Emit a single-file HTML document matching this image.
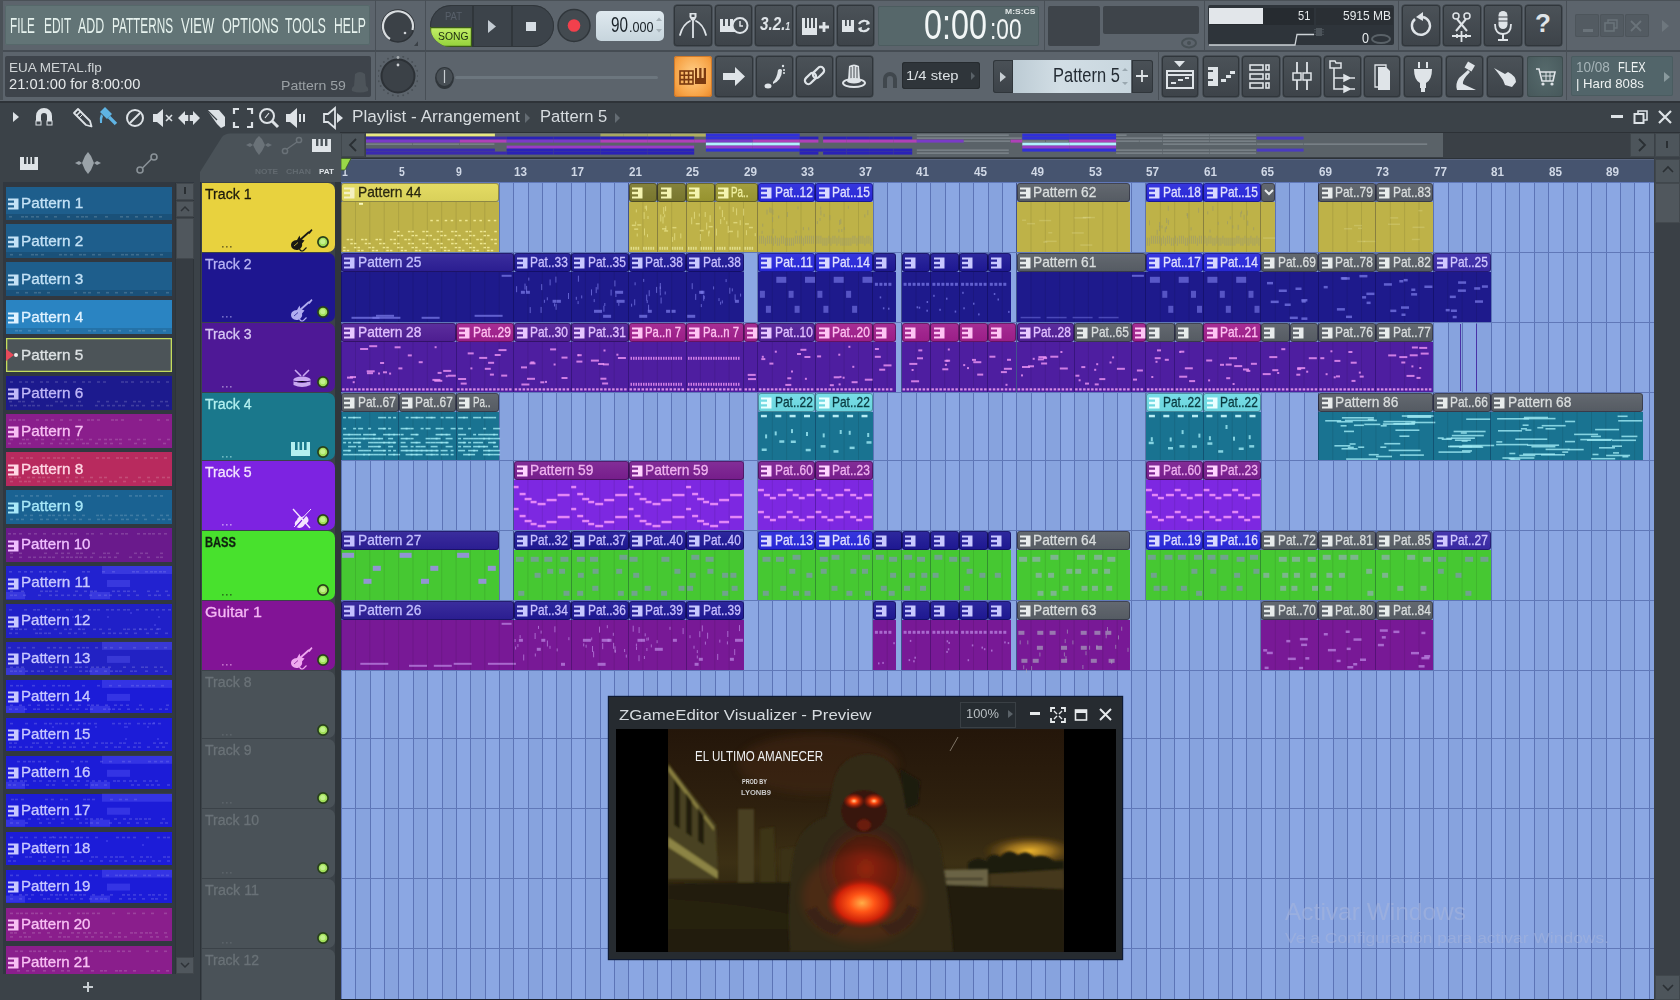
<!DOCTYPE html><html><head><meta charset="utf-8"><style>
html,body{margin:0;padding:0}
body{width:1680px;height:1000px;overflow:hidden;position:relative;background:#5c646c;font-family:"Liberation Sans",sans-serif}
div,svg{position:absolute;box-sizing:border-box}
.t{white-space:nowrap;transform-origin:0 0}
</style></head><body>
<div style="left:0.0px;top:0.0px;width:1680.0px;height:102.0px;background:#5c646c;"></div>
<div style="left:0.0px;top:50.0px;width:1680.0px;height:1.5px;background:#454c53;"></div>
<div style="left:0.0px;top:101.2px;width:1680.0px;height:1.6px;background:#2e3338;"></div>
<div style="left:0.0px;top:0.0px;width:1680.0px;height:1.0px;background:#4a5157;"></div>
<div style="left:375.0px;top:0.0px;width:1.2px;height:50.0px;background:#484f56;"></div>
<div style="left:425.0px;top:0.0px;width:1.2px;height:50.0px;background:#484f56;"></div>
<div style="left:1043.5px;top:0.0px;width:1.2px;height:50.0px;background:#484f56;"></div>
<div style="left:1204.0px;top:0.0px;width:1.2px;height:50.0px;background:#484f56;"></div>
<div style="left:1397.5px;top:0.0px;width:1.2px;height:50.0px;background:#484f56;"></div>
<div style="left:1565.5px;top:0.0px;width:1.2px;height:50.0px;background:#484f56;"></div>
<div style="left:375.0px;top:51.0px;width:1.2px;height:49.0px;background:#484f56;"></div>
<div style="left:425.0px;top:51.0px;width:1.2px;height:49.0px;background:#484f56;"></div>
<div style="left:1157.5px;top:51.0px;width:1.2px;height:49.0px;background:#484f56;"></div>
<div style="left:1565.5px;top:51.0px;width:1.2px;height:49.0px;background:#484f56;"></div>
<div style="left:0.0px;top:0.0px;width:3.0px;height:100.0px;background:#4a5157;"></div>
<div style="left:5.0px;top:5.0px;width:365.0px;height:40.0px;background:#627476;border-radius:2px;box-shadow:inset 0 0 0 1px #56686a;"></div>
<div class="t" style="left:10.2px;top:14.8px;font-size:21.74px;line-height:21.74px;color:#e6f2ee;transform:scaleX(0.540);">FILE</div>
<div class="t" style="left:43.8px;top:14.8px;font-size:21.74px;line-height:21.74px;color:#e6f2ee;transform:scaleX(0.550);">EDIT</div>
<div class="t" style="left:77.5px;top:14.8px;font-size:21.74px;line-height:21.74px;color:#e6f2ee;transform:scaleX(0.572);">ADD</div>
<div class="t" style="left:112.0px;top:14.8px;font-size:21.74px;line-height:21.74px;color:#e6f2ee;transform:scaleX(0.541);">PATTERNS</div>
<div class="t" style="left:180.5px;top:14.8px;font-size:21.74px;line-height:21.74px;color:#e6f2ee;transform:scaleX(0.598);">VIEW</div>
<div class="t" style="left:222.0px;top:14.8px;font-size:21.74px;line-height:21.74px;color:#e6f2ee;transform:scaleX(0.580);">OPTIONS</div>
<div class="t" style="left:285.0px;top:14.8px;font-size:21.74px;line-height:21.74px;color:#e6f2ee;transform:scaleX(0.559);">TOOLS</div>
<div class="t" style="left:333.8px;top:14.8px;font-size:21.74px;line-height:21.74px;color:#e6f2ee;transform:scaleX(0.559);">HELP</div>
<div style="left:5.0px;top:56.3px;width:365.5px;height:40.3px;background:#3e444b;border-radius:2px;"></div>
<div class="t" style="left:9.4px;top:60.5px;font-size:13.62px;line-height:13.62px;color:#d0d4d6;transform:scaleX(0.993);">EUA METAL.flp</div>
<div class="t" style="left:9.4px;top:78.0px;font-size:13.91px;line-height:13.91px;color:#e6e9ea;transform:scaleX(1.056);">21:01:00 for 8:00:00</div>
<div class="t" style="left:280.7px;top:78.7px;font-size:13.04px;line-height:13.04px;color:#9aa0a4;transform:scaleX(1.080);">Pattern 59</div>
<svg style="left:350px;top:70px" width="20" height="24"><path d="M5 4 Q10 0 15 4 L16 16 Q19 18 18 21 Q10 24 2 21 Q1 18 4 16 Z" fill="#4d545a"/></svg>
<svg style="left:378px;top:6px" width="40" height="40"><circle cx="20" cy="20" r="16" fill="#3b4147" stroke="#2e3338" stroke-width="1.5"/><path d="M 12 33 A 15 15 0 1 1 34.5 24" stroke="#d8dcdf" stroke-width="2.2" fill="none"/><circle cx="27" cy="27" r="1.3" fill="#cfd3d6"/><path d="M36 40 L41 34 L41 40 Z" fill="#3a4046"/></svg>
<svg style="left:378px;top:56px" width="40" height="42"><circle cx="40.0" cy="20.0" r="1" fill="#4a5157"/><circle cx="39.3" cy="25.2" r="1" fill="#4a5157"/><circle cx="37.3" cy="30.0" r="1" fill="#4a5157"/><circle cx="34.1" cy="34.1" r="1" fill="#4a5157"/><circle cx="30.0" cy="37.3" r="1" fill="#4a5157"/><circle cx="25.2" cy="39.3" r="1" fill="#4a5157"/><circle cx="20.0" cy="40.0" r="1" fill="#4a5157"/><circle cx="14.8" cy="39.3" r="1" fill="#4a5157"/><circle cx="10.0" cy="37.3" r="1" fill="#4a5157"/><circle cx="5.9" cy="34.1" r="1" fill="#4a5157"/><circle cx="2.7" cy="30.0" r="1" fill="#4a5157"/><circle cx="0.7" cy="25.2" r="1" fill="#4a5157"/><circle cx="0.0" cy="20.0" r="1" fill="#4a5157"/><circle cx="0.7" cy="14.8" r="1" fill="#4a5157"/><circle cx="2.7" cy="10.0" r="1" fill="#4a5157"/><circle cx="5.9" cy="5.9" r="1" fill="#4a5157"/><circle cx="10.0" cy="2.7" r="1" fill="#4a5157"/><circle cx="14.8" cy="0.7" r="1" fill="#4a5157"/><circle cx="20.0" cy="0.0" r="1" fill="#4a5157"/><circle cx="25.2" cy="0.7" r="1" fill="#4a5157"/><circle cx="30.0" cy="2.7" r="1" fill="#4a5157"/><circle cx="34.1" cy="5.9" r="1" fill="#4a5157"/><circle cx="37.3" cy="10.0" r="1" fill="#4a5157"/><circle cx="39.3" cy="14.8" r="1" fill="#4a5157"/><circle cx="20" cy="20" r="16.5" fill="#3b4147" stroke="#2c3136" stroke-width="2"/><circle cx="20" cy="9" r="1.4" fill="#cfd3d6"/><circle cx="20" cy="1.5" r="1.4" fill="#a8aeb2"/></svg>
<div style="left:430px;top:5px;width:124px;height:41.5px;border-radius:21px;background:#3c434a;box-shadow:inset 0 0 0 1px #30363b;overflow:hidden"><div style="left:0;top:21.5px;width:42px;height:20px;background:linear-gradient(#c6f06a,#92d23a);border-radius:0 0 0 4px;box-shadow:inset 0 0 0 1.2px #3a5a18"></div><div style="left:42px;top:0;width:1.5px;height:42px;background:#30363b"></div><div style="left:81px;top:0;width:1.5px;height:42px;background:#30363b"></div></div>
<div class="t" style="left:444.8px;top:10.9px;font-size:11.01px;line-height:11.01px;color:#58606a;transform:scaleX(0.859);">PAT</div>
<div class="t" style="left:437.8px;top:30.9px;font-size:10.72px;line-height:10.72px;color:#1c2a10;transform:scaleX(0.966);">SONG</div>
<svg style="left:486px;top:18px" width="12" height="17"><path d="M2 2 L10 8.5 L2 15 Z" fill="#c4ccd3"/></svg>
<div style="left:526.0px;top:21.7px;width:10.0px;height:9.5px;background:#d6dde3;"></div>
<svg style="left:556px;top:8px" width="36" height="36"><circle cx="18" cy="17.5" r="16" fill="#434a50" stroke="#30363b" stroke-width="1.5"/><circle cx="18" cy="17.5" r="6.3" fill="#f2404c"/></svg>
<div style="left:596.0px;top:10.5px;width:68.0px;height:30.0px;background:linear-gradient(#dfe9ef,#c7d5dd);border-radius:5px;"></div>
<div class="t" style="left:611.0px;top:13.8px;font-size:22.03px;line-height:22.03px;color:#1a2228;transform:scaleX(0.694);">90</div>
<div class="t" style="left:628.5px;top:20.2px;font-size:14.49px;line-height:14.49px;color:#1a2228;transform:scaleX(0.869);">.000</div>
<svg style="left:655px;top:16px" width="8" height="20"><path d="M1 5 L4 1.5 L7 5 Z M1 13 L4 16.5 L7 13 Z" fill="#a8b4bb"/></svg>
<div style="left:455.0px;top:75.8px;width:203.0px;height:3.0px;background:#6c767e;border-radius:2px;"></div>
<svg style="left:433px;top:66px" width="24" height="25"><ellipse cx="11.5" cy="12" rx="9.5" ry="11" fill="#30363b"/><ellipse cx="11.5" cy="11" rx="8" ry="9" fill="#474e54"/><line x1="11.5" y1="4" x2="11.5" y2="17" stroke="#c8ced2" stroke-width="1.2"/></svg>
<div style="left:674.2px;top:5.2px;width:37.7px;height:40.4px;background:linear-gradient(#4b5258,#3d4349);border-radius:3px;box-shadow:inset 0 0 0 1px #30363b, 0 0 0 0.5px #353b40;"></div>
<div style="left:715.4px;top:5.2px;width:36.3px;height:40.4px;background:linear-gradient(#4b5258,#3d4349);border-radius:3px;box-shadow:inset 0 0 0 1px #30363b, 0 0 0 0.5px #353b40;"></div>
<div style="left:755.4px;top:5.2px;width:37.3px;height:40.4px;background:linear-gradient(#4b5258,#3d4349);border-radius:3px;box-shadow:inset 0 0 0 1px #30363b, 0 0 0 0.5px #353b40;"></div>
<div style="left:796.4px;top:5.2px;width:37.3px;height:40.4px;background:linear-gradient(#4b5258,#3d4349);border-radius:3px;box-shadow:inset 0 0 0 1px #30363b, 0 0 0 0.5px #353b40;"></div>
<div style="left:837.2px;top:5.2px;width:36.7px;height:40.4px;background:linear-gradient(#4b5258,#3d4349);border-radius:3px;box-shadow:inset 0 0 0 1px #30363b, 0 0 0 0.5px #353b40;"></div>
<div style="left:1402.1px;top:5.2px;width:37.9px;height:40.4px;background:linear-gradient(#4b5258,#3d4349);border-radius:3px;box-shadow:inset 0 0 0 1px #30363b, 0 0 0 0.5px #353b40;"></div>
<div style="left:1443.3px;top:5.2px;width:37.4px;height:40.4px;background:linear-gradient(#4b5258,#3d4349);border-radius:3px;box-shadow:inset 0 0 0 1px #30363b, 0 0 0 0.5px #353b40;"></div>
<div style="left:1484.0px;top:5.2px;width:37.9px;height:40.4px;background:linear-gradient(#4b5258,#3d4349);border-radius:3px;box-shadow:inset 0 0 0 1px #30363b, 0 0 0 0.5px #353b40;"></div>
<div style="left:1525.3px;top:5.2px;width:36.3px;height:40.4px;background:linear-gradient(#4b5258,#3d4349);border-radius:3px;box-shadow:inset 0 0 0 1px #30363b, 0 0 0 0.5px #353b40;"></div>
<div style="left:674.0px;top:56.3px;width:38.0px;height:40.5px;background:radial-gradient(ellipse at 50% 45%,#ffd08a,#f7a244 70%,#e8862a);border-radius:3px;box-shadow:inset 0 0 0 1px #d07a2a;"></div>
<div style="left:715.4px;top:56.3px;width:37.3px;height:40.5px;background:linear-gradient(#4b5258,#3d4349);border-radius:3px;box-shadow:inset 0 0 0 1px #30363b, 0 0 0 0.5px #353b40;"></div>
<div style="left:756.0px;top:56.3px;width:36.7px;height:40.5px;background:linear-gradient(#4b5258,#3d4349);border-radius:3px;box-shadow:inset 0 0 0 1px #30363b, 0 0 0 0.5px #353b40;"></div>
<div style="left:796.0px;top:56.3px;width:36.6px;height:40.5px;background:linear-gradient(#4b5258,#3d4349);border-radius:3px;box-shadow:inset 0 0 0 1px #30363b, 0 0 0 0.5px #353b40;"></div>
<div style="left:836.0px;top:56.3px;width:36.8px;height:40.5px;background:linear-gradient(#4b5258,#3d4349);border-radius:3px;box-shadow:inset 0 0 0 1px #30363b, 0 0 0 0.5px #353b40;"></div>
<div style="left:1161.5px;top:56.3px;width:36.8px;height:40.5px;background:linear-gradient(#4b5258,#3d4349);border-radius:3px;box-shadow:inset 0 0 0 1px #30363b, 0 0 0 0.5px #353b40;"></div>
<div style="left:1202.5px;top:56.3px;width:36.0px;height:40.5px;background:linear-gradient(#4b5258,#3d4349);border-radius:3px;box-shadow:inset 0 0 0 1px #30363b, 0 0 0 0.5px #353b40;"></div>
<div style="left:1242.2px;top:56.3px;width:37.4px;height:40.5px;background:linear-gradient(#4b5258,#3d4349);border-radius:3px;box-shadow:inset 0 0 0 1px #30363b, 0 0 0 0.5px #353b40;"></div>
<div style="left:1283.3px;top:56.3px;width:37.4px;height:40.5px;background:linear-gradient(#4b5258,#3d4349);border-radius:3px;box-shadow:inset 0 0 0 1px #30363b, 0 0 0 0.5px #353b40;"></div>
<div style="left:1324.4px;top:56.3px;width:36.3px;height:40.5px;background:linear-gradient(#4b5258,#3d4349);border-radius:3px;box-shadow:inset 0 0 0 1px #30363b, 0 0 0 0.5px #353b40;"></div>
<div style="left:1364.4px;top:56.3px;width:36.0px;height:40.5px;background:linear-gradient(#4b5258,#3d4349);border-radius:3px;box-shadow:inset 0 0 0 1px #30363b, 0 0 0 0.5px #353b40;"></div>
<div style="left:1404.3px;top:56.3px;width:37.3px;height:40.5px;background:linear-gradient(#4b5258,#3d4349);border-radius:3px;box-shadow:inset 0 0 0 1px #30363b, 0 0 0 0.5px #353b40;"></div>
<div style="left:1445.6px;top:56.3px;width:37.3px;height:40.5px;background:linear-gradient(#4b5258,#3d4349);border-radius:3px;box-shadow:inset 0 0 0 1px #30363b, 0 0 0 0.5px #353b40;"></div>
<div style="left:1486.6px;top:56.3px;width:36.0px;height:40.5px;background:linear-gradient(#4b5258,#3d4349);border-radius:3px;box-shadow:inset 0 0 0 1px #30363b, 0 0 0 0.5px #353b40;"></div>
<div style="left:1527.3px;top:56.3px;width:35.3px;height:40.5px;background:radial-gradient(ellipse at 50% 40%,#566a6c,#46575a);border-radius:3px;box-shadow:inset 0 0 0 1px #3e4c4e;"></div>
<svg style="left:674px;top:5px" width="38" height="40"><path d="M6 30 Q9 19 16 16 M22 16 Q29 19 32 30" stroke="#dfe4e8" stroke-width="1.8" fill="none" stroke-linecap="round"/><path d="M19 14 L19 33" stroke="#dfe4e8" stroke-width="1.8"/><path d="M15.5 8 H22.5 V12 L20.5 15.5 H17.5 L15.5 12 Z" fill="#dfe4e8"/><rect x="17.5" y="9.5" width="3" height="2.5" fill="#444b51"/></svg>
<svg style="left:715px;top:5px" width="37" height="40"><path d="M5 14 H22 V27 H5 Z" fill="#dfe4e8"/><rect x="8" y="14" width="2" height="7" fill="#444b51"/><rect x="13" y="14" width="2" height="7" fill="#444b51"/><rect x="18" y="14" width="2" height="7" fill="#444b51"/><circle cx="25" cy="20.5" r="7.5" fill="#444b51" stroke="#dfe4e8" stroke-width="2"/><path d="M25 16 V21 H28" stroke="#dfe4e8" stroke-width="1.5" fill="none"/></svg>
<div class="t" style="left:760px;top:13.5px;font-size:19px;line-height:19px;color:#dfe4e8;font-style:italic;font-weight:bold;transform:scaleX(0.8)">3.2.<span style="font-size:11px">1</span></div>
<svg style="left:796px;top:5px" width="38" height="40"><path d="M6 13 H21 V30 H6 Z" fill="#dfe4e8"/><rect x="9" y="13" width="2" height="10" fill="#444b51"/><rect x="13" y="13" width="2" height="10" fill="#444b51"/><rect x="17" y="13" width="2" height="10" fill="#444b51"/><path d="M23 22 H33 M28 17 V27" stroke="#dfe4e8" stroke-width="2.8"/></svg>
<svg style="left:837px;top:5px" width="37" height="40"><path d="M5 15 H17 V27 H5 Z" fill="#dfe4e8"/><rect x="8" y="15" width="1.8" height="6" fill="#444b51"/><rect x="12" y="15" width="1.8" height="6" fill="#444b51"/><path d="M22 19 A6 6 0 0 1 32 18 M32 23 A6 6 0 0 1 22 24" stroke="#dfe4e8" stroke-width="2.2" fill="none"/><path d="M30 15 L33 19 L29 20 Z M24 27 L21 23 L25 22 Z" fill="#dfe4e8"/></svg>
<svg style="left:1402px;top:5px" width="38" height="40"><path d="M13 14 A9 9 0 1 0 21 12" stroke="#dfe4e8" stroke-width="2.4" fill="none"/><path d="M21 7 L14 12 L21 16 Z" fill="#dfe4e8"/></svg>
<svg style="left:1443px;top:5px" width="37" height="40"><circle cx="13" cy="11" r="3" stroke="#dfe4e8" stroke-width="1.5" fill="none"/><circle cx="24" cy="11" r="3" stroke="#dfe4e8" stroke-width="1.5" fill="none"/><path d="M14 14 L24 26 M23 14 L13 26" stroke="#dfe4e8" stroke-width="2"/><path d="M9 31 H28 M18.5 26 V37 M14 29 V33 M23 29 V33" stroke="#dfe4e8" stroke-width="1.8"/></svg>
<svg style="left:1484px;top:5px" width="38" height="40"><rect x="14.5" y="6" width="9" height="18" rx="4.5" fill="#dfe4e8"/><path d="M14 12 H24 M14 16 H24" stroke="#444b51" stroke-width="1"/><path d="M11 19 Q11 29 19 29 Q27 29 27 19" stroke="#dfe4e8" stroke-width="1.8" fill="none"/><path d="M19 29 V34 M14 35 H24" stroke="#dfe4e8" stroke-width="2"/></svg>
<div class="t" style="left:1535px;top:10px;font-size:26px;line-height:26px;color:#dfe4e8;font-weight:bold">?</div>
<svg style="left:674px;top:56px" width="38" height="41"><g fill="none" stroke="#7a3a10" stroke-width="1.6"><rect x="6" y="15" width="13" height="13"/><path d="M10.3 15 V28 M14.6 15 V28 M6 19.3 H19 M6 23.6 H19"/></g><path d="M21 12 H32 V28 H21 Z" fill="#7a3a10"/><rect x="23" y="12" width="2.2" height="10" fill="#fbc27a"/><rect x="27.5" y="12" width="2.2" height="10" fill="#fbc27a"/></svg>
<svg style="left:715px;top:56px" width="38" height="41"><path d="M8 17 H20 V11 L30 20.5 L20 30 V24 H8 Z" fill="#dfe4e8"/></svg>
<svg style="left:756px;top:56px" width="37" height="41"><ellipse cx="12" cy="30" rx="3.5" ry="2.5" fill="#dfe4e8"/><path d="M17 26 Q21 22 22 14 Q24 12 26 14 Q26 24 17 28 Z" fill="#dfe4e8"/><circle cx="27" cy="10" r="1.2" fill="#dfe4e8"/><circle cx="28" cy="14" r="1" fill="#dfe4e8"/><circle cx="28" cy="17" r="1" fill="#dfe4e8"/></svg>
<svg style="left:796px;top:56px" width="37" height="41"><g fill="none" stroke="#dfe4e8" stroke-width="2.2"><rect x="8" y="19" width="13" height="7" rx="3.5" transform="rotate(-45 14.5 22.5)"/><rect x="16" y="13" width="13" height="7" rx="3.5" transform="rotate(-45 22.5 16.5)"/></g></svg>
<svg style="left:836px;top:56px" width="37" height="41"><path d="M13 10 Q18 7 23 10 L24 24 L12 24 Z" fill="#dfe4e8"/><path d="M15 11 V23 M18 10 V23 M21 11 V23" stroke="#444b51" stroke-width="1"/><ellipse cx="18" cy="27" rx="11" ry="4" fill="none" stroke="#dfe4e8" stroke-width="2"/><ellipse cx="18" cy="25" rx="7" ry="2.5" fill="#dfe4e8"/></svg>
<svg style="left:1161px;top:56px" width="38" height="41"><path d="M13 5 H24 L18.5 11 Z" fill="#dfe4e8"/><rect x="6" y="15" width="26" height="17" fill="none" stroke="#dfe4e8" stroke-width="2"/><path d="M6 19 H32" stroke="#dfe4e8" stroke-width="2"/><path d="M10 27 H15 M17 24 H22 M24 22 H28" stroke="#dfe4e8" stroke-width="2"/></svg>
<svg style="left:1202px;top:56px" width="37" height="41"><path d="M6 11 H16 V30 H6 Z" fill="#dfe4e8"/><rect x="6" y="14" width="5" height="2" fill="#444b51"/><rect x="6" y="23" width="5" height="2" fill="#444b51"/><rect x="19" y="23" width="5" height="3" fill="#dfe4e8"/><rect x="24" y="19" width="5" height="3" fill="#dfe4e8"/><rect x="28" y="15" width="5" height="3" fill="#dfe4e8"/></svg>
<svg style="left:1242px;top:56px" width="37" height="41"><g fill="none" stroke="#dfe4e8" stroke-width="1.6"><rect x="8" y="9" width="13" height="5"/><rect x="8" y="18" width="13" height="5"/><rect x="8" y="27" width="13" height="5"/><rect x="24" y="9" width="3" height="5"/><rect x="24" y="18" width="3" height="5"/><rect x="24" y="27" width="3" height="5"/></g></svg>
<svg style="left:1283px;top:56px" width="37" height="41"><path d="M14 6 V34 M24 6 V34" stroke="#dfe4e8" stroke-width="1.8"/><rect x="10" y="17" width="8" height="7" fill="#444b51" stroke="#dfe4e8" stroke-width="1.5"/><rect x="20" y="17" width="8" height="7" fill="#444b51" stroke="#dfe4e8" stroke-width="1.5"/></svg>
<svg style="left:1324px;top:56px" width="37" height="41"><path d="M6 5 H11 L12 7 H17 V12 H6 Z" fill="none" stroke="#dfe4e8" stroke-width="1.5"/><path d="M10 12 V33 H20 M10 22 H20" stroke="#dfe4e8" stroke-width="1.6" fill="none"/><path d="M20 19 L26 22 L20 25 Z M20 30 L26 33 L20 36 Z M25 22 H31 M25 33 H31" fill="#dfe4e8" stroke="#dfe4e8" stroke-width="1.5"/></svg>
<svg style="left:1364px;top:56px" width="37" height="41"><path d="M11 9 H22 V31 H11 Z" fill="none" stroke="#dfe4e8" stroke-width="1.3"/><path d="M14 11 H22 L26 15 V34 H14 Z" fill="#dfe4e8"/></svg>
<svg style="left:1404px;top:56px" width="38" height="41"><path d="M15 6 V12 M23 6 V12" stroke="#dfe4e8" stroke-width="2"/><path d="M10 13 H28 Q28 24 22 27 V32 H16 V27 Q10 24 10 13 Z" fill="#dfe4e8"/><rect x="17" y="32" width="4" height="4" fill="#dfe4e8"/></svg>
<svg style="left:1445px;top:56px" width="38" height="41"><rect x="21" y="7" width="8" height="7" transform="rotate(30 25 10)" fill="#dfe4e8"/><path d="M23 14 L14 22 Q10 28 12 34 H31 L18 28 Q17 24 25 16 Z" fill="#dfe4e8"/></svg>
<svg style="left:1486px;top:56px" width="37" height="41"><path d="M8 12 L19 18 L22 16 Q30 20 30 26 L26 31 L19 29 L17 24 L12 17 Z" fill="#dfe4e8"/></svg>
<svg style="left:1527px;top:56px" width="36" height="41"><path d="M9 13 H12 L15 25 H26 L28 16 H13" fill="none" stroke="#dfe4e8" stroke-width="1.6"/><path d="M15 20 H27 M19 16 V25 M23 16 V25" stroke="#dfe4e8" stroke-width="1"/><circle cx="16" cy="28" r="1.6" fill="#dfe4e8"/><circle cx="25" cy="28" r="1.6" fill="#dfe4e8"/></svg>
<div style="left:878.0px;top:5.7px;width:161.0px;height:40.0px;background:#56676a;border-radius:2px;box-shadow:inset 0 0 0 1px #4c5c5f;"></div>
<div class="t" style="left:923.6px;top:3.6px;font-size:42.46px;line-height:42.46px;color:#f2f6f6;transform:scaleX(0.762);">0:00</div>
<div class="t" style="left:990.4px;top:14.9px;font-size:28.99px;line-height:28.99px;color:#f2f6f6;transform:scaleX(0.782);">:00</div>
<div class="t" style="left:1004.6px;top:8.0px;font-size:7.54px;line-height:7.54px;color:#e0e6e6;transform:scaleX(1.138);font-weight:bold;">M:S:CS</div>
<div style="left:1048.0px;top:5.5px;width:52.0px;height:40.0px;background:#3e444a;border-radius:2px;"></div>
<div style="left:1103.0px;top:5.5px;width:96.0px;height:28.0px;background:#3e444a;border-radius:2px;"></div>
<svg style="left:1180px;top:37px" width="18" height="12"><ellipse cx="9" cy="6" rx="7" ry="4.5" fill="none" stroke="#475055" stroke-width="2"/><circle cx="9" cy="6" r="2" fill="#475055"/></svg>
<div style="left:1208.0px;top:5.2px;width:186.0px;height:40.3px;background:#2e343a;border-radius:2px;"></div>
<div style="left:1209.5px;top:7.5px;width:104.0px;height:17.5px;background:#262b30;"></div>
<div style="left:1315.5px;top:7.5px;width:77.0px;height:17.5px;background:#2a2f34;"></div>
<div style="left:1209.4px;top:8.2px;width:53.6px;height:15.8px;background:#e2e6ea;"></div>
<div class="t" style="left:1298.4px;top:9.1px;font-size:13.48px;line-height:13.48px;color:#e6eaec;transform:scaleX(0.821);">51</div>
<div class="t" style="left:1342.8px;top:9.1px;font-size:13.48px;line-height:13.48px;color:#e6eaec;transform:scaleX(0.890);">5915 MB</div>
<div class="t" style="left:1361.9px;top:29.5px;font-size:15.36px;line-height:15.36px;color:#e6eaec;transform:scaleX(0.819);">0</div>
<svg style="left:1208px;top:25px" width="190" height="21"><polyline points="1,20 87,20 89,9.5 106,9.5" fill="none" stroke="#cdd2d6" stroke-width="1.3"/><rect x="108" y="3" width="6" height="8" fill="#4d545a"/><path d="M106 4.5 H116 M106 7 H116 M106 9.5 H116" stroke="#4d545a" stroke-width="0.8"/><ellipse cx="173" cy="14" rx="9" ry="4" fill="none" stroke="#5a6268" stroke-width="2"/></svg>
<div style="left:1575.2px;top:14.4px;width:23.4px;height:23.0px;background:#535b62;border-radius:2px;box-shadow:inset 0 0 0 1px #4d555b;"></div>
<div style="left:1599.6px;top:14.4px;width:24.1px;height:23.0px;background:#535b62;border-radius:2px;box-shadow:inset 0 0 0 1px #4d555b;"></div>
<div style="left:1624.7px;top:14.4px;width:24.3px;height:23.0px;background:#535b62;border-radius:2px;box-shadow:inset 0 0 0 1px #4d555b;"></div>
<div style="left:1583.0px;top:29.0px;width:10.0px;height:2.5px;background:#6a737a;"></div>
<svg style="left:1603px;top:18px" width="16" height="16"><rect x="2" y="5" width="9" height="8" fill="none" stroke="#6a737a" stroke-width="1.6"/><path d="M5 5 V2 H14 V10 H11" fill="none" stroke="#6a737a" stroke-width="1.4"/></svg>
<svg style="left:1628px;top:18px" width="16" height="16"><path d="M3 3 L13 13 M13 3 L3 13" stroke="#6a737a" stroke-width="1.8"/></svg>
<svg style="left:1660px;top:18px" width="12" height="16"><path d="M2 2 L9 8 L2 14 Z" fill="#6e777e"/></svg>
<svg style="left:880px;top:70px" width="20" height="20"><path d="M3 18 V9 A7 7 0 0 1 17 9 V18 H13 V9 A3 3 0 0 0 7 9 V18 Z" fill="#40474d"/></svg>
<div style="left:902.4px;top:62.3px;width:78.0px;height:26.7px;background:#2f353a;border-radius:3px;box-shadow:inset 0 0 0 1px #262b2f;"></div>
<div class="t" style="left:906.4px;top:68.8px;font-size:13.33px;line-height:13.33px;color:#dde2e5;transform:scaleX(1.109);">1/4 step</div>
<svg style="left:969px;top:69px" width="8" height="14"><path d="M2 3 L6 7 L2 11 Z" fill="#5a6268"/></svg>
<div style="left:992.5px;top:60.3px;width:20.2px;height:33.2px;background:linear-gradient(#4a5157,#3c4248);border-radius:3px 0 0 3px;box-shadow:inset 0 0 0 1px #30363b;"></div>
<svg style="left:997px;top:69px" width="12" height="16"><path d="M3 3 L9 8 L3 13 Z" fill="#c8cfd4"/></svg>
<div style="left:1012.7px;top:60.3px;width:118.8px;height:33.2px;background:linear-gradient(90deg,#bccbd4,#d2dee5 40%,#c8d6de);"></div>
<div class="t" style="left:1053.2px;top:64.6px;font-size:20.58px;line-height:20.58px;color:#242c34;transform:scaleX(0.800);">Pattern 5</div>
<svg style="left:1121px;top:66px" width="8" height="22"><path d="M1 5 L4 2 L7 5 Z M1 16 L4 19 L7 16 Z" fill="#9aa8b0"/></svg>
<div style="left:1131.5px;top:60.3px;width:21.3px;height:33.2px;background:linear-gradient(#4a5157,#3c4248);border-radius:0 3px 3px 0;box-shadow:inset 0 0 0 1px #30363b;"></div>
<svg style="left:1134px;top:68px" width="16" height="16"><path d="M8 2 V14 M2 8 H14" stroke="#dfe4e7" stroke-width="1.8"/></svg>
<div style="left:1571.4px;top:56.3px;width:102.0px;height:40.1px;background:#52656a;border-radius:2px;box-shadow:inset 0 0 0 1px #4a5c60;"></div>
<div class="t" style="left:1575.7px;top:60.2px;font-size:14.06px;line-height:14.06px;color:#a6b4b8;transform:scaleX(0.964);">10/08</div>
<div class="t" style="left:1618.0px;top:60.2px;font-size:14.06px;line-height:14.06px;color:#f0f4f4;transform:scaleX(0.788);">FLEX</div>
<div class="t" style="left:1575.7px;top:77.3px;font-size:13.19px;line-height:13.19px;color:#eef2f2;transform:scaleX(0.998);">| Hard 808s</div>
<svg style="left:1662px;top:70px" width="10" height="14"><path d="M2 2 L8 7 L2 12 Z" fill="#8a9a9e"/></svg>
<div style="left:0.0px;top:102.8px;width:1680.0px;height:897.2px;background:#3b4248;"></div>
<div style="left:340.0px;top:132.0px;width:1340.0px;height:1.0px;background:#2c3136;"></div>
<svg style="left:10px;top:108px" width="12" height="18"><path d="M3 4 L9 9 L3 14 Z" fill="#dde2e6"/></svg>
<svg style="left:33px;top:106px" width="22" height="22"><path d="M3 19 V10 A8 8 0 0 1 19 10 V19 H14 V10 A3 3 0 0 0 8 10 V19 Z" fill="#dde2e6"/><rect x="3" y="15" width="5" height="4" fill="#3b4248" stroke="#dde2e6" stroke-width="1"/><rect x="14" y="15" width="5" height="4" fill="#3b4248" stroke="#dde2e6" stroke-width="1"/></svg>
<svg style="left:72px;top:107px" width="22" height="22"><path d="M2 6 L6 2 L18 14 L19.5 19.5 L14 18 Z" fill="none" stroke="#dde2e6" stroke-width="1.8" stroke-linejoin="round"/><path d="M4.5 8.5 L8.5 4.5" stroke="#dde2e6" stroke-width="1.6"/><path d="M7 11 L11 7" stroke="#dde2e6" stroke-width="1"/></svg>
<svg style="left:97px;top:106px" width="24" height="24"><path d="M3 6 L8 1 L15 8 L10 13 Z" fill="#5fb4e4"/><path d="M4 8 Q2 12 3 17 L5 17 Q5 12 6 10 Z" fill="#5fb4e4"/><path d="M12 11 L19 18" stroke="#5fb4e4" stroke-width="3.2"/><circle cx="19.5" cy="19.5" r="1.3" fill="#3b4248"/></svg>
<svg style="left:124px;top:107px" width="22" height="22"><circle cx="11" cy="11" r="8" fill="none" stroke="#dde2e6" stroke-width="2"/><path d="M6 16 L16 6" stroke="#dde2e6" stroke-width="2"/></svg>
<svg style="left:151px;top:106px" width="24" height="24"><path d="M2 8 H6 L12 3 V21 L6 16 H2 Z" fill="#dde2e6"/><path d="M15 9 L21 15 M21 9 L15 15" stroke="#dde2e6" stroke-width="1.6"/></svg>
<svg style="left:177px;top:107px" width="24" height="22"><path d="M1 11 L8 4 V18 Z M23 11 L16 4 V18 Z" fill="#dde2e6"/><path d="M8 8 H16 V14 H8 Z" fill="#dde2e6"/><path d="M12 4 V18" stroke="#3b4248" stroke-width="1.5"/></svg>
<svg style="left:205px;top:107px" width="22" height="22"><path d="M2 3 L14 3 L20 10 L20 19 L16 21 L12 17 Z" fill="#dde2e6"/><path d="M2 3 L12 13" stroke="#3b4248" stroke-width="1.2"/></svg>
<svg style="left:232px;top:107px" width="22" height="22"><path d="M2 7 V2 H7 M15 2 H20 V7 M20 15 V20 H15 M7 20 H2 V15" fill="none" stroke="#dde2e6" stroke-width="2.2"/></svg>
<svg style="left:258px;top:107px" width="22" height="22"><circle cx="9" cy="9" r="7" fill="none" stroke="#dde2e6" stroke-width="2"/><path d="M14 14 L20 20" stroke="#dde2e6" stroke-width="3"/><path d="M7 11 L11 6" stroke="#dde2e6" stroke-width="1.2"/></svg>
<svg style="left:285px;top:106px" width="22" height="24"><path d="M1 8 H5 L12 2 V22 L5 16 H1 Z" fill="#dde2e6"/><path d="M15 8 V16 M19 8 V16" stroke="#dde2e6" stroke-width="2"/></svg>
<svg style="left:321px;top:106px" width="24" height="24"><path d="M3 8 H7 L14 2 V22 L7 16 H3 Z" fill="none" stroke="#dde2e6" stroke-width="1.8"/><path d="M16 7 L22 12 L16 17 Z" fill="#dde2e6"/></svg>
<div class="t" style="left:352.4px;top:108.8px;font-size:15.65px;line-height:15.65px;color:#d8dde0;transform:scaleX(1.097);">Playlist - Arrangement</div>
<svg style="left:524px;top:111px" width="8" height="14"><path d="M1 2 L6 7 L1 12 Z" fill="#646c73"/></svg>
<div class="t" style="left:540.2px;top:108.8px;font-size:15.65px;line-height:15.65px;color:#d8dde0;transform:scaleX(1.058);">Pattern 5</div>
<svg style="left:614px;top:111px" width="8" height="14"><path d="M1 2 L6 7 L1 12 Z" fill="#646c73"/></svg>
<div style="left:1611.0px;top:115.0px;width:12.0px;height:3.0px;background:#dde2e6;"></div>
<svg style="left:1633px;top:109px" width="16" height="16"><rect x="1.5" y="5" width="9" height="9" fill="none" stroke="#dde2e6" stroke-width="2"/><path d="M5 5 V2 H14 V11 H11" fill="none" stroke="#dde2e6" stroke-width="1.6"/></svg>
<svg style="left:1657px;top:109px" width="16" height="16"><path d="M2 2 L14 14 M14 2 L2 14" stroke="#dde2e6" stroke-width="2.2"/></svg>
<svg style="left:18px;top:154px" width="22" height="18"><path d="M2 3 H20 V16 H2 Z" fill="#dfe4e8"/><rect x="6" y="3" width="2.4" height="7" fill="#3b4248"/><rect x="10" y="3" width="2.4" height="7" fill="#3b4248"/><rect x="14" y="3" width="2.4" height="7" fill="#3b4248"/></svg>
<svg style="left:74px;top:151px" width="28" height="24"><path d="M1 12 L5 10 L8 12 L11 5 L14 1 L17 5 L20 12 L23 10 L27 12 L23 14 L20 12 L17 19 L14 23 L11 19 L8 12 L5 14 Z" fill="#9aa2a8"/></svg>
<svg style="left:135px;top:152px" width="24" height="24"><circle cx="5" cy="18" r="3" fill="none" stroke="#8a9298" stroke-width="1.6"/><circle cx="19" cy="5" r="3" fill="none" stroke="#8a9298" stroke-width="1.6"/><path d="M7.5 16 L16.5 7" stroke="#8a9298" stroke-width="1.6"/></svg>
<svg style="left:196px;top:132px" width="145" height="51"><path d="M4 50 L4 40 L26 5 Q29 1.5 34 1.5 L145 1.5 L145 50 Z" fill="#4a5258"/></svg>
<svg style="left:245px;top:136px" width="28" height="20"><path d="M1 9 L5 7 L8 9 L11 3 L14 0 L17 3 L20 9 L23 7 L27 9 L23 11 L20 9 L17 15 L14 19 L11 15 L8 9 L5 11 Z" fill="#6a7278"/></svg>
<svg style="left:281px;top:136px" width="22" height="20"><circle cx="4" cy="15" r="2.6" fill="none" stroke="#6a7278" stroke-width="1.5"/><circle cx="18" cy="4" r="2.6" fill="none" stroke="#6a7278" stroke-width="1.5"/><path d="M6 13 L16 6" stroke="#6a7278" stroke-width="1.5"/></svg>
<svg style="left:311px;top:137px" width="22" height="17"><path d="M1 2 H20 V15 H1 Z" fill="#dfe4e8"/><rect x="5" y="2" width="2.4" height="7" fill="#4a5258"/><rect x="9.5" y="2" width="2.4" height="7" fill="#4a5258"/><rect x="14" y="2" width="2.4" height="7" fill="#4a5258"/></svg>
<div class="t" style="left:254.6px;top:167.6px;font-size:7.54px;line-height:7.54px;color:#626a70;transform:scaleX(1.099);font-weight:bold;">NOTE</div>
<div class="t" style="left:285.6px;top:167.6px;font-size:7.54px;line-height:7.54px;color:#626a70;transform:scaleX(1.148);font-weight:bold;">CHAN</div>
<div class="t" style="left:318.6px;top:167.6px;font-size:7.54px;line-height:7.54px;color:#dfe4e8;transform:scaleX(1.075);font-weight:bold;">PAT</div>
<div style="left:3.0px;top:182.0px;width:193.0px;height:793.0px;background:#313840;"></div>
<div style="left:194.0px;top:182.0px;width:8.0px;height:818.0px;background:#3b4248;"></div>
<div style="left:200.0px;top:182.0px;width:1.2px;height:818.0px;background:#2c3237;"></div>
<div style="left:6.0px;top:186.5px;width:166.0px;height:33.5px;background:#1e5e8c;"></div>
<div style="left:6.0px;top:214.0px;width:166.0px;height:6.0px;background:rgba(0,0,0,0.13);"></div>
<svg style="left:0;top:0" width="180" height="1000"><g fill="rgba(255,255,255,0.16)"><rect x="9" y="216.0" width="3" height="1.6"/><rect x="21" y="216.0" width="3" height="1.6"/><rect x="25" y="216.0" width="3" height="1.6"/><rect x="31" y="216.0" width="3" height="1.6"/><rect x="36" y="216.0" width="3" height="1.6"/><rect x="45" y="216.0" width="3" height="1.6"/><rect x="54" y="216.0" width="3" height="1.6"/><rect x="67" y="216.0" width="3" height="1.6"/><rect x="76" y="216.0" width="3" height="1.6"/><rect x="81" y="216.0" width="3" height="1.6"/><rect x="85" y="216.0" width="3" height="1.6"/><rect x="94" y="216.0" width="3" height="1.6"/><rect x="105" y="216.0" width="3" height="1.6"/><rect x="120" y="216.0" width="3" height="1.6"/><rect x="126" y="216.0" width="3" height="1.6"/><rect x="135" y="216.0" width="3" height="1.6"/><rect x="144" y="216.0" width="3" height="1.6"/><rect x="150" y="216.0" width="3" height="1.6"/><rect x="159" y="216.0" width="3" height="1.6"/></g><g fill="rgba(110,110,255,0.3)"></g></svg>
<svg style="left:7.9px;top:198.0px" width="11" height="12"><path d="M0 0.5 H10.5 V11.5 H0 V9.5 H6 V7.2 H0 V4.8 H6 V2.5 H0 Z" fill="#c4e2f6"/></svg>
<div class="t" style="left:21.3px;top:195.8px;font-size:14.49px;line-height:14.49px;color:#c4e2f6;transform:scaleX(1.058);-webkit-text-stroke:0.3px currentColor;">Pattern 1</div>
<div style="left:6.0px;top:224.4px;width:166.0px;height:33.5px;background:#1e5e8c;"></div>
<div style="left:6.0px;top:251.9px;width:166.0px;height:6.0px;background:rgba(0,0,0,0.13);"></div>
<svg style="left:0;top:0" width="180" height="1000"><g fill="rgba(255,255,255,0.16)"><rect x="10" y="253.9" width="3" height="1.6"/><rect x="19" y="253.9" width="3" height="1.6"/><rect x="31" y="253.9" width="3" height="1.6"/><rect x="35" y="253.9" width="3" height="1.6"/><rect x="41" y="253.9" width="3" height="1.6"/><rect x="59" y="253.9" width="3" height="1.6"/><rect x="64" y="253.9" width="3" height="1.6"/><rect x="70" y="253.9" width="3" height="1.6"/><rect x="79" y="253.9" width="3" height="1.6"/><rect x="83" y="253.9" width="3" height="1.6"/><rect x="92" y="253.9" width="3" height="1.6"/><rect x="98" y="253.9" width="3" height="1.6"/><rect x="112" y="253.9" width="3" height="1.6"/><rect x="121" y="253.9" width="3" height="1.6"/><rect x="125" y="253.9" width="3" height="1.6"/><rect x="131" y="253.9" width="3" height="1.6"/><rect x="136" y="253.9" width="3" height="1.6"/><rect x="145" y="253.9" width="3" height="1.6"/><rect x="151" y="253.9" width="3" height="1.6"/><rect x="160" y="253.9" width="3" height="1.6"/></g><g fill="rgba(110,110,255,0.3)"></g></svg>
<svg style="left:7.9px;top:235.9px" width="11" height="12"><path d="M0 0.5 H10.5 V11.5 H0 V9.5 H6 V7.2 H0 V4.8 H6 V2.5 H0 Z" fill="#c4e2f6"/></svg>
<div class="t" style="left:21.3px;top:233.8px;font-size:14.49px;line-height:14.49px;color:#c4e2f6;transform:scaleX(1.058);-webkit-text-stroke:0.3px currentColor;">Pattern 2</div>
<div style="left:6.0px;top:262.4px;width:166.0px;height:33.5px;background:#1e5e8c;"></div>
<div style="left:6.0px;top:289.9px;width:166.0px;height:6.0px;background:rgba(0,0,0,0.13);"></div>
<svg style="left:0;top:0" width="180" height="1000"><g fill="rgba(255,255,255,0.16)"><rect x="16" y="291.9" width="3" height="1.6"/><rect x="25" y="291.9" width="3" height="1.6"/><rect x="34" y="291.9" width="3" height="1.6"/><rect x="38" y="291.9" width="3" height="1.6"/><rect x="47" y="291.9" width="3" height="1.6"/><rect x="74" y="291.9" width="3" height="1.6"/><rect x="83" y="291.9" width="3" height="1.6"/><rect x="88" y="291.9" width="3" height="1.6"/><rect x="97" y="291.9" width="3" height="1.6"/><rect x="106" y="291.9" width="3" height="1.6"/><rect x="115" y="291.9" width="3" height="1.6"/><rect x="124" y="291.9" width="3" height="1.6"/><rect x="130" y="291.9" width="3" height="1.6"/><rect x="145" y="291.9" width="3" height="1.6"/><rect x="154" y="291.9" width="3" height="1.6"/><rect x="166" y="291.9" width="3" height="1.6"/></g><g fill="rgba(110,110,255,0.3)"></g></svg>
<svg style="left:7.9px;top:273.9px" width="11" height="12"><path d="M0 0.5 H10.5 V11.5 H0 V9.5 H6 V7.2 H0 V4.8 H6 V2.5 H0 Z" fill="#c4e2f6"/></svg>
<div class="t" style="left:21.3px;top:271.7px;font-size:14.49px;line-height:14.49px;color:#c4e2f6;transform:scaleX(1.058);-webkit-text-stroke:0.3px currentColor;">Pattern 3</div>
<div style="left:6.0px;top:300.4px;width:166.0px;height:33.5px;background:#2a84c2;"></div>
<div style="left:6.0px;top:327.9px;width:166.0px;height:6.0px;background:rgba(0,0,0,0.13);"></div>
<svg style="left:0;top:0" width="180" height="1000"><g fill="rgba(255,255,255,0.16)"><rect x="15" y="329.9" width="3" height="1.6"/><rect x="19" y="329.9" width="3" height="1.6"/><rect x="28" y="329.9" width="3" height="1.6"/><rect x="37" y="329.9" width="3" height="1.6"/><rect x="48" y="329.9" width="3" height="1.6"/><rect x="52" y="329.9" width="3" height="1.6"/><rect x="66" y="329.9" width="3" height="1.6"/><rect x="88" y="329.9" width="3" height="1.6"/><rect x="93" y="329.9" width="3" height="1.6"/><rect x="103" y="329.9" width="3" height="1.6"/><rect x="109" y="329.9" width="3" height="1.6"/><rect x="118" y="329.9" width="3" height="1.6"/><rect x="129" y="329.9" width="3" height="1.6"/><rect x="138" y="329.9" width="3" height="1.6"/><rect x="142" y="329.9" width="3" height="1.6"/><rect x="151" y="329.9" width="3" height="1.6"/><rect x="163" y="329.9" width="3" height="1.6"/></g><g fill="rgba(110,110,255,0.3)"></g></svg>
<svg style="left:7.9px;top:311.9px" width="11" height="12"><path d="M0 0.5 H10.5 V11.5 H0 V9.5 H6 V7.2 H0 V4.8 H6 V2.5 H0 Z" fill="#e0f2ff"/></svg>
<div class="t" style="left:21.3px;top:309.7px;font-size:14.49px;line-height:14.49px;color:#e0f2ff;transform:scaleX(1.058);-webkit-text-stroke:0.3px currentColor;">Pattern 4</div>
<div style="left:6.0px;top:338.3px;width:166.0px;height:33.5px;background:#4c5458;box-shadow:inset 0 0 0 1.3px #c4dc5c;"></div>
<svg style="left:3px;top:347.3px" width="16" height="16"><path d="M3 2 L11 8 L3 14 Z" fill="#e84a5a"/><circle cx="13" cy="8" r="2" fill="#f0f0f0"/></svg>
<div class="t" style="left:21.3px;top:347.6px;font-size:14.49px;line-height:14.49px;color:#dde2e4;transform:scaleX(1.058);-webkit-text-stroke:0.3px currentColor;">Pattern 5</div>
<div style="left:6.0px;top:376.2px;width:166.0px;height:33.5px;background:#1c1a8e;"></div>
<svg style="left:0;top:0" width="180" height="1000"><g fill="rgba(255,255,255,0.16)"><rect x="10" y="381.2" width="3" height="1.6"/><rect x="19" y="381.2" width="3" height="1.6"/><rect x="25" y="381.2" width="3" height="1.6"/><rect x="31" y="381.2" width="3" height="1.6"/><rect x="40" y="381.2" width="3" height="1.6"/><rect x="46" y="381.2" width="3" height="1.6"/><rect x="55" y="381.2" width="3" height="1.6"/><rect x="64" y="381.2" width="3" height="1.6"/><rect x="73" y="381.2" width="3" height="1.6"/><rect x="82" y="381.2" width="3" height="1.6"/><rect x="88" y="381.2" width="3" height="1.6"/><rect x="97" y="381.2" width="3" height="1.6"/><rect x="103" y="381.2" width="3" height="1.6"/><rect x="121" y="381.2" width="3" height="1.6"/><rect x="125" y="381.2" width="3" height="1.6"/><rect x="131" y="381.2" width="3" height="1.6"/><rect x="140" y="381.2" width="3" height="1.6"/><rect x="146" y="381.2" width="3" height="1.6"/><rect x="151" y="381.2" width="3" height="1.6"/><rect x="157" y="381.2" width="3" height="1.6"/><rect x="166" y="381.2" width="3" height="1.6"/><rect x="9" y="400.8" width="3" height="1.6"/><rect x="18" y="400.8" width="3" height="1.6"/><rect x="22" y="400.8" width="3" height="1.6"/><rect x="31" y="400.8" width="3" height="1.6"/><rect x="55" y="400.8" width="3" height="1.6"/><rect x="60" y="400.8" width="3" height="1.6"/><rect x="78" y="400.8" width="3" height="1.6"/><rect x="97" y="400.8" width="3" height="1.6"/><rect x="106" y="400.8" width="3" height="1.6"/><rect x="115" y="400.8" width="3" height="1.6"/><rect x="124" y="400.8" width="3" height="1.6"/><rect x="133" y="400.8" width="3" height="1.6"/><rect x="138" y="400.8" width="3" height="1.6"/><rect x="151" y="400.8" width="3" height="1.6"/><rect x="160" y="400.8" width="3" height="1.6"/><rect x="165" y="400.8" width="3" height="1.6"/><rect x="10" y="404.8" width="3" height="1.6"/><rect x="14" y="404.8" width="3" height="1.6"/><rect x="23" y="404.8" width="3" height="1.6"/><rect x="28" y="404.8" width="3" height="1.6"/><rect x="32" y="404.8" width="3" height="1.6"/><rect x="37" y="404.8" width="3" height="1.6"/><rect x="46" y="404.8" width="3" height="1.6"/><rect x="50" y="404.8" width="3" height="1.6"/><rect x="64" y="404.8" width="3" height="1.6"/><rect x="70" y="404.8" width="3" height="1.6"/><rect x="76" y="404.8" width="3" height="1.6"/><rect x="80" y="404.8" width="3" height="1.6"/><rect x="95" y="404.8" width="3" height="1.6"/><rect x="101" y="404.8" width="3" height="1.6"/><rect x="107" y="404.8" width="3" height="1.6"/><rect x="112" y="404.8" width="3" height="1.6"/><rect x="118" y="404.8" width="3" height="1.6"/><rect x="122" y="404.8" width="3" height="1.6"/><rect x="131" y="404.8" width="3" height="1.6"/><rect x="136" y="404.8" width="3" height="1.6"/><rect x="142" y="404.8" width="3" height="1.6"/><rect x="151" y="404.8" width="3" height="1.6"/><rect x="157" y="404.8" width="3" height="1.6"/><rect x="166" y="404.8" width="3" height="1.6"/></g><g fill="rgba(110,110,255,0.3)"></g></svg>
<svg style="left:7.9px;top:387.8px" width="11" height="12"><path d="M0 0.5 H10.5 V11.5 H0 V9.5 H6 V7.2 H0 V4.8 H6 V2.5 H0 Z" fill="#c0b8f8"/></svg>
<div class="t" style="left:21.3px;top:385.6px;font-size:14.49px;line-height:14.49px;color:#c0b8f8;transform:scaleX(1.058);-webkit-text-stroke:0.3px currentColor;">Pattern 6</div>
<div style="left:6.0px;top:414.2px;width:166.0px;height:33.5px;background:#8a1e8c;"></div>
<svg style="left:0;top:0" width="180" height="1000"><g fill="rgba(255,255,255,0.16)"><rect x="9" y="419.2" width="3" height="1.6"/><rect x="13" y="419.2" width="3" height="1.6"/><rect x="18" y="419.2" width="3" height="1.6"/><rect x="22" y="419.2" width="3" height="1.6"/><rect x="36" y="419.2" width="3" height="1.6"/><rect x="45" y="419.2" width="3" height="1.6"/><rect x="51" y="419.2" width="3" height="1.6"/><rect x="60" y="419.2" width="3" height="1.6"/><rect x="69" y="419.2" width="3" height="1.6"/><rect x="78" y="419.2" width="3" height="1.6"/><rect x="87" y="419.2" width="3" height="1.6"/><rect x="91" y="419.2" width="3" height="1.6"/><rect x="97" y="419.2" width="3" height="1.6"/><rect x="111" y="419.2" width="3" height="1.6"/><rect x="115" y="419.2" width="3" height="1.6"/><rect x="121" y="419.2" width="3" height="1.6"/><rect x="139" y="419.2" width="3" height="1.6"/><rect x="157" y="419.2" width="3" height="1.6"/><rect x="166" y="419.2" width="3" height="1.6"/><rect x="10" y="438.7" width="3" height="1.6"/><rect x="22" y="438.7" width="3" height="1.6"/><rect x="26" y="438.7" width="3" height="1.6"/><rect x="35" y="438.7" width="3" height="1.6"/><rect x="41" y="438.7" width="3" height="1.6"/><rect x="52" y="438.7" width="3" height="1.6"/><rect x="61" y="438.7" width="3" height="1.6"/><rect x="67" y="438.7" width="3" height="1.6"/><rect x="76" y="438.7" width="3" height="1.6"/><rect x="80" y="438.7" width="3" height="1.6"/><rect x="89" y="438.7" width="3" height="1.6"/><rect x="98" y="438.7" width="3" height="1.6"/><rect x="104" y="438.7" width="3" height="1.6"/><rect x="109" y="438.7" width="3" height="1.6"/><rect x="115" y="438.7" width="3" height="1.6"/><rect x="119" y="438.7" width="3" height="1.6"/><rect x="128" y="438.7" width="3" height="1.6"/><rect x="137" y="438.7" width="3" height="1.6"/><rect x="143" y="438.7" width="3" height="1.6"/><rect x="158" y="438.7" width="3" height="1.6"/><rect x="167" y="438.7" width="3" height="1.6"/><rect x="8" y="442.7" width="3" height="1.6"/><rect x="19" y="442.7" width="3" height="1.6"/><rect x="23" y="442.7" width="3" height="1.6"/><rect x="28" y="442.7" width="3" height="1.6"/><rect x="41" y="442.7" width="3" height="1.6"/><rect x="50" y="442.7" width="3" height="1.6"/><rect x="59" y="442.7" width="3" height="1.6"/><rect x="65" y="442.7" width="3" height="1.6"/><rect x="71" y="442.7" width="3" height="1.6"/><rect x="82" y="442.7" width="3" height="1.6"/><rect x="86" y="442.7" width="3" height="1.6"/><rect x="95" y="442.7" width="3" height="1.6"/><rect x="104" y="442.7" width="3" height="1.6"/><rect x="110" y="442.7" width="3" height="1.6"/><rect x="119" y="442.7" width="3" height="1.6"/><rect x="134" y="442.7" width="3" height="1.6"/><rect x="143" y="442.7" width="3" height="1.6"/><rect x="163" y="442.7" width="3" height="1.6"/></g><g fill="rgba(110,110,255,0.3)"></g></svg>
<svg style="left:7.9px;top:425.7px" width="11" height="12"><path d="M0 0.5 H10.5 V11.5 H0 V9.5 H6 V7.2 H0 V4.8 H6 V2.5 H0 Z" fill="#f8c0f4"/></svg>
<div class="t" style="left:21.3px;top:423.5px;font-size:14.49px;line-height:14.49px;color:#f8c0f4;transform:scaleX(1.058);-webkit-text-stroke:0.3px currentColor;">Pattern 7</div>
<div style="left:6.0px;top:452.2px;width:166.0px;height:33.5px;background:#b82a5e;"></div>
<svg style="left:0;top:0" width="180" height="1000"><g fill="rgba(255,255,255,0.16)"><rect x="11" y="457.2" width="3" height="1.6"/><rect x="20" y="457.2" width="3" height="1.6"/><rect x="26" y="457.2" width="3" height="1.6"/><rect x="30" y="457.2" width="3" height="1.6"/><rect x="42" y="457.2" width="3" height="1.6"/><rect x="47" y="457.2" width="3" height="1.6"/><rect x="53" y="457.2" width="3" height="1.6"/><rect x="57" y="457.2" width="3" height="1.6"/><rect x="62" y="457.2" width="3" height="1.6"/><rect x="71" y="457.2" width="3" height="1.6"/><rect x="77" y="457.2" width="3" height="1.6"/><rect x="96" y="457.2" width="3" height="1.6"/><rect x="102" y="457.2" width="3" height="1.6"/><rect x="107" y="457.2" width="3" height="1.6"/><rect x="116" y="457.2" width="3" height="1.6"/><rect x="120" y="457.2" width="3" height="1.6"/><rect x="126" y="457.2" width="3" height="1.6"/><rect x="135" y="457.2" width="3" height="1.6"/><rect x="144" y="457.2" width="3" height="1.6"/><rect x="150" y="457.2" width="3" height="1.6"/><rect x="155" y="457.2" width="3" height="1.6"/><rect x="164" y="457.2" width="3" height="1.6"/><rect x="9" y="476.7" width="3" height="1.6"/><rect x="14" y="476.7" width="3" height="1.6"/><rect x="18" y="476.7" width="3" height="1.6"/><rect x="27" y="476.7" width="3" height="1.6"/><rect x="32" y="476.7" width="3" height="1.6"/><rect x="38" y="476.7" width="3" height="1.6"/><rect x="42" y="476.7" width="3" height="1.6"/><rect x="47" y="476.7" width="3" height="1.6"/><rect x="57" y="476.7" width="3" height="1.6"/><rect x="66" y="476.7" width="3" height="1.6"/><rect x="75" y="476.7" width="3" height="1.6"/><rect x="81" y="476.7" width="3" height="1.6"/><rect x="90" y="476.7" width="3" height="1.6"/><rect x="99" y="476.7" width="3" height="1.6"/><rect x="104" y="476.7" width="3" height="1.6"/><rect x="119" y="476.7" width="3" height="1.6"/><rect x="125" y="476.7" width="3" height="1.6"/><rect x="138" y="476.7" width="3" height="1.6"/><rect x="147" y="476.7" width="3" height="1.6"/><rect x="156" y="476.7" width="3" height="1.6"/><rect x="162" y="476.7" width="3" height="1.6"/><rect x="167" y="476.7" width="3" height="1.6"/><rect x="10" y="480.7" width="3" height="1.6"/><rect x="19" y="480.7" width="3" height="1.6"/><rect x="24" y="480.7" width="3" height="1.6"/><rect x="28" y="480.7" width="3" height="1.6"/><rect x="37" y="480.7" width="3" height="1.6"/><rect x="43" y="480.7" width="3" height="1.6"/><rect x="52" y="480.7" width="3" height="1.6"/><rect x="58" y="480.7" width="3" height="1.6"/><rect x="64" y="480.7" width="3" height="1.6"/><rect x="69" y="480.7" width="3" height="1.6"/><rect x="75" y="480.7" width="3" height="1.6"/><rect x="84" y="480.7" width="3" height="1.6"/><rect x="88" y="480.7" width="3" height="1.6"/><rect x="94" y="480.7" width="3" height="1.6"/><rect x="100" y="480.7" width="3" height="1.6"/><rect x="109" y="480.7" width="3" height="1.6"/><rect x="114" y="480.7" width="3" height="1.6"/><rect x="123" y="480.7" width="3" height="1.6"/><rect x="133" y="480.7" width="3" height="1.6"/><rect x="142" y="480.7" width="3" height="1.6"/><rect x="148" y="480.7" width="3" height="1.6"/><rect x="153" y="480.7" width="3" height="1.6"/></g><g fill="rgba(110,110,255,0.3)"></g></svg>
<svg style="left:7.9px;top:463.7px" width="11" height="12"><path d="M0 0.5 H10.5 V11.5 H0 V9.5 H6 V7.2 H0 V4.8 H6 V2.5 H0 Z" fill="#ffd8e4"/></svg>
<div class="t" style="left:21.3px;top:461.5px;font-size:14.49px;line-height:14.49px;color:#ffd8e4;transform:scaleX(1.058);-webkit-text-stroke:0.3px currentColor;">Pattern 8</div>
<div style="left:6.0px;top:490.1px;width:166.0px;height:33.5px;background:#1a6292;"></div>
<svg style="left:0;top:0" width="180" height="1000"><g fill="rgba(255,255,255,0.16)"><rect x="15" y="495.1" width="3" height="1.6"/><rect x="21" y="495.1" width="3" height="1.6"/><rect x="30" y="495.1" width="3" height="1.6"/><rect x="36" y="495.1" width="3" height="1.6"/><rect x="45" y="495.1" width="3" height="1.6"/><rect x="49" y="495.1" width="3" height="1.6"/><rect x="73" y="495.1" width="3" height="1.6"/><rect x="84" y="495.1" width="3" height="1.6"/><rect x="88" y="495.1" width="3" height="1.6"/><rect x="97" y="495.1" width="3" height="1.6"/><rect x="102" y="495.1" width="3" height="1.6"/><rect x="106" y="495.1" width="3" height="1.6"/><rect x="115" y="495.1" width="3" height="1.6"/><rect x="129" y="495.1" width="3" height="1.6"/><rect x="135" y="495.1" width="3" height="1.6"/><rect x="139" y="495.1" width="3" height="1.6"/><rect x="148" y="495.1" width="3" height="1.6"/><rect x="154" y="495.1" width="3" height="1.6"/><rect x="160" y="495.1" width="3" height="1.6"/><rect x="24" y="514.6" width="3" height="1.6"/><rect x="30" y="514.6" width="3" height="1.6"/><rect x="39" y="514.6" width="3" height="1.6"/><rect x="48" y="514.6" width="3" height="1.6"/><rect x="52" y="514.6" width="3" height="1.6"/><rect x="58" y="514.6" width="3" height="1.6"/><rect x="63" y="514.6" width="3" height="1.6"/><rect x="67" y="514.6" width="3" height="1.6"/><rect x="73" y="514.6" width="3" height="1.6"/><rect x="82" y="514.6" width="3" height="1.6"/><rect x="96" y="514.6" width="3" height="1.6"/><rect x="100" y="514.6" width="3" height="1.6"/><rect x="109" y="514.6" width="3" height="1.6"/><rect x="115" y="514.6" width="3" height="1.6"/><rect x="120" y="514.6" width="3" height="1.6"/><rect x="124" y="514.6" width="3" height="1.6"/><rect x="130" y="514.6" width="3" height="1.6"/><rect x="136" y="514.6" width="3" height="1.6"/><rect x="142" y="514.6" width="3" height="1.6"/><rect x="151" y="514.6" width="3" height="1.6"/><rect x="160" y="514.6" width="3" height="1.6"/><rect x="166" y="514.6" width="3" height="1.6"/><rect x="10" y="518.6" width="3" height="1.6"/><rect x="16" y="518.6" width="3" height="1.6"/><rect x="21" y="518.6" width="3" height="1.6"/><rect x="30" y="518.6" width="3" height="1.6"/><rect x="40" y="518.6" width="3" height="1.6"/><rect x="46" y="518.6" width="3" height="1.6"/><rect x="55" y="518.6" width="3" height="1.6"/><rect x="64" y="518.6" width="3" height="1.6"/><rect x="73" y="518.6" width="3" height="1.6"/><rect x="79" y="518.6" width="3" height="1.6"/><rect x="88" y="518.6" width="3" height="1.6"/><rect x="97" y="518.6" width="3" height="1.6"/><rect x="102" y="518.6" width="3" height="1.6"/><rect x="108" y="518.6" width="3" height="1.6"/><rect x="121" y="518.6" width="3" height="1.6"/><rect x="126" y="518.6" width="3" height="1.6"/><rect x="135" y="518.6" width="3" height="1.6"/><rect x="144" y="518.6" width="3" height="1.6"/><rect x="157" y="518.6" width="3" height="1.6"/><rect x="162" y="518.6" width="3" height="1.6"/><rect x="168" y="518.6" width="3" height="1.6"/></g><g fill="rgba(110,110,255,0.3)"></g></svg>
<svg style="left:7.9px;top:501.6px" width="11" height="12"><path d="M0 0.5 H10.5 V11.5 H0 V9.5 H6 V7.2 H0 V4.8 H6 V2.5 H0 Z" fill="#a8e8f8"/></svg>
<div class="t" style="left:21.3px;top:499.4px;font-size:14.49px;line-height:14.49px;color:#a8e8f8;transform:scaleX(1.058);-webkit-text-stroke:0.3px currentColor;">Pattern 9</div>
<div style="left:6.0px;top:528.0px;width:166.0px;height:33.5px;background:#6a1a8c;"></div>
<svg style="left:0;top:0" width="180" height="1000"><g fill="rgba(255,255,255,0.16)"><rect x="8" y="533.0" width="3" height="1.6"/><rect x="13" y="533.0" width="3" height="1.6"/><rect x="19" y="533.0" width="3" height="1.6"/><rect x="28" y="533.0" width="3" height="1.6"/><rect x="34" y="533.0" width="3" height="1.6"/><rect x="43" y="533.0" width="3" height="1.6"/><rect x="52" y="533.0" width="3" height="1.6"/><rect x="58" y="533.0" width="3" height="1.6"/><rect x="64" y="533.0" width="3" height="1.6"/><rect x="70" y="533.0" width="3" height="1.6"/><rect x="74" y="533.0" width="3" height="1.6"/><rect x="86" y="533.0" width="3" height="1.6"/><rect x="91" y="533.0" width="3" height="1.6"/><rect x="100" y="533.0" width="3" height="1.6"/><rect x="109" y="533.0" width="3" height="1.6"/><rect x="115" y="533.0" width="3" height="1.6"/><rect x="121" y="533.0" width="3" height="1.6"/><rect x="125" y="533.0" width="3" height="1.6"/><rect x="137" y="533.0" width="3" height="1.6"/><rect x="143" y="533.0" width="3" height="1.6"/><rect x="148" y="533.0" width="3" height="1.6"/><rect x="152" y="533.0" width="3" height="1.6"/><rect x="158" y="533.0" width="3" height="1.6"/><rect x="164" y="533.0" width="3" height="1.6"/><rect x="10" y="552.5" width="3" height="1.6"/><rect x="19" y="552.5" width="3" height="1.6"/><rect x="44" y="552.5" width="3" height="1.6"/><rect x="55" y="552.5" width="3" height="1.6"/><rect x="61" y="552.5" width="3" height="1.6"/><rect x="67" y="552.5" width="3" height="1.6"/><rect x="76" y="552.5" width="3" height="1.6"/><rect x="80" y="552.5" width="3" height="1.6"/><rect x="92" y="552.5" width="3" height="1.6"/><rect x="103" y="552.5" width="3" height="1.6"/><rect x="107" y="552.5" width="3" height="1.6"/><rect x="116" y="552.5" width="3" height="1.6"/><rect x="134" y="552.5" width="3" height="1.6"/><rect x="140" y="552.5" width="3" height="1.6"/><rect x="145" y="552.5" width="3" height="1.6"/><rect x="160" y="552.5" width="3" height="1.6"/><rect x="10" y="556.5" width="3" height="1.6"/><rect x="19" y="556.5" width="3" height="1.6"/><rect x="28" y="556.5" width="3" height="1.6"/><rect x="33" y="556.5" width="3" height="1.6"/><rect x="39" y="556.5" width="3" height="1.6"/><rect x="43" y="556.5" width="3" height="1.6"/><rect x="48" y="556.5" width="3" height="1.6"/><rect x="52" y="556.5" width="3" height="1.6"/><rect x="61" y="556.5" width="3" height="1.6"/><rect x="66" y="556.5" width="3" height="1.6"/><rect x="70" y="556.5" width="3" height="1.6"/><rect x="75" y="556.5" width="3" height="1.6"/><rect x="79" y="556.5" width="3" height="1.6"/><rect x="84" y="556.5" width="3" height="1.6"/><rect x="90" y="556.5" width="3" height="1.6"/><rect x="99" y="556.5" width="3" height="1.6"/><rect x="103" y="556.5" width="3" height="1.6"/><rect x="108" y="556.5" width="3" height="1.6"/><rect x="114" y="556.5" width="3" height="1.6"/><rect x="129" y="556.5" width="3" height="1.6"/><rect x="138" y="556.5" width="3" height="1.6"/><rect x="147" y="556.5" width="3" height="1.6"/><rect x="156" y="556.5" width="3" height="1.6"/><rect x="160" y="556.5" width="3" height="1.6"/></g><g fill="rgba(110,110,255,0.3)"></g></svg>
<svg style="left:7.9px;top:539.5px" width="11" height="12"><path d="M0 0.5 H10.5 V11.5 H0 V9.5 H6 V7.2 H0 V4.8 H6 V2.5 H0 Z" fill="#f0c0ff"/></svg>
<div class="t" style="left:21.3px;top:537.4px;font-size:14.49px;line-height:14.49px;color:#f0c0ff;transform:scaleX(1.039);-webkit-text-stroke:0.3px currentColor;">Pattern 10</div>
<div style="left:6.0px;top:566.0px;width:166.0px;height:33.5px;background:#2222d0;"></div>
<svg style="left:0;top:0" width="180" height="1000"><g fill="rgba(255,255,255,0.16)"><rect x="9" y="571.0" width="3" height="1.6"/><rect x="18" y="571.0" width="3" height="1.6"/><rect x="24" y="571.0" width="3" height="1.6"/><rect x="30" y="571.0" width="3" height="1.6"/><rect x="39" y="571.0" width="3" height="1.6"/><rect x="43" y="571.0" width="3" height="1.6"/><rect x="49" y="571.0" width="3" height="1.6"/><rect x="54" y="571.0" width="3" height="1.6"/><rect x="63" y="571.0" width="3" height="1.6"/><rect x="82" y="571.0" width="3" height="1.6"/><rect x="87" y="571.0" width="3" height="1.6"/><rect x="102" y="571.0" width="3" height="1.6"/><rect x="112" y="571.0" width="3" height="1.6"/><rect x="132" y="571.0" width="3" height="1.6"/><rect x="136" y="571.0" width="3" height="1.6"/><rect x="145" y="571.0" width="3" height="1.6"/><rect x="150" y="571.0" width="3" height="1.6"/><rect x="154" y="571.0" width="3" height="1.6"/><rect x="159" y="571.0" width="3" height="1.6"/><rect x="163" y="571.0" width="3" height="1.6"/><rect x="10" y="590.5" width="3" height="1.6"/><rect x="21" y="590.5" width="3" height="1.6"/><rect x="40" y="590.5" width="3" height="1.6"/><rect x="45" y="590.5" width="3" height="1.6"/><rect x="49" y="590.5" width="3" height="1.6"/><rect x="55" y="590.5" width="3" height="1.6"/><rect x="75" y="590.5" width="3" height="1.6"/><rect x="84" y="590.5" width="3" height="1.6"/><rect x="90" y="590.5" width="3" height="1.6"/><rect x="94" y="590.5" width="3" height="1.6"/><rect x="112" y="590.5" width="3" height="1.6"/><rect x="117" y="590.5" width="3" height="1.6"/><rect x="123" y="590.5" width="3" height="1.6"/><rect x="127" y="590.5" width="3" height="1.6"/><rect x="133" y="590.5" width="3" height="1.6"/><rect x="147" y="590.5" width="3" height="1.6"/><rect x="156" y="590.5" width="3" height="1.6"/><rect x="165" y="590.5" width="3" height="1.6"/><rect x="10" y="594.5" width="3" height="1.6"/><rect x="14" y="594.5" width="3" height="1.6"/><rect x="23" y="594.5" width="3" height="1.6"/><rect x="38" y="594.5" width="3" height="1.6"/><rect x="49" y="594.5" width="3" height="1.6"/><rect x="55" y="594.5" width="3" height="1.6"/><rect x="61" y="594.5" width="3" height="1.6"/><rect x="67" y="594.5" width="3" height="1.6"/><rect x="73" y="594.5" width="3" height="1.6"/><rect x="79" y="594.5" width="3" height="1.6"/><rect x="89" y="594.5" width="3" height="1.6"/><rect x="98" y="594.5" width="3" height="1.6"/><rect x="104" y="594.5" width="3" height="1.6"/><rect x="109" y="594.5" width="3" height="1.6"/><rect x="118" y="594.5" width="3" height="1.6"/><rect x="127" y="594.5" width="3" height="1.6"/><rect x="136" y="594.5" width="3" height="1.6"/><rect x="148" y="594.5" width="3" height="1.6"/><rect x="154" y="594.5" width="3" height="1.6"/><rect x="158" y="594.5" width="3" height="1.6"/><rect x="167" y="594.5" width="3" height="1.6"/></g><g fill="rgba(110,110,255,0.3)"><rect x="102" y="566.0" width="70" height="8"/><rect x="107" y="580.0" width="23" height="7"/><rect x="6" y="592.0" width="19" height="7"/><rect x="90" y="592.0" width="20" height="7"/></g></svg>
<svg style="left:7.9px;top:577.5px" width="11" height="12"><path d="M0 0.5 H10.5 V11.5 H0 V9.5 H6 V7.2 H0 V4.8 H6 V2.5 H0 Z" fill="#c8c8ff"/></svg>
<div class="t" style="left:21.3px;top:575.3px;font-size:14.49px;line-height:14.49px;color:#c8c8ff;transform:scaleX(1.056);-webkit-text-stroke:0.3px currentColor;">Pattern 11</div>
<div style="left:6.0px;top:604.0px;width:166.0px;height:33.5px;background:#2020c8;"></div>
<svg style="left:0;top:0" width="180" height="1000"><g fill="rgba(255,255,255,0.16)"><rect x="9" y="609.0" width="3" height="1.6"/><rect x="24" y="609.0" width="3" height="1.6"/><rect x="33" y="609.0" width="3" height="1.6"/><rect x="37" y="609.0" width="3" height="1.6"/><rect x="52" y="609.0" width="3" height="1.6"/><rect x="57" y="609.0" width="3" height="1.6"/><rect x="66" y="609.0" width="3" height="1.6"/><rect x="70" y="609.0" width="3" height="1.6"/><rect x="79" y="609.0" width="3" height="1.6"/><rect x="88" y="609.0" width="3" height="1.6"/><rect x="93" y="609.0" width="3" height="1.6"/><rect x="97" y="609.0" width="3" height="1.6"/><rect x="106" y="609.0" width="3" height="1.6"/><rect x="111" y="609.0" width="3" height="1.6"/><rect x="117" y="609.0" width="3" height="1.6"/><rect x="123" y="609.0" width="3" height="1.6"/><rect x="127" y="609.0" width="3" height="1.6"/><rect x="136" y="609.0" width="3" height="1.6"/><rect x="145" y="609.0" width="3" height="1.6"/><rect x="151" y="609.0" width="3" height="1.6"/><rect x="156" y="609.0" width="3" height="1.6"/><rect x="162" y="609.0" width="3" height="1.6"/><rect x="168" y="609.0" width="3" height="1.6"/><rect x="10" y="628.5" width="3" height="1.6"/><rect x="15" y="628.5" width="3" height="1.6"/><rect x="19" y="628.5" width="3" height="1.6"/><rect x="24" y="628.5" width="3" height="1.6"/><rect x="33" y="628.5" width="3" height="1.6"/><rect x="39" y="628.5" width="3" height="1.6"/><rect x="54" y="628.5" width="3" height="1.6"/><rect x="64" y="628.5" width="3" height="1.6"/><rect x="69" y="628.5" width="3" height="1.6"/><rect x="78" y="628.5" width="3" height="1.6"/><rect x="82" y="628.5" width="3" height="1.6"/><rect x="93" y="628.5" width="3" height="1.6"/><rect x="99" y="628.5" width="3" height="1.6"/><rect x="108" y="628.5" width="3" height="1.6"/><rect x="123" y="628.5" width="3" height="1.6"/><rect x="127" y="628.5" width="3" height="1.6"/><rect x="133" y="628.5" width="3" height="1.6"/><rect x="139" y="628.5" width="3" height="1.6"/><rect x="144" y="628.5" width="3" height="1.6"/><rect x="150" y="628.5" width="3" height="1.6"/><rect x="156" y="628.5" width="3" height="1.6"/><rect x="9" y="632.5" width="3" height="1.6"/><rect x="15" y="632.5" width="3" height="1.6"/><rect x="35" y="632.5" width="3" height="1.6"/><rect x="39" y="632.5" width="3" height="1.6"/><rect x="44" y="632.5" width="3" height="1.6"/><rect x="48" y="632.5" width="3" height="1.6"/><rect x="59" y="632.5" width="3" height="1.6"/><rect x="68" y="632.5" width="3" height="1.6"/><rect x="74" y="632.5" width="3" height="1.6"/><rect x="83" y="632.5" width="3" height="1.6"/><rect x="102" y="632.5" width="3" height="1.6"/><rect x="108" y="632.5" width="3" height="1.6"/><rect x="113" y="632.5" width="3" height="1.6"/><rect x="119" y="632.5" width="3" height="1.6"/><rect x="125" y="632.5" width="3" height="1.6"/><rect x="134" y="632.5" width="3" height="1.6"/><rect x="146" y="632.5" width="3" height="1.6"/><rect x="155" y="632.5" width="3" height="1.6"/><rect x="165" y="632.5" width="3" height="1.6"/></g><g fill="rgba(110,110,255,0.3)"><rect x="107" y="616" width="2" height="2"/><rect x="57" y="616" width="2" height="2"/><rect x="158" y="616" width="2" height="2"/><rect x="78" y="628" width="2" height="2"/><rect x="157" y="628" width="2" height="2"/><rect x="154" y="624" width="2" height="2"/><rect x="159" y="628" width="2" height="2"/><rect x="35" y="616" width="2" height="2"/><rect x="11" y="628" width="2" height="2"/><rect x="130" y="612" width="2" height="2"/><rect x="139" y="628" width="2" height="2"/><rect x="80" y="616" width="2" height="2"/><rect x="45" y="608" width="2" height="2"/><rect x="72" y="616" width="2" height="2"/></g></svg>
<svg style="left:7.9px;top:615.5px" width="11" height="12"><path d="M0 0.5 H10.5 V11.5 H0 V9.5 H6 V7.2 H0 V4.8 H6 V2.5 H0 Z" fill="#c8c8ff"/></svg>
<div class="t" style="left:21.3px;top:613.3px;font-size:14.49px;line-height:14.49px;color:#c8c8ff;transform:scaleX(1.039);-webkit-text-stroke:0.3px currentColor;">Pattern 12</div>
<div style="left:6.0px;top:641.9px;width:166.0px;height:33.5px;background:#2222c4;"></div>
<svg style="left:0;top:0" width="180" height="1000"><g fill="rgba(255,255,255,0.16)"><rect x="8" y="646.9" width="3" height="1.6"/><rect x="17" y="646.9" width="3" height="1.6"/><rect x="23" y="646.9" width="3" height="1.6"/><rect x="32" y="646.9" width="3" height="1.6"/><rect x="47" y="646.9" width="3" height="1.6"/><rect x="53" y="646.9" width="3" height="1.6"/><rect x="59" y="646.9" width="3" height="1.6"/><rect x="68" y="646.9" width="3" height="1.6"/><rect x="77" y="646.9" width="3" height="1.6"/><rect x="82" y="646.9" width="3" height="1.6"/><rect x="86" y="646.9" width="3" height="1.6"/><rect x="95" y="646.9" width="3" height="1.6"/><rect x="104" y="646.9" width="3" height="1.6"/><rect x="110" y="646.9" width="3" height="1.6"/><rect x="119" y="646.9" width="3" height="1.6"/><rect x="133" y="646.9" width="3" height="1.6"/><rect x="146" y="646.9" width="3" height="1.6"/><rect x="155" y="646.9" width="3" height="1.6"/><rect x="164" y="646.9" width="3" height="1.6"/><rect x="10" y="666.4" width="3" height="1.6"/><rect x="16" y="666.4" width="3" height="1.6"/><rect x="21" y="666.4" width="3" height="1.6"/><rect x="49" y="666.4" width="3" height="1.6"/><rect x="55" y="666.4" width="3" height="1.6"/><rect x="64" y="666.4" width="3" height="1.6"/><rect x="69" y="666.4" width="3" height="1.6"/><rect x="75" y="666.4" width="3" height="1.6"/><rect x="79" y="666.4" width="3" height="1.6"/><rect x="85" y="666.4" width="3" height="1.6"/><rect x="91" y="666.4" width="3" height="1.6"/><rect x="96" y="666.4" width="3" height="1.6"/><rect x="102" y="666.4" width="3" height="1.6"/><rect x="108" y="666.4" width="3" height="1.6"/><rect x="123" y="666.4" width="3" height="1.6"/><rect x="132" y="666.4" width="3" height="1.6"/><rect x="141" y="666.4" width="3" height="1.6"/><rect x="145" y="666.4" width="3" height="1.6"/><rect x="154" y="666.4" width="3" height="1.6"/><rect x="160" y="666.4" width="3" height="1.6"/><rect x="10" y="670.4" width="3" height="1.6"/><rect x="14" y="670.4" width="3" height="1.6"/><rect x="19" y="670.4" width="3" height="1.6"/><rect x="25" y="670.4" width="3" height="1.6"/><rect x="31" y="670.4" width="3" height="1.6"/><rect x="37" y="670.4" width="3" height="1.6"/><rect x="41" y="670.4" width="3" height="1.6"/><rect x="50" y="670.4" width="3" height="1.6"/><rect x="55" y="670.4" width="3" height="1.6"/><rect x="64" y="670.4" width="3" height="1.6"/><rect x="79" y="670.4" width="3" height="1.6"/><rect x="85" y="670.4" width="3" height="1.6"/><rect x="89" y="670.4" width="3" height="1.6"/><rect x="95" y="670.4" width="3" height="1.6"/><rect x="104" y="670.4" width="3" height="1.6"/><rect x="110" y="670.4" width="3" height="1.6"/><rect x="115" y="670.4" width="3" height="1.6"/><rect x="119" y="670.4" width="3" height="1.6"/><rect x="130" y="670.4" width="3" height="1.6"/><rect x="134" y="670.4" width="3" height="1.6"/><rect x="145" y="670.4" width="3" height="1.6"/><rect x="155" y="670.4" width="3" height="1.6"/><rect x="164" y="670.4" width="3" height="1.6"/></g><g fill="rgba(110,110,255,0.3)"><rect x="102" y="641.9" width="70" height="8"/><rect x="107" y="655.9" width="23" height="7"/><rect x="6" y="667.9" width="19" height="7"/><rect x="90" y="667.9" width="20" height="7"/></g></svg>
<svg style="left:7.9px;top:653.4px" width="11" height="12"><path d="M0 0.5 H10.5 V11.5 H0 V9.5 H6 V7.2 H0 V4.8 H6 V2.5 H0 Z" fill="#c8c8ff"/></svg>
<div class="t" style="left:21.3px;top:651.2px;font-size:14.49px;line-height:14.49px;color:#c8c8ff;transform:scaleX(1.039);-webkit-text-stroke:0.3px currentColor;">Pattern 13</div>
<div style="left:6.0px;top:679.9px;width:166.0px;height:33.5px;background:#1c1cd8;"></div>
<svg style="left:0;top:0" width="180" height="1000"><g fill="rgba(255,255,255,0.16)"><rect x="10" y="684.9" width="3" height="1.6"/><rect x="16" y="684.9" width="3" height="1.6"/><rect x="20" y="684.9" width="3" height="1.6"/><rect x="32" y="684.9" width="3" height="1.6"/><rect x="43" y="684.9" width="3" height="1.6"/><rect x="52" y="684.9" width="3" height="1.6"/><rect x="58" y="684.9" width="3" height="1.6"/><rect x="62" y="684.9" width="3" height="1.6"/><rect x="67" y="684.9" width="3" height="1.6"/><rect x="82" y="684.9" width="3" height="1.6"/><rect x="97" y="684.9" width="3" height="1.6"/><rect x="109" y="684.9" width="3" height="1.6"/><rect x="118" y="684.9" width="3" height="1.6"/><rect x="131" y="684.9" width="3" height="1.6"/><rect x="136" y="684.9" width="3" height="1.6"/><rect x="142" y="684.9" width="3" height="1.6"/><rect x="148" y="684.9" width="3" height="1.6"/><rect x="152" y="684.9" width="3" height="1.6"/><rect x="161" y="684.9" width="3" height="1.6"/><rect x="10" y="704.4" width="3" height="1.6"/><rect x="19" y="704.4" width="3" height="1.6"/><rect x="28" y="704.4" width="3" height="1.6"/><rect x="37" y="704.4" width="3" height="1.6"/><rect x="46" y="704.4" width="3" height="1.6"/><rect x="51" y="704.4" width="3" height="1.6"/><rect x="60" y="704.4" width="3" height="1.6"/><rect x="69" y="704.4" width="3" height="1.6"/><rect x="78" y="704.4" width="3" height="1.6"/><rect x="87" y="704.4" width="3" height="1.6"/><rect x="91" y="704.4" width="3" height="1.6"/><rect x="96" y="704.4" width="3" height="1.6"/><rect x="105" y="704.4" width="3" height="1.6"/><rect x="114" y="704.4" width="3" height="1.6"/><rect x="120" y="704.4" width="3" height="1.6"/><rect x="126" y="704.4" width="3" height="1.6"/><rect x="139" y="704.4" width="3" height="1.6"/><rect x="166" y="704.4" width="3" height="1.6"/><rect x="9" y="708.4" width="3" height="1.6"/><rect x="15" y="708.4" width="3" height="1.6"/><rect x="24" y="708.4" width="3" height="1.6"/><rect x="33" y="708.4" width="3" height="1.6"/><rect x="37" y="708.4" width="3" height="1.6"/><rect x="46" y="708.4" width="3" height="1.6"/><rect x="51" y="708.4" width="3" height="1.6"/><rect x="57" y="708.4" width="3" height="1.6"/><rect x="66" y="708.4" width="3" height="1.6"/><rect x="72" y="708.4" width="3" height="1.6"/><rect x="76" y="708.4" width="3" height="1.6"/><rect x="85" y="708.4" width="3" height="1.6"/><rect x="90" y="708.4" width="3" height="1.6"/><rect x="103" y="708.4" width="3" height="1.6"/><rect x="108" y="708.4" width="3" height="1.6"/><rect x="112" y="708.4" width="3" height="1.6"/><rect x="118" y="708.4" width="3" height="1.6"/><rect x="127" y="708.4" width="3" height="1.6"/><rect x="136" y="708.4" width="3" height="1.6"/><rect x="141" y="708.4" width="3" height="1.6"/><rect x="150" y="708.4" width="3" height="1.6"/><rect x="159" y="708.4" width="3" height="1.6"/><rect x="165" y="708.4" width="3" height="1.6"/></g><g fill="rgba(110,110,255,0.3)"><rect x="102" y="679.9" width="70" height="8"/><rect x="107" y="693.9" width="23" height="7"/><rect x="6" y="705.9" width="19" height="7"/><rect x="90" y="705.9" width="20" height="7"/></g></svg>
<svg style="left:7.9px;top:691.4px" width="11" height="12"><path d="M0 0.5 H10.5 V11.5 H0 V9.5 H6 V7.2 H0 V4.8 H6 V2.5 H0 Z" fill="#c8c8ff"/></svg>
<div class="t" style="left:21.3px;top:689.2px;font-size:14.49px;line-height:14.49px;color:#c8c8ff;transform:scaleX(1.039);-webkit-text-stroke:0.3px currentColor;">Pattern 14</div>
<div style="left:6.0px;top:717.8px;width:166.0px;height:33.5px;background:#1c1cd8;"></div>
<svg style="left:0;top:0" width="180" height="1000"><g fill="rgba(255,255,255,0.16)"><rect x="10" y="722.8" width="3" height="1.6"/><rect x="25" y="722.8" width="3" height="1.6"/><rect x="34" y="722.8" width="3" height="1.6"/><rect x="44" y="722.8" width="3" height="1.6"/><rect x="49" y="722.8" width="3" height="1.6"/><rect x="55" y="722.8" width="3" height="1.6"/><rect x="59" y="722.8" width="3" height="1.6"/><rect x="65" y="722.8" width="3" height="1.6"/><rect x="71" y="722.8" width="3" height="1.6"/><rect x="77" y="722.8" width="3" height="1.6"/><rect x="83" y="722.8" width="3" height="1.6"/><rect x="88" y="722.8" width="3" height="1.6"/><rect x="94" y="722.8" width="3" height="1.6"/><rect x="112" y="722.8" width="3" height="1.6"/><rect x="118" y="722.8" width="3" height="1.6"/><rect x="124" y="722.8" width="3" height="1.6"/><rect x="128" y="722.8" width="3" height="1.6"/><rect x="137" y="722.8" width="3" height="1.6"/><rect x="143" y="722.8" width="3" height="1.6"/><rect x="148" y="722.8" width="3" height="1.6"/><rect x="152" y="722.8" width="3" height="1.6"/><rect x="158" y="722.8" width="3" height="1.6"/><rect x="9" y="742.3" width="3" height="1.6"/><rect x="14" y="742.3" width="3" height="1.6"/><rect x="32" y="742.3" width="3" height="1.6"/><rect x="36" y="742.3" width="3" height="1.6"/><rect x="45" y="742.3" width="3" height="1.6"/><rect x="50" y="742.3" width="3" height="1.6"/><rect x="63" y="742.3" width="3" height="1.6"/><rect x="72" y="742.3" width="3" height="1.6"/><rect x="86" y="742.3" width="3" height="1.6"/><rect x="95" y="742.3" width="3" height="1.6"/><rect x="101" y="742.3" width="3" height="1.6"/><rect x="105" y="742.3" width="3" height="1.6"/><rect x="110" y="742.3" width="3" height="1.6"/><rect x="119" y="742.3" width="3" height="1.6"/><rect x="123" y="742.3" width="3" height="1.6"/><rect x="134" y="742.3" width="3" height="1.6"/><rect x="138" y="742.3" width="3" height="1.6"/><rect x="153" y="742.3" width="3" height="1.6"/><rect x="159" y="742.3" width="3" height="1.6"/><rect x="165" y="742.3" width="3" height="1.6"/><rect x="9" y="746.3" width="3" height="1.6"/><rect x="13" y="746.3" width="3" height="1.6"/><rect x="19" y="746.3" width="3" height="1.6"/><rect x="25" y="746.3" width="3" height="1.6"/><rect x="30" y="746.3" width="3" height="1.6"/><rect x="39" y="746.3" width="3" height="1.6"/><rect x="48" y="746.3" width="3" height="1.6"/><rect x="57" y="746.3" width="3" height="1.6"/><rect x="63" y="746.3" width="3" height="1.6"/><rect x="69" y="746.3" width="3" height="1.6"/><rect x="73" y="746.3" width="3" height="1.6"/><rect x="82" y="746.3" width="3" height="1.6"/><rect x="93" y="746.3" width="3" height="1.6"/><rect x="105" y="746.3" width="3" height="1.6"/><rect x="114" y="746.3" width="3" height="1.6"/><rect x="118" y="746.3" width="3" height="1.6"/><rect x="127" y="746.3" width="3" height="1.6"/><rect x="133" y="746.3" width="3" height="1.6"/><rect x="138" y="746.3" width="3" height="1.6"/><rect x="147" y="746.3" width="3" height="1.6"/><rect x="156" y="746.3" width="3" height="1.6"/><rect x="162" y="746.3" width="3" height="1.6"/></g><g fill="rgba(110,110,255,0.3)"><rect x="95" y="726" width="2" height="2"/><rect x="81" y="742" width="2" height="2"/><rect x="59" y="730" width="2" height="2"/><rect x="124" y="726" width="2" height="2"/><rect x="147" y="726" width="2" height="2"/><rect x="81" y="730" width="2" height="2"/><rect x="126" y="726" width="2" height="2"/><rect x="18" y="730" width="2" height="2"/><rect x="125" y="738" width="2" height="2"/><rect x="78" y="722" width="2" height="2"/><rect x="52" y="726" width="2" height="2"/><rect x="157" y="738" width="2" height="2"/><rect x="161" y="742" width="2" height="2"/><rect x="153" y="722" width="2" height="2"/></g></svg>
<svg style="left:7.9px;top:729.3px" width="11" height="12"><path d="M0 0.5 H10.5 V11.5 H0 V9.5 H6 V7.2 H0 V4.8 H6 V2.5 H0 Z" fill="#c8c8ff"/></svg>
<div class="t" style="left:21.3px;top:727.1px;font-size:14.49px;line-height:14.49px;color:#c8c8ff;transform:scaleX(1.039);-webkit-text-stroke:0.3px currentColor;">Pattern 15</div>
<div style="left:6.0px;top:755.8px;width:166.0px;height:33.5px;background:#1c1cd8;"></div>
<svg style="left:0;top:0" width="180" height="1000"><g fill="rgba(255,255,255,0.16)"><rect x="17" y="760.8" width="3" height="1.6"/><rect x="23" y="760.8" width="3" height="1.6"/><rect x="28" y="760.8" width="3" height="1.6"/><rect x="32" y="760.8" width="3" height="1.6"/><rect x="38" y="760.8" width="3" height="1.6"/><rect x="43" y="760.8" width="3" height="1.6"/><rect x="56" y="760.8" width="3" height="1.6"/><rect x="71" y="760.8" width="3" height="1.6"/><rect x="80" y="760.8" width="3" height="1.6"/><rect x="85" y="760.8" width="3" height="1.6"/><rect x="100" y="760.8" width="3" height="1.6"/><rect x="109" y="760.8" width="3" height="1.6"/><rect x="122" y="760.8" width="3" height="1.6"/><rect x="128" y="760.8" width="3" height="1.6"/><rect x="148" y="760.8" width="3" height="1.6"/><rect x="154" y="760.8" width="3" height="1.6"/><rect x="160" y="760.8" width="3" height="1.6"/><rect x="166" y="760.8" width="3" height="1.6"/><rect x="9" y="780.2" width="3" height="1.6"/><rect x="14" y="780.2" width="3" height="1.6"/><rect x="20" y="780.2" width="3" height="1.6"/><rect x="24" y="780.2" width="3" height="1.6"/><rect x="33" y="780.2" width="3" height="1.6"/><rect x="39" y="780.2" width="3" height="1.6"/><rect x="48" y="780.2" width="3" height="1.6"/><rect x="53" y="780.2" width="3" height="1.6"/><rect x="62" y="780.2" width="3" height="1.6"/><rect x="71" y="780.2" width="3" height="1.6"/><rect x="77" y="780.2" width="3" height="1.6"/><rect x="86" y="780.2" width="3" height="1.6"/><rect x="92" y="780.2" width="3" height="1.6"/><rect x="98" y="780.2" width="3" height="1.6"/><rect x="104" y="780.2" width="3" height="1.6"/><rect x="113" y="780.2" width="3" height="1.6"/><rect x="117" y="780.2" width="3" height="1.6"/><rect x="123" y="780.2" width="3" height="1.6"/><rect x="129" y="780.2" width="3" height="1.6"/><rect x="134" y="780.2" width="3" height="1.6"/><rect x="143" y="780.2" width="3" height="1.6"/><rect x="149" y="780.2" width="3" height="1.6"/><rect x="155" y="780.2" width="3" height="1.6"/><rect x="8" y="784.2" width="3" height="1.6"/><rect x="13" y="784.2" width="3" height="1.6"/><rect x="22" y="784.2" width="3" height="1.6"/><rect x="26" y="784.2" width="3" height="1.6"/><rect x="46" y="784.2" width="3" height="1.6"/><rect x="52" y="784.2" width="3" height="1.6"/><rect x="65" y="784.2" width="3" height="1.6"/><rect x="74" y="784.2" width="3" height="1.6"/><rect x="85" y="784.2" width="3" height="1.6"/><rect x="91" y="784.2" width="3" height="1.6"/><rect x="95" y="784.2" width="3" height="1.6"/><rect x="104" y="784.2" width="3" height="1.6"/><rect x="131" y="784.2" width="3" height="1.6"/><rect x="137" y="784.2" width="3" height="1.6"/><rect x="146" y="784.2" width="3" height="1.6"/><rect x="151" y="784.2" width="3" height="1.6"/><rect x="157" y="784.2" width="3" height="1.6"/><rect x="167" y="784.2" width="3" height="1.6"/></g><g fill="rgba(110,110,255,0.3)"><rect x="102" y="755.8" width="70" height="8"/><rect x="107" y="769.8" width="23" height="7"/><rect x="6" y="781.8" width="19" height="7"/><rect x="90" y="781.8" width="20" height="7"/></g></svg>
<svg style="left:7.9px;top:767.2px" width="11" height="12"><path d="M0 0.5 H10.5 V11.5 H0 V9.5 H6 V7.2 H0 V4.8 H6 V2.5 H0 Z" fill="#c8c8ff"/></svg>
<div class="t" style="left:21.3px;top:765.1px;font-size:14.49px;line-height:14.49px;color:#c8c8ff;transform:scaleX(1.039);-webkit-text-stroke:0.3px currentColor;">Pattern 16</div>
<div style="left:6.0px;top:793.7px;width:166.0px;height:33.5px;background:#1c1cd8;"></div>
<svg style="left:0;top:0" width="180" height="1000"><g fill="rgba(255,255,255,0.16)"><rect x="11" y="798.7" width="3" height="1.6"/><rect x="15" y="798.7" width="3" height="1.6"/><rect x="21" y="798.7" width="3" height="1.6"/><rect x="45" y="798.7" width="3" height="1.6"/><rect x="51" y="798.7" width="3" height="1.6"/><rect x="60" y="798.7" width="3" height="1.6"/><rect x="65" y="798.7" width="3" height="1.6"/><rect x="83" y="798.7" width="3" height="1.6"/><rect x="87" y="798.7" width="3" height="1.6"/><rect x="92" y="798.7" width="3" height="1.6"/><rect x="110" y="798.7" width="3" height="1.6"/><rect x="119" y="798.7" width="3" height="1.6"/><rect x="125" y="798.7" width="3" height="1.6"/><rect x="134" y="798.7" width="3" height="1.6"/><rect x="10" y="818.2" width="3" height="1.6"/><rect x="28" y="818.2" width="3" height="1.6"/><rect x="37" y="818.2" width="3" height="1.6"/><rect x="46" y="818.2" width="3" height="1.6"/><rect x="52" y="818.2" width="3" height="1.6"/><rect x="61" y="818.2" width="3" height="1.6"/><rect x="70" y="818.2" width="3" height="1.6"/><rect x="76" y="818.2" width="3" height="1.6"/><rect x="85" y="818.2" width="3" height="1.6"/><rect x="90" y="818.2" width="3" height="1.6"/><rect x="96" y="818.2" width="3" height="1.6"/><rect x="100" y="818.2" width="3" height="1.6"/><rect x="114" y="818.2" width="3" height="1.6"/><rect x="123" y="818.2" width="3" height="1.6"/><rect x="129" y="818.2" width="3" height="1.6"/><rect x="135" y="818.2" width="3" height="1.6"/><rect x="139" y="818.2" width="3" height="1.6"/><rect x="144" y="818.2" width="3" height="1.6"/><rect x="148" y="818.2" width="3" height="1.6"/><rect x="162" y="818.2" width="3" height="1.6"/><rect x="10" y="822.2" width="3" height="1.6"/><rect x="16" y="822.2" width="3" height="1.6"/><rect x="25" y="822.2" width="3" height="1.6"/><rect x="39" y="822.2" width="3" height="1.6"/><rect x="48" y="822.2" width="3" height="1.6"/><rect x="61" y="822.2" width="3" height="1.6"/><rect x="79" y="822.2" width="3" height="1.6"/><rect x="85" y="822.2" width="3" height="1.6"/><rect x="90" y="822.2" width="3" height="1.6"/><rect x="96" y="822.2" width="3" height="1.6"/><rect x="109" y="822.2" width="3" height="1.6"/><rect x="118" y="822.2" width="3" height="1.6"/><rect x="127" y="822.2" width="3" height="1.6"/><rect x="136" y="822.2" width="3" height="1.6"/><rect x="145" y="822.2" width="3" height="1.6"/><rect x="160" y="822.2" width="3" height="1.6"/><rect x="165" y="822.2" width="3" height="1.6"/></g><g fill="rgba(110,110,255,0.3)"><rect x="102" y="793.7" width="70" height="8"/><rect x="107" y="807.7" width="23" height="7"/><rect x="6" y="819.7" width="19" height="7"/><rect x="90" y="819.7" width="20" height="7"/></g></svg>
<svg style="left:7.9px;top:805.2px" width="11" height="12"><path d="M0 0.5 H10.5 V11.5 H0 V9.5 H6 V7.2 H0 V4.8 H6 V2.5 H0 Z" fill="#c8c8ff"/></svg>
<div class="t" style="left:21.3px;top:803.0px;font-size:14.49px;line-height:14.49px;color:#c8c8ff;transform:scaleX(1.039);-webkit-text-stroke:0.3px currentColor;">Pattern 17</div>
<div style="left:6.0px;top:831.7px;width:166.0px;height:33.5px;background:#1c1cd8;"></div>
<svg style="left:0;top:0" width="180" height="1000"><g fill="rgba(255,255,255,0.16)"><rect x="10" y="836.7" width="3" height="1.6"/><rect x="20" y="836.7" width="3" height="1.6"/><rect x="25" y="836.7" width="3" height="1.6"/><rect x="34" y="836.7" width="3" height="1.6"/><rect x="43" y="836.7" width="3" height="1.6"/><rect x="49" y="836.7" width="3" height="1.6"/><rect x="53" y="836.7" width="3" height="1.6"/><rect x="59" y="836.7" width="3" height="1.6"/><rect x="64" y="836.7" width="3" height="1.6"/><rect x="70" y="836.7" width="3" height="1.6"/><rect x="76" y="836.7" width="3" height="1.6"/><rect x="80" y="836.7" width="3" height="1.6"/><rect x="86" y="836.7" width="3" height="1.6"/><rect x="95" y="836.7" width="3" height="1.6"/><rect x="116" y="836.7" width="3" height="1.6"/><rect x="122" y="836.7" width="3" height="1.6"/><rect x="127" y="836.7" width="3" height="1.6"/><rect x="133" y="836.7" width="3" height="1.6"/><rect x="146" y="836.7" width="3" height="1.6"/><rect x="157" y="836.7" width="3" height="1.6"/><rect x="163" y="836.7" width="3" height="1.6"/><rect x="167" y="836.7" width="3" height="1.6"/><rect x="10" y="856.2" width="3" height="1.6"/><rect x="25" y="856.2" width="3" height="1.6"/><rect x="29" y="856.2" width="3" height="1.6"/><rect x="43" y="856.2" width="3" height="1.6"/><rect x="56" y="856.2" width="3" height="1.6"/><rect x="62" y="856.2" width="3" height="1.6"/><rect x="91" y="856.2" width="3" height="1.6"/><rect x="95" y="856.2" width="3" height="1.6"/><rect x="104" y="856.2" width="3" height="1.6"/><rect x="110" y="856.2" width="3" height="1.6"/><rect x="115" y="856.2" width="3" height="1.6"/><rect x="121" y="856.2" width="3" height="1.6"/><rect x="131" y="856.2" width="3" height="1.6"/><rect x="140" y="856.2" width="3" height="1.6"/><rect x="146" y="856.2" width="3" height="1.6"/><rect x="163" y="856.2" width="3" height="1.6"/><rect x="167" y="856.2" width="3" height="1.6"/><rect x="8" y="860.2" width="3" height="1.6"/><rect x="13" y="860.2" width="3" height="1.6"/><rect x="38" y="860.2" width="3" height="1.6"/><rect x="43" y="860.2" width="3" height="1.6"/><rect x="52" y="860.2" width="3" height="1.6"/><rect x="62" y="860.2" width="3" height="1.6"/><rect x="67" y="860.2" width="3" height="1.6"/><rect x="80" y="860.2" width="3" height="1.6"/><rect x="89" y="860.2" width="3" height="1.6"/><rect x="100" y="860.2" width="3" height="1.6"/><rect x="109" y="860.2" width="3" height="1.6"/><rect x="115" y="860.2" width="3" height="1.6"/><rect x="124" y="860.2" width="3" height="1.6"/><rect x="133" y="860.2" width="3" height="1.6"/><rect x="139" y="860.2" width="3" height="1.6"/><rect x="143" y="860.2" width="3" height="1.6"/><rect x="152" y="860.2" width="3" height="1.6"/><rect x="158" y="860.2" width="3" height="1.6"/><rect x="167" y="860.2" width="3" height="1.6"/></g><g fill="rgba(110,110,255,0.3)"><rect x="52" y="836" width="2" height="2"/><rect x="54" y="844" width="2" height="2"/><rect x="70" y="844" width="2" height="2"/><rect x="119" y="856" width="2" height="2"/><rect x="150" y="856" width="2" height="2"/><rect x="106" y="840" width="2" height="2"/><rect x="59" y="844" width="2" height="2"/><rect x="30" y="852" width="2" height="2"/><rect x="55" y="844" width="2" height="2"/><rect x="65" y="856" width="2" height="2"/><rect x="142" y="844" width="2" height="2"/><rect x="22" y="844" width="2" height="2"/><rect x="45" y="840" width="2" height="2"/><rect x="64" y="836" width="2" height="2"/></g></svg>
<svg style="left:7.9px;top:843.2px" width="11" height="12"><path d="M0 0.5 H10.5 V11.5 H0 V9.5 H6 V7.2 H0 V4.8 H6 V2.5 H0 Z" fill="#c8c8ff"/></svg>
<div class="t" style="left:21.3px;top:841.0px;font-size:14.49px;line-height:14.49px;color:#c8c8ff;transform:scaleX(1.039);-webkit-text-stroke:0.3px currentColor;">Pattern 18</div>
<div style="left:6.0px;top:869.6px;width:166.0px;height:33.5px;background:#1c1cd8;"></div>
<svg style="left:0;top:0" width="180" height="1000"><g fill="rgba(255,255,255,0.16)"><rect x="10" y="874.6" width="3" height="1.6"/><rect x="16" y="874.6" width="3" height="1.6"/><rect x="34" y="874.6" width="3" height="1.6"/><rect x="38" y="874.6" width="3" height="1.6"/><rect x="47" y="874.6" width="3" height="1.6"/><rect x="56" y="874.6" width="3" height="1.6"/><rect x="65" y="874.6" width="3" height="1.6"/><rect x="70" y="874.6" width="3" height="1.6"/><rect x="79" y="874.6" width="3" height="1.6"/><rect x="89" y="874.6" width="3" height="1.6"/><rect x="95" y="874.6" width="3" height="1.6"/><rect x="106" y="874.6" width="3" height="1.6"/><rect x="115" y="874.6" width="3" height="1.6"/><rect x="119" y="874.6" width="3" height="1.6"/><rect x="124" y="874.6" width="3" height="1.6"/><rect x="130" y="874.6" width="3" height="1.6"/><rect x="134" y="874.6" width="3" height="1.6"/><rect x="143" y="874.6" width="3" height="1.6"/><rect x="148" y="874.6" width="3" height="1.6"/><rect x="157" y="874.6" width="3" height="1.6"/><rect x="161" y="874.6" width="3" height="1.6"/><rect x="166" y="874.6" width="3" height="1.6"/><rect x="10" y="894.1" width="3" height="1.6"/><rect x="19" y="894.1" width="3" height="1.6"/><rect x="25" y="894.1" width="3" height="1.6"/><rect x="31" y="894.1" width="3" height="1.6"/><rect x="40" y="894.1" width="3" height="1.6"/><rect x="50" y="894.1" width="3" height="1.6"/><rect x="55" y="894.1" width="3" height="1.6"/><rect x="59" y="894.1" width="3" height="1.6"/><rect x="64" y="894.1" width="3" height="1.6"/><rect x="70" y="894.1" width="3" height="1.6"/><rect x="74" y="894.1" width="3" height="1.6"/><rect x="79" y="894.1" width="3" height="1.6"/><rect x="83" y="894.1" width="3" height="1.6"/><rect x="92" y="894.1" width="3" height="1.6"/><rect x="101" y="894.1" width="3" height="1.6"/><rect x="110" y="894.1" width="3" height="1.6"/><rect x="122" y="894.1" width="3" height="1.6"/><rect x="127" y="894.1" width="3" height="1.6"/><rect x="133" y="894.1" width="3" height="1.6"/><rect x="139" y="894.1" width="3" height="1.6"/><rect x="148" y="894.1" width="3" height="1.6"/><rect x="152" y="894.1" width="3" height="1.6"/><rect x="158" y="894.1" width="3" height="1.6"/><rect x="164" y="894.1" width="3" height="1.6"/><rect x="10" y="898.1" width="3" height="1.6"/><rect x="19" y="898.1" width="3" height="1.6"/><rect x="28" y="898.1" width="3" height="1.6"/><rect x="43" y="898.1" width="3" height="1.6"/><rect x="47" y="898.1" width="3" height="1.6"/><rect x="56" y="898.1" width="3" height="1.6"/><rect x="65" y="898.1" width="3" height="1.6"/><rect x="71" y="898.1" width="3" height="1.6"/><rect x="80" y="898.1" width="3" height="1.6"/><rect x="89" y="898.1" width="3" height="1.6"/><rect x="95" y="898.1" width="3" height="1.6"/><rect x="100" y="898.1" width="3" height="1.6"/><rect x="104" y="898.1" width="3" height="1.6"/><rect x="119" y="898.1" width="3" height="1.6"/><rect x="128" y="898.1" width="3" height="1.6"/><rect x="133" y="898.1" width="3" height="1.6"/><rect x="142" y="898.1" width="3" height="1.6"/><rect x="151" y="898.1" width="3" height="1.6"/><rect x="155" y="898.1" width="3" height="1.6"/><rect x="164" y="898.1" width="3" height="1.6"/></g><g fill="rgba(110,110,255,0.3)"><rect x="102" y="869.6" width="70" height="8"/><rect x="107" y="883.6" width="23" height="7"/><rect x="6" y="895.6" width="19" height="7"/><rect x="90" y="895.6" width="20" height="7"/></g></svg>
<svg style="left:7.9px;top:881.1px" width="11" height="12"><path d="M0 0.5 H10.5 V11.5 H0 V9.5 H6 V7.2 H0 V4.8 H6 V2.5 H0 Z" fill="#c8c8ff"/></svg>
<div class="t" style="left:21.3px;top:878.9px;font-size:14.49px;line-height:14.49px;color:#c8c8ff;transform:scaleX(1.039);-webkit-text-stroke:0.3px currentColor;">Pattern 19</div>
<div style="left:6.0px;top:907.6px;width:166.0px;height:33.5px;background:#8a1e8c;"></div>
<svg style="left:0;top:0" width="180" height="1000"><g fill="rgba(255,255,255,0.16)"><rect x="10" y="912.6" width="3" height="1.6"/><rect x="16" y="912.6" width="3" height="1.6"/><rect x="20" y="912.6" width="3" height="1.6"/><rect x="25" y="912.6" width="3" height="1.6"/><rect x="31" y="912.6" width="3" height="1.6"/><rect x="35" y="912.6" width="3" height="1.6"/><rect x="40" y="912.6" width="3" height="1.6"/><rect x="49" y="912.6" width="3" height="1.6"/><rect x="58" y="912.6" width="3" height="1.6"/><rect x="68" y="912.6" width="3" height="1.6"/><rect x="77" y="912.6" width="3" height="1.6"/><rect x="82" y="912.6" width="3" height="1.6"/><rect x="86" y="912.6" width="3" height="1.6"/><rect x="92" y="912.6" width="3" height="1.6"/><rect x="97" y="912.6" width="3" height="1.6"/><rect x="112" y="912.6" width="3" height="1.6"/><rect x="127" y="912.6" width="3" height="1.6"/><rect x="133" y="912.6" width="3" height="1.6"/><rect x="142" y="912.6" width="3" height="1.6"/><rect x="151" y="912.6" width="3" height="1.6"/><rect x="164" y="912.6" width="3" height="1.6"/><rect x="10" y="932.1" width="3" height="1.6"/><rect x="14" y="932.1" width="3" height="1.6"/><rect x="23" y="932.1" width="3" height="1.6"/><rect x="32" y="932.1" width="3" height="1.6"/><rect x="38" y="932.1" width="3" height="1.6"/><rect x="47" y="932.1" width="3" height="1.6"/><rect x="59" y="932.1" width="3" height="1.6"/><rect x="71" y="932.1" width="3" height="1.6"/><rect x="77" y="932.1" width="3" height="1.6"/><rect x="83" y="932.1" width="3" height="1.6"/><rect x="88" y="932.1" width="3" height="1.6"/><rect x="94" y="932.1" width="3" height="1.6"/><rect x="100" y="932.1" width="3" height="1.6"/><rect x="109" y="932.1" width="3" height="1.6"/><rect x="118" y="932.1" width="3" height="1.6"/><rect x="130" y="932.1" width="3" height="1.6"/><rect x="134" y="932.1" width="3" height="1.6"/><rect x="140" y="932.1" width="3" height="1.6"/><rect x="145" y="932.1" width="3" height="1.6"/><rect x="149" y="932.1" width="3" height="1.6"/><rect x="155" y="932.1" width="3" height="1.6"/><rect x="164" y="932.1" width="3" height="1.6"/><rect x="10" y="936.1" width="3" height="1.6"/><rect x="19" y="936.1" width="3" height="1.6"/><rect x="24" y="936.1" width="3" height="1.6"/><rect x="28" y="936.1" width="3" height="1.6"/><rect x="49" y="936.1" width="3" height="1.6"/><rect x="58" y="936.1" width="3" height="1.6"/><rect x="63" y="936.1" width="3" height="1.6"/><rect x="67" y="936.1" width="3" height="1.6"/><rect x="76" y="936.1" width="3" height="1.6"/><rect x="85" y="936.1" width="3" height="1.6"/><rect x="91" y="936.1" width="3" height="1.6"/><rect x="100" y="936.1" width="3" height="1.6"/><rect x="105" y="936.1" width="3" height="1.6"/><rect x="114" y="936.1" width="3" height="1.6"/><rect x="118" y="936.1" width="3" height="1.6"/><rect x="124" y="936.1" width="3" height="1.6"/><rect x="139" y="936.1" width="3" height="1.6"/><rect x="150" y="936.1" width="3" height="1.6"/><rect x="156" y="936.1" width="3" height="1.6"/><rect x="165" y="936.1" width="3" height="1.6"/></g><g fill="rgba(110,110,255,0.3)"></g></svg>
<svg style="left:7.9px;top:919.1px" width="11" height="12"><path d="M0 0.5 H10.5 V11.5 H0 V9.5 H6 V7.2 H0 V4.8 H6 V2.5 H0 Z" fill="#f8c0f4"/></svg>
<div class="t" style="left:21.3px;top:916.9px;font-size:14.49px;line-height:14.49px;color:#f8c0f4;transform:scaleX(1.039);-webkit-text-stroke:0.3px currentColor;">Pattern 20</div>
<div style="left:6.0px;top:945.5px;width:166.0px;height:33.5px;background:#8a1e8c;"></div>
<svg style="left:0;top:0" width="180" height="1000"><g fill="rgba(255,255,255,0.16)"><rect x="15" y="950.5" width="3" height="1.6"/><rect x="20" y="950.5" width="3" height="1.6"/><rect x="29" y="950.5" width="3" height="1.6"/><rect x="33" y="950.5" width="3" height="1.6"/><rect x="38" y="950.5" width="3" height="1.6"/><rect x="44" y="950.5" width="3" height="1.6"/><rect x="53" y="950.5" width="3" height="1.6"/><rect x="59" y="950.5" width="3" height="1.6"/><rect x="63" y="950.5" width="3" height="1.6"/><rect x="75" y="950.5" width="3" height="1.6"/><rect x="80" y="950.5" width="3" height="1.6"/><rect x="84" y="950.5" width="3" height="1.6"/><rect x="90" y="950.5" width="3" height="1.6"/><rect x="99" y="950.5" width="3" height="1.6"/><rect x="104" y="950.5" width="3" height="1.6"/><rect x="108" y="950.5" width="3" height="1.6"/><rect x="117" y="950.5" width="3" height="1.6"/><rect x="122" y="950.5" width="3" height="1.6"/><rect x="128" y="950.5" width="3" height="1.6"/><rect x="146" y="950.5" width="3" height="1.6"/><rect x="155" y="950.5" width="3" height="1.6"/><rect x="164" y="950.5" width="3" height="1.6"/><rect x="17" y="970.0" width="3" height="1.6"/><rect x="26" y="970.0" width="3" height="1.6"/><rect x="32" y="970.0" width="3" height="1.6"/><rect x="43" y="970.0" width="3" height="1.6"/><rect x="52" y="970.0" width="3" height="1.6"/><rect x="61" y="970.0" width="3" height="1.6"/><rect x="67" y="970.0" width="3" height="1.6"/><rect x="80" y="970.0" width="3" height="1.6"/><rect x="91" y="970.0" width="3" height="1.6"/><rect x="100" y="970.0" width="3" height="1.6"/><rect x="104" y="970.0" width="3" height="1.6"/><rect x="115" y="970.0" width="3" height="1.6"/><rect x="119" y="970.0" width="3" height="1.6"/><rect x="124" y="970.0" width="3" height="1.6"/><rect x="133" y="970.0" width="3" height="1.6"/><rect x="151" y="970.0" width="3" height="1.6"/><rect x="157" y="970.0" width="3" height="1.6"/><rect x="166" y="970.0" width="3" height="1.6"/><rect x="9" y="974.0" width="3" height="1.6"/><rect x="18" y="974.0" width="3" height="1.6"/><rect x="27" y="974.0" width="3" height="1.6"/><rect x="41" y="974.0" width="3" height="1.6"/><rect x="50" y="974.0" width="3" height="1.6"/><rect x="54" y="974.0" width="3" height="1.6"/><rect x="60" y="974.0" width="3" height="1.6"/><rect x="66" y="974.0" width="3" height="1.6"/><rect x="71" y="974.0" width="3" height="1.6"/><rect x="75" y="974.0" width="3" height="1.6"/><rect x="84" y="974.0" width="3" height="1.6"/><rect x="93" y="974.0" width="3" height="1.6"/><rect x="98" y="974.0" width="3" height="1.6"/><rect x="102" y="974.0" width="3" height="1.6"/><rect x="111" y="974.0" width="3" height="1.6"/><rect x="116" y="974.0" width="3" height="1.6"/><rect x="122" y="974.0" width="3" height="1.6"/><rect x="126" y="974.0" width="3" height="1.6"/><rect x="132" y="974.0" width="3" height="1.6"/><rect x="141" y="974.0" width="3" height="1.6"/><rect x="147" y="974.0" width="3" height="1.6"/><rect x="153" y="974.0" width="3" height="1.6"/><rect x="158" y="974.0" width="3" height="1.6"/><rect x="164" y="974.0" width="3" height="1.6"/></g><g fill="rgba(110,110,255,0.3)"></g></svg>
<svg style="left:7.9px;top:957.0px" width="11" height="12"><path d="M0 0.5 H10.5 V11.5 H0 V9.5 H6 V7.2 H0 V4.8 H6 V2.5 H0 Z" fill="#f8c0f4"/></svg>
<div class="t" style="left:21.3px;top:954.8px;font-size:14.49px;line-height:14.49px;color:#f8c0f4;transform:scaleX(1.039);-webkit-text-stroke:0.3px currentColor;">Pattern 21</div>
<div style="left:0.0px;top:974.0px;width:200.0px;height:26.0px;background:#3b4248;"></div>
<div style="left:175.0px;top:183.0px;width:19.0px;height:791.0px;background:#363c42;box-shadow:inset 0 0 0 1px #2e3439;"></div>
<div style="left:175.6px;top:183.0px;width:18.4px;height:17.0px;background:#50575d;border-radius:1px;box-shadow:inset 0 0 0 1px #41474c;"></div>
<div style="left:184.0px;top:187.0px;width:2.0px;height:7.0px;background:#2a2f33;"></div>
<div style="left:175.6px;top:201.0px;width:18.4px;height:16.0px;background:#50575d;box-shadow:inset 0 0 0 1px #41474c;"></div>
<svg style="left:178px;top:203px" width="14" height="12"><path d="M3 8 L7 4 L11 8" fill="none" stroke="#2e3338" stroke-width="1.5"/></svg>
<div style="left:175.6px;top:218.0px;width:18.4px;height:41.0px;background:#50575d;box-shadow:inset 0 0 0 1px #41474c;"></div>
<div style="left:175.6px;top:957.0px;width:18.4px;height:17.0px;background:#50575d;box-shadow:inset 0 0 0 1px #41474c;"></div>
<svg style="left:178px;top:959px" width="14" height="12"><path d="M3 4 L7 8 L11 4" fill="none" stroke="#2e3338" stroke-width="1.5"/></svg>
<svg style="left:81px;top:980px" width="14" height="14"><path d="M7 2 V12 M2 7 H12" stroke="#c8ced2" stroke-width="2"/></svg>
<div style="left:202.0px;top:182.0px;width:138.0px;height:818.0px;background:#3b4248;"></div>
<div style="left:202.0px;top:183.2px;width:132.7px;height:69.0px;background:#e8d23e;border-radius:0 7px 7px 0;"></div>
<div class="t" style="left:204.6px;top:186.3px;font-size:15.22px;line-height:15.22px;color:#1c1a0c;transform:scaleX(0.927);-webkit-text-stroke:0.3px currentColor;">Track 1</div>
<svg style="left:221px;top:244.8px" width="14" height="4"><g fill="#1c1a0c" opacity="0.55"><rect x="1" y="1" width="1.6" height="1.6"/><rect x="5" y="1" width="1.6" height="1.6"/><rect x="9" y="1" width="1.6" height="1.6"/></g></svg>
<svg style="left:316px;top:234.8px" width="14" height="14"><circle cx="7" cy="7" r="5.1" fill="#a2e05a" stroke="#28401a" stroke-width="1.7"/><circle cx="6.8" cy="6.5" r="2.6" fill="#d0f8a0" opacity="0.7"/></svg>
<svg style="left:289px;top:227.8px" width="26" height="26"><path d="M11 12 L20 4" stroke="#1a1a14" stroke-width="1.8"/><path d="M19 4.5 L22.5 1 L23.5 2.2 L20.5 6 Z" fill="#1a1a14"/><path d="M10.5 7.5 L11.5 11 L15.5 12.5 L13 15.5 Q14 19 10 21.5 Q6 23 3 20 Q1 17 3 14 Q5 12 8 12 Z" fill="#1a1a14"/><path d="M5 18 L9 14.5" stroke="#e8d23e" stroke-width="1" opacity="0.75"/><path d="M10.5 21 Q12 24 14.5 22.5 Q16 21 17.5 19.5" stroke="#1a1a14" stroke-width="1.2" fill="none"/></svg>
<div style="left:202.0px;top:253.2px;width:132.7px;height:69.0px;background:#1e1690;border-radius:0 7px 7px 0;"></div>
<div class="t" style="left:204.6px;top:256.3px;font-size:15.22px;line-height:15.22px;color:#b8b4f4;transform:scaleX(0.927);-webkit-text-stroke:0.3px currentColor;">Track 2</div>
<svg style="left:221px;top:314.8px" width="14" height="4"><g fill="#b8b4f4" opacity="0.55"><rect x="1" y="1" width="1.6" height="1.6"/><rect x="5" y="1" width="1.6" height="1.6"/><rect x="9" y="1" width="1.6" height="1.6"/></g></svg>
<svg style="left:316px;top:304.8px" width="14" height="14"><circle cx="7" cy="7" r="5.1" fill="#a2e05a" stroke="#28401a" stroke-width="1.7"/><circle cx="6.8" cy="6.5" r="2.6" fill="#d0f8a0" opacity="0.7"/></svg>
<svg style="left:289px;top:297.8px" width="26" height="26"><path d="M11 12 L20 4" stroke="#b0acf0" stroke-width="1.8"/><path d="M19 4.5 L22.5 1 L23.5 2.2 L20.5 6 Z" fill="#b0acf0"/><path d="M10.5 7.5 L11.5 11 L15.5 12.5 L13 15.5 Q14 19 10 21.5 Q6 23 3 20 Q1 17 3 14 Q5 12 8 12 Z" fill="#b0acf0"/><path d="M5 18 L9 14.5" stroke="#1e1690" stroke-width="1" opacity="0.75"/><path d="M10.5 21 Q12 24 14.5 22.5 Q16 21 17.5 19.5" stroke="#b0acf0" stroke-width="1.2" fill="none"/></svg>
<div style="left:202.0px;top:323.2px;width:132.7px;height:69.0px;background:#4e1896;border-radius:0 7px 7px 0;"></div>
<div class="t" style="left:204.6px;top:326.3px;font-size:15.22px;line-height:15.22px;color:#d8c8f4;transform:scaleX(0.927);-webkit-text-stroke:0.3px currentColor;">Track 3</div>
<svg style="left:221px;top:384.8px" width="14" height="4"><g fill="#d8c8f4" opacity="0.55"><rect x="1" y="1" width="1.6" height="1.6"/><rect x="5" y="1" width="1.6" height="1.6"/><rect x="9" y="1" width="1.6" height="1.6"/></g></svg>
<svg style="left:316px;top:374.8px" width="14" height="14"><circle cx="7" cy="7" r="5.1" fill="#a2e05a" stroke="#28401a" stroke-width="1.7"/><circle cx="6.8" cy="6.5" r="2.6" fill="#d0f8a0" opacity="0.7"/></svg>
<svg style="left:290px;top:367.8px" width="24" height="22"><path d="M5 2 L11 8 M19 2 L13 8" stroke="#c8a8f0" stroke-width="1.6"/><ellipse cx="12" cy="11.5" rx="8.5" ry="3" fill="#c8a8f0"/><path d="M3.5 11.5 V17 Q12 21 20.5 17 V11.5" fill="#c8a8f0"/><path d="M3.5 13 Q12 16 20.5 13" stroke="#4e1896" stroke-width="0.9"/></svg>
<div style="left:202.0px;top:393.2px;width:132.7px;height:67.0px;background:#1a788c;border-radius:0 7px 7px 0;"></div>
<div class="t" style="left:204.6px;top:396.3px;font-size:15.22px;line-height:15.22px;color:#b4f0f0;transform:scaleX(0.927);-webkit-text-stroke:0.3px currentColor;">Track 4</div>
<svg style="left:221px;top:454.8px" width="14" height="4"><g fill="#b4f0f0" opacity="0.55"><rect x="1" y="1" width="1.6" height="1.6"/><rect x="5" y="1" width="1.6" height="1.6"/><rect x="9" y="1" width="1.6" height="1.6"/></g></svg>
<svg style="left:316px;top:444.8px" width="14" height="14"><circle cx="7" cy="7" r="5.1" fill="#a2e05a" stroke="#28401a" stroke-width="1.7"/><circle cx="6.8" cy="6.5" r="2.6" fill="#d0f8a0" opacity="0.7"/></svg>
<svg style="left:290px;top:439.8px" width="22" height="18"><path d="M1 2 H20 V16 H1 Z" fill="#b4f0f0"/><rect x="5" y="2" width="2.6" height="8" fill="#1a788c"/><rect x="9.5" y="2" width="2.6" height="8" fill="#1a788c"/><rect x="14" y="2" width="2.6" height="8" fill="#1a788c"/></svg>
<div style="left:202.0px;top:461.2px;width:132.7px;height:69.0px;background:#7d23e1;border-radius:0 7px 7px 0;"></div>
<div class="t" style="left:204.6px;top:464.3px;font-size:15.22px;line-height:15.22px;color:#f4e4ff;transform:scaleX(0.927);-webkit-text-stroke:0.3px currentColor;">Track 5</div>
<svg style="left:221px;top:522.8px" width="14" height="4"><g fill="#f4e4ff" opacity="0.55"><rect x="1" y="1" width="1.6" height="1.6"/><rect x="5" y="1" width="1.6" height="1.6"/><rect x="9" y="1" width="1.6" height="1.6"/></g></svg>
<svg style="left:316px;top:512.8px" width="14" height="14"><circle cx="7" cy="7" r="5.1" fill="#a2e05a" stroke="#28401a" stroke-width="1.7"/><circle cx="6.8" cy="6.5" r="2.6" fill="#d0f8a0" opacity="0.7"/></svg>
<svg style="left:290px;top:505.8px" width="24" height="24"><path d="M6 21 Q3 17 7 14 Q8 10 12 11 Q16 8 18 12 Q20 16 15 18 Q13 22 9 22 Z" fill="#f4e4ff"/><path d="M22 2 L5 22" stroke="#7d23e1" stroke-width="1.6"/><path d="M21 3 L4 21" stroke="#f4e4ff" stroke-width="1"/><path d="M3 3 L20 22" stroke="#f4e4ff" stroke-width="1.4"/></svg>
<div style="left:202.0px;top:531.2px;width:132.7px;height:69.0px;background:#48e12d;border-radius:0 7px 7px 0;"></div>
<div class="t" style="left:204.6px;top:534.3px;font-size:15.22px;line-height:15.22px;color:#102010;transform:scaleX(0.733);font-weight:bold;-webkit-text-stroke:0.3px currentColor;">BASS</div>
<svg style="left:221px;top:592.8px" width="14" height="4"><g fill="#102010" opacity="0.55"><rect x="1" y="1" width="1.6" height="1.6"/><rect x="5" y="1" width="1.6" height="1.6"/><rect x="9" y="1" width="1.6" height="1.6"/></g></svg>
<svg style="left:316px;top:582.8px" width="14" height="14"><circle cx="7" cy="7" r="5.1" fill="#a2e05a" stroke="#28401a" stroke-width="1.7"/><circle cx="6.8" cy="6.5" r="2.6" fill="#d0f8a0" opacity="0.7"/></svg>
<div style="left:202.0px;top:601.2px;width:132.7px;height:69.0px;background:#821496;border-radius:0 7px 7px 0;"></div>
<div class="t" style="left:204.6px;top:604.3px;font-size:15.22px;line-height:15.22px;color:#f4b8f4;transform:scaleX(1.053);-webkit-text-stroke:0.3px currentColor;">Guitar 1</div>
<svg style="left:221px;top:662.8px" width="14" height="4"><g fill="#f4b8f4" opacity="0.55"><rect x="1" y="1" width="1.6" height="1.6"/><rect x="5" y="1" width="1.6" height="1.6"/><rect x="9" y="1" width="1.6" height="1.6"/></g></svg>
<svg style="left:316px;top:652.8px" width="14" height="14"><circle cx="7" cy="7" r="5.1" fill="#a2e05a" stroke="#28401a" stroke-width="1.7"/><circle cx="6.8" cy="6.5" r="2.6" fill="#d0f8a0" opacity="0.7"/></svg>
<svg style="left:289px;top:645.8px" width="26" height="26"><path d="M11 12 L20 4" stroke="#f0a8f0" stroke-width="1.8"/><path d="M19 4.5 L22.5 1 L23.5 2.2 L20.5 6 Z" fill="#f0a8f0"/><path d="M10.5 7.5 L11.5 11 L15.5 12.5 L13 15.5 Q14 19 10 21.5 Q6 23 3 20 Q1 17 3 14 Q5 12 8 12 Z" fill="#f0a8f0"/><path d="M5 18 L9 14.5" stroke="#821496" stroke-width="1" opacity="0.75"/><path d="M10.5 21 Q12 24 14.5 22.5 Q16 21 17.5 19.5" stroke="#f0a8f0" stroke-width="1.2" fill="none"/></svg>
<div style="left:202.0px;top:671.2px;width:132.7px;height:67.0px;background:#4a5258;border-radius:0 7px 7px 0;"></div>
<div class="t" style="left:204.6px;top:674.3px;font-size:15.22px;line-height:15.22px;color:#6a7277;transform:scaleX(0.927);-webkit-text-stroke:0.3px currentColor;">Track 8</div>
<svg style="left:221px;top:732.8px" width="14" height="4"><g fill="#6a7277" opacity="0.55"><rect x="1" y="1" width="1.6" height="1.6"/><rect x="5" y="1" width="1.6" height="1.6"/><rect x="9" y="1" width="1.6" height="1.6"/></g></svg>
<svg style="left:316px;top:722.8px" width="14" height="14"><circle cx="7" cy="7" r="5.1" fill="#a2e05a" stroke="#28401a" stroke-width="1.7"/><circle cx="6.8" cy="6.5" r="2.6" fill="#d0f8a0" opacity="0.7"/></svg>
<div style="left:202.0px;top:739.2px;width:132.7px;height:69.0px;background:#4a5258;border-radius:0 7px 7px 0;"></div>
<div class="t" style="left:204.6px;top:742.3px;font-size:15.22px;line-height:15.22px;color:#6a7277;transform:scaleX(0.927);-webkit-text-stroke:0.3px currentColor;">Track 9</div>
<svg style="left:221px;top:800.8px" width="14" height="4"><g fill="#6a7277" opacity="0.55"><rect x="1" y="1" width="1.6" height="1.6"/><rect x="5" y="1" width="1.6" height="1.6"/><rect x="9" y="1" width="1.6" height="1.6"/></g></svg>
<svg style="left:316px;top:790.8px" width="14" height="14"><circle cx="7" cy="7" r="5.1" fill="#a2e05a" stroke="#28401a" stroke-width="1.7"/><circle cx="6.8" cy="6.5" r="2.6" fill="#d0f8a0" opacity="0.7"/></svg>
<div style="left:202.0px;top:809.2px;width:132.7px;height:69.0px;background:#4a5258;border-radius:0 7px 7px 0;"></div>
<div class="t" style="left:204.6px;top:812.3px;font-size:15.22px;line-height:15.22px;color:#6a7277;transform:scaleX(0.921);-webkit-text-stroke:0.3px currentColor;">Track 10</div>
<svg style="left:221px;top:870.8px" width="14" height="4"><g fill="#6a7277" opacity="0.55"><rect x="1" y="1" width="1.6" height="1.6"/><rect x="5" y="1" width="1.6" height="1.6"/><rect x="9" y="1" width="1.6" height="1.6"/></g></svg>
<svg style="left:316px;top:860.8px" width="14" height="14"><circle cx="7" cy="7" r="5.1" fill="#a2e05a" stroke="#28401a" stroke-width="1.7"/><circle cx="6.8" cy="6.5" r="2.6" fill="#d0f8a0" opacity="0.7"/></svg>
<div style="left:202.0px;top:879.2px;width:132.7px;height:69.0px;background:#4a5258;border-radius:0 7px 7px 0;"></div>
<div class="t" style="left:204.6px;top:882.3px;font-size:15.22px;line-height:15.22px;color:#6a7277;transform:scaleX(0.939);-webkit-text-stroke:0.3px currentColor;">Track 11</div>
<svg style="left:221px;top:940.8px" width="14" height="4"><g fill="#6a7277" opacity="0.55"><rect x="1" y="1" width="1.6" height="1.6"/><rect x="5" y="1" width="1.6" height="1.6"/><rect x="9" y="1" width="1.6" height="1.6"/></g></svg>
<svg style="left:316px;top:930.8px" width="14" height="14"><circle cx="7" cy="7" r="5.1" fill="#a2e05a" stroke="#28401a" stroke-width="1.7"/><circle cx="6.8" cy="6.5" r="2.6" fill="#d0f8a0" opacity="0.7"/></svg>
<div style="left:202.0px;top:949.2px;width:132.7px;height:69.0px;background:#4a5258;border-radius:0 7px 7px 0;"></div>
<div class="t" style="left:204.6px;top:952.3px;font-size:15.22px;line-height:15.22px;color:#6a7277;transform:scaleX(0.921);-webkit-text-stroke:0.3px currentColor;">Track 12</div>
<svg style="left:221px;top:1010.8px" width="14" height="4"><g fill="#6a7277" opacity="0.55"><rect x="1" y="1" width="1.6" height="1.6"/><rect x="5" y="1" width="1.6" height="1.6"/><rect x="9" y="1" width="1.6" height="1.6"/></g></svg>
<svg style="left:316px;top:1000.8px" width="14" height="14"><circle cx="7" cy="7" r="5.1" fill="#a2e05a" stroke="#28401a" stroke-width="1.7"/><circle cx="6.8" cy="6.5" r="2.6" fill="#d0f8a0" opacity="0.7"/></svg>
<div style="left:335.0px;top:182.0px;width:5.5px;height:818.0px;background:#30363b;"></div>
<div style="left:340.5px;top:133.0px;width:1314.5px;height:25.0px;background:#3a4046;"></div>
<div style="left:341.0px;top:133.3px;width:24.0px;height:23.7px;background:#4d555b;box-shadow:inset 0 0 0 1px #40474c;"></div>
<svg style="left:346px;top:137px" width="14" height="16"><path d="M10 2 L4 8 L10 14" fill="none" stroke="#2a2f33" stroke-width="1.8"/></svg>
<div style="left:366.0px;top:133.3px;width:1077.0px;height:23.7px;background:#5a6268;"></div>
<div style="left:1630.0px;top:133.3px;width:25.0px;height:23.7px;background:#4d555b;box-shadow:inset 0 0 0 1px #40474c;"></div>
<svg style="left:1635px;top:137px" width="14" height="16"><path d="M4 2 L10 8 L4 14" fill="none" stroke="#2a2f33" stroke-width="1.8"/></svg>
<svg style="left:0;top:0" width="1680" height="160"><rect x="366.0" y="133.6" width="128.9" height="3" fill="#e8e880"/><rect x="600.4" y="133.6" width="23.4" height="3" fill="#a8a860"/><rect x="623.8" y="133.6" width="23.4" height="3" fill="#a8a860"/><rect x="647.3" y="133.6" width="23.4" height="3" fill="#b0b060"/><rect x="670.7" y="133.6" width="35.2" height="3" fill="#b0b060"/><rect x="705.9" y="133.6" width="46.9" height="3" fill="#3030d8"/><rect x="752.8" y="133.6" width="46.9" height="3" fill="#3030d8"/><rect x="916.8" y="134.6" width="92.0" height="1" fill="#8c949a"/><rect x="1022.3" y="133.6" width="46.9" height="3" fill="#3030d8"/><rect x="1069.2" y="133.6" width="46.9" height="3" fill="#3030d8"/><rect x="1116.1" y="134.6" width="10.5" height="1" fill="#8c949a"/><rect x="1163.0" y="134.6" width="46.3" height="1" fill="#8c949a"/><rect x="1209.8" y="134.6" width="46.3" height="1" fill="#8c949a"/><rect x="366.0" y="136.6" width="140.6" height="3" fill="#3a2ab0"/><rect x="506.6" y="136.6" width="46.9" height="3" fill="#2a22b8"/><rect x="553.5" y="136.6" width="46.9" height="3" fill="#2a22b8"/><rect x="600.4" y="136.6" width="46.9" height="3" fill="#2a22b8"/><rect x="647.3" y="136.6" width="46.9" height="3" fill="#2a22b8"/><rect x="705.9" y="136.6" width="46.9" height="3" fill="#3030d8"/><rect x="752.8" y="136.6" width="46.9" height="3" fill="#3030d8"/><rect x="799.6" y="136.6" width="18.8" height="3" fill="#2a22b8"/><rect x="823.1" y="136.6" width="23.4" height="3" fill="#2a22b8"/><rect x="846.5" y="136.6" width="23.4" height="3" fill="#2a22b8"/><rect x="870.0" y="136.6" width="23.4" height="3" fill="#2a22b8"/><rect x="893.4" y="136.6" width="18.8" height="3" fill="#2a22b8"/><rect x="916.8" y="137.6" width="104.9" height="1" fill="#8c949a"/><rect x="1022.3" y="136.6" width="46.9" height="3" fill="#3030d8"/><rect x="1069.2" y="136.6" width="46.9" height="3" fill="#3030d8"/><rect x="1116.1" y="137.6" width="46.3" height="1" fill="#8c949a"/><rect x="1163.0" y="137.6" width="46.3" height="1" fill="#8c949a"/><rect x="1209.8" y="137.6" width="46.3" height="1" fill="#8c949a"/><rect x="1256.7" y="136.6" width="46.9" height="3" fill="#4a3ac0"/><rect x="366.0" y="139.6" width="93.8" height="3" fill="#7a3ac8"/><rect x="459.8" y="139.6" width="46.9" height="3" fill="#b040b8"/><rect x="506.6" y="139.6" width="46.9" height="3" fill="#7a3ac8"/><rect x="553.5" y="139.6" width="46.9" height="3" fill="#7a3ac8"/><rect x="600.4" y="139.6" width="46.9" height="3" fill="#b040b8"/><rect x="647.3" y="139.6" width="46.9" height="3" fill="#b040b8"/><rect x="694.2" y="139.6" width="11.7" height="3" fill="#b040b8"/><rect x="705.9" y="139.6" width="46.9" height="3" fill="#7a3ac8"/><rect x="752.8" y="139.6" width="46.9" height="3" fill="#b040b8"/><rect x="799.6" y="139.6" width="18.8" height="3" fill="#b040b8"/><rect x="823.1" y="139.6" width="23.4" height="3" fill="#b040b8"/><rect x="846.5" y="139.6" width="23.4" height="3" fill="#b040b8"/><rect x="870.0" y="139.6" width="23.4" height="3" fill="#b040b8"/><rect x="893.4" y="139.6" width="23.4" height="3" fill="#b040b8"/><rect x="916.8" y="139.6" width="46.9" height="3" fill="#7a3ac8"/><rect x="963.7" y="140.6" width="46.3" height="1" fill="#8c949a"/><rect x="1010.6" y="139.6" width="11.7" height="3" fill="#b040b8"/><rect x="1022.3" y="140.6" width="22.8" height="1" fill="#8c949a"/><rect x="1045.8" y="140.6" width="22.8" height="1" fill="#8c949a"/><rect x="1069.2" y="139.6" width="46.9" height="3" fill="#b040b8"/><rect x="1116.1" y="140.6" width="22.8" height="1" fill="#8c949a"/><rect x="1139.5" y="140.6" width="22.8" height="1" fill="#8c949a"/><rect x="1163.0" y="140.6" width="46.3" height="1" fill="#8c949a"/><rect x="1209.8" y="140.6" width="46.3" height="1" fill="#8c949a"/><rect x="366.0" y="143.6" width="46.3" height="1" fill="#8c949a"/><rect x="412.9" y="143.6" width="46.3" height="1" fill="#8c949a"/><rect x="459.8" y="143.6" width="34.6" height="1" fill="#8c949a"/><rect x="705.9" y="142.6" width="46.9" height="3" fill="#b0f0ff"/><rect x="752.8" y="142.6" width="46.9" height="3" fill="#b0f0ff"/><rect x="1022.3" y="142.6" width="46.9" height="3" fill="#b0f0ff"/><rect x="1069.2" y="142.6" width="46.9" height="3" fill="#b0f0ff"/><rect x="1163.0" y="143.6" width="93.2" height="1" fill="#8c949a"/><rect x="1256.7" y="143.6" width="46.3" height="1" fill="#8c949a"/><rect x="1303.6" y="143.6" width="123.6" height="1" fill="#8c949a"/><rect x="506.6" y="145.6" width="93.8" height="3" fill="#9a3ac8"/><rect x="600.4" y="145.6" width="93.8" height="3" fill="#9a3ac8"/><rect x="705.9" y="145.6" width="46.9" height="3" fill="#9a3ac8"/><rect x="752.8" y="145.6" width="46.9" height="3" fill="#9a3ac8"/><rect x="1022.3" y="145.6" width="46.9" height="3" fill="#9a3ac8"/><rect x="1069.2" y="145.6" width="46.9" height="3" fill="#9a3ac8"/><rect x="366.0" y="148.6" width="128.9" height="3" fill="#3a2ab0"/><rect x="506.6" y="148.6" width="46.9" height="3" fill="#2a22b8"/><rect x="553.5" y="148.6" width="46.9" height="3" fill="#2a22b8"/><rect x="600.4" y="148.6" width="46.9" height="3" fill="#2a22b8"/><rect x="647.3" y="148.6" width="46.9" height="3" fill="#2a22b8"/><rect x="705.9" y="148.6" width="46.9" height="3" fill="#3030d8"/><rect x="752.8" y="148.6" width="46.9" height="3" fill="#3030d8"/><rect x="799.6" y="148.6" width="23.4" height="3" fill="#2a22b8"/><rect x="823.1" y="148.6" width="23.4" height="3" fill="#2a22b8"/><rect x="846.5" y="148.6" width="23.4" height="3" fill="#2a22b8"/><rect x="870.0" y="148.6" width="23.4" height="3" fill="#2a22b8"/><rect x="893.4" y="148.6" width="18.8" height="3" fill="#2a22b8"/><rect x="916.8" y="149.6" width="92.0" height="1" fill="#8c949a"/><rect x="1022.3" y="148.6" width="46.9" height="3" fill="#3030d8"/><rect x="1069.2" y="148.6" width="46.9" height="3" fill="#3030d8"/><rect x="1116.1" y="149.6" width="46.3" height="1" fill="#8c949a"/><rect x="1163.0" y="149.6" width="46.3" height="1" fill="#8c949a"/><rect x="1209.8" y="149.6" width="46.3" height="1" fill="#8c949a"/><rect x="1256.7" y="148.6" width="46.9" height="3" fill="#4a3ac0"/><rect x="366.0" y="151.6" width="140.6" height="3" fill="#3a2ab0"/><rect x="506.6" y="151.6" width="46.9" height="3" fill="#2a22b8"/><rect x="553.5" y="151.6" width="46.9" height="3" fill="#2a22b8"/><rect x="600.4" y="151.6" width="46.9" height="3" fill="#2a22b8"/><rect x="647.3" y="151.6" width="46.9" height="3" fill="#2a22b8"/><rect x="799.6" y="151.6" width="18.8" height="3" fill="#2a22b8"/><rect x="823.1" y="151.6" width="23.4" height="3" fill="#2a22b8"/><rect x="846.5" y="151.6" width="23.4" height="3" fill="#2a22b8"/><rect x="870.0" y="151.6" width="23.4" height="3" fill="#2a22b8"/><rect x="893.4" y="151.6" width="18.8" height="3" fill="#2a22b8"/><rect x="916.8" y="152.6" width="92.0" height="1" fill="#8c949a"/><rect x="1116.1" y="152.6" width="46.3" height="1" fill="#8c949a"/><rect x="1163.0" y="152.6" width="46.3" height="1" fill="#8c949a"/><rect x="1209.8" y="152.6" width="46.3" height="1" fill="#8c949a"/></svg>
<div style="left:340.5px;top:158.5px;width:1313.5px;height:24.0px;background:#46546f;"></div>
<div style="left:340.5px;top:157.5px;width:1314.5px;height:1.2px;background:#2c3238;"></div>
<div style="left:340.5px;top:158.7px;width:1314.5px;height:1.0px;background:#5a6680;"></div>
<div class="t" style="left:341.9px;top:164.9px;font-size:13.04px;line-height:13.04px;color:#d0d8e6;transform:scaleX(0.800);font-weight:bold;">1</div>
<div class="t" style="left:398.8px;top:164.9px;font-size:13.04px;line-height:13.04px;color:#d0d8e6;transform:scaleX(0.800);font-weight:bold;">5</div>
<div class="t" style="left:456.3px;top:164.9px;font-size:13.04px;line-height:13.04px;color:#d0d8e6;transform:scaleX(0.800);font-weight:bold;">9</div>
<div class="t" style="left:513.8px;top:164.9px;font-size:13.04px;line-height:13.04px;color:#d0d8e6;transform:scaleX(0.896);font-weight:bold;">13</div>
<div class="t" style="left:571.3px;top:164.9px;font-size:13.04px;line-height:13.04px;color:#d0d8e6;transform:scaleX(0.896);font-weight:bold;">17</div>
<div class="t" style="left:628.7px;top:164.9px;font-size:13.04px;line-height:13.04px;color:#d0d8e6;transform:scaleX(0.896);font-weight:bold;">21</div>
<div class="t" style="left:686.2px;top:164.9px;font-size:13.04px;line-height:13.04px;color:#d0d8e6;transform:scaleX(0.896);font-weight:bold;">25</div>
<div class="t" style="left:743.7px;top:164.9px;font-size:13.04px;line-height:13.04px;color:#d0d8e6;transform:scaleX(0.896);font-weight:bold;">29</div>
<div class="t" style="left:801.2px;top:164.9px;font-size:13.04px;line-height:13.04px;color:#d0d8e6;transform:scaleX(0.896);font-weight:bold;">33</div>
<div class="t" style="left:858.7px;top:164.9px;font-size:13.04px;line-height:13.04px;color:#d0d8e6;transform:scaleX(0.896);font-weight:bold;">37</div>
<div class="t" style="left:916.2px;top:164.9px;font-size:13.04px;line-height:13.04px;color:#d0d8e6;transform:scaleX(0.896);font-weight:bold;">41</div>
<div class="t" style="left:973.7px;top:164.9px;font-size:13.04px;line-height:13.04px;color:#d0d8e6;transform:scaleX(0.896);font-weight:bold;">45</div>
<div class="t" style="left:1031.2px;top:164.9px;font-size:13.04px;line-height:13.04px;color:#d0d8e6;transform:scaleX(0.896);font-weight:bold;">49</div>
<div class="t" style="left:1088.6px;top:164.9px;font-size:13.04px;line-height:13.04px;color:#d0d8e6;transform:scaleX(0.896);font-weight:bold;">53</div>
<div class="t" style="left:1146.1px;top:164.9px;font-size:13.04px;line-height:13.04px;color:#d0d8e6;transform:scaleX(0.896);font-weight:bold;">57</div>
<div class="t" style="left:1203.6px;top:164.9px;font-size:13.04px;line-height:13.04px;color:#d0d8e6;transform:scaleX(0.896);font-weight:bold;">61</div>
<div class="t" style="left:1261.1px;top:164.9px;font-size:13.04px;line-height:13.04px;color:#d0d8e6;transform:scaleX(0.896);font-weight:bold;">65</div>
<div class="t" style="left:1318.6px;top:164.9px;font-size:13.04px;line-height:13.04px;color:#d0d8e6;transform:scaleX(0.896);font-weight:bold;">69</div>
<div class="t" style="left:1376.1px;top:164.9px;font-size:13.04px;line-height:13.04px;color:#d0d8e6;transform:scaleX(0.896);font-weight:bold;">73</div>
<div class="t" style="left:1433.6px;top:164.9px;font-size:13.04px;line-height:13.04px;color:#d0d8e6;transform:scaleX(0.896);font-weight:bold;">77</div>
<div class="t" style="left:1491.1px;top:164.9px;font-size:13.04px;line-height:13.04px;color:#d0d8e6;transform:scaleX(0.896);font-weight:bold;">81</div>
<div class="t" style="left:1548.5px;top:164.9px;font-size:13.04px;line-height:13.04px;color:#d0d8e6;transform:scaleX(0.896);font-weight:bold;">85</div>
<div class="t" style="left:1606.0px;top:164.9px;font-size:13.04px;line-height:13.04px;color:#d0d8e6;transform:scaleX(0.896);font-weight:bold;">89</div>
<svg style="left:341px;top:158px" width="12" height="14"><path d="M0 0.5 H10 L4 12 L0 12 Z" fill="#9ad848" stroke="#3a5a20" stroke-width="0.8"/></svg>
<div style="left:340.5px;top:182.2px;width:1313.5px;height:818.0px;background:#8ba7e3;"></div>
<div style="left:355.5px;top:182.2px;width:14.37px;height:818px;background:#87a3de"></div><div style="left:384.2px;top:182.2px;width:14.37px;height:818px;background:#87a3de"></div><div style="left:413.0px;top:182.2px;width:14.37px;height:818px;background:#87a3de"></div><div style="left:441.7px;top:182.2px;width:14.37px;height:818px;background:#87a3de"></div><div style="left:470.4px;top:182.2px;width:14.37px;height:818px;background:#87a3de"></div><div style="left:499.2px;top:182.2px;width:14.37px;height:818px;background:#87a3de"></div><div style="left:527.9px;top:182.2px;width:14.37px;height:818px;background:#87a3de"></div><div style="left:556.7px;top:182.2px;width:14.37px;height:818px;background:#87a3de"></div><div style="left:585.4px;top:182.2px;width:14.37px;height:818px;background:#87a3de"></div><div style="left:614.2px;top:182.2px;width:14.37px;height:818px;background:#87a3de"></div><div style="left:642.9px;top:182.2px;width:14.37px;height:818px;background:#87a3de"></div><div style="left:671.7px;top:182.2px;width:14.37px;height:818px;background:#87a3de"></div><div style="left:700.4px;top:182.2px;width:14.37px;height:818px;background:#87a3de"></div><div style="left:729.1px;top:182.2px;width:14.37px;height:818px;background:#87a3de"></div><div style="left:757.9px;top:182.2px;width:14.37px;height:818px;background:#87a3de"></div><div style="left:786.6px;top:182.2px;width:14.37px;height:818px;background:#87a3de"></div><div style="left:815.4px;top:182.2px;width:14.37px;height:818px;background:#87a3de"></div><div style="left:844.1px;top:182.2px;width:14.37px;height:818px;background:#87a3de"></div><div style="left:872.9px;top:182.2px;width:14.37px;height:818px;background:#87a3de"></div><div style="left:901.6px;top:182.2px;width:14.37px;height:818px;background:#87a3de"></div><div style="left:930.4px;top:182.2px;width:14.37px;height:818px;background:#87a3de"></div><div style="left:959.1px;top:182.2px;width:14.37px;height:818px;background:#87a3de"></div><div style="left:987.8px;top:182.2px;width:14.37px;height:818px;background:#87a3de"></div><div style="left:1016.6px;top:182.2px;width:14.37px;height:818px;background:#87a3de"></div><div style="left:1045.3px;top:182.2px;width:14.37px;height:818px;background:#87a3de"></div><div style="left:1074.1px;top:182.2px;width:14.37px;height:818px;background:#87a3de"></div><div style="left:1102.8px;top:182.2px;width:14.37px;height:818px;background:#87a3de"></div><div style="left:1131.6px;top:182.2px;width:14.37px;height:818px;background:#87a3de"></div><div style="left:1160.3px;top:182.2px;width:14.37px;height:818px;background:#87a3de"></div><div style="left:1189.0px;top:182.2px;width:14.37px;height:818px;background:#87a3de"></div><div style="left:1217.8px;top:182.2px;width:14.37px;height:818px;background:#87a3de"></div><div style="left:1246.5px;top:182.2px;width:14.37px;height:818px;background:#87a3de"></div><div style="left:1275.3px;top:182.2px;width:14.37px;height:818px;background:#87a3de"></div><div style="left:1304.0px;top:182.2px;width:14.37px;height:818px;background:#87a3de"></div><div style="left:1332.8px;top:182.2px;width:14.37px;height:818px;background:#87a3de"></div><div style="left:1361.5px;top:182.2px;width:14.37px;height:818px;background:#87a3de"></div><div style="left:1390.3px;top:182.2px;width:14.37px;height:818px;background:#87a3de"></div><div style="left:1419.0px;top:182.2px;width:14.37px;height:818px;background:#87a3de"></div><div style="left:1447.7px;top:182.2px;width:14.37px;height:818px;background:#87a3de"></div><div style="left:1476.5px;top:182.2px;width:14.37px;height:818px;background:#87a3de"></div><div style="left:1505.2px;top:182.2px;width:14.37px;height:818px;background:#87a3de"></div><div style="left:1534.0px;top:182.2px;width:14.37px;height:818px;background:#87a3de"></div><div style="left:1562.7px;top:182.2px;width:14.37px;height:818px;background:#87a3de"></div><div style="left:1591.5px;top:182.2px;width:14.37px;height:818px;background:#87a3de"></div><div style="left:1620.2px;top:182.2px;width:14.37px;height:818px;background:#87a3de"></div><div style="left:1649.0px;top:182.2px;width:14.37px;height:818px;background:#87a3de"></div>
<div style="left:341px;top:182.2px;width:1px;height:818px;background:#5c74b6"></div><div style="left:355px;top:182.2px;width:1px;height:818px;background:#5c74b6"></div><div style="left:370px;top:182.2px;width:1px;height:818px;background:#5c74b6"></div><div style="left:384px;top:182.2px;width:1px;height:818px;background:#5c74b6"></div><div style="left:398px;top:182.2px;width:1px;height:818px;background:#5c74b6"></div><div style="left:413px;top:182.2px;width:1px;height:818px;background:#5c74b6"></div><div style="left:427px;top:182.2px;width:1px;height:818px;background:#5c74b6"></div><div style="left:442px;top:182.2px;width:1px;height:818px;background:#5c74b6"></div><div style="left:456px;top:182.2px;width:1px;height:818px;background:#5c74b6"></div><div style="left:470px;top:182.2px;width:1px;height:818px;background:#5c74b6"></div><div style="left:485px;top:182.2px;width:1px;height:818px;background:#5c74b6"></div><div style="left:499px;top:182.2px;width:1px;height:818px;background:#5c74b6"></div><div style="left:513px;top:182.2px;width:1px;height:818px;background:#5c74b6"></div><div style="left:528px;top:182.2px;width:1px;height:818px;background:#5c74b6"></div><div style="left:542px;top:182.2px;width:1px;height:818px;background:#5c74b6"></div><div style="left:556px;top:182.2px;width:1px;height:818px;background:#5c74b6"></div><div style="left:571px;top:182.2px;width:1px;height:818px;background:#5c74b6"></div><div style="left:585px;top:182.2px;width:1px;height:818px;background:#5c74b6"></div><div style="left:600px;top:182.2px;width:1px;height:818px;background:#5c74b6"></div><div style="left:614px;top:182.2px;width:1px;height:818px;background:#5c74b6"></div><div style="left:628px;top:182.2px;width:1px;height:818px;background:#5c74b6"></div><div style="left:643px;top:182.2px;width:1px;height:818px;background:#5c74b6"></div><div style="left:657px;top:182.2px;width:1px;height:818px;background:#5c74b6"></div><div style="left:671px;top:182.2px;width:1px;height:818px;background:#5c74b6"></div><div style="left:686px;top:182.2px;width:1px;height:818px;background:#5c74b6"></div><div style="left:700px;top:182.2px;width:1px;height:818px;background:#5c74b6"></div><div style="left:715px;top:182.2px;width:1px;height:818px;background:#5c74b6"></div><div style="left:729px;top:182.2px;width:1px;height:818px;background:#5c74b6"></div><div style="left:743px;top:182.2px;width:1px;height:818px;background:#5c74b6"></div><div style="left:758px;top:182.2px;width:1px;height:818px;background:#5c74b6"></div><div style="left:772px;top:182.2px;width:1px;height:818px;background:#5c74b6"></div><div style="left:786px;top:182.2px;width:1px;height:818px;background:#5c74b6"></div><div style="left:801px;top:182.2px;width:1px;height:818px;background:#5c74b6"></div><div style="left:815px;top:182.2px;width:1px;height:818px;background:#5c74b6"></div><div style="left:830px;top:182.2px;width:1px;height:818px;background:#5c74b6"></div><div style="left:844px;top:182.2px;width:1px;height:818px;background:#5c74b6"></div><div style="left:858px;top:182.2px;width:1px;height:818px;background:#5c74b6"></div><div style="left:873px;top:182.2px;width:1px;height:818px;background:#5c74b6"></div><div style="left:887px;top:182.2px;width:1px;height:818px;background:#5c74b6"></div><div style="left:901px;top:182.2px;width:1px;height:818px;background:#5c74b6"></div><div style="left:916px;top:182.2px;width:1px;height:818px;background:#5c74b6"></div><div style="left:930px;top:182.2px;width:1px;height:818px;background:#5c74b6"></div><div style="left:945px;top:182.2px;width:1px;height:818px;background:#5c74b6"></div><div style="left:959px;top:182.2px;width:1px;height:818px;background:#5c74b6"></div><div style="left:973px;top:182.2px;width:1px;height:818px;background:#5c74b6"></div><div style="left:988px;top:182.2px;width:1px;height:818px;background:#5c74b6"></div><div style="left:1002px;top:182.2px;width:1px;height:818px;background:#5c74b6"></div><div style="left:1016px;top:182.2px;width:1px;height:818px;background:#5c74b6"></div><div style="left:1031px;top:182.2px;width:1px;height:818px;background:#5c74b6"></div><div style="left:1045px;top:182.2px;width:1px;height:818px;background:#5c74b6"></div><div style="left:1060px;top:182.2px;width:1px;height:818px;background:#5c74b6"></div><div style="left:1074px;top:182.2px;width:1px;height:818px;background:#5c74b6"></div><div style="left:1088px;top:182.2px;width:1px;height:818px;background:#5c74b6"></div><div style="left:1103px;top:182.2px;width:1px;height:818px;background:#5c74b6"></div><div style="left:1117px;top:182.2px;width:1px;height:818px;background:#5c74b6"></div><div style="left:1131px;top:182.2px;width:1px;height:818px;background:#5c74b6"></div><div style="left:1146px;top:182.2px;width:1px;height:818px;background:#5c74b6"></div><div style="left:1160px;top:182.2px;width:1px;height:818px;background:#5c74b6"></div><div style="left:1174px;top:182.2px;width:1px;height:818px;background:#5c74b6"></div><div style="left:1189px;top:182.2px;width:1px;height:818px;background:#5c74b6"></div><div style="left:1203px;top:182.2px;width:1px;height:818px;background:#5c74b6"></div><div style="left:1218px;top:182.2px;width:1px;height:818px;background:#5c74b6"></div><div style="left:1232px;top:182.2px;width:1px;height:818px;background:#5c74b6"></div><div style="left:1246px;top:182.2px;width:1px;height:818px;background:#5c74b6"></div><div style="left:1261px;top:182.2px;width:1px;height:818px;background:#5c74b6"></div><div style="left:1275px;top:182.2px;width:1px;height:818px;background:#5c74b6"></div><div style="left:1289px;top:182.2px;width:1px;height:818px;background:#5c74b6"></div><div style="left:1304px;top:182.2px;width:1px;height:818px;background:#5c74b6"></div><div style="left:1318px;top:182.2px;width:1px;height:818px;background:#5c74b6"></div><div style="left:1333px;top:182.2px;width:1px;height:818px;background:#5c74b6"></div><div style="left:1347px;top:182.2px;width:1px;height:818px;background:#5c74b6"></div><div style="left:1361px;top:182.2px;width:1px;height:818px;background:#5c74b6"></div><div style="left:1376px;top:182.2px;width:1px;height:818px;background:#5c74b6"></div><div style="left:1390px;top:182.2px;width:1px;height:818px;background:#5c74b6"></div><div style="left:1404px;top:182.2px;width:1px;height:818px;background:#5c74b6"></div><div style="left:1419px;top:182.2px;width:1px;height:818px;background:#5c74b6"></div><div style="left:1433px;top:182.2px;width:1px;height:818px;background:#5c74b6"></div><div style="left:1448px;top:182.2px;width:1px;height:818px;background:#5c74b6"></div><div style="left:1462px;top:182.2px;width:1px;height:818px;background:#5c74b6"></div><div style="left:1476px;top:182.2px;width:1px;height:818px;background:#5c74b6"></div><div style="left:1491px;top:182.2px;width:1px;height:818px;background:#5c74b6"></div><div style="left:1505px;top:182.2px;width:1px;height:818px;background:#5c74b6"></div><div style="left:1519px;top:182.2px;width:1px;height:818px;background:#5c74b6"></div><div style="left:1534px;top:182.2px;width:1px;height:818px;background:#5c74b6"></div><div style="left:1548px;top:182.2px;width:1px;height:818px;background:#5c74b6"></div><div style="left:1563px;top:182.2px;width:1px;height:818px;background:#5c74b6"></div><div style="left:1577px;top:182.2px;width:1px;height:818px;background:#5c74b6"></div><div style="left:1591px;top:182.2px;width:1px;height:818px;background:#5c74b6"></div><div style="left:1606px;top:182.2px;width:1px;height:818px;background:#5c74b6"></div><div style="left:1620px;top:182.2px;width:1px;height:818px;background:#5c74b6"></div><div style="left:1634px;top:182.2px;width:1px;height:818px;background:#5c74b6"></div><div style="left:1649px;top:182.2px;width:1px;height:818px;background:#5c74b6"></div>
<div style="left:340.5px;top:182.0px;width:1313.5px;height:1.0px;background:#6078b8;"></div>
<div style="left:340.5px;top:252.0px;width:1313.5px;height:1.0px;background:#6078b8;"></div>
<div style="left:340.5px;top:322.0px;width:1313.5px;height:1.0px;background:#6078b8;"></div>
<div style="left:340.5px;top:392.0px;width:1313.5px;height:1.0px;background:#6078b8;"></div>
<div style="left:340.5px;top:460.0px;width:1313.5px;height:1.0px;background:#6078b8;"></div>
<div style="left:340.5px;top:530.0px;width:1313.5px;height:1.0px;background:#6078b8;"></div>
<div style="left:340.5px;top:600.0px;width:1313.5px;height:1.0px;background:#6078b8;"></div>
<div style="left:340.5px;top:670.0px;width:1313.5px;height:1.0px;background:#6078b8;"></div>
<div style="left:340.5px;top:738.0px;width:1313.5px;height:1.0px;background:#6078b8;"></div>
<div style="left:340.5px;top:808.0px;width:1313.5px;height:1.0px;background:#6078b8;"></div>
<div style="left:340.5px;top:878.0px;width:1313.5px;height:1.0px;background:#6078b8;"></div>
<div style="left:340.5px;top:948.0px;width:1313.5px;height:1.0px;background:#6078b8;"></div>
<div style="left:340.5px;top:1018.0px;width:1313.5px;height:1.0px;background:#6078b8;"></div>
<div style="left:340.5px;top:998.5px;width:1340.0px;height:1.5px;background:#1a2230;"></div>
<div style="left:1654.0px;top:133.0px;width:26.0px;height:867.0px;background:#3a4046;"></div>
<div style="left:1655.0px;top:133.3px;width:25.0px;height:23.7px;background:#4d555b;box-shadow:inset 0 0 0 1px #40474c;"></div>
<div style="left:1666.0px;top:141.0px;width:2.0px;height:7.0px;background:#2a2f33;"></div>
<div style="left:1655.0px;top:158.5px;width:25.0px;height:24.0px;background:#4d555b;box-shadow:inset 0 0 0 1px #40474c;"></div>
<svg style="left:1660px;top:163px" width="16" height="12"><path d="M3 9 L8 4 L13 9" fill="none" stroke="#2a2f33" stroke-width="1.6"/></svg>
<div style="left:1655.0px;top:183.0px;width:25.0px;height:40.0px;background:#50575d;box-shadow:inset 0 0 0 1px #43494e;"></div>
<div style="left:1655.0px;top:975.0px;width:25.0px;height:25.0px;background:#4d555b;box-shadow:inset 0 0 0 1px #40474c;"></div>
<svg style="left:1660px;top:982px" width="16" height="12"><path d="M3 3 L8 8 L13 3" fill="none" stroke="#2a2f33" stroke-width="1.6"/></svg>
<div style="left:341.1px;top:201.7px;width:158.1px;height:50.3px;background:#beb248;"></div>
<div style="left:628.5px;top:201.7px;width:28.7px;height:50.3px;background:#beb248;"></div>
<div style="left:657.3px;top:201.7px;width:28.7px;height:50.3px;background:#beb248;"></div>
<div style="left:686.0px;top:201.7px;width:28.7px;height:50.3px;background:#beb248;"></div>
<div style="left:714.8px;top:201.7px;width:43.1px;height:50.3px;background:#beb248;"></div>
<div style="left:757.9px;top:201.7px;width:57.5px;height:50.3px;background:#beb248;"></div>
<div style="left:815.4px;top:201.7px;width:57.5px;height:50.3px;background:#beb248;"></div>
<div style="left:1016.6px;top:201.7px;width:113.5px;height:50.3px;background:#beb248;"></div>
<div style="left:1145.9px;top:201.7px;width:57.5px;height:50.3px;background:#beb248;"></div>
<div style="left:1203.4px;top:201.7px;width:57.5px;height:50.3px;background:#beb248;"></div>
<div style="left:1260.9px;top:201.7px;width:13.7px;height:50.3px;background:#beb248;"></div>
<div style="left:1318.4px;top:201.7px;width:57.5px;height:50.3px;background:#beb248;"></div>
<div style="left:1375.9px;top:201.7px;width:57.5px;height:50.3px;background:#beb248;"></div>
<div style="left:341.1px;top:271.7px;width:172.5px;height:50.3px;background:#1e1a8c;"></div>
<div style="left:513.6px;top:271.7px;width:57.5px;height:50.3px;background:#1e1a8c;"></div>
<div style="left:571.1px;top:271.7px;width:57.5px;height:50.3px;background:#1e1a8c;"></div>
<div style="left:628.5px;top:271.7px;width:57.5px;height:50.3px;background:#1e1a8c;"></div>
<div style="left:686.0px;top:271.7px;width:57.5px;height:50.3px;background:#1e1a8c;"></div>
<div style="left:757.9px;top:271.7px;width:57.5px;height:50.3px;background:#1e1a8c;"></div>
<div style="left:815.4px;top:271.7px;width:57.5px;height:50.3px;background:#1e1a8c;"></div>
<div style="left:872.9px;top:271.7px;width:23.0px;height:50.3px;background:#1e1a8c;"></div>
<div style="left:901.6px;top:271.7px;width:28.7px;height:50.3px;background:#1e1a8c;"></div>
<div style="left:930.4px;top:271.7px;width:28.7px;height:50.3px;background:#1e1a8c;"></div>
<div style="left:959.1px;top:271.7px;width:28.7px;height:50.3px;background:#1e1a8c;"></div>
<div style="left:987.8px;top:271.7px;width:23.0px;height:50.3px;background:#1e1a8c;"></div>
<div style="left:1016.6px;top:271.7px;width:129.3px;height:50.3px;background:#1e1a8c;"></div>
<div style="left:1145.9px;top:271.7px;width:57.5px;height:50.3px;background:#1e1a8c;"></div>
<div style="left:1203.4px;top:271.7px;width:57.5px;height:50.3px;background:#1e1a8c;"></div>
<div style="left:1260.9px;top:271.7px;width:57.5px;height:50.3px;background:#1e1a8c;"></div>
<div style="left:1318.4px;top:271.7px;width:57.5px;height:50.3px;background:#1e1a8c;"></div>
<div style="left:1375.9px;top:271.7px;width:57.5px;height:50.3px;background:#1e1a8c;"></div>
<div style="left:1433.4px;top:271.7px;width:57.5px;height:50.3px;background:#1e1a8c;"></div>
<div style="left:341.1px;top:341.7px;width:115.0px;height:50.3px;background:#4e1ea0;"></div>
<div style="left:456.1px;top:341.7px;width:57.5px;height:50.3px;background:#4e1ea0;"></div>
<div style="left:513.6px;top:341.7px;width:57.5px;height:50.3px;background:#4e1ea0;"></div>
<div style="left:571.1px;top:341.7px;width:57.5px;height:50.3px;background:#4e1ea0;"></div>
<div style="left:628.5px;top:341.7px;width:57.5px;height:50.3px;background:#4e1ea0;"></div>
<div style="left:686.0px;top:341.7px;width:57.5px;height:50.3px;background:#4e1ea0;"></div>
<div style="left:743.5px;top:341.7px;width:14.4px;height:50.3px;background:#4e1ea0;"></div>
<div style="left:757.9px;top:341.7px;width:57.5px;height:50.3px;background:#4e1ea0;"></div>
<div style="left:815.4px;top:341.7px;width:57.5px;height:50.3px;background:#4e1ea0;"></div>
<div style="left:872.9px;top:341.7px;width:23.0px;height:50.3px;background:#4e1ea0;"></div>
<div style="left:901.6px;top:341.7px;width:28.7px;height:50.3px;background:#4e1ea0;"></div>
<div style="left:930.4px;top:341.7px;width:28.7px;height:50.3px;background:#4e1ea0;"></div>
<div style="left:959.1px;top:341.7px;width:28.7px;height:50.3px;background:#4e1ea0;"></div>
<div style="left:987.8px;top:341.7px;width:28.7px;height:50.3px;background:#4e1ea0;"></div>
<div style="left:1016.6px;top:341.7px;width:57.5px;height:50.3px;background:#4e1ea0;"></div>
<div style="left:1074.1px;top:341.7px;width:57.5px;height:50.3px;background:#4e1ea0;"></div>
<div style="left:1131.6px;top:341.7px;width:14.4px;height:50.3px;background:#4e1ea0;"></div>
<div style="left:1145.9px;top:341.7px;width:28.7px;height:50.3px;background:#4e1ea0;"></div>
<div style="left:1174.7px;top:341.7px;width:28.7px;height:50.3px;background:#4e1ea0;"></div>
<div style="left:1203.4px;top:341.7px;width:57.5px;height:50.3px;background:#4e1ea0;"></div>
<div style="left:1260.9px;top:341.7px;width:28.7px;height:50.3px;background:#4e1ea0;"></div>
<div style="left:1289.7px;top:341.7px;width:28.7px;height:50.3px;background:#4e1ea0;"></div>
<div style="left:1318.4px;top:341.7px;width:57.5px;height:50.3px;background:#4e1ea0;"></div>
<div style="left:1375.9px;top:341.7px;width:57.5px;height:50.3px;background:#4e1ea0;"></div>
<div style="left:341.1px;top:411.7px;width:57.5px;height:48.3px;background:#197391;"></div>
<div style="left:398.6px;top:411.7px;width:57.5px;height:48.3px;background:#197391;"></div>
<div style="left:456.1px;top:411.7px;width:43.1px;height:48.3px;background:#197391;"></div>
<div style="left:757.9px;top:411.7px;width:57.5px;height:48.3px;background:#197391;"></div>
<div style="left:815.4px;top:411.7px;width:57.5px;height:48.3px;background:#197391;"></div>
<div style="left:1145.9px;top:411.7px;width:57.5px;height:48.3px;background:#197391;"></div>
<div style="left:1203.4px;top:411.7px;width:57.5px;height:48.3px;background:#197391;"></div>
<div style="left:1318.4px;top:411.7px;width:115.0px;height:48.3px;background:#197391;"></div>
<div style="left:1433.4px;top:411.7px;width:57.5px;height:48.3px;background:#197391;"></div>
<div style="left:1490.9px;top:411.7px;width:152.3px;height:48.3px;background:#197391;"></div>
<div style="left:513.6px;top:479.7px;width:115.0px;height:50.3px;background:#7d28e1;"></div>
<div style="left:628.5px;top:479.7px;width:115.0px;height:50.3px;background:#7d28e1;"></div>
<div style="left:757.9px;top:479.7px;width:57.5px;height:50.3px;background:#7d28e1;"></div>
<div style="left:815.4px;top:479.7px;width:57.5px;height:50.3px;background:#7d28e1;"></div>
<div style="left:1145.9px;top:479.7px;width:57.5px;height:50.3px;background:#7d28e1;"></div>
<div style="left:1203.4px;top:479.7px;width:57.5px;height:50.3px;background:#7d28e1;"></div>
<div style="left:341.1px;top:549.7px;width:158.1px;height:50.3px;background:#46c832;"></div>
<div style="left:513.6px;top:549.7px;width:57.5px;height:50.3px;background:#46c832;"></div>
<div style="left:571.1px;top:549.7px;width:57.5px;height:50.3px;background:#46c832;"></div>
<div style="left:628.5px;top:549.7px;width:57.5px;height:50.3px;background:#46c832;"></div>
<div style="left:686.0px;top:549.7px;width:57.5px;height:50.3px;background:#46c832;"></div>
<div style="left:757.9px;top:549.7px;width:57.5px;height:50.3px;background:#46c832;"></div>
<div style="left:815.4px;top:549.7px;width:57.5px;height:50.3px;background:#46c832;"></div>
<div style="left:872.9px;top:549.7px;width:28.7px;height:50.3px;background:#46c832;"></div>
<div style="left:901.6px;top:549.7px;width:28.7px;height:50.3px;background:#46c832;"></div>
<div style="left:930.4px;top:549.7px;width:28.7px;height:50.3px;background:#46c832;"></div>
<div style="left:959.1px;top:549.7px;width:28.7px;height:50.3px;background:#46c832;"></div>
<div style="left:987.8px;top:549.7px;width:23.0px;height:50.3px;background:#46c832;"></div>
<div style="left:1016.6px;top:549.7px;width:113.5px;height:50.3px;background:#46c832;"></div>
<div style="left:1145.9px;top:549.7px;width:57.5px;height:50.3px;background:#46c832;"></div>
<div style="left:1203.4px;top:549.7px;width:57.5px;height:50.3px;background:#46c832;"></div>
<div style="left:1260.9px;top:549.7px;width:57.5px;height:50.3px;background:#46c832;"></div>
<div style="left:1318.4px;top:549.7px;width:57.5px;height:50.3px;background:#46c832;"></div>
<div style="left:1375.9px;top:549.7px;width:57.5px;height:50.3px;background:#46c832;"></div>
<div style="left:1433.4px;top:549.7px;width:57.5px;height:50.3px;background:#46c832;"></div>
<div style="left:341.1px;top:619.7px;width:172.5px;height:50.3px;background:#781996;"></div>
<div style="left:513.6px;top:619.7px;width:57.5px;height:50.3px;background:#781996;"></div>
<div style="left:571.1px;top:619.7px;width:57.5px;height:50.3px;background:#781996;"></div>
<div style="left:628.5px;top:619.7px;width:57.5px;height:50.3px;background:#781996;"></div>
<div style="left:686.0px;top:619.7px;width:57.5px;height:50.3px;background:#781996;"></div>
<div style="left:872.9px;top:619.7px;width:23.0px;height:50.3px;background:#781996;"></div>
<div style="left:901.6px;top:619.7px;width:28.7px;height:50.3px;background:#781996;"></div>
<div style="left:930.4px;top:619.7px;width:28.7px;height:50.3px;background:#781996;"></div>
<div style="left:959.1px;top:619.7px;width:28.7px;height:50.3px;background:#781996;"></div>
<div style="left:987.8px;top:619.7px;width:23.0px;height:50.3px;background:#781996;"></div>
<div style="left:1016.6px;top:619.7px;width:113.5px;height:50.3px;background:#781996;"></div>
<div style="left:1260.9px;top:619.7px;width:57.5px;height:50.3px;background:#781996;"></div>
<div style="left:1318.4px;top:619.7px;width:57.5px;height:50.3px;background:#781996;"></div>
<div style="left:1375.9px;top:619.7px;width:57.5px;height:50.3px;background:#781996;"></div>
<svg style="left:0;top:0" width="1680" height="1000"><g fill="rgba(0,0,0,0.09)"><rect x="355.0" y="201.7" width="1.0" height="50.3"/><rect x="369.3" y="201.7" width="1.0" height="50.3"/><rect x="383.7" y="201.7" width="1.0" height="50.3"/><rect x="398.1" y="201.7" width="1.0" height="50.3"/><rect x="412.5" y="201.7" width="1.0" height="50.3"/><rect x="426.8" y="201.7" width="1.0" height="50.3"/><rect x="441.2" y="201.7" width="1.0" height="50.3"/><rect x="455.6" y="201.7" width="1.0" height="50.3"/><rect x="469.9" y="201.7" width="1.0" height="50.3"/><rect x="484.3" y="201.7" width="1.0" height="50.3"/><rect x="642.4" y="201.7" width="1.0" height="50.3"/><rect x="671.2" y="201.7" width="1.0" height="50.3"/><rect x="699.9" y="201.7" width="1.0" height="50.3"/><rect x="728.6" y="201.7" width="1.0" height="50.3"/><rect x="743.0" y="201.7" width="1.0" height="50.3"/><rect x="771.8" y="201.7" width="1.0" height="50.3"/><rect x="786.1" y="201.7" width="1.0" height="50.3"/><rect x="800.5" y="201.7" width="1.0" height="50.3"/><rect x="829.2" y="201.7" width="1.0" height="50.3"/><rect x="843.6" y="201.7" width="1.0" height="50.3"/><rect x="858.0" y="201.7" width="1.0" height="50.3"/><rect x="1030.5" y="201.7" width="1.0" height="50.3"/><rect x="1044.8" y="201.7" width="1.0" height="50.3"/><rect x="1059.2" y="201.7" width="1.0" height="50.3"/><rect x="1073.6" y="201.7" width="1.0" height="50.3"/><rect x="1087.9" y="201.7" width="1.0" height="50.3"/><rect x="1102.3" y="201.7" width="1.0" height="50.3"/><rect x="1116.7" y="201.7" width="1.0" height="50.3"/><rect x="1159.8" y="201.7" width="1.0" height="50.3"/><rect x="1174.2" y="201.7" width="1.0" height="50.3"/><rect x="1188.5" y="201.7" width="1.0" height="50.3"/><rect x="1217.3" y="201.7" width="1.0" height="50.3"/><rect x="1231.7" y="201.7" width="1.0" height="50.3"/><rect x="1246.0" y="201.7" width="1.0" height="50.3"/><rect x="1332.3" y="201.7" width="1.0" height="50.3"/><rect x="1346.6" y="201.7" width="1.0" height="50.3"/><rect x="1361.0" y="201.7" width="1.0" height="50.3"/><rect x="1389.8" y="201.7" width="1.0" height="50.3"/><rect x="1404.1" y="201.7" width="1.0" height="50.3"/><rect x="1418.5" y="201.7" width="1.0" height="50.3"/><rect x="355.0" y="271.7" width="1.0" height="50.3"/><rect x="369.3" y="271.7" width="1.0" height="50.3"/><rect x="383.7" y="271.7" width="1.0" height="50.3"/><rect x="398.1" y="271.7" width="1.0" height="50.3"/><rect x="412.5" y="271.7" width="1.0" height="50.3"/><rect x="426.8" y="271.7" width="1.0" height="50.3"/><rect x="441.2" y="271.7" width="1.0" height="50.3"/><rect x="455.6" y="271.7" width="1.0" height="50.3"/><rect x="469.9" y="271.7" width="1.0" height="50.3"/><rect x="484.3" y="271.7" width="1.0" height="50.3"/><rect x="498.7" y="271.7" width="1.0" height="50.3"/><rect x="527.4" y="271.7" width="1.0" height="50.3"/><rect x="541.8" y="271.7" width="1.0" height="50.3"/><rect x="556.2" y="271.7" width="1.0" height="50.3"/><rect x="584.9" y="271.7" width="1.0" height="50.3"/><rect x="599.3" y="271.7" width="1.0" height="50.3"/><rect x="613.7" y="271.7" width="1.0" height="50.3"/><rect x="642.4" y="271.7" width="1.0" height="50.3"/><rect x="656.8" y="271.7" width="1.0" height="50.3"/><rect x="671.2" y="271.7" width="1.0" height="50.3"/><rect x="699.9" y="271.7" width="1.0" height="50.3"/><rect x="714.3" y="271.7" width="1.0" height="50.3"/><rect x="728.6" y="271.7" width="1.0" height="50.3"/><rect x="771.8" y="271.7" width="1.0" height="50.3"/><rect x="786.1" y="271.7" width="1.0" height="50.3"/><rect x="800.5" y="271.7" width="1.0" height="50.3"/><rect x="829.2" y="271.7" width="1.0" height="50.3"/><rect x="843.6" y="271.7" width="1.0" height="50.3"/><rect x="858.0" y="271.7" width="1.0" height="50.3"/><rect x="886.7" y="271.7" width="1.0" height="50.3"/><rect x="915.5" y="271.7" width="1.0" height="50.3"/><rect x="944.2" y="271.7" width="1.0" height="50.3"/><rect x="973.0" y="271.7" width="1.0" height="50.3"/><rect x="1001.7" y="271.7" width="1.0" height="50.3"/><rect x="1030.5" y="271.7" width="1.0" height="50.3"/><rect x="1044.8" y="271.7" width="1.0" height="50.3"/><rect x="1059.2" y="271.7" width="1.0" height="50.3"/><rect x="1073.6" y="271.7" width="1.0" height="50.3"/><rect x="1087.9" y="271.7" width="1.0" height="50.3"/><rect x="1102.3" y="271.7" width="1.0" height="50.3"/><rect x="1116.7" y="271.7" width="1.0" height="50.3"/><rect x="1131.1" y="271.7" width="1.0" height="50.3"/><rect x="1159.8" y="271.7" width="1.0" height="50.3"/><rect x="1174.2" y="271.7" width="1.0" height="50.3"/><rect x="1188.5" y="271.7" width="1.0" height="50.3"/><rect x="1217.3" y="271.7" width="1.0" height="50.3"/><rect x="1231.7" y="271.7" width="1.0" height="50.3"/><rect x="1246.0" y="271.7" width="1.0" height="50.3"/><rect x="1274.8" y="271.7" width="1.0" height="50.3"/><rect x="1289.2" y="271.7" width="1.0" height="50.3"/><rect x="1303.5" y="271.7" width="1.0" height="50.3"/><rect x="1332.3" y="271.7" width="1.0" height="50.3"/><rect x="1346.6" y="271.7" width="1.0" height="50.3"/><rect x="1361.0" y="271.7" width="1.0" height="50.3"/><rect x="1389.8" y="271.7" width="1.0" height="50.3"/><rect x="1404.1" y="271.7" width="1.0" height="50.3"/><rect x="1418.5" y="271.7" width="1.0" height="50.3"/><rect x="1447.2" y="271.7" width="1.0" height="50.3"/><rect x="1461.6" y="271.7" width="1.0" height="50.3"/><rect x="1476.0" y="271.7" width="1.0" height="50.3"/><rect x="355.0" y="341.7" width="1.0" height="50.3"/><rect x="369.3" y="341.7" width="1.0" height="50.3"/><rect x="383.7" y="341.7" width="1.0" height="50.3"/><rect x="398.1" y="341.7" width="1.0" height="50.3"/><rect x="412.5" y="341.7" width="1.0" height="50.3"/><rect x="426.8" y="341.7" width="1.0" height="50.3"/><rect x="441.2" y="341.7" width="1.0" height="50.3"/><rect x="469.9" y="341.7" width="1.0" height="50.3"/><rect x="484.3" y="341.7" width="1.0" height="50.3"/><rect x="498.7" y="341.7" width="1.0" height="50.3"/><rect x="527.4" y="341.7" width="1.0" height="50.3"/><rect x="541.8" y="341.7" width="1.0" height="50.3"/><rect x="556.2" y="341.7" width="1.0" height="50.3"/><rect x="584.9" y="341.7" width="1.0" height="50.3"/><rect x="599.3" y="341.7" width="1.0" height="50.3"/><rect x="613.7" y="341.7" width="1.0" height="50.3"/><rect x="642.4" y="341.7" width="1.0" height="50.3"/><rect x="656.8" y="341.7" width="1.0" height="50.3"/><rect x="671.2" y="341.7" width="1.0" height="50.3"/><rect x="699.9" y="341.7" width="1.0" height="50.3"/><rect x="714.3" y="341.7" width="1.0" height="50.3"/><rect x="728.6" y="341.7" width="1.0" height="50.3"/><rect x="771.8" y="341.7" width="1.0" height="50.3"/><rect x="786.1" y="341.7" width="1.0" height="50.3"/><rect x="800.5" y="341.7" width="1.0" height="50.3"/><rect x="829.2" y="341.7" width="1.0" height="50.3"/><rect x="843.6" y="341.7" width="1.0" height="50.3"/><rect x="858.0" y="341.7" width="1.0" height="50.3"/><rect x="886.7" y="341.7" width="1.0" height="50.3"/><rect x="915.5" y="341.7" width="1.0" height="50.3"/><rect x="944.2" y="341.7" width="1.0" height="50.3"/><rect x="973.0" y="341.7" width="1.0" height="50.3"/><rect x="1001.7" y="341.7" width="1.0" height="50.3"/><rect x="1030.5" y="341.7" width="1.0" height="50.3"/><rect x="1044.8" y="341.7" width="1.0" height="50.3"/><rect x="1059.2" y="341.7" width="1.0" height="50.3"/><rect x="1087.9" y="341.7" width="1.0" height="50.3"/><rect x="1102.3" y="341.7" width="1.0" height="50.3"/><rect x="1116.7" y="341.7" width="1.0" height="50.3"/><rect x="1159.8" y="341.7" width="1.0" height="50.3"/><rect x="1188.5" y="341.7" width="1.0" height="50.3"/><rect x="1217.3" y="341.7" width="1.0" height="50.3"/><rect x="1231.7" y="341.7" width="1.0" height="50.3"/><rect x="1246.0" y="341.7" width="1.0" height="50.3"/><rect x="1274.8" y="341.7" width="1.0" height="50.3"/><rect x="1303.5" y="341.7" width="1.0" height="50.3"/><rect x="1332.3" y="341.7" width="1.0" height="50.3"/><rect x="1346.6" y="341.7" width="1.0" height="50.3"/><rect x="1361.0" y="341.7" width="1.0" height="50.3"/><rect x="1389.8" y="341.7" width="1.0" height="50.3"/><rect x="1404.1" y="341.7" width="1.0" height="50.3"/><rect x="1418.5" y="341.7" width="1.0" height="50.3"/><rect x="355.0" y="411.7" width="1.0" height="48.3"/><rect x="369.3" y="411.7" width="1.0" height="48.3"/><rect x="383.7" y="411.7" width="1.0" height="48.3"/><rect x="412.5" y="411.7" width="1.0" height="48.3"/><rect x="426.8" y="411.7" width="1.0" height="48.3"/><rect x="441.2" y="411.7" width="1.0" height="48.3"/><rect x="469.9" y="411.7" width="1.0" height="48.3"/><rect x="484.3" y="411.7" width="1.0" height="48.3"/><rect x="771.8" y="411.7" width="1.0" height="48.3"/><rect x="786.1" y="411.7" width="1.0" height="48.3"/><rect x="800.5" y="411.7" width="1.0" height="48.3"/><rect x="829.2" y="411.7" width="1.0" height="48.3"/><rect x="843.6" y="411.7" width="1.0" height="48.3"/><rect x="858.0" y="411.7" width="1.0" height="48.3"/><rect x="1159.8" y="411.7" width="1.0" height="48.3"/><rect x="1174.2" y="411.7" width="1.0" height="48.3"/><rect x="1188.5" y="411.7" width="1.0" height="48.3"/><rect x="1217.3" y="411.7" width="1.0" height="48.3"/><rect x="1231.7" y="411.7" width="1.0" height="48.3"/><rect x="1246.0" y="411.7" width="1.0" height="48.3"/><rect x="1332.3" y="411.7" width="1.0" height="48.3"/><rect x="1346.6" y="411.7" width="1.0" height="48.3"/><rect x="1361.0" y="411.7" width="1.0" height="48.3"/><rect x="1375.4" y="411.7" width="1.0" height="48.3"/><rect x="1389.8" y="411.7" width="1.0" height="48.3"/><rect x="1404.1" y="411.7" width="1.0" height="48.3"/><rect x="1418.5" y="411.7" width="1.0" height="48.3"/><rect x="1447.2" y="411.7" width="1.0" height="48.3"/><rect x="1461.6" y="411.7" width="1.0" height="48.3"/><rect x="1476.0" y="411.7" width="1.0" height="48.3"/><rect x="1504.7" y="411.7" width="1.0" height="48.3"/><rect x="1519.1" y="411.7" width="1.0" height="48.3"/><rect x="1533.5" y="411.7" width="1.0" height="48.3"/><rect x="1547.8" y="411.7" width="1.0" height="48.3"/><rect x="1562.2" y="411.7" width="1.0" height="48.3"/><rect x="1576.6" y="411.7" width="1.0" height="48.3"/><rect x="1591.0" y="411.7" width="1.0" height="48.3"/><rect x="1605.3" y="411.7" width="1.0" height="48.3"/><rect x="1619.7" y="411.7" width="1.0" height="48.3"/><rect x="1634.1" y="411.7" width="1.0" height="48.3"/><rect x="527.4" y="479.7" width="1.0" height="50.3"/><rect x="541.8" y="479.7" width="1.0" height="50.3"/><rect x="556.2" y="479.7" width="1.0" height="50.3"/><rect x="570.6" y="479.7" width="1.0" height="50.3"/><rect x="584.9" y="479.7" width="1.0" height="50.3"/><rect x="599.3" y="479.7" width="1.0" height="50.3"/><rect x="613.7" y="479.7" width="1.0" height="50.3"/><rect x="642.4" y="479.7" width="1.0" height="50.3"/><rect x="656.8" y="479.7" width="1.0" height="50.3"/><rect x="671.2" y="479.7" width="1.0" height="50.3"/><rect x="685.5" y="479.7" width="1.0" height="50.3"/><rect x="699.9" y="479.7" width="1.0" height="50.3"/><rect x="714.3" y="479.7" width="1.0" height="50.3"/><rect x="728.6" y="479.7" width="1.0" height="50.3"/><rect x="771.8" y="479.7" width="1.0" height="50.3"/><rect x="786.1" y="479.7" width="1.0" height="50.3"/><rect x="800.5" y="479.7" width="1.0" height="50.3"/><rect x="829.2" y="479.7" width="1.0" height="50.3"/><rect x="843.6" y="479.7" width="1.0" height="50.3"/><rect x="858.0" y="479.7" width="1.0" height="50.3"/><rect x="1159.8" y="479.7" width="1.0" height="50.3"/><rect x="1174.2" y="479.7" width="1.0" height="50.3"/><rect x="1188.5" y="479.7" width="1.0" height="50.3"/><rect x="1217.3" y="479.7" width="1.0" height="50.3"/><rect x="1231.7" y="479.7" width="1.0" height="50.3"/><rect x="1246.0" y="479.7" width="1.0" height="50.3"/><rect x="355.0" y="549.7" width="1.0" height="50.3"/><rect x="369.3" y="549.7" width="1.0" height="50.3"/><rect x="383.7" y="549.7" width="1.0" height="50.3"/><rect x="398.1" y="549.7" width="1.0" height="50.3"/><rect x="412.5" y="549.7" width="1.0" height="50.3"/><rect x="426.8" y="549.7" width="1.0" height="50.3"/><rect x="441.2" y="549.7" width="1.0" height="50.3"/><rect x="455.6" y="549.7" width="1.0" height="50.3"/><rect x="469.9" y="549.7" width="1.0" height="50.3"/><rect x="484.3" y="549.7" width="1.0" height="50.3"/><rect x="527.4" y="549.7" width="1.0" height="50.3"/><rect x="541.8" y="549.7" width="1.0" height="50.3"/><rect x="556.2" y="549.7" width="1.0" height="50.3"/><rect x="584.9" y="549.7" width="1.0" height="50.3"/><rect x="599.3" y="549.7" width="1.0" height="50.3"/><rect x="613.7" y="549.7" width="1.0" height="50.3"/><rect x="642.4" y="549.7" width="1.0" height="50.3"/><rect x="656.8" y="549.7" width="1.0" height="50.3"/><rect x="671.2" y="549.7" width="1.0" height="50.3"/><rect x="699.9" y="549.7" width="1.0" height="50.3"/><rect x="714.3" y="549.7" width="1.0" height="50.3"/><rect x="728.6" y="549.7" width="1.0" height="50.3"/><rect x="771.8" y="549.7" width="1.0" height="50.3"/><rect x="786.1" y="549.7" width="1.0" height="50.3"/><rect x="800.5" y="549.7" width="1.0" height="50.3"/><rect x="829.2" y="549.7" width="1.0" height="50.3"/><rect x="843.6" y="549.7" width="1.0" height="50.3"/><rect x="858.0" y="549.7" width="1.0" height="50.3"/><rect x="886.7" y="549.7" width="1.0" height="50.3"/><rect x="915.5" y="549.7" width="1.0" height="50.3"/><rect x="944.2" y="549.7" width="1.0" height="50.3"/><rect x="973.0" y="549.7" width="1.0" height="50.3"/><rect x="1001.7" y="549.7" width="1.0" height="50.3"/><rect x="1030.5" y="549.7" width="1.0" height="50.3"/><rect x="1044.8" y="549.7" width="1.0" height="50.3"/><rect x="1059.2" y="549.7" width="1.0" height="50.3"/><rect x="1073.6" y="549.7" width="1.0" height="50.3"/><rect x="1087.9" y="549.7" width="1.0" height="50.3"/><rect x="1102.3" y="549.7" width="1.0" height="50.3"/><rect x="1116.7" y="549.7" width="1.0" height="50.3"/><rect x="1159.8" y="549.7" width="1.0" height="50.3"/><rect x="1174.2" y="549.7" width="1.0" height="50.3"/><rect x="1188.5" y="549.7" width="1.0" height="50.3"/><rect x="1217.3" y="549.7" width="1.0" height="50.3"/><rect x="1231.7" y="549.7" width="1.0" height="50.3"/><rect x="1246.0" y="549.7" width="1.0" height="50.3"/><rect x="1274.8" y="549.7" width="1.0" height="50.3"/><rect x="1289.2" y="549.7" width="1.0" height="50.3"/><rect x="1303.5" y="549.7" width="1.0" height="50.3"/><rect x="1332.3" y="549.7" width="1.0" height="50.3"/><rect x="1346.6" y="549.7" width="1.0" height="50.3"/><rect x="1361.0" y="549.7" width="1.0" height="50.3"/><rect x="1389.8" y="549.7" width="1.0" height="50.3"/><rect x="1404.1" y="549.7" width="1.0" height="50.3"/><rect x="1418.5" y="549.7" width="1.0" height="50.3"/><rect x="1447.2" y="549.7" width="1.0" height="50.3"/><rect x="1461.6" y="549.7" width="1.0" height="50.3"/><rect x="1476.0" y="549.7" width="1.0" height="50.3"/><rect x="355.0" y="619.7" width="1.0" height="50.3"/><rect x="369.3" y="619.7" width="1.0" height="50.3"/><rect x="383.7" y="619.7" width="1.0" height="50.3"/><rect x="398.1" y="619.7" width="1.0" height="50.3"/><rect x="412.5" y="619.7" width="1.0" height="50.3"/><rect x="426.8" y="619.7" width="1.0" height="50.3"/><rect x="441.2" y="619.7" width="1.0" height="50.3"/><rect x="455.6" y="619.7" width="1.0" height="50.3"/><rect x="469.9" y="619.7" width="1.0" height="50.3"/><rect x="484.3" y="619.7" width="1.0" height="50.3"/><rect x="498.7" y="619.7" width="1.0" height="50.3"/><rect x="527.4" y="619.7" width="1.0" height="50.3"/><rect x="541.8" y="619.7" width="1.0" height="50.3"/><rect x="556.2" y="619.7" width="1.0" height="50.3"/><rect x="584.9" y="619.7" width="1.0" height="50.3"/><rect x="599.3" y="619.7" width="1.0" height="50.3"/><rect x="613.7" y="619.7" width="1.0" height="50.3"/><rect x="642.4" y="619.7" width="1.0" height="50.3"/><rect x="656.8" y="619.7" width="1.0" height="50.3"/><rect x="671.2" y="619.7" width="1.0" height="50.3"/><rect x="699.9" y="619.7" width="1.0" height="50.3"/><rect x="714.3" y="619.7" width="1.0" height="50.3"/><rect x="728.6" y="619.7" width="1.0" height="50.3"/><rect x="886.7" y="619.7" width="1.0" height="50.3"/><rect x="915.5" y="619.7" width="1.0" height="50.3"/><rect x="944.2" y="619.7" width="1.0" height="50.3"/><rect x="973.0" y="619.7" width="1.0" height="50.3"/><rect x="1001.7" y="619.7" width="1.0" height="50.3"/><rect x="1030.5" y="619.7" width="1.0" height="50.3"/><rect x="1044.8" y="619.7" width="1.0" height="50.3"/><rect x="1059.2" y="619.7" width="1.0" height="50.3"/><rect x="1073.6" y="619.7" width="1.0" height="50.3"/><rect x="1087.9" y="619.7" width="1.0" height="50.3"/><rect x="1102.3" y="619.7" width="1.0" height="50.3"/><rect x="1116.7" y="619.7" width="1.0" height="50.3"/><rect x="1274.8" y="619.7" width="1.0" height="50.3"/><rect x="1289.2" y="619.7" width="1.0" height="50.3"/><rect x="1303.5" y="619.7" width="1.0" height="50.3"/><rect x="1332.3" y="619.7" width="1.0" height="50.3"/><rect x="1346.6" y="619.7" width="1.0" height="50.3"/><rect x="1361.0" y="619.7" width="1.0" height="50.3"/><rect x="1389.8" y="619.7" width="1.0" height="50.3"/><rect x="1404.1" y="619.7" width="1.0" height="50.3"/><rect x="1418.5" y="619.7" width="1.0" height="50.3"/></g><g fill="rgba(255,250,170,0.75)"><rect x="393.5" y="230.8" width="2.5" height="1.5"/><rect x="397.1" y="230.8" width="2.5" height="1.5"/><rect x="407.9" y="230.8" width="2.5" height="1.5"/><rect x="411.5" y="230.8" width="2.5" height="1.5"/><rect x="422.3" y="230.8" width="2.5" height="1.5"/><rect x="425.9" y="230.8" width="2.5" height="1.5"/><rect x="436.7" y="230.8" width="2.5" height="1.5"/><rect x="440.3" y="230.8" width="2.5" height="1.5"/><rect x="451.1" y="230.8" width="2.5" height="1.5"/><rect x="454.7" y="230.8" width="2.5" height="1.5"/><rect x="465.5" y="230.8" width="2.5" height="1.5"/><rect x="469.1" y="230.8" width="2.5" height="1.5"/><rect x="479.9" y="230.8" width="2.5" height="1.5"/><rect x="483.5" y="230.8" width="2.5" height="1.5"/><rect x="494.3" y="230.8" width="2.5" height="1.5"/><rect x="397.1" y="234.8" width="2.5" height="1.5"/><rect x="400.7" y="234.8" width="2.5" height="1.5"/><rect x="411.5" y="234.8" width="2.5" height="1.5"/><rect x="415.1" y="234.8" width="2.5" height="1.5"/><rect x="425.9" y="234.8" width="2.5" height="1.5"/><rect x="429.5" y="234.8" width="2.5" height="1.5"/><rect x="440.3" y="234.8" width="2.5" height="1.5"/><rect x="443.9" y="234.8" width="2.5" height="1.5"/><rect x="454.7" y="234.8" width="2.5" height="1.5"/><rect x="458.3" y="234.8" width="2.5" height="1.5"/><rect x="469.1" y="234.8" width="2.5" height="1.5"/><rect x="472.7" y="234.8" width="2.5" height="1.5"/><rect x="483.5" y="234.8" width="2.5" height="1.5"/><rect x="487.1" y="234.8" width="2.5" height="1.5"/><rect x="346.7" y="238.8" width="2.5" height="1.5"/><rect x="350.3" y="238.8" width="2.5" height="1.5"/><rect x="361.1" y="238.8" width="2.5" height="1.5"/><rect x="364.7" y="238.8" width="2.5" height="1.5"/><rect x="375.5" y="238.8" width="2.5" height="1.5"/><rect x="379.1" y="238.8" width="2.5" height="1.5"/><rect x="389.9" y="238.8" width="2.5" height="1.5"/><rect x="393.5" y="238.8" width="2.5" height="1.5"/><rect x="404.3" y="238.8" width="2.5" height="1.5"/><rect x="407.9" y="238.8" width="2.5" height="1.5"/><rect x="418.7" y="238.8" width="2.5" height="1.5"/><rect x="422.3" y="238.8" width="2.5" height="1.5"/><rect x="433.1" y="238.8" width="2.5" height="1.5"/><rect x="436.7" y="238.8" width="2.5" height="1.5"/><rect x="447.5" y="238.8" width="2.5" height="1.5"/><rect x="451.1" y="238.8" width="2.5" height="1.5"/><rect x="461.9" y="238.8" width="2.5" height="1.5"/><rect x="465.5" y="238.8" width="2.5" height="1.5"/><rect x="476.3" y="238.8" width="2.5" height="1.5"/><rect x="479.9" y="238.8" width="2.5" height="1.5"/><rect x="490.7" y="238.8" width="2.5" height="1.5"/><rect x="494.3" y="238.8" width="2.5" height="1.5"/><rect x="350.3" y="242.8" width="2.5" height="1.5"/><rect x="353.9" y="242.8" width="2.5" height="1.5"/><rect x="364.7" y="242.8" width="2.5" height="1.5"/><rect x="368.3" y="242.8" width="2.5" height="1.5"/><rect x="379.1" y="242.8" width="2.5" height="1.5"/><rect x="382.7" y="242.8" width="2.5" height="1.5"/><rect x="393.5" y="242.8" width="2.5" height="1.5"/><rect x="397.1" y="242.8" width="2.5" height="1.5"/><rect x="407.9" y="242.8" width="2.5" height="1.5"/><rect x="411.5" y="242.8" width="2.5" height="1.5"/><rect x="422.3" y="242.8" width="2.5" height="1.5"/><rect x="425.9" y="242.8" width="2.5" height="1.5"/><rect x="436.7" y="242.8" width="2.5" height="1.5"/><rect x="440.3" y="242.8" width="2.5" height="1.5"/><rect x="451.1" y="242.8" width="2.5" height="1.5"/><rect x="454.7" y="242.8" width="2.5" height="1.5"/><rect x="465.5" y="242.8" width="2.5" height="1.5"/><rect x="469.1" y="242.8" width="2.5" height="1.5"/><rect x="479.9" y="242.8" width="2.5" height="1.5"/><rect x="483.5" y="242.8" width="2.5" height="1.5"/><rect x="494.3" y="242.8" width="2.5" height="1.5"/><rect x="343.1" y="246.8" width="2.5" height="1.5"/><rect x="353.9" y="246.8" width="2.5" height="1.5"/><rect x="357.5" y="246.8" width="2.5" height="1.5"/><rect x="368.3" y="246.8" width="2.5" height="1.5"/><rect x="371.9" y="246.8" width="2.5" height="1.5"/><rect x="382.7" y="246.8" width="2.5" height="1.5"/><rect x="386.3" y="246.8" width="2.5" height="1.5"/><rect x="397.1" y="246.8" width="2.5" height="1.5"/><rect x="400.7" y="246.8" width="2.5" height="1.5"/><rect x="411.5" y="246.8" width="2.5" height="1.5"/><rect x="415.1" y="246.8" width="2.5" height="1.5"/><rect x="425.9" y="246.8" width="2.5" height="1.5"/><rect x="429.5" y="246.8" width="2.5" height="1.5"/><rect x="440.3" y="246.8" width="2.5" height="1.5"/><rect x="443.9" y="246.8" width="2.5" height="1.5"/><rect x="454.7" y="246.8" width="2.5" height="1.5"/><rect x="458.3" y="246.8" width="2.5" height="1.5"/><rect x="469.1" y="246.8" width="2.5" height="1.5"/><rect x="472.7" y="246.8" width="2.5" height="1.5"/><rect x="483.5" y="246.8" width="2.5" height="1.5"/><rect x="487.1" y="246.8" width="2.5" height="1.5"/><rect x="343.1" y="249.8" width="2.5" height="1.5"/><rect x="346.7" y="249.8" width="2.5" height="1.5"/><rect x="357.5" y="249.8" width="2.5" height="1.5"/><rect x="361.1" y="249.8" width="2.5" height="1.5"/><rect x="371.9" y="249.8" width="2.5" height="1.5"/><rect x="375.5" y="249.8" width="2.5" height="1.5"/><rect x="386.3" y="249.8" width="2.5" height="1.5"/><rect x="389.9" y="249.8" width="2.5" height="1.5"/><rect x="400.7" y="249.8" width="2.5" height="1.5"/><rect x="404.3" y="249.8" width="2.5" height="1.5"/><rect x="415.1" y="249.8" width="2.5" height="1.5"/><rect x="418.7" y="249.8" width="2.5" height="1.5"/><rect x="429.5" y="249.8" width="2.5" height="1.5"/><rect x="433.1" y="249.8" width="2.5" height="1.5"/><rect x="443.9" y="249.8" width="2.5" height="1.5"/><rect x="447.5" y="249.8" width="2.5" height="1.5"/><rect x="458.3" y="249.8" width="2.5" height="1.5"/><rect x="461.9" y="249.8" width="2.5" height="1.5"/><rect x="472.7" y="249.8" width="2.5" height="1.5"/><rect x="476.3" y="249.8" width="2.5" height="1.5"/><rect x="487.1" y="249.8" width="2.5" height="1.5"/><rect x="490.7" y="249.8" width="2.5" height="1.5"/><rect x="430.3" y="219.8" width="2.5" height="1.5"/><rect x="436.3" y="219.8" width="2.5" height="1.5"/><rect x="444.7" y="219.8" width="2.5" height="1.5"/><rect x="450.7" y="219.8" width="2.5" height="1.5"/><rect x="459.1" y="219.8" width="2.5" height="1.5"/><rect x="465.1" y="219.8" width="2.5" height="1.5"/><rect x="473.4" y="219.8" width="2.5" height="1.5"/><rect x="479.4" y="219.8" width="2.5" height="1.5"/><rect x="487.8" y="219.8" width="2.5" height="1.5"/><rect x="493.8" y="219.8" width="2.5" height="1.5"/></g><g fill="rgba(255,255,200,0.9)"><rect x="359.0" y="202.8" width="4.0" height="2.0"/></g><g fill="rgba(240,235,150,0.6)"><rect x="646.0" y="205.6" width="1.0" height="5.0"/><rect x="635.8" y="209.4" width="1.0" height="3.0"/><rect x="647.0" y="234.2" width="1.0" height="3.0"/><rect x="644.7" y="205.8" width="1.0" height="3.0"/><rect x="635.2" y="221.5" width="1.0" height="3.0"/><rect x="644.0" y="228.4" width="1.0" height="7.0"/><rect x="643.6" y="212.1" width="1.0" height="7.0"/><rect x="636.7" y="233.5" width="1.0" height="3.0"/><rect x="647.5" y="216.0" width="1.0" height="3.0"/><rect x="634.2" y="228.4" width="4.0" height="1.5"/><rect x="631.8" y="224.6" width="4.0" height="1.5"/><rect x="637.3" y="224.2" width="4.0" height="1.5"/><rect x="665.1" y="206.2" width="1.0" height="5.0"/><rect x="672.1" y="236.9" width="1.0" height="5.0"/><rect x="660.3" y="214.5" width="1.0" height="7.0"/><rect x="674.2" y="233.2" width="1.0" height="7.0"/><rect x="663.2" y="207.1" width="1.0" height="7.0"/><rect x="664.2" y="214.3" width="1.0" height="3.0"/><rect x="680.3" y="233.4" width="1.0" height="5.0"/><rect x="665.4" y="225.8" width="1.0" height="5.0"/><rect x="662.5" y="216.5" width="1.0" height="7.0"/><rect x="664.1" y="230.2" width="4.0" height="1.5"/><rect x="672.4" y="226.9" width="4.0" height="1.5"/><rect x="662.0" y="228.1" width="4.0" height="1.5"/><rect x="691.2" y="217.3" width="1.0" height="7.0"/><rect x="704.7" y="212.0" width="1.0" height="5.0"/><rect x="708.7" y="230.4" width="1.0" height="3.0"/><rect x="708.2" y="231.4" width="1.0" height="5.0"/><rect x="693.9" y="211.8" width="1.0" height="7.0"/><rect x="709.6" y="215.2" width="1.0" height="7.0"/><rect x="699.9" y="234.0" width="1.0" height="7.0"/><rect x="698.8" y="213.5" width="1.0" height="3.0"/><rect x="706.2" y="222.6" width="1.0" height="7.0"/><rect x="699.7" y="229.8" width="4.0" height="1.5"/><rect x="695.7" y="223.0" width="4.0" height="1.5"/><rect x="708.7" y="225.9" width="4.0" height="1.5"/><rect x="719.4" y="206.4" width="1.0" height="3.0"/><rect x="721.9" y="210.1" width="1.0" height="7.0"/><rect x="732.7" y="206.9" width="1.0" height="5.0"/><rect x="739.7" y="220.2" width="1.0" height="5.0"/><rect x="754.7" y="233.2" width="1.0" height="3.0"/><rect x="743.1" y="208.6" width="1.0" height="7.0"/><rect x="745.9" y="230.2" width="1.0" height="5.0"/><rect x="720.2" y="219.1" width="1.0" height="5.0"/><rect x="715.9" y="228.6" width="1.0" height="7.0"/><rect x="726.3" y="221.3" width="1.0" height="3.0"/><rect x="736.1" y="208.3" width="1.0" height="7.0"/><rect x="727.7" y="225.9" width="1.0" height="7.0"/><rect x="723.8" y="217.1" width="1.0" height="3.0"/><rect x="737.4" y="230.5" width="1.0" height="7.0"/><rect x="748.9" y="226.8" width="4.0" height="1.5"/><rect x="733.4" y="221.9" width="4.0" height="1.5"/><rect x="728.9" y="230.7" width="4.0" height="1.5"/><rect x="744.9" y="223.2" width="4.0" height="1.5"/></g><g fill="rgba(240,240,170,0.7)"><rect x="630.5" y="246.8" width="1.5" height="3.0"/><rect x="632.9" y="246.8" width="1.5" height="3.0"/><rect x="635.3" y="246.8" width="1.5" height="3.0"/><rect x="637.7" y="246.8" width="1.5" height="3.0"/><rect x="643.1" y="246.8" width="1.5" height="3.0"/><rect x="645.5" y="246.8" width="1.5" height="3.0"/><rect x="647.9" y="246.8" width="1.5" height="3.0"/><rect x="650.3" y="246.8" width="1.5" height="3.0"/><rect x="652.7" y="246.8" width="1.5" height="3.0"/><rect x="659.3" y="246.8" width="1.5" height="3.0"/><rect x="661.7" y="246.8" width="1.5" height="3.0"/><rect x="664.1" y="246.8" width="1.5" height="3.0"/><rect x="666.5" y="246.8" width="1.5" height="3.0"/><rect x="671.9" y="246.8" width="1.5" height="3.0"/><rect x="674.3" y="246.8" width="1.5" height="3.0"/><rect x="676.7" y="246.8" width="1.5" height="3.0"/><rect x="679.1" y="246.8" width="1.5" height="3.0"/><rect x="681.5" y="246.8" width="1.5" height="3.0"/><rect x="688.0" y="246.8" width="1.5" height="3.0"/><rect x="690.4" y="246.8" width="1.5" height="3.0"/><rect x="692.8" y="246.8" width="1.5" height="3.0"/><rect x="695.2" y="246.8" width="1.5" height="3.0"/><rect x="700.6" y="246.8" width="1.5" height="3.0"/><rect x="703.0" y="246.8" width="1.5" height="3.0"/><rect x="705.4" y="246.8" width="1.5" height="3.0"/><rect x="707.8" y="246.8" width="1.5" height="3.0"/><rect x="710.2" y="246.8" width="1.5" height="3.0"/><rect x="716.8" y="246.8" width="1.5" height="3.0"/><rect x="719.2" y="246.8" width="1.5" height="3.0"/><rect x="721.6" y="246.8" width="1.5" height="3.0"/><rect x="724.0" y="246.8" width="1.5" height="3.0"/><rect x="729.4" y="246.8" width="1.5" height="3.0"/><rect x="731.8" y="246.8" width="1.5" height="3.0"/><rect x="734.2" y="246.8" width="1.5" height="3.0"/><rect x="736.6" y="246.8" width="1.5" height="3.0"/><rect x="739.0" y="246.8" width="1.5" height="3.0"/><rect x="744.4" y="246.8" width="1.5" height="3.0"/><rect x="746.8" y="246.8" width="1.5" height="3.0"/><rect x="749.2" y="246.8" width="1.5" height="3.0"/><rect x="751.6" y="246.8" width="1.5" height="3.0"/></g><g fill="rgba(150,150,120,0.55)"><rect x="758.9" y="235.8" width="1.0" height="8.0"/><rect x="760.9" y="235.8" width="1.0" height="8.0"/><rect x="762.9" y="235.8" width="1.0" height="8.0"/><rect x="764.9" y="237.8" width="1.0" height="8.0"/><rect x="766.9" y="235.8" width="1.0" height="8.0"/><rect x="768.9" y="235.8" width="1.0" height="8.0"/><rect x="770.9" y="235.8" width="1.0" height="8.0"/><rect x="772.9" y="237.8" width="1.0" height="8.0"/><rect x="774.9" y="235.8" width="1.0" height="8.0"/><rect x="776.9" y="237.8" width="1.0" height="8.0"/><rect x="778.9" y="237.8" width="1.0" height="8.0"/><rect x="780.9" y="235.8" width="1.0" height="8.0"/><rect x="782.9" y="235.8" width="1.0" height="8.0"/><rect x="784.9" y="237.8" width="1.0" height="8.0"/><rect x="786.9" y="237.8" width="1.0" height="8.0"/><rect x="788.9" y="237.8" width="1.0" height="8.0"/><rect x="790.9" y="237.8" width="1.0" height="8.0"/><rect x="792.9" y="237.8" width="1.0" height="8.0"/><rect x="794.9" y="235.8" width="1.0" height="8.0"/><rect x="796.9" y="235.8" width="1.0" height="8.0"/><rect x="798.9" y="235.8" width="1.0" height="8.0"/><rect x="800.9" y="235.8" width="1.0" height="8.0"/><rect x="802.9" y="237.8" width="1.0" height="8.0"/><rect x="804.9" y="235.8" width="1.0" height="8.0"/><rect x="806.9" y="235.8" width="1.0" height="8.0"/><rect x="808.9" y="235.8" width="1.0" height="8.0"/><rect x="810.9" y="235.8" width="1.0" height="8.0"/><rect x="812.9" y="235.8" width="1.0" height="8.0"/><rect x="816.4" y="235.8" width="1.0" height="8.0"/><rect x="818.4" y="235.8" width="1.0" height="8.0"/><rect x="820.4" y="235.8" width="1.0" height="8.0"/><rect x="822.4" y="237.8" width="1.0" height="8.0"/><rect x="824.4" y="237.8" width="1.0" height="8.0"/><rect x="826.4" y="237.8" width="1.0" height="8.0"/><rect x="828.4" y="235.8" width="1.0" height="8.0"/><rect x="830.4" y="237.8" width="1.0" height="8.0"/><rect x="832.4" y="235.8" width="1.0" height="8.0"/><rect x="834.4" y="235.8" width="1.0" height="8.0"/><rect x="836.4" y="237.8" width="1.0" height="8.0"/><rect x="838.4" y="235.8" width="1.0" height="8.0"/><rect x="840.4" y="237.8" width="1.0" height="8.0"/><rect x="842.4" y="237.8" width="1.0" height="8.0"/><rect x="844.4" y="237.8" width="1.0" height="8.0"/><rect x="846.4" y="237.8" width="1.0" height="8.0"/><rect x="848.4" y="237.8" width="1.0" height="8.0"/><rect x="850.4" y="237.8" width="1.0" height="8.0"/><rect x="852.4" y="235.8" width="1.0" height="8.0"/><rect x="854.4" y="235.8" width="1.0" height="8.0"/><rect x="856.4" y="237.8" width="1.0" height="8.0"/><rect x="858.4" y="235.8" width="1.0" height="8.0"/><rect x="860.4" y="235.8" width="1.0" height="8.0"/><rect x="862.4" y="235.8" width="1.0" height="8.0"/><rect x="864.4" y="237.8" width="1.0" height="8.0"/><rect x="866.4" y="235.8" width="1.0" height="8.0"/><rect x="868.4" y="235.8" width="1.0" height="8.0"/><rect x="870.4" y="237.8" width="1.0" height="8.0"/><rect x="1146.9" y="237.8" width="1.0" height="8.0"/><rect x="1148.9" y="237.8" width="1.0" height="8.0"/><rect x="1150.9" y="235.8" width="1.0" height="8.0"/><rect x="1152.9" y="235.8" width="1.0" height="8.0"/><rect x="1154.9" y="235.8" width="1.0" height="8.0"/><rect x="1156.9" y="235.8" width="1.0" height="8.0"/><rect x="1158.9" y="235.8" width="1.0" height="8.0"/><rect x="1160.9" y="237.8" width="1.0" height="8.0"/><rect x="1162.9" y="235.8" width="1.0" height="8.0"/><rect x="1164.9" y="237.8" width="1.0" height="8.0"/><rect x="1166.9" y="235.8" width="1.0" height="8.0"/><rect x="1168.9" y="235.8" width="1.0" height="8.0"/><rect x="1170.9" y="237.8" width="1.0" height="8.0"/><rect x="1172.9" y="237.8" width="1.0" height="8.0"/><rect x="1174.9" y="235.8" width="1.0" height="8.0"/><rect x="1176.9" y="237.8" width="1.0" height="8.0"/><rect x="1178.9" y="235.8" width="1.0" height="8.0"/><rect x="1180.9" y="235.8" width="1.0" height="8.0"/><rect x="1182.9" y="235.8" width="1.0" height="8.0"/><rect x="1184.9" y="237.8" width="1.0" height="8.0"/><rect x="1186.9" y="237.8" width="1.0" height="8.0"/><rect x="1188.9" y="235.8" width="1.0" height="8.0"/><rect x="1190.9" y="235.8" width="1.0" height="8.0"/><rect x="1192.9" y="235.8" width="1.0" height="8.0"/><rect x="1194.9" y="235.8" width="1.0" height="8.0"/><rect x="1196.9" y="237.8" width="1.0" height="8.0"/><rect x="1198.9" y="235.8" width="1.0" height="8.0"/><rect x="1200.9" y="235.8" width="1.0" height="8.0"/><rect x="1204.4" y="235.8" width="1.0" height="8.0"/><rect x="1206.4" y="237.8" width="1.0" height="8.0"/><rect x="1208.4" y="235.8" width="1.0" height="8.0"/><rect x="1210.4" y="235.8" width="1.0" height="8.0"/><rect x="1212.4" y="237.8" width="1.0" height="8.0"/><rect x="1214.4" y="237.8" width="1.0" height="8.0"/><rect x="1216.4" y="235.8" width="1.0" height="8.0"/><rect x="1218.4" y="237.8" width="1.0" height="8.0"/><rect x="1220.4" y="237.8" width="1.0" height="8.0"/><rect x="1222.4" y="235.8" width="1.0" height="8.0"/><rect x="1224.4" y="237.8" width="1.0" height="8.0"/><rect x="1226.4" y="237.8" width="1.0" height="8.0"/><rect x="1228.4" y="237.8" width="1.0" height="8.0"/><rect x="1230.4" y="237.8" width="1.0" height="8.0"/><rect x="1232.4" y="237.8" width="1.0" height="8.0"/><rect x="1234.4" y="237.8" width="1.0" height="8.0"/><rect x="1236.4" y="235.8" width="1.0" height="8.0"/><rect x="1238.4" y="235.8" width="1.0" height="8.0"/><rect x="1240.4" y="237.8" width="1.0" height="8.0"/><rect x="1242.4" y="237.8" width="1.0" height="8.0"/><rect x="1244.4" y="235.8" width="1.0" height="8.0"/><rect x="1246.4" y="237.8" width="1.0" height="8.0"/><rect x="1248.4" y="237.8" width="1.0" height="8.0"/><rect x="1250.4" y="235.8" width="1.0" height="8.0"/><rect x="1252.4" y="237.8" width="1.0" height="8.0"/><rect x="1254.4" y="237.8" width="1.0" height="8.0"/><rect x="1256.4" y="235.8" width="1.0" height="8.0"/><rect x="1258.4" y="237.8" width="1.0" height="8.0"/></g><g fill="rgba(150,150,110,0.6)"><rect x="797.5" y="206.3" width="1.0" height="3.0"/><rect x="808.2" y="227.2" width="1.0" height="3.0"/><rect x="786.9" y="212.0" width="1.0" height="5.0"/><rect x="770.6" y="208.2" width="1.0" height="5.0"/><rect x="772.1" y="217.1" width="1.0" height="5.0"/><rect x="769.3" y="207.3" width="1.0" height="5.0"/><rect x="778.2" y="215.5" width="1.0" height="3.0"/><rect x="795.6" y="230.4" width="1.0" height="3.0"/><rect x="762.2" y="223.7" width="1.0" height="3.0"/><rect x="772.4" y="209.7" width="1.0" height="5.0"/><rect x="766.5" y="209.6" width="1.0" height="5.0"/><rect x="772.5" y="228.8" width="1.0" height="5.0"/><rect x="802.9" y="227.1" width="1.0" height="3.0"/><rect x="761.6" y="230.8" width="1.0" height="3.0"/><rect x="843.8" y="227.0" width="1.0" height="3.0"/><rect x="819.5" y="218.0" width="1.0" height="3.0"/><rect x="820.1" y="206.6" width="1.0" height="3.0"/><rect x="838.4" y="229.3" width="1.0" height="3.0"/><rect x="847.9" y="205.8" width="1.0" height="3.0"/><rect x="839.2" y="220.0" width="1.0" height="5.0"/><rect x="867.3" y="210.1" width="1.0" height="5.0"/><rect x="829.4" y="215.1" width="1.0" height="5.0"/><rect x="841.3" y="229.0" width="1.0" height="3.0"/><rect x="816.9" y="221.0" width="1.0" height="3.0"/><rect x="820.4" y="210.3" width="1.0" height="5.0"/><rect x="823.6" y="213.9" width="1.0" height="3.0"/><rect x="864.3" y="214.4" width="1.0" height="3.0"/><rect x="840.3" y="218.9" width="1.0" height="5.0"/><rect x="1187.1" y="213.4" width="1.0" height="5.0"/><rect x="1190.6" y="227.3" width="1.0" height="3.0"/><rect x="1161.5" y="225.3" width="1.0" height="3.0"/><rect x="1167.8" y="205.8" width="1.0" height="5.0"/><rect x="1159.1" y="226.0" width="1.0" height="5.0"/><rect x="1166.0" y="226.1" width="1.0" height="3.0"/><rect x="1159.1" y="222.0" width="1.0" height="5.0"/><rect x="1164.8" y="227.3" width="1.0" height="5.0"/><rect x="1166.1" y="218.0" width="1.0" height="5.0"/><rect x="1198.1" y="207.8" width="1.0" height="5.0"/><rect x="1156.7" y="229.8" width="1.0" height="5.0"/><rect x="1149.0" y="220.3" width="1.0" height="5.0"/><rect x="1186.6" y="213.0" width="1.0" height="3.0"/><rect x="1167.9" y="219.8" width="1.0" height="5.0"/><rect x="1247.2" y="220.6" width="1.0" height="5.0"/><rect x="1229.8" y="216.3" width="1.0" height="3.0"/><rect x="1232.3" y="225.4" width="1.0" height="3.0"/><rect x="1240.3" y="212.2" width="1.0" height="5.0"/><rect x="1209.5" y="229.6" width="1.0" height="3.0"/><rect x="1241.1" y="210.6" width="1.0" height="3.0"/><rect x="1212.4" y="206.0" width="1.0" height="5.0"/><rect x="1237.7" y="224.8" width="1.0" height="5.0"/><rect x="1227.0" y="221.2" width="1.0" height="3.0"/><rect x="1243.6" y="214.8" width="1.0" height="5.0"/><rect x="1217.7" y="221.9" width="1.0" height="3.0"/><rect x="1253.1" y="227.2" width="1.0" height="3.0"/><rect x="1246.8" y="210.5" width="1.0" height="5.0"/><rect x="1207.2" y="211.3" width="1.0" height="3.0"/></g><g fill="rgba(220,215,140,0.35)"><rect x="1080.3" y="244.3" width="12.0" height="1.5"/><rect x="1071.8" y="232.2" width="12.0" height="1.5"/><rect x="1048.3" y="232.0" width="4.0" height="1.5"/><rect x="1044.7" y="240.6" width="12.0" height="1.5"/><rect x="1074.3" y="217.1" width="12.0" height="1.5"/><rect x="1039.2" y="219.8" width="12.0" height="1.5"/><rect x="1082.6" y="216.8" width="8.0" height="1.5"/><rect x="1043.3" y="241.3" width="4.0" height="1.5"/><rect x="1027.0" y="222.9" width="8.0" height="1.5"/><rect x="1022.1" y="219.5" width="4.0" height="1.5"/><rect x="1082.9" y="216.8" width="12.0" height="1.5"/><rect x="1263.1" y="237.3" width="12.0" height="1.5"/><rect x="1344.1" y="228.0" width="8.0" height="1.5"/><rect x="1363.6" y="240.7" width="12.0" height="1.5"/><rect x="1357.3" y="240.7" width="8.0" height="1.5"/><rect x="1358.0" y="227.6" width="4.0" height="1.5"/><rect x="1354.0" y="224.8" width="8.0" height="1.5"/><rect x="1411.8" y="238.7" width="8.0" height="1.5"/><rect x="1412.5" y="226.6" width="12.0" height="1.5"/><rect x="1388.0" y="223.5" width="12.0" height="1.5"/><rect x="1390.2" y="217.1" width="8.0" height="1.5"/><rect x="1418.4" y="209.9" width="4.0" height="1.5"/></g><g fill="rgba(120,120,230,0.75)"><rect x="376.0" y="314.8" width="18.0" height="2.0"/><rect x="351.5" y="316.8" width="28.0" height="2.0"/><rect x="421.6" y="316.8" width="18.0" height="2.0"/><rect x="372.4" y="316.8" width="28.0" height="2.0"/><rect x="474.6" y="314.8" width="28.0" height="2.0"/><rect x="501.6" y="274.8" width="10.0" height="2.0"/><rect x="540.6" y="306.9" width="1.0" height="6.0"/><rect x="555.6" y="303.8" width="1.0" height="6.0"/><rect x="543.9" y="299.8" width="1.0" height="3.0"/><rect x="541.2" y="284.1" width="1.0" height="6.0"/><rect x="516.1" y="286.2" width="1.0" height="6.0"/><rect x="554.0" y="303.4" width="1.0" height="3.0"/><rect x="568.0" y="293.0" width="1.0" height="6.0"/><rect x="546.8" y="297.3" width="1.0" height="3.0"/><rect x="549.6" y="279.4" width="1.0" height="6.0"/><rect x="524.5" y="283.6" width="1.0" height="6.0"/><rect x="526.1" y="285.9" width="1.0" height="6.0"/><rect x="529.7" y="307.1" width="1.0" height="6.0"/><rect x="528.3" y="277.6" width="1.0" height="3.0"/><rect x="555.4" y="276.6" width="1.0" height="6.0"/><rect x="525.9" y="290.8" width="4.0" height="3.0"/><rect x="552.6" y="299.8" width="4.0" height="3.0"/><rect x="556.9" y="299.8" width="4.0" height="3.0"/><rect x="520.9" y="290.8" width="4.0" height="3.0"/><rect x="597.4" y="283.5" width="1.0" height="6.0"/><rect x="581.2" y="295.4" width="1.0" height="3.0"/><rect x="614.4" y="280.4" width="1.0" height="6.0"/><rect x="577.9" y="275.7" width="1.0" height="6.0"/><rect x="603.4" y="305.7" width="1.0" height="6.0"/><rect x="593.7" y="299.1" width="1.0" height="3.0"/><rect x="604.3" y="303.0" width="1.0" height="3.0"/><rect x="577.6" y="301.1" width="1.0" height="3.0"/><rect x="615.4" y="294.0" width="1.0" height="3.0"/><rect x="591.0" y="289.4" width="1.0" height="6.0"/><rect x="575.8" y="296.8" width="1.0" height="3.0"/><rect x="618.3" y="302.8" width="1.0" height="3.0"/><rect x="595.7" y="287.1" width="1.0" height="6.0"/><rect x="610.6" y="289.6" width="1.0" height="6.0"/><rect x="603.1" y="314.8" width="8.0" height="3.0"/><rect x="594.0" y="309.8" width="8.0" height="3.0"/><rect x="615.1" y="290.8" width="8.0" height="3.0"/><rect x="616.6" y="299.8" width="8.0" height="3.0"/><rect x="660.6" y="297.5" width="1.0" height="6.0"/><rect x="631.1" y="303.7" width="1.0" height="3.0"/><rect x="656.1" y="286.9" width="1.0" height="6.0"/><rect x="648.1" y="304.7" width="1.0" height="6.0"/><rect x="659.8" y="292.4" width="1.0" height="3.0"/><rect x="634.2" y="299.3" width="1.0" height="6.0"/><rect x="659.8" y="283.0" width="1.0" height="6.0"/><rect x="664.7" y="291.5" width="1.0" height="3.0"/><rect x="634.6" y="282.3" width="1.0" height="3.0"/><rect x="646.2" y="294.6" width="1.0" height="6.0"/><rect x="659.7" y="286.5" width="1.0" height="6.0"/><rect x="648.7" y="290.2" width="1.0" height="6.0"/><rect x="643.2" y="278.9" width="1.0" height="3.0"/><rect x="646.7" y="300.1" width="1.0" height="3.0"/><rect x="639.2" y="314.8" width="8.0" height="3.0"/><rect x="666.1" y="309.8" width="4.0" height="3.0"/><rect x="671.6" y="309.8" width="4.0" height="3.0"/><rect x="647.8" y="309.8" width="4.0" height="3.0"/><rect x="725.6" y="279.1" width="1.0" height="3.0"/><rect x="740.1" y="293.6" width="1.0" height="3.0"/><rect x="721.8" y="300.4" width="1.0" height="3.0"/><rect x="734.6" y="294.3" width="1.0" height="6.0"/><rect x="713.1" y="286.4" width="1.0" height="3.0"/><rect x="700.8" y="304.1" width="1.0" height="3.0"/><rect x="731.8" y="288.4" width="1.0" height="3.0"/><rect x="718.5" y="298.1" width="1.0" height="3.0"/><rect x="695.2" y="293.9" width="1.0" height="6.0"/><rect x="691.7" y="283.2" width="1.0" height="6.0"/><rect x="720.1" y="301.7" width="1.0" height="3.0"/><rect x="729.3" y="287.7" width="1.0" height="6.0"/><rect x="703.2" y="294.8" width="1.0" height="6.0"/><rect x="703.7" y="295.9" width="1.0" height="3.0"/><rect x="734.9" y="299.8" width="4.0" height="3.0"/><rect x="700.4" y="290.8" width="4.0" height="3.0"/><rect x="699.1" y="290.8" width="4.0" height="3.0"/><rect x="687.2" y="314.8" width="8.0" height="3.0"/><rect x="874.9" y="282.8" width="3.0" height="3.0"/><rect x="879.4" y="282.8" width="3.0" height="3.0"/><rect x="883.9" y="282.8" width="3.0" height="3.0"/><rect x="888.4" y="282.8" width="3.0" height="3.0"/><rect x="879.7" y="296.4" width="1.5" height="2.0"/><rect x="888.0" y="307.7" width="1.5" height="2.0"/><rect x="882.9" y="307.3" width="1.5" height="2.0"/><rect x="903.6" y="282.8" width="3.0" height="3.0"/><rect x="908.1" y="282.8" width="3.0" height="3.0"/><rect x="912.6" y="282.8" width="3.0" height="3.0"/><rect x="917.1" y="282.8" width="3.0" height="3.0"/><rect x="921.6" y="282.8" width="3.0" height="3.0"/><rect x="926.1" y="282.8" width="3.0" height="3.0"/><rect x="926.4" y="309.7" width="1.5" height="2.0"/><rect x="918.7" y="306.7" width="1.5" height="2.0"/><rect x="926.6" y="301.0" width="1.5" height="2.0"/><rect x="916.6" y="306.3" width="1.5" height="2.0"/><rect x="932.4" y="282.8" width="3.0" height="3.0"/><rect x="936.9" y="282.8" width="3.0" height="3.0"/><rect x="941.4" y="282.8" width="3.0" height="3.0"/><rect x="945.9" y="282.8" width="3.0" height="3.0"/><rect x="950.4" y="282.8" width="3.0" height="3.0"/><rect x="954.9" y="282.8" width="3.0" height="3.0"/><rect x="954.7" y="310.6" width="1.5" height="2.0"/><rect x="933.2" y="294.8" width="1.5" height="2.0"/><rect x="939.3" y="308.8" width="1.5" height="2.0"/><rect x="946.0" y="297.7" width="1.5" height="2.0"/><rect x="961.1" y="282.8" width="3.0" height="3.0"/><rect x="965.6" y="282.8" width="3.0" height="3.0"/><rect x="970.1" y="282.8" width="3.0" height="3.0"/><rect x="974.6" y="282.8" width="3.0" height="3.0"/><rect x="979.1" y="282.8" width="3.0" height="3.0"/><rect x="983.6" y="282.8" width="3.0" height="3.0"/><rect x="963.3" y="307.3" width="1.5" height="2.0"/><rect x="978.1" y="313.4" width="1.5" height="2.0"/><rect x="973.0" y="302.7" width="1.5" height="2.0"/><rect x="962.2" y="291.8" width="1.5" height="2.0"/><rect x="989.8" y="282.8" width="3.0" height="3.0"/><rect x="994.3" y="282.8" width="3.0" height="3.0"/><rect x="998.8" y="282.8" width="3.0" height="3.0"/><rect x="1003.3" y="282.8" width="3.0" height="3.0"/><rect x="997.5" y="298.5" width="1.5" height="2.0"/><rect x="993.8" y="293.0" width="1.5" height="2.0"/><rect x="1008.1" y="310.9" width="1.5" height="2.0"/><rect x="1131.9" y="274.8" width="12.0" height="2.0"/><rect x="1289.8" y="316.6" width="8.0" height="2.5"/><rect x="1301.7" y="300.2" width="4.0" height="2.5"/><rect x="1284.7" y="303.5" width="6.0" height="2.5"/><rect x="1270.7" y="300.6" width="8.0" height="2.5"/><rect x="1301.4" y="317.4" width="6.0" height="2.5"/><rect x="1278.8" y="289.5" width="8.0" height="2.5"/><rect x="1267.0" y="281.9" width="6.0" height="2.5"/><rect x="1295.5" y="287.5" width="6.0" height="2.5"/><rect x="1301.4" y="299.0" width="6.0" height="2.5"/><rect x="1323.7" y="285.9" width="4.0" height="2.5"/><rect x="1366.4" y="292.6" width="8.0" height="2.5"/><rect x="1359.4" y="274.9" width="8.0" height="2.5"/><rect x="1341.8" y="277.2" width="8.0" height="2.5"/><rect x="1336.9" y="308.1" width="8.0" height="2.5"/><rect x="1340.8" y="277.1" width="6.0" height="2.5"/><rect x="1346.0" y="315.6" width="6.0" height="2.5"/><rect x="1362.1" y="296.1" width="4.0" height="2.5"/><rect x="1366.6" y="301.6" width="4.0" height="2.5"/><rect x="1411.3" y="288.5" width="4.0" height="2.5"/><rect x="1403.7" y="278.9" width="4.0" height="2.5"/><rect x="1399.3" y="280.0" width="4.0" height="2.5"/><rect x="1401.0" y="306.3" width="8.0" height="2.5"/><rect x="1411.1" y="293.1" width="6.0" height="2.5"/><rect x="1424.4" y="285.5" width="8.0" height="2.5"/><rect x="1383.9" y="283.2" width="8.0" height="2.5"/><rect x="1401.5" y="313.5" width="4.0" height="2.5"/><rect x="1390.3" y="309.6" width="6.0" height="2.5"/><rect x="1450.9" y="309.5" width="6.0" height="2.5"/><rect x="1474.2" y="287.2" width="6.0" height="2.5"/><rect x="1475.0" y="300.3" width="8.0" height="2.5"/><rect x="1458.1" y="281.3" width="8.0" height="2.5"/><rect x="1457.9" y="289.4" width="8.0" height="2.5"/><rect x="1452.7" y="315.8" width="4.0" height="2.5"/><rect x="1481.9" y="285.3" width="6.0" height="2.5"/><rect x="1445.7" y="308.9" width="4.0" height="2.5"/><rect x="1449.8" y="295.6" width="6.0" height="2.5"/></g><g fill="rgba(110,110,220,0.7)"><rect x="759.9" y="290.8" width="5.0" height="7.0"/><rect x="765.9" y="305.8" width="5.0" height="7.0"/><rect x="788.6" y="290.8" width="5.0" height="7.0"/><rect x="794.6" y="305.8" width="5.0" height="7.0"/><rect x="817.4" y="290.8" width="5.0" height="7.0"/><rect x="823.4" y="305.8" width="5.0" height="7.0"/><rect x="846.1" y="290.8" width="5.0" height="7.0"/><rect x="852.1" y="305.8" width="5.0" height="7.0"/><rect x="1162.3" y="290.8" width="5.0" height="7.0"/><rect x="1168.3" y="305.8" width="5.0" height="7.0"/><rect x="1191.0" y="290.8" width="5.0" height="7.0"/><rect x="1197.0" y="305.8" width="5.0" height="7.0"/><rect x="1219.8" y="290.8" width="5.0" height="7.0"/><rect x="1225.8" y="305.8" width="5.0" height="7.0"/><rect x="1248.5" y="290.8" width="5.0" height="7.0"/><rect x="1254.5" y="305.8" width="5.0" height="7.0"/></g><g fill="rgba(110,110,220,0.75)"><rect x="776.3" y="276.8" width="10.0" height="6.0"/><rect x="805.0" y="276.8" width="10.0" height="6.0"/><rect x="833.7" y="276.8" width="10.0" height="6.0"/><rect x="862.5" y="276.8" width="10.0" height="6.0"/><rect x="1149.9" y="276.8" width="10.0" height="6.0"/><rect x="1178.7" y="276.8" width="10.0" height="6.0"/><rect x="1207.4" y="276.8" width="10.0" height="6.0"/><rect x="1236.2" y="276.8" width="10.0" height="6.0"/></g><g fill="rgba(120,120,230,0.5)"><rect x="1020.6" y="316.8" width="20.0" height="1.5"/><rect x="1046.6" y="316.8" width="20.0" height="1.5"/><rect x="1072.6" y="316.8" width="20.0" height="1.5"/><rect x="1098.6" y="316.8" width="20.0" height="1.5"/></g><g fill="rgba(240,150,245,0.8)"><rect x="383.0" y="371.3" width="4.0" height="2.0"/><rect x="394.6" y="346.3" width="6.0" height="2.0"/><rect x="434.3" y="379.8" width="8.0" height="2.0"/><rect x="352.7" y="381.2" width="2.0" height="2.0"/><rect x="418.7" y="361.2" width="4.0" height="2.0"/><rect x="350.0" y="376.1" width="6.0" height="2.0"/><rect x="378.0" y="372.5" width="2.0" height="2.0"/><rect x="432.4" y="378.9" width="8.0" height="2.0"/><rect x="443.2" y="369.9" width="8.0" height="2.0"/><rect x="434.6" y="346.2" width="2.0" height="2.0"/><rect x="367.0" y="372.2" width="6.0" height="2.0"/><rect x="447.8" y="374.7" width="8.0" height="2.0"/><rect x="445.8" y="375.2" width="2.0" height="2.0"/><rect x="389.1" y="372.6" width="2.0" height="2.0"/><rect x="347.0" y="376.6" width="6.0" height="2.0"/><rect x="380.1" y="362.0" width="4.0" height="2.0"/><rect x="398.4" y="367.4" width="4.0" height="2.0"/><rect x="360.1" y="348.0" width="8.0" height="2.0"/><rect x="407.8" y="354.4" width="4.0" height="2.0"/><rect x="366.7" y="370.3" width="8.0" height="2.0"/><rect x="369.2" y="345.2" width="8.0" height="2.0"/><rect x="437.6" y="371.9" width="4.0" height="2.0"/><rect x="460.7" y="382.6" width="6.0" height="2.0"/><rect x="488.1" y="361.8" width="6.0" height="2.0"/><rect x="479.2" y="356.9" width="8.0" height="2.0"/><rect x="498.5" y="349.1" width="8.0" height="2.0"/><rect x="484.8" y="367.8" width="6.0" height="2.0"/><rect x="458.1" y="378.0" width="8.0" height="2.0"/><rect x="470.4" y="367.4" width="2.0" height="2.0"/><rect x="501.2" y="374.6" width="6.0" height="2.0"/><rect x="494.7" y="354.0" width="6.0" height="2.0"/><rect x="467.7" y="352.4" width="6.0" height="2.0"/><rect x="489.9" y="373.6" width="4.0" height="2.0"/><rect x="545.0" y="380.9" width="2.0" height="2.0"/><rect x="529.5" y="362.4" width="6.0" height="2.0"/><rect x="550.1" y="348.4" width="6.0" height="2.0"/><rect x="530.4" y="361.4" width="4.0" height="2.0"/><rect x="521.0" y="366.4" width="6.0" height="2.0"/><rect x="540.3" y="381.3" width="4.0" height="2.0"/><rect x="527.0" y="377.8" width="8.0" height="2.0"/><rect x="561.5" y="356.6" width="6.0" height="2.0"/><rect x="553.6" y="363.5" width="2.0" height="2.0"/><rect x="521.4" y="383.5" width="8.0" height="2.0"/><rect x="561.5" y="377.0" width="6.0" height="2.0"/><rect x="576.4" y="360.6" width="6.0" height="2.0"/><rect x="598.1" y="363.0" width="6.0" height="2.0"/><rect x="600.4" y="377.7" width="6.0" height="2.0"/><rect x="577.3" y="354.2" width="2.0" height="2.0"/><rect x="602.1" y="382.5" width="6.0" height="2.0"/><rect x="616.4" y="353.7" width="2.0" height="2.0"/><rect x="602.9" y="363.4" width="6.0" height="2.0"/><rect x="603.5" y="349.5" width="2.0" height="2.0"/><rect x="617.9" y="357.0" width="8.0" height="2.0"/><rect x="577.7" y="354.2" width="4.0" height="2.0"/><rect x="590.9" y="359.6" width="8.0" height="2.0"/><rect x="630.5" y="356.8" width="1.5" height="3.0"/><rect x="633.0" y="356.8" width="1.5" height="3.0"/><rect x="635.5" y="356.8" width="1.5" height="3.0"/><rect x="638.0" y="356.8" width="1.5" height="3.0"/><rect x="640.5" y="356.8" width="1.5" height="3.0"/><rect x="643.0" y="356.8" width="1.5" height="3.0"/><rect x="645.5" y="356.8" width="1.5" height="3.0"/><rect x="648.0" y="356.8" width="1.5" height="3.0"/><rect x="650.5" y="356.8" width="1.5" height="3.0"/><rect x="653.0" y="356.8" width="1.5" height="3.0"/><rect x="655.5" y="356.8" width="1.5" height="3.0"/><rect x="658.0" y="356.8" width="1.5" height="3.0"/><rect x="660.5" y="356.8" width="1.5" height="3.0"/><rect x="663.0" y="356.8" width="1.5" height="3.0"/><rect x="665.5" y="356.8" width="1.5" height="3.0"/><rect x="668.0" y="356.8" width="1.5" height="3.0"/><rect x="670.5" y="356.8" width="1.5" height="3.0"/><rect x="673.0" y="356.8" width="1.5" height="3.0"/><rect x="675.5" y="356.8" width="1.5" height="3.0"/><rect x="678.0" y="356.8" width="1.5" height="3.0"/><rect x="680.5" y="356.8" width="1.5" height="3.0"/><rect x="630.5" y="382.8" width="1.5" height="3.0"/><rect x="633.0" y="382.8" width="1.5" height="3.0"/><rect x="635.5" y="382.8" width="1.5" height="3.0"/><rect x="638.0" y="382.8" width="1.5" height="3.0"/><rect x="640.5" y="382.8" width="1.5" height="3.0"/><rect x="643.0" y="382.8" width="1.5" height="3.0"/><rect x="645.5" y="382.8" width="1.5" height="3.0"/><rect x="648.0" y="382.8" width="1.5" height="3.0"/><rect x="650.5" y="382.8" width="1.5" height="3.0"/><rect x="653.0" y="382.8" width="1.5" height="3.0"/><rect x="655.5" y="382.8" width="1.5" height="3.0"/><rect x="658.0" y="382.8" width="1.5" height="3.0"/><rect x="660.5" y="382.8" width="1.5" height="3.0"/><rect x="663.0" y="382.8" width="1.5" height="3.0"/><rect x="665.5" y="382.8" width="1.5" height="3.0"/><rect x="668.0" y="382.8" width="1.5" height="3.0"/><rect x="670.5" y="382.8" width="1.5" height="3.0"/><rect x="673.0" y="382.8" width="1.5" height="3.0"/><rect x="675.5" y="382.8" width="1.5" height="3.0"/><rect x="678.0" y="382.8" width="1.5" height="3.0"/><rect x="680.5" y="382.8" width="1.5" height="3.0"/><rect x="688.0" y="356.8" width="1.5" height="3.0"/><rect x="690.5" y="356.8" width="1.5" height="3.0"/><rect x="693.0" y="356.8" width="1.5" height="3.0"/><rect x="695.5" y="356.8" width="1.5" height="3.0"/><rect x="698.0" y="356.8" width="1.5" height="3.0"/><rect x="700.5" y="356.8" width="1.5" height="3.0"/><rect x="703.0" y="356.8" width="1.5" height="3.0"/><rect x="705.5" y="356.8" width="1.5" height="3.0"/><rect x="708.0" y="356.8" width="1.5" height="3.0"/><rect x="710.5" y="356.8" width="1.5" height="3.0"/><rect x="713.0" y="356.8" width="1.5" height="3.0"/><rect x="715.5" y="356.8" width="1.5" height="3.0"/><rect x="718.0" y="356.8" width="1.5" height="3.0"/><rect x="720.5" y="356.8" width="1.5" height="3.0"/><rect x="723.0" y="356.8" width="1.5" height="3.0"/><rect x="725.5" y="356.8" width="1.5" height="3.0"/><rect x="728.0" y="356.8" width="1.5" height="3.0"/><rect x="730.5" y="356.8" width="1.5" height="3.0"/><rect x="733.0" y="356.8" width="1.5" height="3.0"/><rect x="735.5" y="356.8" width="1.5" height="3.0"/><rect x="738.0" y="356.8" width="1.5" height="3.0"/><rect x="688.0" y="382.8" width="1.5" height="3.0"/><rect x="690.5" y="382.8" width="1.5" height="3.0"/><rect x="693.0" y="382.8" width="1.5" height="3.0"/><rect x="695.5" y="382.8" width="1.5" height="3.0"/><rect x="698.0" y="382.8" width="1.5" height="3.0"/><rect x="700.5" y="382.8" width="1.5" height="3.0"/><rect x="703.0" y="382.8" width="1.5" height="3.0"/><rect x="705.5" y="382.8" width="1.5" height="3.0"/><rect x="708.0" y="382.8" width="1.5" height="3.0"/><rect x="710.5" y="382.8" width="1.5" height="3.0"/><rect x="713.0" y="382.8" width="1.5" height="3.0"/><rect x="715.5" y="382.8" width="1.5" height="3.0"/><rect x="718.0" y="382.8" width="1.5" height="3.0"/><rect x="720.5" y="382.8" width="1.5" height="3.0"/><rect x="723.0" y="382.8" width="1.5" height="3.0"/><rect x="725.5" y="382.8" width="1.5" height="3.0"/><rect x="728.0" y="382.8" width="1.5" height="3.0"/><rect x="730.5" y="382.8" width="1.5" height="3.0"/><rect x="733.0" y="382.8" width="1.5" height="3.0"/><rect x="735.5" y="382.8" width="1.5" height="3.0"/><rect x="738.0" y="382.8" width="1.5" height="3.0"/><rect x="747.7" y="373.9" width="8.0" height="2.0"/><rect x="748.0" y="378.1" width="8.0" height="2.0"/><rect x="804.4" y="356.0" width="6.0" height="2.0"/><rect x="769.4" y="362.6" width="4.0" height="2.0"/><rect x="800.4" y="348.8" width="6.0" height="2.0"/><rect x="785.3" y="383.9" width="6.0" height="2.0"/><rect x="761.8" y="355.8" width="2.0" height="2.0"/><rect x="804.9" y="377.8" width="2.0" height="2.0"/><rect x="791.0" y="370.5" width="2.0" height="2.0"/><rect x="761.3" y="358.1" width="4.0" height="2.0"/><rect x="797.0" y="353.0" width="4.0" height="2.0"/><rect x="787.3" y="377.3" width="4.0" height="2.0"/><rect x="774.8" y="350.7" width="2.0" height="2.0"/><rect x="829.8" y="384.2" width="4.0" height="2.0"/><rect x="842.6" y="376.7" width="2.0" height="2.0"/><rect x="848.4" y="345.8" width="2.0" height="2.0"/><rect x="833.7" y="376.3" width="6.0" height="2.0"/><rect x="817.1" y="355.4" width="4.0" height="2.0"/><rect x="852.3" y="365.8" width="2.0" height="2.0"/><rect x="839.5" y="375.9" width="2.0" height="2.0"/><rect x="838.3" y="353.7" width="2.0" height="2.0"/><rect x="851.6" y="381.2" width="6.0" height="2.0"/><rect x="838.6" y="383.4" width="2.0" height="2.0"/><rect x="864.8" y="378.7" width="8.0" height="2.0"/><rect x="883.5" y="364.4" width="8.0" height="2.0"/><rect x="874.9" y="348.0" width="4.0" height="2.0"/><rect x="874.8" y="355.8" width="6.0" height="2.0"/><rect x="879.2" y="368.7" width="6.0" height="2.0"/><rect x="911.6" y="369.0" width="2.0" height="2.0"/><rect x="918.3" y="349.4" width="4.0" height="2.0"/><rect x="911.1" y="380.3" width="8.0" height="2.0"/><rect x="909.3" y="362.9" width="8.0" height="2.0"/><rect x="917.0" y="357.3" width="6.0" height="2.0"/><rect x="944.5" y="359.8" width="4.0" height="2.0"/><rect x="944.9" y="363.8" width="2.0" height="2.0"/><rect x="947.8" y="348.5" width="2.0" height="2.0"/><rect x="946.1" y="359.7" width="4.0" height="2.0"/><rect x="942.3" y="368.3" width="6.0" height="2.0"/><rect x="973.3" y="361.2" width="8.0" height="2.0"/><rect x="977.2" y="373.6" width="6.0" height="2.0"/><rect x="972.0" y="358.9" width="4.0" height="2.0"/><rect x="963.2" y="364.1" width="2.0" height="2.0"/><rect x="967.0" y="367.1" width="2.0" height="2.0"/><rect x="1003.9" y="367.8" width="8.0" height="2.0"/><rect x="1005.5" y="383.8" width="2.0" height="2.0"/><rect x="1000.9" y="371.1" width="6.0" height="2.0"/><rect x="989.4" y="355.7" width="6.0" height="2.0"/><rect x="1007.0" y="358.8" width="4.0" height="2.0"/><rect x="1059.8" y="367.5" width="8.0" height="2.0"/><rect x="1021.0" y="374.4" width="2.0" height="2.0"/><rect x="1022.0" y="366.0" width="8.0" height="2.0"/><rect x="1037.9" y="358.4" width="6.0" height="2.0"/><rect x="1032.7" y="357.8" width="2.0" height="2.0"/><rect x="1060.4" y="351.0" width="2.0" height="2.0"/><rect x="1050.3" y="355.7" width="8.0" height="2.0"/><rect x="1041.1" y="362.5" width="6.0" height="2.0"/><rect x="1028.0" y="365.3" width="6.0" height="2.0"/><rect x="1038.4" y="356.1" width="8.0" height="2.0"/><rect x="1043.1" y="357.1" width="4.0" height="2.0"/><rect x="1094.2" y="368.8" width="2.0" height="2.0"/><rect x="1085.0" y="382.6" width="4.0" height="2.0"/><rect x="1112.1" y="356.4" width="2.0" height="2.0"/><rect x="1075.4" y="374.7" width="4.0" height="2.0"/><rect x="1081.3" y="366.1" width="4.0" height="2.0"/><rect x="1099.3" y="378.1" width="6.0" height="2.0"/><rect x="1078.6" y="379.3" width="2.0" height="2.0"/><rect x="1096.2" y="363.2" width="2.0" height="2.0"/><rect x="1116.9" y="367.8" width="8.0" height="2.0"/><rect x="1109.5" y="361.5" width="2.0" height="2.0"/><rect x="1094.7" y="383.4" width="4.0" height="2.0"/><rect x="1136.9" y="369.5" width="6.0" height="2.0"/><rect x="1133.0" y="378.6" width="4.0" height="2.0"/><rect x="1155.5" y="360.8" width="2.0" height="2.0"/><rect x="1154.7" y="357.2" width="6.0" height="2.0"/><rect x="1151.3" y="376.0" width="2.0" height="2.0"/><rect x="1157.0" y="349.4" width="4.0" height="2.0"/><rect x="1164.8" y="358.8" width="4.0" height="2.0"/><rect x="1180.3" y="350.7" width="4.0" height="2.0"/><rect x="1179.1" y="350.9" width="2.0" height="2.0"/><rect x="1179.2" y="375.7" width="8.0" height="2.0"/><rect x="1184.8" y="367.3" width="8.0" height="2.0"/><rect x="1189.1" y="380.1" width="6.0" height="2.0"/><rect x="1246.3" y="369.9" width="4.0" height="2.0"/><rect x="1225.7" y="363.6" width="6.0" height="2.0"/><rect x="1243.0" y="368.5" width="6.0" height="2.0"/><rect x="1229.0" y="357.2" width="8.0" height="2.0"/><rect x="1206.2" y="359.5" width="6.0" height="2.0"/><rect x="1208.1" y="379.4" width="2.0" height="2.0"/><rect x="1234.2" y="365.1" width="8.0" height="2.0"/><rect x="1232.6" y="383.0" width="2.0" height="2.0"/><rect x="1226.2" y="377.2" width="4.0" height="2.0"/><rect x="1220.0" y="363.8" width="4.0" height="2.0"/><rect x="1250.9" y="362.8" width="6.0" height="2.0"/><rect x="1281.3" y="348.2" width="4.0" height="2.0"/><rect x="1262.7" y="373.1" width="8.0" height="2.0"/><rect x="1272.3" y="369.2" width="6.0" height="2.0"/><rect x="1269.3" y="356.1" width="8.0" height="2.0"/><rect x="1277.2" y="372.0" width="2.0" height="2.0"/><rect x="1306.2" y="370.7" width="2.0" height="2.0"/><rect x="1297.2" y="367.1" width="8.0" height="2.0"/><rect x="1296.3" y="373.7" width="4.0" height="2.0"/><rect x="1297.2" y="368.1" width="4.0" height="2.0"/><rect x="1308.8" y="357.2" width="8.0" height="2.0"/><rect x="1325.6" y="373.2" width="2.0" height="2.0"/><rect x="1334.4" y="359.9" width="6.0" height="2.0"/><rect x="1358.8" y="371.6" width="2.0" height="2.0"/><rect x="1350.7" y="361.7" width="6.0" height="2.0"/><rect x="1320.3" y="357.2" width="4.0" height="2.0"/><rect x="1336.0" y="375.4" width="4.0" height="2.0"/><rect x="1330.4" y="350.3" width="2.0" height="2.0"/><rect x="1333.7" y="376.3" width="2.0" height="2.0"/><rect x="1351.5" y="379.9" width="4.0" height="2.0"/><rect x="1348.4" y="351.0" width="4.0" height="2.0"/><rect x="1359.7" y="375.6" width="4.0" height="2.0"/><rect x="1411.9" y="346.5" width="6.0" height="2.0"/><rect x="1409.7" y="354.3" width="8.0" height="2.0"/><rect x="1406.5" y="374.9" width="8.0" height="2.0"/><rect x="1388.2" y="354.4" width="8.0" height="2.0"/><rect x="1420.7" y="352.6" width="8.0" height="2.0"/><rect x="1399.3" y="356.1" width="8.0" height="2.0"/><rect x="1401.3" y="361.5" width="4.0" height="2.0"/><rect x="1416.5" y="376.9" width="4.0" height="2.0"/><rect x="1419.2" y="346.9" width="8.0" height="2.0"/><rect x="1419.3" y="367.0" width="2.0" height="2.0"/><rect x="1411.4" y="365.4" width="2.0" height="2.0"/></g><g fill="rgba(250,170,245,0.8)"><rect x="342.1" y="388.3" width="2.5" height="2.2"/><rect x="346.1" y="388.3" width="2.5" height="2.2"/><rect x="350.1" y="388.3" width="2.5" height="2.2"/><rect x="354.1" y="388.3" width="2.5" height="2.2"/><rect x="358.1" y="388.3" width="2.5" height="2.2"/><rect x="362.1" y="388.3" width="2.5" height="2.2"/><rect x="366.1" y="388.3" width="2.5" height="2.2"/><rect x="370.1" y="388.3" width="2.5" height="2.2"/><rect x="374.1" y="388.3" width="2.5" height="2.2"/><rect x="378.1" y="388.3" width="2.5" height="2.2"/><rect x="382.1" y="388.3" width="2.5" height="2.2"/><rect x="386.1" y="388.3" width="2.5" height="2.2"/><rect x="390.1" y="388.3" width="2.5" height="2.2"/><rect x="394.1" y="388.3" width="2.5" height="2.2"/><rect x="398.1" y="388.3" width="2.5" height="2.2"/><rect x="402.1" y="388.3" width="2.5" height="2.2"/><rect x="406.1" y="388.3" width="2.5" height="2.2"/><rect x="410.1" y="388.3" width="2.5" height="2.2"/><rect x="414.1" y="388.3" width="2.5" height="2.2"/><rect x="418.1" y="388.3" width="2.5" height="2.2"/><rect x="422.1" y="388.3" width="2.5" height="2.2"/><rect x="426.1" y="388.3" width="2.5" height="2.2"/><rect x="430.1" y="388.3" width="2.5" height="2.2"/><rect x="434.1" y="388.3" width="2.5" height="2.2"/><rect x="438.1" y="388.3" width="2.5" height="2.2"/><rect x="442.1" y="388.3" width="2.5" height="2.2"/><rect x="446.1" y="388.3" width="2.5" height="2.2"/><rect x="450.1" y="388.3" width="2.5" height="2.2"/><rect x="457.1" y="388.3" width="2.5" height="2.2"/><rect x="461.1" y="388.3" width="2.5" height="2.2"/><rect x="465.1" y="388.3" width="2.5" height="2.2"/><rect x="469.1" y="388.3" width="2.5" height="2.2"/><rect x="473.1" y="388.3" width="2.5" height="2.2"/><rect x="477.1" y="388.3" width="2.5" height="2.2"/><rect x="481.1" y="388.3" width="2.5" height="2.2"/><rect x="485.1" y="388.3" width="2.5" height="2.2"/><rect x="489.1" y="388.3" width="2.5" height="2.2"/><rect x="493.1" y="388.3" width="2.5" height="2.2"/><rect x="497.1" y="388.3" width="2.5" height="2.2"/><rect x="501.1" y="388.3" width="2.5" height="2.2"/><rect x="505.1" y="388.3" width="2.5" height="2.2"/><rect x="509.1" y="388.3" width="2.5" height="2.2"/><rect x="514.6" y="388.3" width="2.5" height="2.2"/><rect x="518.6" y="388.3" width="2.5" height="2.2"/><rect x="522.6" y="388.3" width="2.5" height="2.2"/><rect x="526.6" y="388.3" width="2.5" height="2.2"/><rect x="530.6" y="388.3" width="2.5" height="2.2"/><rect x="534.6" y="388.3" width="2.5" height="2.2"/><rect x="538.6" y="388.3" width="2.5" height="2.2"/><rect x="542.6" y="388.3" width="2.5" height="2.2"/><rect x="546.6" y="388.3" width="2.5" height="2.2"/><rect x="550.6" y="388.3" width="2.5" height="2.2"/><rect x="554.6" y="388.3" width="2.5" height="2.2"/><rect x="558.6" y="388.3" width="2.5" height="2.2"/><rect x="562.6" y="388.3" width="2.5" height="2.2"/><rect x="566.6" y="388.3" width="2.5" height="2.2"/><rect x="572.1" y="388.3" width="2.5" height="2.2"/><rect x="576.1" y="388.3" width="2.5" height="2.2"/><rect x="580.1" y="388.3" width="2.5" height="2.2"/><rect x="584.1" y="388.3" width="2.5" height="2.2"/><rect x="588.1" y="388.3" width="2.5" height="2.2"/><rect x="592.1" y="388.3" width="2.5" height="2.2"/><rect x="596.1" y="388.3" width="2.5" height="2.2"/><rect x="600.1" y="388.3" width="2.5" height="2.2"/><rect x="604.1" y="388.3" width="2.5" height="2.2"/><rect x="608.1" y="388.3" width="2.5" height="2.2"/><rect x="612.1" y="388.3" width="2.5" height="2.2"/><rect x="616.1" y="388.3" width="2.5" height="2.2"/><rect x="620.1" y="388.3" width="2.5" height="2.2"/><rect x="624.1" y="388.3" width="2.5" height="2.2"/><rect x="629.5" y="388.3" width="2.5" height="2.2"/><rect x="633.5" y="388.3" width="2.5" height="2.2"/><rect x="637.5" y="388.3" width="2.5" height="2.2"/><rect x="641.5" y="388.3" width="2.5" height="2.2"/><rect x="645.5" y="388.3" width="2.5" height="2.2"/><rect x="649.5" y="388.3" width="2.5" height="2.2"/><rect x="653.5" y="388.3" width="2.5" height="2.2"/><rect x="657.5" y="388.3" width="2.5" height="2.2"/><rect x="661.5" y="388.3" width="2.5" height="2.2"/><rect x="665.5" y="388.3" width="2.5" height="2.2"/><rect x="669.5" y="388.3" width="2.5" height="2.2"/><rect x="673.5" y="388.3" width="2.5" height="2.2"/><rect x="677.5" y="388.3" width="2.5" height="2.2"/><rect x="681.5" y="388.3" width="2.5" height="2.2"/><rect x="687.0" y="388.3" width="2.5" height="2.2"/><rect x="691.0" y="388.3" width="2.5" height="2.2"/><rect x="695.0" y="388.3" width="2.5" height="2.2"/><rect x="699.0" y="388.3" width="2.5" height="2.2"/><rect x="703.0" y="388.3" width="2.5" height="2.2"/><rect x="707.0" y="388.3" width="2.5" height="2.2"/><rect x="711.0" y="388.3" width="2.5" height="2.2"/><rect x="715.0" y="388.3" width="2.5" height="2.2"/><rect x="719.0" y="388.3" width="2.5" height="2.2"/><rect x="723.0" y="388.3" width="2.5" height="2.2"/><rect x="727.0" y="388.3" width="2.5" height="2.2"/><rect x="731.0" y="388.3" width="2.5" height="2.2"/><rect x="735.0" y="388.3" width="2.5" height="2.2"/><rect x="739.0" y="388.3" width="2.5" height="2.2"/><rect x="744.5" y="388.3" width="2.5" height="2.2"/><rect x="748.5" y="388.3" width="2.5" height="2.2"/><rect x="752.5" y="388.3" width="2.5" height="2.2"/><rect x="758.9" y="388.3" width="2.5" height="2.2"/><rect x="762.9" y="388.3" width="2.5" height="2.2"/><rect x="766.9" y="388.3" width="2.5" height="2.2"/><rect x="770.9" y="388.3" width="2.5" height="2.2"/><rect x="774.9" y="388.3" width="2.5" height="2.2"/><rect x="778.9" y="388.3" width="2.5" height="2.2"/><rect x="782.9" y="388.3" width="2.5" height="2.2"/><rect x="786.9" y="388.3" width="2.5" height="2.2"/><rect x="790.9" y="388.3" width="2.5" height="2.2"/><rect x="794.9" y="388.3" width="2.5" height="2.2"/><rect x="798.9" y="388.3" width="2.5" height="2.2"/><rect x="802.9" y="388.3" width="2.5" height="2.2"/><rect x="806.9" y="388.3" width="2.5" height="2.2"/><rect x="810.9" y="388.3" width="2.5" height="2.2"/><rect x="816.4" y="388.3" width="2.5" height="2.2"/><rect x="820.4" y="388.3" width="2.5" height="2.2"/><rect x="824.4" y="388.3" width="2.5" height="2.2"/><rect x="828.4" y="388.3" width="2.5" height="2.2"/><rect x="832.4" y="388.3" width="2.5" height="2.2"/><rect x="836.4" y="388.3" width="2.5" height="2.2"/><rect x="840.4" y="388.3" width="2.5" height="2.2"/><rect x="844.4" y="388.3" width="2.5" height="2.2"/><rect x="848.4" y="388.3" width="2.5" height="2.2"/><rect x="852.4" y="388.3" width="2.5" height="2.2"/><rect x="856.4" y="388.3" width="2.5" height="2.2"/><rect x="860.4" y="388.3" width="2.5" height="2.2"/><rect x="864.4" y="388.3" width="2.5" height="2.2"/><rect x="868.4" y="388.3" width="2.5" height="2.2"/><rect x="873.9" y="388.3" width="2.5" height="2.2"/><rect x="877.9" y="388.3" width="2.5" height="2.2"/><rect x="881.9" y="388.3" width="2.5" height="2.2"/><rect x="885.9" y="388.3" width="2.5" height="2.2"/><rect x="889.9" y="388.3" width="2.5" height="2.2"/><rect x="902.6" y="388.3" width="2.5" height="2.2"/><rect x="906.6" y="388.3" width="2.5" height="2.2"/><rect x="910.6" y="388.3" width="2.5" height="2.2"/><rect x="914.6" y="388.3" width="2.5" height="2.2"/><rect x="918.6" y="388.3" width="2.5" height="2.2"/><rect x="922.6" y="388.3" width="2.5" height="2.2"/><rect x="926.6" y="388.3" width="2.5" height="2.2"/><rect x="931.4" y="388.3" width="2.5" height="2.2"/><rect x="935.4" y="388.3" width="2.5" height="2.2"/><rect x="939.4" y="388.3" width="2.5" height="2.2"/><rect x="943.4" y="388.3" width="2.5" height="2.2"/><rect x="947.4" y="388.3" width="2.5" height="2.2"/><rect x="951.4" y="388.3" width="2.5" height="2.2"/><rect x="955.4" y="388.3" width="2.5" height="2.2"/><rect x="960.1" y="388.3" width="2.5" height="2.2"/><rect x="964.1" y="388.3" width="2.5" height="2.2"/><rect x="968.1" y="388.3" width="2.5" height="2.2"/><rect x="972.1" y="388.3" width="2.5" height="2.2"/><rect x="976.1" y="388.3" width="2.5" height="2.2"/><rect x="980.1" y="388.3" width="2.5" height="2.2"/><rect x="984.1" y="388.3" width="2.5" height="2.2"/><rect x="988.8" y="388.3" width="2.5" height="2.2"/><rect x="992.8" y="388.3" width="2.5" height="2.2"/><rect x="996.8" y="388.3" width="2.5" height="2.2"/><rect x="1000.8" y="388.3" width="2.5" height="2.2"/><rect x="1004.8" y="388.3" width="2.5" height="2.2"/><rect x="1008.8" y="388.3" width="2.5" height="2.2"/><rect x="1012.8" y="388.3" width="2.5" height="2.2"/><rect x="1017.6" y="388.3" width="2.5" height="2.2"/><rect x="1021.6" y="388.3" width="2.5" height="2.2"/><rect x="1025.6" y="388.3" width="2.5" height="2.2"/><rect x="1029.6" y="388.3" width="2.5" height="2.2"/><rect x="1033.6" y="388.3" width="2.5" height="2.2"/><rect x="1037.6" y="388.3" width="2.5" height="2.2"/><rect x="1041.6" y="388.3" width="2.5" height="2.2"/><rect x="1045.6" y="388.3" width="2.5" height="2.2"/><rect x="1049.6" y="388.3" width="2.5" height="2.2"/><rect x="1053.6" y="388.3" width="2.5" height="2.2"/><rect x="1057.6" y="388.3" width="2.5" height="2.2"/><rect x="1061.6" y="388.3" width="2.5" height="2.2"/><rect x="1065.6" y="388.3" width="2.5" height="2.2"/><rect x="1069.6" y="388.3" width="2.5" height="2.2"/><rect x="1075.1" y="388.3" width="2.5" height="2.2"/><rect x="1079.1" y="388.3" width="2.5" height="2.2"/><rect x="1083.1" y="388.3" width="2.5" height="2.2"/><rect x="1087.1" y="388.3" width="2.5" height="2.2"/><rect x="1091.1" y="388.3" width="2.5" height="2.2"/><rect x="1095.1" y="388.3" width="2.5" height="2.2"/><rect x="1099.1" y="388.3" width="2.5" height="2.2"/><rect x="1103.1" y="388.3" width="2.5" height="2.2"/><rect x="1107.1" y="388.3" width="2.5" height="2.2"/><rect x="1111.1" y="388.3" width="2.5" height="2.2"/><rect x="1115.1" y="388.3" width="2.5" height="2.2"/><rect x="1119.1" y="388.3" width="2.5" height="2.2"/><rect x="1123.1" y="388.3" width="2.5" height="2.2"/><rect x="1127.1" y="388.3" width="2.5" height="2.2"/><rect x="1132.6" y="388.3" width="2.5" height="2.2"/><rect x="1136.6" y="388.3" width="2.5" height="2.2"/><rect x="1140.6" y="388.3" width="2.5" height="2.2"/><rect x="1146.9" y="388.3" width="2.5" height="2.2"/><rect x="1150.9" y="388.3" width="2.5" height="2.2"/><rect x="1154.9" y="388.3" width="2.5" height="2.2"/><rect x="1158.9" y="388.3" width="2.5" height="2.2"/><rect x="1162.9" y="388.3" width="2.5" height="2.2"/><rect x="1166.9" y="388.3" width="2.5" height="2.2"/><rect x="1170.9" y="388.3" width="2.5" height="2.2"/><rect x="1175.7" y="388.3" width="2.5" height="2.2"/><rect x="1179.7" y="388.3" width="2.5" height="2.2"/><rect x="1183.7" y="388.3" width="2.5" height="2.2"/><rect x="1187.7" y="388.3" width="2.5" height="2.2"/><rect x="1191.7" y="388.3" width="2.5" height="2.2"/><rect x="1195.7" y="388.3" width="2.5" height="2.2"/><rect x="1199.7" y="388.3" width="2.5" height="2.2"/><rect x="1204.4" y="388.3" width="2.5" height="2.2"/><rect x="1208.4" y="388.3" width="2.5" height="2.2"/><rect x="1212.4" y="388.3" width="2.5" height="2.2"/><rect x="1216.4" y="388.3" width="2.5" height="2.2"/><rect x="1220.4" y="388.3" width="2.5" height="2.2"/><rect x="1224.4" y="388.3" width="2.5" height="2.2"/><rect x="1228.4" y="388.3" width="2.5" height="2.2"/><rect x="1232.4" y="388.3" width="2.5" height="2.2"/><rect x="1236.4" y="388.3" width="2.5" height="2.2"/><rect x="1240.4" y="388.3" width="2.5" height="2.2"/><rect x="1244.4" y="388.3" width="2.5" height="2.2"/><rect x="1248.4" y="388.3" width="2.5" height="2.2"/><rect x="1252.4" y="388.3" width="2.5" height="2.2"/><rect x="1256.4" y="388.3" width="2.5" height="2.2"/><rect x="1261.9" y="388.3" width="2.5" height="2.2"/><rect x="1265.9" y="388.3" width="2.5" height="2.2"/><rect x="1269.9" y="388.3" width="2.5" height="2.2"/><rect x="1273.9" y="388.3" width="2.5" height="2.2"/><rect x="1277.9" y="388.3" width="2.5" height="2.2"/><rect x="1281.9" y="388.3" width="2.5" height="2.2"/><rect x="1285.9" y="388.3" width="2.5" height="2.2"/><rect x="1290.7" y="388.3" width="2.5" height="2.2"/><rect x="1294.7" y="388.3" width="2.5" height="2.2"/><rect x="1298.7" y="388.3" width="2.5" height="2.2"/><rect x="1302.7" y="388.3" width="2.5" height="2.2"/><rect x="1306.7" y="388.3" width="2.5" height="2.2"/><rect x="1310.7" y="388.3" width="2.5" height="2.2"/><rect x="1314.7" y="388.3" width="2.5" height="2.2"/><rect x="1319.4" y="388.3" width="2.5" height="2.2"/><rect x="1323.4" y="388.3" width="2.5" height="2.2"/><rect x="1327.4" y="388.3" width="2.5" height="2.2"/><rect x="1331.4" y="388.3" width="2.5" height="2.2"/><rect x="1335.4" y="388.3" width="2.5" height="2.2"/><rect x="1339.4" y="388.3" width="2.5" height="2.2"/><rect x="1343.4" y="388.3" width="2.5" height="2.2"/><rect x="1347.4" y="388.3" width="2.5" height="2.2"/><rect x="1351.4" y="388.3" width="2.5" height="2.2"/><rect x="1355.4" y="388.3" width="2.5" height="2.2"/><rect x="1359.4" y="388.3" width="2.5" height="2.2"/><rect x="1363.4" y="388.3" width="2.5" height="2.2"/><rect x="1367.4" y="388.3" width="2.5" height="2.2"/><rect x="1371.4" y="388.3" width="2.5" height="2.2"/><rect x="1376.9" y="388.3" width="2.5" height="2.2"/><rect x="1380.9" y="388.3" width="2.5" height="2.2"/><rect x="1384.9" y="388.3" width="2.5" height="2.2"/><rect x="1388.9" y="388.3" width="2.5" height="2.2"/><rect x="1392.9" y="388.3" width="2.5" height="2.2"/><rect x="1396.9" y="388.3" width="2.5" height="2.2"/><rect x="1400.9" y="388.3" width="2.5" height="2.2"/><rect x="1404.9" y="388.3" width="2.5" height="2.2"/><rect x="1408.9" y="388.3" width="2.5" height="2.2"/><rect x="1412.9" y="388.3" width="2.5" height="2.2"/><rect x="1416.9" y="388.3" width="2.5" height="2.2"/><rect x="1420.9" y="388.3" width="2.5" height="2.2"/><rect x="1424.9" y="388.3" width="2.5" height="2.2"/><rect x="1428.9" y="388.3" width="2.5" height="2.2"/></g><g fill="rgba(160,235,245,0.8)"><rect x="343.1" y="416.8" width="3.0" height="1.6"/><rect x="348.1" y="416.8" width="7.0" height="1.6"/><rect x="353.1" y="416.8" width="5.0" height="1.6"/><rect x="358.1" y="416.8" width="3.0" height="1.6"/><rect x="378.1" y="416.8" width="5.0" height="1.6"/><rect x="383.1" y="416.8" width="3.0" height="1.6"/><rect x="388.1" y="416.8" width="3.0" height="1.6"/><rect x="393.1" y="416.8" width="3.0" height="1.6"/><rect x="343.1" y="427.8" width="3.0" height="1.6"/><rect x="353.1" y="427.8" width="3.0" height="1.6"/><rect x="358.1" y="427.8" width="5.0" height="1.6"/><rect x="368.1" y="427.8" width="3.0" height="1.6"/><rect x="378.1" y="427.8" width="7.0" height="1.6"/><rect x="383.1" y="427.8" width="3.0" height="1.6"/><rect x="388.1" y="427.8" width="3.0" height="1.6"/><rect x="343.1" y="433.8" width="7.0" height="1.6"/><rect x="348.1" y="433.8" width="5.0" height="1.6"/><rect x="353.1" y="433.8" width="5.0" height="1.6"/><rect x="358.1" y="433.8" width="3.0" height="1.6"/><rect x="363.1" y="433.8" width="5.0" height="1.6"/><rect x="368.1" y="433.8" width="7.0" height="1.6"/><rect x="373.1" y="433.8" width="3.0" height="1.6"/><rect x="383.1" y="433.8" width="7.0" height="1.6"/><rect x="388.1" y="433.8" width="7.0" height="1.6"/><rect x="393.1" y="433.8" width="7.0" height="1.6"/><rect x="343.1" y="437.8" width="5.0" height="1.6"/><rect x="348.1" y="437.8" width="5.0" height="1.6"/><rect x="353.1" y="437.8" width="5.0" height="1.6"/><rect x="358.1" y="437.8" width="7.0" height="1.6"/><rect x="363.1" y="437.8" width="5.0" height="1.6"/><rect x="368.1" y="437.8" width="7.0" height="1.6"/><rect x="373.1" y="437.8" width="7.0" height="1.6"/><rect x="378.1" y="437.8" width="5.0" height="1.6"/><rect x="388.1" y="437.8" width="5.0" height="1.6"/><rect x="343.1" y="441.8" width="3.0" height="1.6"/><rect x="348.1" y="441.8" width="3.0" height="1.6"/><rect x="353.1" y="441.8" width="7.0" height="1.6"/><rect x="358.1" y="441.8" width="3.0" height="1.6"/><rect x="368.1" y="441.8" width="5.0" height="1.6"/><rect x="373.1" y="441.8" width="5.0" height="1.6"/><rect x="378.1" y="441.8" width="7.0" height="1.6"/><rect x="383.1" y="441.8" width="7.0" height="1.6"/><rect x="388.1" y="441.8" width="7.0" height="1.6"/><rect x="393.1" y="441.8" width="3.0" height="1.6"/><rect x="348.1" y="445.8" width="5.0" height="1.6"/><rect x="353.1" y="445.8" width="3.0" height="1.6"/><rect x="358.1" y="445.8" width="3.0" height="1.6"/><rect x="368.1" y="445.8" width="5.0" height="1.6"/><rect x="373.1" y="445.8" width="7.0" height="1.6"/><rect x="378.1" y="445.8" width="3.0" height="1.6"/><rect x="388.1" y="445.8" width="5.0" height="1.6"/><rect x="343.1" y="449.8" width="7.0" height="1.6"/><rect x="348.1" y="449.8" width="3.0" height="1.6"/><rect x="358.1" y="449.8" width="5.0" height="1.6"/><rect x="363.1" y="449.8" width="5.0" height="1.6"/><rect x="368.1" y="449.8" width="3.0" height="1.6"/><rect x="373.1" y="449.8" width="5.0" height="1.6"/><rect x="378.1" y="449.8" width="7.0" height="1.6"/><rect x="383.1" y="449.8" width="3.0" height="1.6"/><rect x="388.1" y="449.8" width="3.0" height="1.6"/><rect x="393.1" y="449.8" width="3.0" height="1.6"/><rect x="343.1" y="453.8" width="5.0" height="1.6"/><rect x="348.1" y="453.8" width="5.0" height="1.6"/><rect x="353.1" y="453.8" width="5.0" height="1.6"/><rect x="358.1" y="453.8" width="7.0" height="1.6"/><rect x="363.1" y="453.8" width="7.0" height="1.6"/><rect x="368.1" y="453.8" width="5.0" height="1.6"/><rect x="373.1" y="453.8" width="5.0" height="1.6"/><rect x="378.1" y="453.8" width="5.0" height="1.6"/><rect x="383.1" y="453.8" width="3.0" height="1.6"/><rect x="388.1" y="453.8" width="7.0" height="1.6"/><rect x="393.1" y="453.8" width="7.0" height="1.6"/><rect x="405.6" y="416.8" width="3.0" height="1.6"/><rect x="410.6" y="416.8" width="7.0" height="1.6"/><rect x="415.6" y="416.8" width="5.0" height="1.6"/><rect x="420.6" y="416.8" width="3.0" height="1.6"/><rect x="425.6" y="416.8" width="7.0" height="1.6"/><rect x="430.6" y="416.8" width="5.0" height="1.6"/><rect x="440.6" y="416.8" width="3.0" height="1.6"/><rect x="445.6" y="416.8" width="5.0" height="1.6"/><rect x="450.6" y="416.8" width="3.0" height="1.6"/><rect x="400.6" y="427.8" width="7.0" height="1.6"/><rect x="405.6" y="427.8" width="5.0" height="1.6"/><rect x="410.6" y="427.8" width="3.0" height="1.6"/><rect x="420.6" y="427.8" width="3.0" height="1.6"/><rect x="425.6" y="427.8" width="5.0" height="1.6"/><rect x="435.6" y="427.8" width="5.0" height="1.6"/><rect x="440.6" y="427.8" width="3.0" height="1.6"/><rect x="450.6" y="427.8" width="5.0" height="1.6"/><rect x="400.6" y="433.8" width="3.0" height="1.6"/><rect x="410.6" y="433.8" width="7.0" height="1.6"/><rect x="415.6" y="433.8" width="3.0" height="1.6"/><rect x="435.6" y="433.8" width="7.0" height="1.6"/><rect x="440.6" y="433.8" width="7.0" height="1.6"/><rect x="445.6" y="433.8" width="5.0" height="1.6"/><rect x="400.6" y="437.8" width="7.0" height="1.6"/><rect x="405.6" y="437.8" width="5.0" height="1.6"/><rect x="410.6" y="437.8" width="3.0" height="1.6"/><rect x="425.6" y="437.8" width="5.0" height="1.6"/><rect x="430.6" y="437.8" width="7.0" height="1.6"/><rect x="435.6" y="437.8" width="5.0" height="1.6"/><rect x="445.6" y="437.8" width="7.0" height="1.6"/><rect x="400.6" y="441.8" width="5.0" height="1.6"/><rect x="410.6" y="441.8" width="7.0" height="1.6"/><rect x="415.6" y="441.8" width="5.0" height="1.6"/><rect x="425.6" y="441.8" width="5.0" height="1.6"/><rect x="430.6" y="441.8" width="5.0" height="1.6"/><rect x="435.6" y="441.8" width="7.0" height="1.6"/><rect x="440.6" y="441.8" width="7.0" height="1.6"/><rect x="445.6" y="441.8" width="3.0" height="1.6"/><rect x="400.6" y="445.8" width="7.0" height="1.6"/><rect x="410.6" y="445.8" width="3.0" height="1.6"/><rect x="415.6" y="445.8" width="5.0" height="1.6"/><rect x="420.6" y="445.8" width="5.0" height="1.6"/><rect x="430.6" y="445.8" width="7.0" height="1.6"/><rect x="445.6" y="445.8" width="7.0" height="1.6"/><rect x="400.6" y="449.8" width="7.0" height="1.6"/><rect x="405.6" y="449.8" width="7.0" height="1.6"/><rect x="410.6" y="449.8" width="7.0" height="1.6"/><rect x="415.6" y="449.8" width="7.0" height="1.6"/><rect x="420.6" y="449.8" width="7.0" height="1.6"/><rect x="425.6" y="449.8" width="7.0" height="1.6"/><rect x="430.6" y="449.8" width="7.0" height="1.6"/><rect x="435.6" y="449.8" width="3.0" height="1.6"/><rect x="440.6" y="449.8" width="7.0" height="1.6"/><rect x="450.6" y="449.8" width="3.0" height="1.6"/><rect x="405.6" y="453.8" width="7.0" height="1.6"/><rect x="410.6" y="453.8" width="7.0" height="1.6"/><rect x="415.6" y="453.8" width="7.0" height="1.6"/><rect x="425.6" y="453.8" width="7.0" height="1.6"/><rect x="430.6" y="453.8" width="5.0" height="1.6"/><rect x="435.6" y="453.8" width="3.0" height="1.6"/><rect x="440.6" y="453.8" width="5.0" height="1.6"/><rect x="445.6" y="453.8" width="3.0" height="1.6"/><rect x="450.6" y="453.8" width="3.0" height="1.6"/><rect x="458.1" y="416.8" width="7.0" height="1.6"/><rect x="463.1" y="416.8" width="5.0" height="1.6"/><rect x="473.1" y="416.8" width="5.0" height="1.6"/><rect x="478.1" y="416.8" width="3.0" height="1.6"/><rect x="483.1" y="416.8" width="5.0" height="1.6"/><rect x="488.1" y="416.8" width="5.0" height="1.6"/><rect x="493.1" y="416.8" width="3.0" height="1.6"/><rect x="458.1" y="427.8" width="5.0" height="1.6"/><rect x="468.1" y="427.8" width="3.0" height="1.6"/><rect x="483.1" y="427.8" width="3.0" height="1.6"/><rect x="493.1" y="427.8" width="7.0" height="1.6"/><rect x="458.1" y="433.8" width="5.0" height="1.6"/><rect x="463.1" y="433.8" width="3.0" height="1.6"/><rect x="473.1" y="433.8" width="3.0" height="1.6"/><rect x="478.1" y="433.8" width="5.0" height="1.6"/><rect x="483.1" y="433.8" width="5.0" height="1.6"/><rect x="488.1" y="433.8" width="7.0" height="1.6"/><rect x="493.1" y="433.8" width="5.0" height="1.6"/><rect x="458.1" y="437.8" width="3.0" height="1.6"/><rect x="463.1" y="437.8" width="5.0" height="1.6"/><rect x="468.1" y="437.8" width="5.0" height="1.6"/><rect x="473.1" y="437.8" width="5.0" height="1.6"/><rect x="478.1" y="437.8" width="7.0" height="1.6"/><rect x="483.1" y="437.8" width="7.0" height="1.6"/><rect x="488.1" y="437.8" width="5.0" height="1.6"/><rect x="493.1" y="437.8" width="7.0" height="1.6"/><rect x="458.1" y="441.8" width="7.0" height="1.6"/><rect x="463.1" y="441.8" width="3.0" height="1.6"/><rect x="468.1" y="441.8" width="3.0" height="1.6"/><rect x="473.1" y="441.8" width="5.0" height="1.6"/><rect x="478.1" y="441.8" width="5.0" height="1.6"/><rect x="488.1" y="441.8" width="7.0" height="1.6"/><rect x="493.1" y="441.8" width="3.0" height="1.6"/><rect x="458.1" y="445.8" width="3.0" height="1.6"/><rect x="463.1" y="445.8" width="5.0" height="1.6"/><rect x="468.1" y="445.8" width="3.0" height="1.6"/><rect x="473.1" y="445.8" width="7.0" height="1.6"/><rect x="478.1" y="445.8" width="7.0" height="1.6"/><rect x="483.1" y="445.8" width="5.0" height="1.6"/><rect x="493.1" y="445.8" width="5.0" height="1.6"/><rect x="458.1" y="449.8" width="7.0" height="1.6"/><rect x="468.1" y="449.8" width="7.0" height="1.6"/><rect x="473.1" y="449.8" width="5.0" height="1.6"/><rect x="483.1" y="449.8" width="7.0" height="1.6"/><rect x="488.1" y="449.8" width="5.0" height="1.6"/><rect x="493.1" y="449.8" width="7.0" height="1.6"/><rect x="463.1" y="453.8" width="7.0" height="1.6"/><rect x="468.1" y="453.8" width="7.0" height="1.6"/><rect x="483.1" y="453.8" width="7.0" height="1.6"/><rect x="488.1" y="453.8" width="5.0" height="1.6"/><rect x="493.1" y="453.8" width="7.0" height="1.6"/><rect x="765.1" y="434.4" width="2.0" height="4.0"/><rect x="761.7" y="448.5" width="5.0" height="2.5"/><rect x="774.7" y="431.4" width="2.0" height="4.0"/><rect x="779.3" y="440.3" width="5.0" height="2.5"/><rect x="791.0" y="429.1" width="2.0" height="4.0"/><rect x="790.8" y="440.5" width="5.0" height="2.5"/><rect x="806.0" y="432.0" width="2.0" height="4.0"/><rect x="805.7" y="448.8" width="5.0" height="2.5"/><rect x="822.7" y="433.4" width="2.0" height="4.0"/><rect x="820.6" y="445.1" width="5.0" height="2.5"/><rect x="839.7" y="430.0" width="2.0" height="4.0"/><rect x="833.5" y="450.2" width="5.0" height="2.5"/><rect x="848.7" y="430.8" width="2.0" height="4.0"/><rect x="849.6" y="446.6" width="5.0" height="2.5"/><rect x="867.2" y="433.0" width="2.0" height="4.0"/><rect x="866.5" y="441.2" width="5.0" height="2.5"/><rect x="1150.8" y="437.2" width="2.0" height="4.0"/><rect x="1148.7" y="441.7" width="5.0" height="2.5"/><rect x="1169.7" y="437.5" width="2.0" height="4.0"/><rect x="1168.0" y="447.0" width="5.0" height="2.5"/><rect x="1181.6" y="430.1" width="2.0" height="4.0"/><rect x="1179.5" y="445.1" width="5.0" height="2.5"/><rect x="1198.4" y="433.6" width="2.0" height="4.0"/><rect x="1191.9" y="445.3" width="5.0" height="2.5"/><rect x="1208.9" y="436.2" width="2.0" height="4.0"/><rect x="1207.4" y="442.3" width="5.0" height="2.5"/><rect x="1225.5" y="425.0" width="2.0" height="4.0"/><rect x="1218.2" y="450.2" width="5.0" height="2.5"/><rect x="1233.0" y="436.7" width="2.0" height="4.0"/><rect x="1238.7" y="447.5" width="5.0" height="2.5"/><rect x="1248.7" y="435.2" width="2.0" height="4.0"/><rect x="1249.2" y="445.1" width="5.0" height="2.5"/><rect x="1344.9" y="419.6" width="32.0" height="1.6"/><rect x="1341.9" y="417.0" width="32.0" height="1.6"/><rect x="1340.6" y="425.0" width="6.0" height="1.6"/><rect x="1358.2" y="446.4" width="6.0" height="1.6"/><rect x="1383.4" y="420.8" width="32.0" height="1.6"/><rect x="1411.3" y="421.7" width="24.0" height="1.6"/><rect x="1364.3" y="423.6" width="16.0" height="1.6"/><rect x="1349.6" y="443.2" width="6.0" height="1.6"/><rect x="1380.7" y="425.0" width="6.0" height="1.6"/><rect x="1405.2" y="422.5" width="10.0" height="1.6"/><rect x="1407.2" y="416.4" width="24.0" height="1.6"/><rect x="1393.4" y="423.0" width="16.0" height="1.6"/><rect x="1401.8" y="415.2" width="32.0" height="1.6"/><rect x="1376.0" y="455.7" width="16.0" height="1.6"/><rect x="1346.1" y="458.3" width="32.0" height="1.6"/><rect x="1368.7" y="453.9" width="10.0" height="1.6"/><rect x="1399.4" y="435.4" width="10.0" height="1.6"/><rect x="1395.4" y="429.4" width="24.0" height="1.6"/><rect x="1380.3" y="446.4" width="6.0" height="1.6"/><rect x="1388.6" y="449.6" width="32.0" height="1.6"/><rect x="1382.8" y="423.3" width="32.0" height="1.6"/><rect x="1399.9" y="454.3" width="24.0" height="1.6"/><rect x="1367.8" y="418.6" width="6.0" height="1.6"/><rect x="1336.8" y="421.0" width="16.0" height="1.6"/><rect x="1407.3" y="415.1" width="24.0" height="1.6"/><rect x="1341.5" y="448.0" width="16.0" height="1.6"/><rect x="1347.8" y="446.6" width="6.0" height="1.6"/><rect x="1344.0" y="430.6" width="10.0" height="1.6"/><rect x="1325.2" y="420.0" width="16.0" height="1.6"/><rect x="1334.4" y="445.0" width="16.0" height="1.6"/><rect x="1384.3" y="442.9" width="16.0" height="1.6"/><rect x="1353.9" y="424.5" width="10.0" height="1.6"/><rect x="1451.8" y="434.8" width="32.0" height="1.6"/><rect x="1448.0" y="445.7" width="24.0" height="1.6"/><rect x="1462.0" y="450.1" width="10.0" height="1.6"/><rect x="1462.2" y="444.7" width="32.0" height="1.6"/><rect x="1466.2" y="418.4" width="24.0" height="1.6"/><rect x="1453.6" y="430.7" width="32.0" height="1.6"/><rect x="1438.5" y="451.3" width="32.0" height="1.6"/><rect x="1441.7" y="438.4" width="10.0" height="1.6"/><rect x="1446.3" y="437.7" width="6.0" height="1.6"/><rect x="1459.2" y="446.3" width="24.0" height="1.6"/><rect x="1437.7" y="437.3" width="6.0" height="1.6"/><rect x="1450.9" y="437.4" width="24.0" height="1.6"/><rect x="1454.9" y="439.4" width="16.0" height="1.6"/><rect x="1460.8" y="432.2" width="6.0" height="1.6"/><rect x="1461.6" y="440.2" width="6.0" height="1.6"/><rect x="1449.8" y="445.6" width="32.0" height="1.6"/><rect x="1622.4" y="455.9" width="6.0" height="1.6"/><rect x="1621.4" y="435.6" width="16.0" height="1.6"/><rect x="1545.6" y="448.6" width="24.0" height="1.6"/><rect x="1541.0" y="454.0" width="24.0" height="1.6"/><rect x="1606.1" y="454.7" width="24.0" height="1.6"/><rect x="1502.4" y="457.2" width="32.0" height="1.6"/><rect x="1509.3" y="452.7" width="6.0" height="1.6"/><rect x="1515.3" y="438.4" width="32.0" height="1.6"/><rect x="1508.6" y="457.9" width="6.0" height="1.6"/><rect x="1591.2" y="457.9" width="24.0" height="1.6"/><rect x="1580.3" y="438.8" width="32.0" height="1.6"/><rect x="1541.7" y="424.9" width="24.0" height="1.6"/><rect x="1537.3" y="426.9" width="6.0" height="1.6"/><rect x="1496.1" y="443.8" width="32.0" height="1.6"/><rect x="1592.5" y="453.7" width="6.0" height="1.6"/><rect x="1523.5" y="417.8" width="32.0" height="1.6"/><rect x="1496.3" y="441.1" width="6.0" height="1.6"/><rect x="1524.0" y="416.7" width="24.0" height="1.6"/><rect x="1522.6" y="424.4" width="6.0" height="1.6"/><rect x="1510.3" y="458.5" width="10.0" height="1.6"/><rect x="1599.0" y="447.0" width="16.0" height="1.6"/><rect x="1567.7" y="448.8" width="16.0" height="1.6"/><rect x="1523.0" y="453.4" width="32.0" height="1.6"/><rect x="1520.9" y="428.0" width="6.0" height="1.6"/><rect x="1565.0" y="440.8" width="10.0" height="1.6"/><rect x="1574.1" y="433.6" width="24.0" height="1.6"/><rect x="1498.0" y="430.0" width="24.0" height="1.6"/><rect x="1595.1" y="428.8" width="24.0" height="1.6"/><rect x="1545.5" y="428.0" width="10.0" height="1.6"/><rect x="1590.9" y="435.6" width="10.0" height="1.6"/><rect x="1531.4" y="445.9" width="24.0" height="1.6"/><rect x="1612.0" y="439.5" width="24.0" height="1.6"/><rect x="1565.1" y="420.7" width="10.0" height="1.6"/><rect x="1525.4" y="429.3" width="6.0" height="1.6"/><rect x="1613.0" y="452.1" width="6.0" height="1.6"/><rect x="1562.2" y="451.3" width="6.0" height="1.6"/><rect x="1527.1" y="444.4" width="32.0" height="1.6"/><rect x="1497.1" y="418.0" width="32.0" height="1.6"/><rect x="1587.0" y="439.4" width="24.0" height="1.6"/><rect x="1519.3" y="454.7" width="16.0" height="1.6"/><rect x="1617.6" y="415.5" width="10.0" height="1.6"/><rect x="1618.2" y="420.0" width="24.0" height="1.6"/><rect x="1612.0" y="445.4" width="10.0" height="1.6"/></g><g fill="rgba(200,250,255,0.9)"><rect x="760.9" y="414.8" width="6.0" height="2.5"/><rect x="775.3" y="414.8" width="6.0" height="2.5"/><rect x="789.6" y="414.8" width="6.0" height="2.5"/><rect x="804.0" y="414.8" width="6.0" height="2.5"/><rect x="818.4" y="414.8" width="6.0" height="2.5"/><rect x="832.7" y="414.8" width="6.0" height="2.5"/><rect x="847.1" y="414.8" width="6.0" height="2.5"/><rect x="861.5" y="414.8" width="6.0" height="2.5"/><rect x="1148.9" y="414.8" width="6.0" height="2.5"/><rect x="1163.3" y="414.8" width="6.0" height="2.5"/><rect x="1177.7" y="414.8" width="6.0" height="2.5"/><rect x="1192.0" y="414.8" width="6.0" height="2.5"/><rect x="1206.4" y="414.8" width="6.0" height="2.5"/><rect x="1220.8" y="414.8" width="6.0" height="2.5"/><rect x="1235.2" y="414.8" width="6.0" height="2.5"/><rect x="1249.5" y="414.8" width="6.0" height="2.5"/></g><g fill="rgba(245,150,250,0.85)"><rect x="513.6" y="485.8" width="5.0" height="2.5"/><rect x="519.6" y="492.8" width="6.0" height="2.5"/><rect x="524.6" y="497.8" width="7.0" height="2.5"/><rect x="530.6" y="500.8" width="6.0" height="2.5"/><rect x="537.6" y="502.8" width="8.0" height="2.5"/><rect x="546.6" y="498.8" width="10.0" height="2.5"/><rect x="557.6" y="493.8" width="12.0" height="2.5"/><rect x="513.6" y="507.8" width="5.0" height="2.5"/><rect x="519.6" y="514.8" width="6.0" height="2.5"/><rect x="524.6" y="519.8" width="7.0" height="2.5"/><rect x="530.6" y="522.8" width="6.0" height="2.5"/><rect x="537.6" y="524.8" width="8.0" height="2.5"/><rect x="546.6" y="520.8" width="10.0" height="2.5"/><rect x="557.6" y="515.8" width="12.0" height="2.5"/><rect x="571.2" y="485.8" width="5.0" height="2.5"/><rect x="577.2" y="492.8" width="6.0" height="2.5"/><rect x="582.2" y="497.8" width="7.0" height="2.5"/><rect x="588.2" y="500.8" width="6.0" height="2.5"/><rect x="595.2" y="502.8" width="8.0" height="2.5"/><rect x="604.2" y="498.8" width="10.0" height="2.5"/><rect x="615.2" y="493.8" width="12.0" height="2.5"/><rect x="571.2" y="507.8" width="5.0" height="2.5"/><rect x="577.2" y="514.8" width="6.0" height="2.5"/><rect x="582.2" y="519.8" width="7.0" height="2.5"/><rect x="588.2" y="522.8" width="6.0" height="2.5"/><rect x="595.2" y="524.8" width="8.0" height="2.5"/><rect x="604.2" y="520.8" width="10.0" height="2.5"/><rect x="615.2" y="515.8" width="12.0" height="2.5"/><rect x="628.5" y="485.8" width="5.0" height="2.5"/><rect x="634.5" y="492.8" width="6.0" height="2.5"/><rect x="639.5" y="497.8" width="7.0" height="2.5"/><rect x="645.5" y="500.8" width="6.0" height="2.5"/><rect x="652.5" y="502.8" width="8.0" height="2.5"/><rect x="661.5" y="498.8" width="10.0" height="2.5"/><rect x="672.5" y="493.8" width="12.0" height="2.5"/><rect x="628.5" y="507.8" width="5.0" height="2.5"/><rect x="634.5" y="514.8" width="6.0" height="2.5"/><rect x="639.5" y="519.8" width="7.0" height="2.5"/><rect x="645.5" y="522.8" width="6.0" height="2.5"/><rect x="652.5" y="524.8" width="8.0" height="2.5"/><rect x="661.5" y="520.8" width="10.0" height="2.5"/><rect x="672.5" y="515.8" width="12.0" height="2.5"/><rect x="686.1" y="485.8" width="5.0" height="2.5"/><rect x="692.1" y="492.8" width="6.0" height="2.5"/><rect x="697.1" y="497.8" width="7.0" height="2.5"/><rect x="703.1" y="500.8" width="6.0" height="2.5"/><rect x="710.1" y="502.8" width="8.0" height="2.5"/><rect x="719.1" y="498.8" width="10.0" height="2.5"/><rect x="730.1" y="493.8" width="12.0" height="2.5"/><rect x="686.1" y="507.8" width="5.0" height="2.5"/><rect x="692.1" y="514.8" width="6.0" height="2.5"/><rect x="697.1" y="519.8" width="7.0" height="2.5"/><rect x="703.1" y="522.8" width="6.0" height="2.5"/><rect x="710.1" y="524.8" width="8.0" height="2.5"/><rect x="719.1" y="520.8" width="10.0" height="2.5"/><rect x="730.1" y="515.8" width="12.0" height="2.5"/><rect x="757.9" y="488.8" width="6.0" height="2.5"/><rect x="763.9" y="493.8" width="6.0" height="2.5"/><rect x="769.9" y="496.8" width="6.0" height="2.5"/><rect x="777.9" y="493.8" width="8.0" height="2.5"/><rect x="757.9" y="510.8" width="6.0" height="2.5"/><rect x="763.9" y="515.8" width="6.0" height="2.5"/><rect x="769.9" y="518.8" width="6.0" height="2.5"/><rect x="777.9" y="515.8" width="8.0" height="2.5"/><rect x="786.7" y="488.8" width="6.0" height="2.5"/><rect x="792.7" y="493.8" width="6.0" height="2.5"/><rect x="798.7" y="496.8" width="6.0" height="2.5"/><rect x="806.7" y="493.8" width="7.7" height="2.5"/><rect x="786.7" y="510.8" width="6.0" height="2.5"/><rect x="792.7" y="515.8" width="6.0" height="2.5"/><rect x="798.7" y="518.8" width="6.0" height="2.5"/><rect x="806.7" y="515.8" width="7.7" height="2.5"/><rect x="815.4" y="488.8" width="6.0" height="2.5"/><rect x="821.4" y="493.8" width="6.0" height="2.5"/><rect x="827.4" y="496.8" width="6.0" height="2.5"/><rect x="835.4" y="493.8" width="8.0" height="2.5"/><rect x="815.4" y="510.8" width="6.0" height="2.5"/><rect x="821.4" y="515.8" width="6.0" height="2.5"/><rect x="827.4" y="518.8" width="6.0" height="2.5"/><rect x="835.4" y="515.8" width="8.0" height="2.5"/><rect x="844.2" y="488.8" width="6.0" height="2.5"/><rect x="850.2" y="493.8" width="6.0" height="2.5"/><rect x="856.2" y="496.8" width="6.0" height="2.5"/><rect x="864.2" y="493.8" width="7.7" height="2.5"/><rect x="844.2" y="510.8" width="6.0" height="2.5"/><rect x="850.2" y="515.8" width="6.0" height="2.5"/><rect x="856.2" y="518.8" width="6.0" height="2.5"/><rect x="864.2" y="515.8" width="7.7" height="2.5"/><rect x="1145.9" y="488.8" width="6.0" height="2.5"/><rect x="1151.9" y="493.8" width="6.0" height="2.5"/><rect x="1157.9" y="496.8" width="6.0" height="2.5"/><rect x="1165.9" y="493.8" width="8.0" height="2.5"/><rect x="1145.9" y="510.8" width="6.0" height="2.5"/><rect x="1151.9" y="515.8" width="6.0" height="2.5"/><rect x="1157.9" y="518.8" width="6.0" height="2.5"/><rect x="1165.9" y="515.8" width="8.0" height="2.5"/><rect x="1174.7" y="488.8" width="6.0" height="2.5"/><rect x="1180.7" y="493.8" width="6.0" height="2.5"/><rect x="1186.7" y="496.8" width="6.0" height="2.5"/><rect x="1194.7" y="493.8" width="7.7" height="2.5"/><rect x="1174.7" y="510.8" width="6.0" height="2.5"/><rect x="1180.7" y="515.8" width="6.0" height="2.5"/><rect x="1186.7" y="518.8" width="6.0" height="2.5"/><rect x="1194.7" y="515.8" width="7.7" height="2.5"/><rect x="1203.4" y="488.8" width="6.0" height="2.5"/><rect x="1209.4" y="493.8" width="6.0" height="2.5"/><rect x="1215.4" y="496.8" width="6.0" height="2.5"/><rect x="1223.4" y="493.8" width="8.0" height="2.5"/><rect x="1203.4" y="510.8" width="6.0" height="2.5"/><rect x="1209.4" y="515.8" width="6.0" height="2.5"/><rect x="1215.4" y="518.8" width="6.0" height="2.5"/><rect x="1223.4" y="515.8" width="8.0" height="2.5"/><rect x="1232.2" y="488.8" width="6.0" height="2.5"/><rect x="1238.2" y="493.8" width="6.0" height="2.5"/><rect x="1244.2" y="496.8" width="6.0" height="2.5"/><rect x="1252.2" y="493.8" width="7.7" height="2.5"/><rect x="1232.2" y="510.8" width="6.0" height="2.5"/><rect x="1238.2" y="515.8" width="6.0" height="2.5"/><rect x="1244.2" y="518.8" width="6.0" height="2.5"/><rect x="1252.2" y="515.8" width="7.7" height="2.5"/></g><g fill="rgba(160,140,240,0.85)"><rect x="342.1" y="552.8" width="12.0" height="5.0"/><rect x="363.5" y="578.8" width="8.0" height="5.0"/><rect x="372.8" y="565.8" width="8.0" height="5.0"/><rect x="399.6" y="552.8" width="12.0" height="5.0"/><rect x="421.0" y="578.8" width="8.0" height="5.0"/><rect x="430.3" y="565.8" width="8.0" height="5.0"/><rect x="457.1" y="552.8" width="12.0" height="5.0"/><rect x="478.4" y="578.8" width="8.0" height="5.0"/><rect x="487.8" y="565.8" width="8.0" height="5.0"/></g><g fill="rgba(140,140,200,0.6)"><rect x="515.8" y="556.8" width="8.0" height="5.0"/><rect x="518.3" y="590.8" width="6.0" height="5.0"/><rect x="530.7" y="556.8" width="8.0" height="5.0"/><rect x="534.6" y="572.8" width="6.0" height="5.0"/><rect x="544.3" y="556.8" width="8.0" height="5.0"/><rect x="547.2" y="568.8" width="6.0" height="5.0"/><rect x="560.4" y="556.8" width="8.0" height="5.0"/><rect x="559.1" y="568.8" width="6.0" height="5.0"/><rect x="563.5" y="590.8" width="6.0" height="5.0"/><rect x="576.8" y="556.8" width="8.0" height="5.0"/><rect x="577.8" y="572.8" width="6.0" height="5.0"/><rect x="577.2" y="590.8" width="6.0" height="5.0"/><rect x="590.0" y="556.8" width="8.0" height="5.0"/><rect x="592.6" y="568.8" width="6.0" height="5.0"/><rect x="592.3" y="585.8" width="6.0" height="5.0"/><rect x="619.4" y="554.8" width="8.0" height="5.0"/><rect x="616.2" y="568.8" width="6.0" height="5.0"/><rect x="617.8" y="590.8" width="6.0" height="5.0"/><rect x="629.6" y="556.8" width="8.0" height="5.0"/><rect x="633.2" y="572.8" width="6.0" height="5.0"/><rect x="631.5" y="590.8" width="6.0" height="5.0"/><rect x="644.6" y="585.8" width="6.0" height="5.0"/><rect x="661.4" y="556.8" width="8.0" height="5.0"/><rect x="661.1" y="590.8" width="6.0" height="5.0"/><rect x="674.4" y="568.8" width="6.0" height="5.0"/><rect x="678.5" y="585.8" width="6.0" height="5.0"/><rect x="691.3" y="554.8" width="8.0" height="5.0"/><rect x="689.7" y="572.8" width="6.0" height="5.0"/><rect x="687.1" y="585.8" width="6.0" height="5.0"/><rect x="705.6" y="556.8" width="8.0" height="5.0"/><rect x="707.4" y="568.8" width="6.0" height="5.0"/><rect x="722.1" y="572.8" width="6.0" height="5.0"/><rect x="722.2" y="590.8" width="6.0" height="5.0"/><rect x="730.4" y="572.8" width="6.0" height="5.0"/><rect x="731.6" y="585.8" width="6.0" height="5.0"/><rect x="762.5" y="556.8" width="8.0" height="5.0"/><rect x="762.8" y="590.8" width="6.0" height="5.0"/><rect x="776.0" y="556.8" width="8.0" height="5.0"/><rect x="780.2" y="585.8" width="6.0" height="5.0"/><rect x="792.5" y="554.8" width="8.0" height="5.0"/><rect x="789.3" y="568.8" width="6.0" height="5.0"/><rect x="793.0" y="590.8" width="6.0" height="5.0"/><rect x="806.4" y="572.8" width="6.0" height="5.0"/><rect x="804.5" y="590.8" width="6.0" height="5.0"/><rect x="819.8" y="556.8" width="8.0" height="5.0"/><rect x="820.7" y="568.8" width="6.0" height="5.0"/><rect x="831.5" y="554.8" width="8.0" height="5.0"/><rect x="831.5" y="585.8" width="6.0" height="5.0"/><rect x="850.4" y="568.8" width="6.0" height="5.0"/><rect x="846.4" y="590.8" width="6.0" height="5.0"/><rect x="862.1" y="554.8" width="8.0" height="5.0"/><rect x="862.0" y="568.8" width="6.0" height="5.0"/><rect x="865.0" y="590.8" width="6.0" height="5.0"/><rect x="875.9" y="554.8" width="8.0" height="5.0"/><rect x="880.8" y="585.8" width="6.0" height="5.0"/><rect x="889.1" y="556.8" width="8.0" height="5.0"/><rect x="890.1" y="572.8" width="6.0" height="5.0"/><rect x="888.7" y="590.8" width="6.0" height="5.0"/><rect x="904.1" y="554.8" width="8.0" height="5.0"/><rect x="909.2" y="572.8" width="6.0" height="5.0"/><rect x="904.0" y="585.8" width="6.0" height="5.0"/><rect x="917.0" y="556.8" width="8.0" height="5.0"/><rect x="921.3" y="572.8" width="6.0" height="5.0"/><rect x="920.0" y="585.8" width="6.0" height="5.0"/><rect x="934.4" y="554.8" width="8.0" height="5.0"/><rect x="932.6" y="572.8" width="6.0" height="5.0"/><rect x="949.2" y="556.8" width="8.0" height="5.0"/><rect x="961.5" y="556.8" width="8.0" height="5.0"/><rect x="966.6" y="568.8" width="6.0" height="5.0"/><rect x="963.9" y="585.8" width="6.0" height="5.0"/><rect x="979.4" y="572.8" width="6.0" height="5.0"/><rect x="994.8" y="572.8" width="6.0" height="5.0"/><rect x="1147.8" y="554.8" width="8.0" height="5.0"/><rect x="1150.8" y="572.8" width="6.0" height="5.0"/><rect x="1153.6" y="585.8" width="6.0" height="5.0"/><rect x="1164.5" y="554.8" width="8.0" height="5.0"/><rect x="1161.5" y="585.8" width="6.0" height="5.0"/><rect x="1177.8" y="554.8" width="8.0" height="5.0"/><rect x="1180.9" y="585.8" width="6.0" height="5.0"/><rect x="1194.0" y="554.8" width="8.0" height="5.0"/><rect x="1191.4" y="568.8" width="6.0" height="5.0"/><rect x="1196.1" y="590.8" width="6.0" height="5.0"/><rect x="1207.5" y="554.8" width="8.0" height="5.0"/><rect x="1210.3" y="568.8" width="6.0" height="5.0"/><rect x="1220.3" y="554.8" width="8.0" height="5.0"/><rect x="1220.5" y="585.8" width="6.0" height="5.0"/><rect x="1236.6" y="556.8" width="8.0" height="5.0"/><rect x="1234.1" y="572.8" width="6.0" height="5.0"/><rect x="1236.6" y="585.8" width="6.0" height="5.0"/><rect x="1250.0" y="554.8" width="8.0" height="5.0"/><rect x="1253.4" y="568.8" width="6.0" height="5.0"/><rect x="1438.1" y="556.8" width="8.0" height="5.0"/><rect x="1437.8" y="568.8" width="6.0" height="5.0"/><rect x="1455.5" y="572.8" width="6.0" height="5.0"/><rect x="1465.1" y="556.8" width="8.0" height="5.0"/><rect x="1465.4" y="590.8" width="6.0" height="5.0"/><rect x="1480.4" y="556.8" width="8.0" height="5.0"/></g><g fill="rgba(160,170,200,0.6)"><rect x="1019.1" y="556.8" width="8.0" height="5.0"/><rect x="1032.3" y="556.8" width="8.0" height="5.0"/><rect x="1035.7" y="572.8" width="6.0" height="5.0"/><rect x="1037.5" y="590.8" width="6.0" height="5.0"/><rect x="1050.4" y="554.8" width="8.0" height="5.0"/><rect x="1048.1" y="572.8" width="6.0" height="5.0"/><rect x="1050.6" y="590.8" width="6.0" height="5.0"/><rect x="1066.3" y="568.8" width="6.0" height="5.0"/><rect x="1062.5" y="585.8" width="6.0" height="5.0"/><rect x="1077.0" y="554.8" width="8.0" height="5.0"/><rect x="1075.2" y="568.8" width="6.0" height="5.0"/><rect x="1081.5" y="585.8" width="6.0" height="5.0"/><rect x="1094.1" y="554.8" width="8.0" height="5.0"/><rect x="1091.8" y="568.8" width="6.0" height="5.0"/><rect x="1091.9" y="585.8" width="6.0" height="5.0"/><rect x="1107.3" y="556.8" width="8.0" height="5.0"/><rect x="1104.1" y="568.8" width="6.0" height="5.0"/><rect x="1106.2" y="585.8" width="6.0" height="5.0"/><rect x="1263.3" y="572.8" width="6.0" height="5.0"/><rect x="1278.8" y="556.8" width="8.0" height="5.0"/><rect x="1282.2" y="572.8" width="6.0" height="5.0"/><rect x="1280.2" y="585.8" width="6.0" height="5.0"/><rect x="1292.0" y="556.8" width="8.0" height="5.0"/><rect x="1293.9" y="572.8" width="6.0" height="5.0"/><rect x="1291.4" y="585.8" width="6.0" height="5.0"/><rect x="1307.7" y="556.8" width="8.0" height="5.0"/><rect x="1310.3" y="572.8" width="6.0" height="5.0"/><rect x="1312.0" y="585.8" width="6.0" height="5.0"/><rect x="1322.7" y="554.8" width="8.0" height="5.0"/><rect x="1326.4" y="572.8" width="6.0" height="5.0"/><rect x="1325.4" y="585.8" width="6.0" height="5.0"/><rect x="1338.7" y="554.8" width="8.0" height="5.0"/><rect x="1338.9" y="572.8" width="6.0" height="5.0"/><rect x="1350.3" y="554.8" width="8.0" height="5.0"/><rect x="1366.2" y="568.8" width="6.0" height="5.0"/><rect x="1367.4" y="590.8" width="6.0" height="5.0"/><rect x="1381.6" y="554.8" width="8.0" height="5.0"/><rect x="1382.1" y="572.8" width="6.0" height="5.0"/><rect x="1397.3" y="585.8" width="6.0" height="5.0"/><rect x="1407.2" y="554.8" width="8.0" height="5.0"/><rect x="1422.9" y="556.8" width="8.0" height="5.0"/><rect x="1420.5" y="585.8" width="6.0" height="5.0"/></g><g fill="rgba(190,140,230,0.7)"><rect x="453.7" y="662.8" width="18.0" height="2.0"/><rect x="433.8" y="664.8" width="18.0" height="2.0"/><rect x="360.3" y="662.8" width="28.0" height="2.0"/><rect x="409.0" y="664.8" width="18.0" height="2.0"/><rect x="487.9" y="662.8" width="28.0" height="2.0"/><rect x="501.6" y="622.8" width="10.0" height="2.0"/><rect x="523.2" y="654.5" width="1.0" height="6.0"/><rect x="519.6" y="635.1" width="1.0" height="3.0"/><rect x="534.8" y="653.5" width="1.0" height="3.0"/><rect x="517.4" y="644.1" width="1.0" height="3.0"/><rect x="538.0" y="625.9" width="1.0" height="3.0"/><rect x="514.6" y="639.0" width="1.0" height="3.0"/><rect x="546.9" y="640.5" width="1.0" height="6.0"/><rect x="515.1" y="646.5" width="1.0" height="3.0"/><rect x="568.4" y="637.2" width="1.0" height="3.0"/><rect x="540.6" y="630.6" width="1.0" height="3.0"/><rect x="554.4" y="626.3" width="1.0" height="6.0"/><rect x="534.6" y="633.0" width="1.0" height="6.0"/><rect x="556.7" y="648.4" width="1.0" height="3.0"/><rect x="549.5" y="645.8" width="1.0" height="3.0"/><rect x="541.3" y="638.8" width="4.0" height="3.0"/><rect x="536.8" y="647.8" width="4.0" height="3.0"/><rect x="561.0" y="662.8" width="4.0" height="3.0"/><rect x="518.9" y="638.8" width="4.0" height="3.0"/><rect x="613.1" y="642.8" width="1.0" height="6.0"/><rect x="591.2" y="637.4" width="1.0" height="3.0"/><rect x="585.6" y="644.7" width="1.0" height="3.0"/><rect x="602.2" y="643.2" width="1.0" height="6.0"/><rect x="614.5" y="646.3" width="1.0" height="6.0"/><rect x="583.2" y="643.4" width="1.0" height="3.0"/><rect x="612.8" y="632.8" width="1.0" height="3.0"/><rect x="614.8" y="649.8" width="1.0" height="3.0"/><rect x="599.0" y="626.6" width="1.0" height="6.0"/><rect x="606.8" y="625.2" width="1.0" height="3.0"/><rect x="625.8" y="654.6" width="1.0" height="3.0"/><rect x="593.1" y="651.3" width="1.0" height="6.0"/><rect x="592.0" y="646.0" width="1.0" height="6.0"/><rect x="624.1" y="649.0" width="1.0" height="3.0"/><rect x="601.7" y="638.8" width="8.0" height="3.0"/><rect x="582.9" y="638.8" width="8.0" height="3.0"/><rect x="597.6" y="662.8" width="8.0" height="3.0"/><rect x="607.5" y="638.8" width="4.0" height="3.0"/><rect x="644.7" y="633.3" width="1.0" height="3.0"/><rect x="682.6" y="628.1" width="1.0" height="6.0"/><rect x="650.8" y="644.4" width="1.0" height="3.0"/><rect x="646.4" y="637.7" width="1.0" height="3.0"/><rect x="632.7" y="625.7" width="1.0" height="6.0"/><rect x="635.9" y="643.6" width="1.0" height="3.0"/><rect x="646.4" y="648.0" width="1.0" height="3.0"/><rect x="636.0" y="646.9" width="1.0" height="3.0"/><rect x="638.5" y="655.2" width="1.0" height="6.0"/><rect x="638.6" y="627.1" width="1.0" height="6.0"/><rect x="669.5" y="626.8" width="1.0" height="3.0"/><rect x="647.8" y="637.4" width="1.0" height="3.0"/><rect x="643.9" y="656.0" width="1.0" height="3.0"/><rect x="656.6" y="640.2" width="1.0" height="3.0"/><rect x="654.8" y="647.8" width="8.0" height="3.0"/><rect x="637.5" y="638.8" width="4.0" height="3.0"/><rect x="641.1" y="638.8" width="4.0" height="3.0"/><rect x="672.9" y="638.8" width="4.0" height="3.0"/><rect x="689.5" y="635.2" width="1.0" height="3.0"/><rect x="696.8" y="655.5" width="1.0" height="3.0"/><rect x="717.2" y="653.9" width="1.0" height="6.0"/><rect x="699.3" y="631.2" width="1.0" height="6.0"/><rect x="701.8" y="625.4" width="1.0" height="6.0"/><rect x="693.5" y="645.7" width="1.0" height="3.0"/><rect x="696.8" y="650.1" width="1.0" height="3.0"/><rect x="739.0" y="625.1" width="1.0" height="6.0"/><rect x="734.2" y="649.1" width="1.0" height="6.0"/><rect x="704.9" y="641.6" width="1.0" height="3.0"/><rect x="707.1" y="632.7" width="1.0" height="6.0"/><rect x="727.3" y="631.0" width="1.0" height="6.0"/><rect x="719.3" y="639.6" width="1.0" height="3.0"/><rect x="726.9" y="641.4" width="1.0" height="3.0"/><rect x="694.6" y="662.8" width="4.0" height="3.0"/><rect x="698.8" y="657.8" width="4.0" height="3.0"/><rect x="735.0" y="638.8" width="8.0" height="3.0"/><rect x="729.9" y="657.8" width="4.0" height="3.0"/><rect x="874.9" y="630.8" width="3.0" height="3.0"/><rect x="879.4" y="630.8" width="3.0" height="3.0"/><rect x="883.9" y="630.8" width="3.0" height="3.0"/><rect x="888.4" y="630.8" width="3.0" height="3.0"/><rect x="878.0" y="662.4" width="1.5" height="2.0"/><rect x="882.3" y="661.9" width="1.5" height="2.0"/><rect x="893.3" y="642.2" width="1.5" height="2.0"/><rect x="903.6" y="630.8" width="3.0" height="3.0"/><rect x="908.1" y="630.8" width="3.0" height="3.0"/><rect x="912.6" y="630.8" width="3.0" height="3.0"/><rect x="917.1" y="630.8" width="3.0" height="3.0"/><rect x="921.6" y="630.8" width="3.0" height="3.0"/><rect x="926.1" y="630.8" width="3.0" height="3.0"/><rect x="909.8" y="639.9" width="1.5" height="2.0"/><rect x="908.6" y="659.1" width="1.5" height="2.0"/><rect x="913.2" y="660.3" width="1.5" height="2.0"/><rect x="914.4" y="656.7" width="1.5" height="2.0"/><rect x="932.4" y="630.8" width="3.0" height="3.0"/><rect x="936.9" y="630.8" width="3.0" height="3.0"/><rect x="941.4" y="630.8" width="3.0" height="3.0"/><rect x="945.9" y="630.8" width="3.0" height="3.0"/><rect x="950.4" y="630.8" width="3.0" height="3.0"/><rect x="954.9" y="630.8" width="3.0" height="3.0"/><rect x="946.3" y="650.9" width="1.5" height="2.0"/><rect x="947.8" y="648.3" width="1.5" height="2.0"/><rect x="946.6" y="640.3" width="1.5" height="2.0"/><rect x="948.4" y="641.9" width="1.5" height="2.0"/><rect x="961.1" y="630.8" width="3.0" height="3.0"/><rect x="965.6" y="630.8" width="3.0" height="3.0"/><rect x="970.1" y="630.8" width="3.0" height="3.0"/><rect x="974.6" y="630.8" width="3.0" height="3.0"/><rect x="979.1" y="630.8" width="3.0" height="3.0"/><rect x="983.6" y="630.8" width="3.0" height="3.0"/><rect x="967.6" y="659.2" width="1.5" height="2.0"/><rect x="983.9" y="648.2" width="1.5" height="2.0"/><rect x="981.5" y="646.6" width="1.5" height="2.0"/><rect x="971.8" y="644.4" width="1.5" height="2.0"/><rect x="989.8" y="630.8" width="3.0" height="3.0"/><rect x="994.3" y="630.8" width="3.0" height="3.0"/><rect x="998.8" y="630.8" width="3.0" height="3.0"/><rect x="1003.3" y="630.8" width="3.0" height="3.0"/><rect x="1007.7" y="642.1" width="1.5" height="2.0"/><rect x="1004.2" y="641.4" width="1.5" height="2.0"/><rect x="991.0" y="649.6" width="1.5" height="2.0"/><rect x="1299.8" y="637.9" width="8.0" height="2.5"/><rect x="1286.3" y="639.9" width="4.0" height="2.5"/><rect x="1263.2" y="649.1" width="4.0" height="2.5"/><rect x="1305.3" y="657.1" width="4.0" height="2.5"/><rect x="1301.1" y="643.6" width="6.0" height="2.5"/><rect x="1299.1" y="666.8" width="4.0" height="2.5"/><rect x="1266.8" y="651.7" width="6.0" height="2.5"/><rect x="1287.8" y="657.6" width="8.0" height="2.5"/><rect x="1264.6" y="666.6" width="4.0" height="2.5"/><rect x="1347.3" y="666.0" width="6.0" height="2.5"/><rect x="1336.6" y="659.7" width="4.0" height="2.5"/><rect x="1327.9" y="648.9" width="8.0" height="2.5"/><rect x="1353.2" y="663.0" width="4.0" height="2.5"/><rect x="1353.5" y="638.3" width="8.0" height="2.5"/><rect x="1346.7" y="647.6" width="4.0" height="2.5"/><rect x="1360.0" y="658.5" width="6.0" height="2.5"/><rect x="1345.7" y="630.5" width="4.0" height="2.5"/><rect x="1323.8" y="633.0" width="4.0" height="2.5"/><rect x="1377.9" y="643.8" width="6.0" height="2.5"/><rect x="1421.4" y="631.7" width="4.0" height="2.5"/><rect x="1393.4" y="630.6" width="6.0" height="2.5"/><rect x="1379.8" y="629.3" width="8.0" height="2.5"/><rect x="1421.4" y="656.9" width="8.0" height="2.5"/><rect x="1418.6" y="665.1" width="6.0" height="2.5"/><rect x="1411.0" y="651.9" width="8.0" height="2.5"/><rect x="1381.8" y="636.1" width="4.0" height="2.5"/><rect x="1424.2" y="655.0" width="6.0" height="2.5"/></g><g fill="rgba(170,170,190,0.65)"><rect x="1018.4" y="630.8" width="6.0" height="4.0"/><rect x="1037.3" y="630.8" width="6.0" height="4.0"/><rect x="1049.6" y="630.8" width="6.0" height="4.0"/><rect x="1080.7" y="630.8" width="6.0" height="4.0"/><rect x="1094.4" y="630.8" width="6.0" height="4.0"/><rect x="1105.3" y="630.8" width="6.0" height="4.0"/><rect x="1036.9" y="645.8" width="6.0" height="4.0"/><rect x="1061.0" y="645.8" width="6.0" height="4.0"/><rect x="1080.8" y="645.8" width="6.0" height="4.0"/><rect x="1096.1" y="645.8" width="6.0" height="4.0"/><rect x="1021.4" y="658.8" width="6.0" height="4.0"/><rect x="1032.7" y="658.8" width="6.0" height="4.0"/><rect x="1061.1" y="658.8" width="6.0" height="4.0"/><rect x="1090.8" y="658.8" width="6.0" height="4.0"/><rect x="1108.6" y="658.8" width="6.0" height="4.0"/></g><g fill="rgba(170,170,190,0.6)"><rect x="1121.2" y="626.7" width="1.0" height="4.0"/><rect x="1082.4" y="665.0" width="1.0" height="4.0"/><rect x="1025.9" y="668.7" width="1.0" height="4.0"/><rect x="1039.4" y="652.5" width="1.0" height="4.0"/><rect x="1107.0" y="627.0" width="1.0" height="4.0"/><rect x="1111.2" y="660.0" width="1.0" height="4.0"/><rect x="1031.1" y="666.1" width="1.0" height="4.0"/><rect x="1023.2" y="665.3" width="1.0" height="4.0"/><rect x="1065.5" y="656.1" width="1.0" height="4.0"/><rect x="1072.4" y="640.4" width="1.0" height="4.0"/><rect x="1064.7" y="639.1" width="1.0" height="4.0"/><rect x="1118.0" y="635.4" width="1.0" height="4.0"/><rect x="1066.9" y="629.6" width="1.0" height="4.0"/><rect x="1085.5" y="651.2" width="1.0" height="4.0"/><rect x="1089.1" y="645.7" width="1.0" height="4.0"/><rect x="1115.2" y="644.8" width="1.0" height="4.0"/><rect x="1027.3" y="640.4" width="1.0" height="4.0"/><rect x="1063.9" y="652.4" width="1.0" height="4.0"/><rect x="1105.7" y="634.3" width="1.0" height="4.0"/><rect x="1127.5" y="647.8" width="1.0" height="4.0"/><rect x="1019.7" y="640.4" width="1.0" height="4.0"/><rect x="1096.4" y="644.9" width="1.0" height="4.0"/></g></svg>
<div style="left:341.1px;top:183.0px;width:158.1px;height:18.7px;background:linear-gradient(#e4dc64,#d8d05a);border-radius:3px;box-shadow:inset 0 0 0 1px rgba(0,0,30,0.35);"></div>
<div style="left:340.6px;top:183.0px;width:1.0px;height:69.0px;background:rgba(0,0,40,0.28);"></div>
<svg style="left:344.3px;top:187.4px" width="11" height="12"><path d="M0 0.5 H10.5 V11.5 H0 V9.5 H6 V7.2 H0 V4.8 H6 V2.5 H0 Z" fill="#f4f0c0"/></svg>
<div class="t" style="left:357.7px;top:184.8px;font-size:14.78px;line-height:14.78px;color:#2a2810;transform:scaleX(0.930);-webkit-text-stroke:0.3px currentColor;">Pattern 44</div>
<div style="left:628.5px;top:183.0px;width:28.7px;height:18.7px;background:linear-gradient(rgba(255,255,255,0.07),rgba(0,0,0,0.04)),#7c7a2e;border-radius:3px;box-shadow:inset 0 0 0 1px rgba(0,0,30,0.35);"></div>
<div style="left:628.0px;top:183.0px;width:1.0px;height:69.0px;background:rgba(0,0,40,0.28);"></div>
<svg style="left:631.7px;top:187.4px" width="11" height="12"><path d="M0 0.5 H10.5 V11.5 H0 V9.5 H6 V7.2 H0 V4.8 H6 V2.5 H0 Z" fill="#f4f4b0"/></svg>
<div style="left:657.3px;top:183.0px;width:28.7px;height:18.7px;background:linear-gradient(rgba(255,255,255,0.07),rgba(0,0,0,0.04)),#7c7a2e;border-radius:3px;box-shadow:inset 0 0 0 1px rgba(0,0,30,0.35);"></div>
<div style="left:656.8px;top:183.0px;width:1.0px;height:69.0px;background:rgba(0,0,40,0.28);"></div>
<svg style="left:660.5px;top:187.4px" width="11" height="12"><path d="M0 0.5 H10.5 V11.5 H0 V9.5 H6 V7.2 H0 V4.8 H6 V2.5 H0 Z" fill="#f4f4b0"/></svg>
<div style="left:686.0px;top:183.0px;width:28.7px;height:18.7px;background:linear-gradient(rgba(255,255,255,0.07),rgba(0,0,0,0.04)),#9c9830;border-radius:3px;box-shadow:inset 0 0 0 1px rgba(0,0,30,0.35);"></div>
<div style="left:685.5px;top:183.0px;width:1.0px;height:69.0px;background:rgba(0,0,40,0.28);"></div>
<svg style="left:689.2px;top:187.4px" width="11" height="12"><path d="M0 0.5 H10.5 V11.5 H0 V9.5 H6 V7.2 H0 V4.8 H6 V2.5 H0 Z" fill="#f4f4b0"/></svg>
<div style="left:714.8px;top:183.0px;width:43.1px;height:18.7px;background:linear-gradient(rgba(255,255,255,0.07),rgba(0,0,0,0.04)),#9c9830;border-radius:3px;box-shadow:inset 0 0 0 1px rgba(0,0,30,0.35);"></div>
<div style="left:714.3px;top:183.0px;width:1.0px;height:69.0px;background:rgba(0,0,40,0.28);"></div>
<svg style="left:718.0px;top:187.4px" width="11" height="12"><path d="M0 0.5 H10.5 V11.5 H0 V9.5 H6 V7.2 H0 V4.8 H6 V2.5 H0 Z" fill="#f4f4b0"/></svg>
<div class="t" style="left:731.4px;top:184.8px;font-size:14.78px;line-height:14.78px;color:#f0f0a0;transform:scaleX(0.666);-webkit-text-stroke:0.3px currentColor;">Pa..</div>
<div style="left:757.9px;top:183.0px;width:57.5px;height:18.7px;background:linear-gradient(rgba(255,255,255,0.07),rgba(0,0,0,0.04)),#2828dc;border-radius:3px;box-shadow:inset 0 0 0 1px rgba(0,0,30,0.35);"></div>
<div style="left:757.4px;top:183.0px;width:1.0px;height:69.0px;background:rgba(0,0,40,0.28);"></div>
<svg style="left:761.1px;top:187.4px" width="11" height="12"><path d="M0 0.5 H10.5 V11.5 H0 V9.5 H6 V7.2 H0 V4.8 H6 V2.5 H0 Z" fill="#d8d8ff"/></svg>
<div class="t" style="left:774.5px;top:184.8px;font-size:14.78px;line-height:14.78px;color:#e0e0ff;transform:scaleX(0.809);-webkit-text-stroke:0.3px currentColor;">Pat..12</div>
<div style="left:815.4px;top:183.0px;width:57.5px;height:18.7px;background:linear-gradient(rgba(255,255,255,0.07),rgba(0,0,0,0.04)),#2828dc;border-radius:3px;box-shadow:inset 0 0 0 1px rgba(0,0,30,0.35);"></div>
<div style="left:814.9px;top:183.0px;width:1.0px;height:69.0px;background:rgba(0,0,40,0.28);"></div>
<svg style="left:818.6px;top:187.4px" width="11" height="12"><path d="M0 0.5 H10.5 V11.5 H0 V9.5 H6 V7.2 H0 V4.8 H6 V2.5 H0 Z" fill="#d8d8ff"/></svg>
<div class="t" style="left:832.0px;top:184.8px;font-size:14.78px;line-height:14.78px;color:#e0e0ff;transform:scaleX(0.809);-webkit-text-stroke:0.3px currentColor;">Pat..15</div>
<div style="left:1016.6px;top:183.0px;width:113.5px;height:18.7px;background:linear-gradient(rgba(255,255,255,0.07),rgba(0,0,0,0.04)),#585e66;border-radius:3px;box-shadow:inset 0 0 0 1px rgba(0,0,30,0.35);"></div>
<div style="left:1016.1px;top:183.0px;width:1.0px;height:69.0px;background:rgba(0,0,40,0.28);"></div>
<svg style="left:1019.8px;top:187.4px" width="11" height="12"><path d="M0 0.5 H10.5 V11.5 H0 V9.5 H6 V7.2 H0 V4.8 H6 V2.5 H0 Z" fill="#e8ecec"/></svg>
<div class="t" style="left:1033.2px;top:184.8px;font-size:14.78px;line-height:14.78px;color:#dadede;transform:scaleX(0.930);-webkit-text-stroke:0.3px currentColor;">Pattern 62</div>
<div style="left:1145.9px;top:183.0px;width:57.5px;height:18.7px;background:linear-gradient(rgba(255,255,255,0.07),rgba(0,0,0,0.04)),#2828dc;border-radius:3px;box-shadow:inset 0 0 0 1px rgba(0,0,30,0.35);"></div>
<div style="left:1145.4px;top:183.0px;width:1.0px;height:69.0px;background:rgba(0,0,40,0.28);"></div>
<svg style="left:1149.1px;top:187.4px" width="11" height="12"><path d="M0 0.5 H10.5 V11.5 H0 V9.5 H6 V7.2 H0 V4.8 H6 V2.5 H0 Z" fill="#d8d8ff"/></svg>
<div class="t" style="left:1162.5px;top:184.8px;font-size:14.78px;line-height:14.78px;color:#e0e0ff;transform:scaleX(0.809);-webkit-text-stroke:0.3px currentColor;">Pat..18</div>
<div style="left:1203.4px;top:183.0px;width:57.5px;height:18.7px;background:linear-gradient(rgba(255,255,255,0.07),rgba(0,0,0,0.04)),#2828dc;border-radius:3px;box-shadow:inset 0 0 0 1px rgba(0,0,30,0.35);"></div>
<div style="left:1202.9px;top:183.0px;width:1.0px;height:69.0px;background:rgba(0,0,40,0.28);"></div>
<svg style="left:1206.6px;top:187.4px" width="11" height="12"><path d="M0 0.5 H10.5 V11.5 H0 V9.5 H6 V7.2 H0 V4.8 H6 V2.5 H0 Z" fill="#d8d8ff"/></svg>
<div class="t" style="left:1220.0px;top:184.8px;font-size:14.78px;line-height:14.78px;color:#e0e0ff;transform:scaleX(0.809);-webkit-text-stroke:0.3px currentColor;">Pat..15</div>
<div style="left:1260.9px;top:183.0px;width:13.7px;height:18.7px;background:linear-gradient(rgba(255,255,255,0.07),rgba(0,0,0,0.04)),#585e66;border-radius:3px;box-shadow:inset 0 0 0 1px rgba(0,0,30,0.35);"></div>
<div style="left:1260.4px;top:183.0px;width:1.0px;height:69.0px;background:rgba(0,0,40,0.28);"></div>
<svg style="left:1262.9px;top:186.8px" width="12" height="10"><path d="M2 3 L6 7 L10 3" fill="none" stroke="#e8ecec" stroke-width="2"/></svg>
<div style="left:1318.4px;top:183.0px;width:57.5px;height:18.7px;background:linear-gradient(rgba(255,255,255,0.07),rgba(0,0,0,0.04)),#585e66;border-radius:3px;box-shadow:inset 0 0 0 1px rgba(0,0,30,0.35);"></div>
<div style="left:1317.9px;top:183.0px;width:1.0px;height:69.0px;background:rgba(0,0,40,0.28);"></div>
<svg style="left:1321.6px;top:187.4px" width="11" height="12"><path d="M0 0.5 H10.5 V11.5 H0 V9.5 H6 V7.2 H0 V4.8 H6 V2.5 H0 Z" fill="#e8ecec"/></svg>
<div class="t" style="left:1335.0px;top:184.8px;font-size:14.78px;line-height:14.78px;color:#dadede;transform:scaleX(0.809);-webkit-text-stroke:0.3px currentColor;">Pat..79</div>
<div style="left:1375.9px;top:183.0px;width:57.5px;height:18.7px;background:linear-gradient(rgba(255,255,255,0.07),rgba(0,0,0,0.04)),#585e66;border-radius:3px;box-shadow:inset 0 0 0 1px rgba(0,0,30,0.35);"></div>
<div style="left:1375.4px;top:183.0px;width:1.0px;height:69.0px;background:rgba(0,0,40,0.28);"></div>
<svg style="left:1379.1px;top:187.4px" width="11" height="12"><path d="M0 0.5 H10.5 V11.5 H0 V9.5 H6 V7.2 H0 V4.8 H6 V2.5 H0 Z" fill="#e8ecec"/></svg>
<div class="t" style="left:1392.5px;top:184.8px;font-size:14.78px;line-height:14.78px;color:#dadede;transform:scaleX(0.809);-webkit-text-stroke:0.3px currentColor;">Pat..83</div>
<div style="left:341.1px;top:253.0px;width:172.5px;height:18.7px;background:linear-gradient(rgba(255,255,255,0.07),rgba(0,0,0,0.04)),#2c1e96;border-radius:3px;box-shadow:inset 0 0 0 1px rgba(0,0,30,0.35);"></div>
<div style="left:340.6px;top:253.0px;width:1.0px;height:69.0px;background:rgba(0,0,40,0.28);"></div>
<svg style="left:344.3px;top:257.4px" width="11" height="12"><path d="M0 0.5 H10.5 V11.5 H0 V9.5 H6 V7.2 H0 V4.8 H6 V2.5 H0 Z" fill="#c4c0ff"/></svg>
<div class="t" style="left:357.7px;top:254.8px;font-size:14.78px;line-height:14.78px;color:#c4c0ff;transform:scaleX(0.930);-webkit-text-stroke:0.3px currentColor;">Pattern 25</div>
<div style="left:513.6px;top:253.0px;width:57.5px;height:18.7px;background:linear-gradient(rgba(255,255,255,0.07),rgba(0,0,0,0.04)),#1e1896;border-radius:3px;box-shadow:inset 0 0 0 1px rgba(0,0,30,0.35);"></div>
<div style="left:513.1px;top:253.0px;width:1.0px;height:69.0px;background:rgba(0,0,40,0.28);"></div>
<svg style="left:516.8px;top:257.4px" width="11" height="12"><path d="M0 0.5 H10.5 V11.5 H0 V9.5 H6 V7.2 H0 V4.8 H6 V2.5 H0 Z" fill="#c8c8ff"/></svg>
<div class="t" style="left:530.2px;top:254.8px;font-size:14.78px;line-height:14.78px;color:#c8c0ff;transform:scaleX(0.809);-webkit-text-stroke:0.3px currentColor;">Pat..33</div>
<div style="left:571.1px;top:253.0px;width:57.5px;height:18.7px;background:linear-gradient(rgba(255,255,255,0.07),rgba(0,0,0,0.04)),#1e1896;border-radius:3px;box-shadow:inset 0 0 0 1px rgba(0,0,30,0.35);"></div>
<div style="left:570.6px;top:253.0px;width:1.0px;height:69.0px;background:rgba(0,0,40,0.28);"></div>
<svg style="left:574.3px;top:257.4px" width="11" height="12"><path d="M0 0.5 H10.5 V11.5 H0 V9.5 H6 V7.2 H0 V4.8 H6 V2.5 H0 Z" fill="#c8c8ff"/></svg>
<div class="t" style="left:587.7px;top:254.8px;font-size:14.78px;line-height:14.78px;color:#c8c0ff;transform:scaleX(0.809);-webkit-text-stroke:0.3px currentColor;">Pat..35</div>
<div style="left:628.5px;top:253.0px;width:57.5px;height:18.7px;background:linear-gradient(rgba(255,255,255,0.07),rgba(0,0,0,0.04)),#1e1896;border-radius:3px;box-shadow:inset 0 0 0 1px rgba(0,0,30,0.35);"></div>
<div style="left:628.0px;top:253.0px;width:1.0px;height:69.0px;background:rgba(0,0,40,0.28);"></div>
<svg style="left:631.7px;top:257.4px" width="11" height="12"><path d="M0 0.5 H10.5 V11.5 H0 V9.5 H6 V7.2 H0 V4.8 H6 V2.5 H0 Z" fill="#c8c8ff"/></svg>
<div class="t" style="left:645.1px;top:254.8px;font-size:14.78px;line-height:14.78px;color:#c8c0ff;transform:scaleX(0.809);-webkit-text-stroke:0.3px currentColor;">Pat..38</div>
<div style="left:686.0px;top:253.0px;width:57.5px;height:18.7px;background:linear-gradient(rgba(255,255,255,0.07),rgba(0,0,0,0.04)),#1e1896;border-radius:3px;box-shadow:inset 0 0 0 1px rgba(0,0,30,0.35);"></div>
<div style="left:685.5px;top:253.0px;width:1.0px;height:69.0px;background:rgba(0,0,40,0.28);"></div>
<svg style="left:689.2px;top:257.4px" width="11" height="12"><path d="M0 0.5 H10.5 V11.5 H0 V9.5 H6 V7.2 H0 V4.8 H6 V2.5 H0 Z" fill="#c8c8ff"/></svg>
<div class="t" style="left:702.6px;top:254.8px;font-size:14.78px;line-height:14.78px;color:#c8c0ff;transform:scaleX(0.809);-webkit-text-stroke:0.3px currentColor;">Pat..38</div>
<div style="left:757.9px;top:253.0px;width:57.5px;height:18.7px;background:linear-gradient(rgba(255,255,255,0.07),rgba(0,0,0,0.04)),#2828dc;border-radius:3px;box-shadow:inset 0 0 0 1px rgba(0,0,30,0.35);"></div>
<div style="left:757.4px;top:253.0px;width:1.0px;height:69.0px;background:rgba(0,0,40,0.28);"></div>
<svg style="left:761.1px;top:257.4px" width="11" height="12"><path d="M0 0.5 H10.5 V11.5 H0 V9.5 H6 V7.2 H0 V4.8 H6 V2.5 H0 Z" fill="#d8d8ff"/></svg>
<div class="t" style="left:774.5px;top:254.8px;font-size:14.78px;line-height:14.78px;color:#e0e0ff;transform:scaleX(0.829);-webkit-text-stroke:0.3px currentColor;">Pat..11</div>
<div style="left:815.4px;top:253.0px;width:57.5px;height:18.7px;background:linear-gradient(rgba(255,255,255,0.07),rgba(0,0,0,0.04)),#2828dc;border-radius:3px;box-shadow:inset 0 0 0 1px rgba(0,0,30,0.35);"></div>
<div style="left:814.9px;top:253.0px;width:1.0px;height:69.0px;background:rgba(0,0,40,0.28);"></div>
<svg style="left:818.6px;top:257.4px" width="11" height="12"><path d="M0 0.5 H10.5 V11.5 H0 V9.5 H6 V7.2 H0 V4.8 H6 V2.5 H0 Z" fill="#d8d8ff"/></svg>
<div class="t" style="left:832.0px;top:254.8px;font-size:14.78px;line-height:14.78px;color:#e0e0ff;transform:scaleX(0.809);-webkit-text-stroke:0.3px currentColor;">Pat..14</div>
<div style="left:872.9px;top:253.0px;width:23.0px;height:18.7px;background:linear-gradient(rgba(255,255,255,0.07),rgba(0,0,0,0.04)),#1e1896;border-radius:3px;box-shadow:inset 0 0 0 1px rgba(0,0,30,0.35);"></div>
<div style="left:872.4px;top:253.0px;width:1.0px;height:69.0px;background:rgba(0,0,40,0.28);"></div>
<svg style="left:876.1px;top:257.4px" width="11" height="12"><path d="M0 0.5 H10.5 V11.5 H0 V9.5 H6 V7.2 H0 V4.8 H6 V2.5 H0 Z" fill="#c8c8ff"/></svg>
<div style="left:901.6px;top:253.0px;width:28.7px;height:18.7px;background:linear-gradient(rgba(255,255,255,0.07),rgba(0,0,0,0.04)),#1e1896;border-radius:3px;box-shadow:inset 0 0 0 1px rgba(0,0,30,0.35);"></div>
<div style="left:901.1px;top:253.0px;width:1.0px;height:69.0px;background:rgba(0,0,40,0.28);"></div>
<svg style="left:904.8px;top:257.4px" width="11" height="12"><path d="M0 0.5 H10.5 V11.5 H0 V9.5 H6 V7.2 H0 V4.8 H6 V2.5 H0 Z" fill="#c8c8ff"/></svg>
<div style="left:930.4px;top:253.0px;width:28.7px;height:18.7px;background:linear-gradient(rgba(255,255,255,0.07),rgba(0,0,0,0.04)),#1e1896;border-radius:3px;box-shadow:inset 0 0 0 1px rgba(0,0,30,0.35);"></div>
<div style="left:929.9px;top:253.0px;width:1.0px;height:69.0px;background:rgba(0,0,40,0.28);"></div>
<svg style="left:933.6px;top:257.4px" width="11" height="12"><path d="M0 0.5 H10.5 V11.5 H0 V9.5 H6 V7.2 H0 V4.8 H6 V2.5 H0 Z" fill="#c8c8ff"/></svg>
<div style="left:959.1px;top:253.0px;width:28.7px;height:18.7px;background:linear-gradient(rgba(255,255,255,0.07),rgba(0,0,0,0.04)),#1e1896;border-radius:3px;box-shadow:inset 0 0 0 1px rgba(0,0,30,0.35);"></div>
<div style="left:958.6px;top:253.0px;width:1.0px;height:69.0px;background:rgba(0,0,40,0.28);"></div>
<svg style="left:962.3px;top:257.4px" width="11" height="12"><path d="M0 0.5 H10.5 V11.5 H0 V9.5 H6 V7.2 H0 V4.8 H6 V2.5 H0 Z" fill="#c8c8ff"/></svg>
<div style="left:987.8px;top:253.0px;width:23.0px;height:18.7px;background:linear-gradient(rgba(255,255,255,0.07),rgba(0,0,0,0.04)),#1e1896;border-radius:3px;box-shadow:inset 0 0 0 1px rgba(0,0,30,0.35);"></div>
<div style="left:987.3px;top:253.0px;width:1.0px;height:69.0px;background:rgba(0,0,40,0.28);"></div>
<svg style="left:991.0px;top:257.4px" width="11" height="12"><path d="M0 0.5 H10.5 V11.5 H0 V9.5 H6 V7.2 H0 V4.8 H6 V2.5 H0 Z" fill="#c8c8ff"/></svg>
<div style="left:1016.6px;top:253.0px;width:129.3px;height:18.7px;background:linear-gradient(rgba(255,255,255,0.07),rgba(0,0,0,0.04)),#585e66;border-radius:3px;box-shadow:inset 0 0 0 1px rgba(0,0,30,0.35);"></div>
<div style="left:1016.1px;top:253.0px;width:1.0px;height:69.0px;background:rgba(0,0,40,0.28);"></div>
<svg style="left:1019.8px;top:257.4px" width="11" height="12"><path d="M0 0.5 H10.5 V11.5 H0 V9.5 H6 V7.2 H0 V4.8 H6 V2.5 H0 Z" fill="#e8ecec"/></svg>
<div class="t" style="left:1033.2px;top:254.8px;font-size:14.78px;line-height:14.78px;color:#dadede;transform:scaleX(0.930);-webkit-text-stroke:0.3px currentColor;">Pattern 61</div>
<div style="left:1145.9px;top:253.0px;width:57.5px;height:18.7px;background:linear-gradient(rgba(255,255,255,0.07),rgba(0,0,0,0.04)),#2828dc;border-radius:3px;box-shadow:inset 0 0 0 1px rgba(0,0,30,0.35);"></div>
<div style="left:1145.4px;top:253.0px;width:1.0px;height:69.0px;background:rgba(0,0,40,0.28);"></div>
<svg style="left:1149.1px;top:257.4px" width="11" height="12"><path d="M0 0.5 H10.5 V11.5 H0 V9.5 H6 V7.2 H0 V4.8 H6 V2.5 H0 Z" fill="#d8d8ff"/></svg>
<div class="t" style="left:1162.5px;top:254.8px;font-size:14.78px;line-height:14.78px;color:#e0e0ff;transform:scaleX(0.809);-webkit-text-stroke:0.3px currentColor;">Pat..17</div>
<div style="left:1203.4px;top:253.0px;width:57.5px;height:18.7px;background:linear-gradient(rgba(255,255,255,0.07),rgba(0,0,0,0.04)),#2828dc;border-radius:3px;box-shadow:inset 0 0 0 1px rgba(0,0,30,0.35);"></div>
<div style="left:1202.9px;top:253.0px;width:1.0px;height:69.0px;background:rgba(0,0,40,0.28);"></div>
<svg style="left:1206.6px;top:257.4px" width="11" height="12"><path d="M0 0.5 H10.5 V11.5 H0 V9.5 H6 V7.2 H0 V4.8 H6 V2.5 H0 Z" fill="#d8d8ff"/></svg>
<div class="t" style="left:1220.0px;top:254.8px;font-size:14.78px;line-height:14.78px;color:#e0e0ff;transform:scaleX(0.809);-webkit-text-stroke:0.3px currentColor;">Pat..14</div>
<div style="left:1260.9px;top:253.0px;width:57.5px;height:18.7px;background:linear-gradient(rgba(255,255,255,0.07),rgba(0,0,0,0.04)),#585e66;border-radius:3px;box-shadow:inset 0 0 0 1px rgba(0,0,30,0.35);"></div>
<div style="left:1260.4px;top:253.0px;width:1.0px;height:69.0px;background:rgba(0,0,40,0.28);"></div>
<svg style="left:1264.1px;top:257.4px" width="11" height="12"><path d="M0 0.5 H10.5 V11.5 H0 V9.5 H6 V7.2 H0 V4.8 H6 V2.5 H0 Z" fill="#e8ecec"/></svg>
<div class="t" style="left:1277.5px;top:254.8px;font-size:14.78px;line-height:14.78px;color:#dadede;transform:scaleX(0.809);-webkit-text-stroke:0.3px currentColor;">Pat..69</div>
<div style="left:1318.4px;top:253.0px;width:57.5px;height:18.7px;background:linear-gradient(rgba(255,255,255,0.07),rgba(0,0,0,0.04)),#585e66;border-radius:3px;box-shadow:inset 0 0 0 1px rgba(0,0,30,0.35);"></div>
<div style="left:1317.9px;top:253.0px;width:1.0px;height:69.0px;background:rgba(0,0,40,0.28);"></div>
<svg style="left:1321.6px;top:257.4px" width="11" height="12"><path d="M0 0.5 H10.5 V11.5 H0 V9.5 H6 V7.2 H0 V4.8 H6 V2.5 H0 Z" fill="#e8ecec"/></svg>
<div class="t" style="left:1335.0px;top:254.8px;font-size:14.78px;line-height:14.78px;color:#dadede;transform:scaleX(0.809);-webkit-text-stroke:0.3px currentColor;">Pat..78</div>
<div style="left:1375.9px;top:253.0px;width:57.5px;height:18.7px;background:linear-gradient(rgba(255,255,255,0.07),rgba(0,0,0,0.04)),#585e66;border-radius:3px;box-shadow:inset 0 0 0 1px rgba(0,0,30,0.35);"></div>
<div style="left:1375.4px;top:253.0px;width:1.0px;height:69.0px;background:rgba(0,0,40,0.28);"></div>
<svg style="left:1379.1px;top:257.4px" width="11" height="12"><path d="M0 0.5 H10.5 V11.5 H0 V9.5 H6 V7.2 H0 V4.8 H6 V2.5 H0 Z" fill="#e8ecec"/></svg>
<div class="t" style="left:1392.5px;top:254.8px;font-size:14.78px;line-height:14.78px;color:#dadede;transform:scaleX(0.809);-webkit-text-stroke:0.3px currentColor;">Pat..82</div>
<div style="left:1433.4px;top:253.0px;width:57.5px;height:18.7px;background:linear-gradient(rgba(255,255,255,0.07),rgba(0,0,0,0.04)),#3a2aa8;border-radius:3px;box-shadow:inset 0 0 0 1px rgba(0,0,30,0.35);"></div>
<div style="left:1432.9px;top:253.0px;width:1.0px;height:69.0px;background:rgba(0,0,40,0.28);"></div>
<svg style="left:1436.6px;top:257.4px" width="11" height="12"><path d="M0 0.5 H10.5 V11.5 H0 V9.5 H6 V7.2 H0 V4.8 H6 V2.5 H0 Z" fill="#d0c8ff"/></svg>
<div class="t" style="left:1450.0px;top:254.8px;font-size:14.78px;line-height:14.78px;color:#d0c8ff;transform:scaleX(0.809);-webkit-text-stroke:0.3px currentColor;">Pat..25</div>
<div style="left:341.1px;top:323.0px;width:115.0px;height:18.7px;background:linear-gradient(rgba(255,255,255,0.07),rgba(0,0,0,0.04)),#501e96;border-radius:3px;box-shadow:inset 0 0 0 1px rgba(0,0,30,0.35);"></div>
<div style="left:340.6px;top:323.0px;width:1.0px;height:69.0px;background:rgba(0,0,40,0.28);"></div>
<svg style="left:344.3px;top:327.4px" width="11" height="12"><path d="M0 0.5 H10.5 V11.5 H0 V9.5 H6 V7.2 H0 V4.8 H6 V2.5 H0 Z" fill="#e8c8ff"/></svg>
<div class="t" style="left:357.7px;top:324.8px;font-size:14.78px;line-height:14.78px;color:#e0c0ff;transform:scaleX(0.930);-webkit-text-stroke:0.3px currentColor;">Pattern 28</div>
<div style="left:456.1px;top:323.0px;width:57.5px;height:18.7px;background:linear-gradient(rgba(255,255,255,0.07),rgba(0,0,0,0.04)),#a01e8c;border-radius:3px;box-shadow:inset 0 0 0 1px rgba(0,0,30,0.35);"></div>
<div style="left:455.6px;top:323.0px;width:1.0px;height:69.0px;background:rgba(0,0,40,0.28);"></div>
<svg style="left:459.3px;top:327.4px" width="11" height="12"><path d="M0 0.5 H10.5 V11.5 H0 V9.5 H6 V7.2 H0 V4.8 H6 V2.5 H0 Z" fill="#ffc4f4"/></svg>
<div class="t" style="left:472.7px;top:324.8px;font-size:14.78px;line-height:14.78px;color:#ffc0f0;transform:scaleX(0.809);-webkit-text-stroke:0.3px currentColor;">Pat..29</div>
<div style="left:513.6px;top:323.0px;width:57.5px;height:18.7px;background:linear-gradient(rgba(255,255,255,0.07),rgba(0,0,0,0.04)),#501e96;border-radius:3px;box-shadow:inset 0 0 0 1px rgba(0,0,30,0.35);"></div>
<div style="left:513.1px;top:323.0px;width:1.0px;height:69.0px;background:rgba(0,0,40,0.28);"></div>
<svg style="left:516.8px;top:327.4px" width="11" height="12"><path d="M0 0.5 H10.5 V11.5 H0 V9.5 H6 V7.2 H0 V4.8 H6 V2.5 H0 Z" fill="#e8c8ff"/></svg>
<div class="t" style="left:530.2px;top:324.8px;font-size:14.78px;line-height:14.78px;color:#e0c0ff;transform:scaleX(0.809);-webkit-text-stroke:0.3px currentColor;">Pat..30</div>
<div style="left:571.1px;top:323.0px;width:57.5px;height:18.7px;background:linear-gradient(rgba(255,255,255,0.07),rgba(0,0,0,0.04)),#501e96;border-radius:3px;box-shadow:inset 0 0 0 1px rgba(0,0,30,0.35);"></div>
<div style="left:570.6px;top:323.0px;width:1.0px;height:69.0px;background:rgba(0,0,40,0.28);"></div>
<svg style="left:574.3px;top:327.4px" width="11" height="12"><path d="M0 0.5 H10.5 V11.5 H0 V9.5 H6 V7.2 H0 V4.8 H6 V2.5 H0 Z" fill="#e8c8ff"/></svg>
<div class="t" style="left:587.7px;top:324.8px;font-size:14.78px;line-height:14.78px;color:#e0c0ff;transform:scaleX(0.809);-webkit-text-stroke:0.3px currentColor;">Pat..31</div>
<div style="left:628.5px;top:323.0px;width:57.5px;height:18.7px;background:linear-gradient(rgba(255,255,255,0.07),rgba(0,0,0,0.04)),#a01e8c;border-radius:3px;box-shadow:inset 0 0 0 1px rgba(0,0,30,0.35);"></div>
<div style="left:628.0px;top:323.0px;width:1.0px;height:69.0px;background:rgba(0,0,40,0.28);"></div>
<svg style="left:631.7px;top:327.4px" width="11" height="12"><path d="M0 0.5 H10.5 V11.5 H0 V9.5 H6 V7.2 H0 V4.8 H6 V2.5 H0 Z" fill="#ffc4f4"/></svg>
<div class="t" style="left:645.1px;top:324.8px;font-size:14.78px;line-height:14.78px;color:#ffc0f0;transform:scaleX(0.769);-webkit-text-stroke:0.3px currentColor;">Pa..n 7</div>
<div style="left:686.0px;top:323.0px;width:57.5px;height:18.7px;background:linear-gradient(rgba(255,255,255,0.07),rgba(0,0,0,0.04)),#a01e8c;border-radius:3px;box-shadow:inset 0 0 0 1px rgba(0,0,30,0.35);"></div>
<div style="left:685.5px;top:323.0px;width:1.0px;height:69.0px;background:rgba(0,0,40,0.28);"></div>
<svg style="left:689.2px;top:327.4px" width="11" height="12"><path d="M0 0.5 H10.5 V11.5 H0 V9.5 H6 V7.2 H0 V4.8 H6 V2.5 H0 Z" fill="#ffc4f4"/></svg>
<div class="t" style="left:702.6px;top:324.8px;font-size:14.78px;line-height:14.78px;color:#ffc0f0;transform:scaleX(0.769);-webkit-text-stroke:0.3px currentColor;">Pa..n 7</div>
<div style="left:743.5px;top:323.0px;width:14.4px;height:18.7px;background:linear-gradient(rgba(255,255,255,0.07),rgba(0,0,0,0.04)),#a01e8c;border-radius:3px;box-shadow:inset 0 0 0 1px rgba(0,0,30,0.35);"></div>
<div style="left:743.0px;top:323.0px;width:1.0px;height:69.0px;background:rgba(0,0,40,0.28);"></div>
<svg style="left:746.7px;top:327.4px" width="11" height="12"><path d="M0 0.5 H10.5 V11.5 H0 V9.5 H6 V7.2 H0 V4.8 H6 V2.5 H0 Z" fill="#ffc4f4"/></svg>
<div style="left:757.9px;top:323.0px;width:57.5px;height:18.7px;background:linear-gradient(rgba(255,255,255,0.07),rgba(0,0,0,0.04)),#501e96;border-radius:3px;box-shadow:inset 0 0 0 1px rgba(0,0,30,0.35);"></div>
<div style="left:757.4px;top:323.0px;width:1.0px;height:69.0px;background:rgba(0,0,40,0.28);"></div>
<svg style="left:761.1px;top:327.4px" width="11" height="12"><path d="M0 0.5 H10.5 V11.5 H0 V9.5 H6 V7.2 H0 V4.8 H6 V2.5 H0 Z" fill="#e8c8ff"/></svg>
<div class="t" style="left:774.5px;top:324.8px;font-size:14.78px;line-height:14.78px;color:#e0c0ff;transform:scaleX(0.809);-webkit-text-stroke:0.3px currentColor;">Pat..10</div>
<div style="left:815.4px;top:323.0px;width:57.5px;height:18.7px;background:linear-gradient(rgba(255,255,255,0.07),rgba(0,0,0,0.04)),#a01e8c;border-radius:3px;box-shadow:inset 0 0 0 1px rgba(0,0,30,0.35);"></div>
<div style="left:814.9px;top:323.0px;width:1.0px;height:69.0px;background:rgba(0,0,40,0.28);"></div>
<svg style="left:818.6px;top:327.4px" width="11" height="12"><path d="M0 0.5 H10.5 V11.5 H0 V9.5 H6 V7.2 H0 V4.8 H6 V2.5 H0 Z" fill="#ffc4f4"/></svg>
<div class="t" style="left:832.0px;top:324.8px;font-size:14.78px;line-height:14.78px;color:#ffc0f0;transform:scaleX(0.809);-webkit-text-stroke:0.3px currentColor;">Pat..20</div>
<div style="left:872.9px;top:323.0px;width:23.0px;height:18.7px;background:linear-gradient(rgba(255,255,255,0.07),rgba(0,0,0,0.04)),#a01e8c;border-radius:3px;box-shadow:inset 0 0 0 1px rgba(0,0,30,0.35);"></div>
<div style="left:872.4px;top:323.0px;width:1.0px;height:69.0px;background:rgba(0,0,40,0.28);"></div>
<svg style="left:876.1px;top:327.4px" width="11" height="12"><path d="M0 0.5 H10.5 V11.5 H0 V9.5 H6 V7.2 H0 V4.8 H6 V2.5 H0 Z" fill="#ffc4f4"/></svg>
<div style="left:901.6px;top:323.0px;width:28.7px;height:18.7px;background:linear-gradient(rgba(255,255,255,0.07),rgba(0,0,0,0.04)),#a01e8c;border-radius:3px;box-shadow:inset 0 0 0 1px rgba(0,0,30,0.35);"></div>
<div style="left:901.1px;top:323.0px;width:1.0px;height:69.0px;background:rgba(0,0,40,0.28);"></div>
<svg style="left:904.8px;top:327.4px" width="11" height="12"><path d="M0 0.5 H10.5 V11.5 H0 V9.5 H6 V7.2 H0 V4.8 H6 V2.5 H0 Z" fill="#ffc4f4"/></svg>
<div style="left:930.4px;top:323.0px;width:28.7px;height:18.7px;background:linear-gradient(rgba(255,255,255,0.07),rgba(0,0,0,0.04)),#a01e8c;border-radius:3px;box-shadow:inset 0 0 0 1px rgba(0,0,30,0.35);"></div>
<div style="left:929.9px;top:323.0px;width:1.0px;height:69.0px;background:rgba(0,0,40,0.28);"></div>
<svg style="left:933.6px;top:327.4px" width="11" height="12"><path d="M0 0.5 H10.5 V11.5 H0 V9.5 H6 V7.2 H0 V4.8 H6 V2.5 H0 Z" fill="#ffc4f4"/></svg>
<div style="left:959.1px;top:323.0px;width:28.7px;height:18.7px;background:linear-gradient(rgba(255,255,255,0.07),rgba(0,0,0,0.04)),#a01e8c;border-radius:3px;box-shadow:inset 0 0 0 1px rgba(0,0,30,0.35);"></div>
<div style="left:958.6px;top:323.0px;width:1.0px;height:69.0px;background:rgba(0,0,40,0.28);"></div>
<svg style="left:962.3px;top:327.4px" width="11" height="12"><path d="M0 0.5 H10.5 V11.5 H0 V9.5 H6 V7.2 H0 V4.8 H6 V2.5 H0 Z" fill="#ffc4f4"/></svg>
<div style="left:987.8px;top:323.0px;width:28.7px;height:18.7px;background:linear-gradient(rgba(255,255,255,0.07),rgba(0,0,0,0.04)),#a01e8c;border-radius:3px;box-shadow:inset 0 0 0 1px rgba(0,0,30,0.35);"></div>
<div style="left:987.3px;top:323.0px;width:1.0px;height:69.0px;background:rgba(0,0,40,0.28);"></div>
<svg style="left:991.0px;top:327.4px" width="11" height="12"><path d="M0 0.5 H10.5 V11.5 H0 V9.5 H6 V7.2 H0 V4.8 H6 V2.5 H0 Z" fill="#ffc4f4"/></svg>
<div style="left:1016.6px;top:323.0px;width:57.5px;height:18.7px;background:linear-gradient(rgba(255,255,255,0.07),rgba(0,0,0,0.04)),#501e96;border-radius:3px;box-shadow:inset 0 0 0 1px rgba(0,0,30,0.35);"></div>
<div style="left:1016.1px;top:323.0px;width:1.0px;height:69.0px;background:rgba(0,0,40,0.28);"></div>
<svg style="left:1019.8px;top:327.4px" width="11" height="12"><path d="M0 0.5 H10.5 V11.5 H0 V9.5 H6 V7.2 H0 V4.8 H6 V2.5 H0 Z" fill="#e8c8ff"/></svg>
<div class="t" style="left:1033.2px;top:324.8px;font-size:14.78px;line-height:14.78px;color:#e0c0ff;transform:scaleX(0.809);-webkit-text-stroke:0.3px currentColor;">Pat..28</div>
<div style="left:1074.1px;top:323.0px;width:57.5px;height:18.7px;background:linear-gradient(rgba(255,255,255,0.07),rgba(0,0,0,0.04)),#585e66;border-radius:3px;box-shadow:inset 0 0 0 1px rgba(0,0,30,0.35);"></div>
<div style="left:1073.6px;top:323.0px;width:1.0px;height:69.0px;background:rgba(0,0,40,0.28);"></div>
<svg style="left:1077.3px;top:327.4px" width="11" height="12"><path d="M0 0.5 H10.5 V11.5 H0 V9.5 H6 V7.2 H0 V4.8 H6 V2.5 H0 Z" fill="#e8ecec"/></svg>
<div class="t" style="left:1090.7px;top:324.8px;font-size:14.78px;line-height:14.78px;color:#dadede;transform:scaleX(0.809);-webkit-text-stroke:0.3px currentColor;">Pat..65</div>
<div style="left:1131.6px;top:323.0px;width:14.4px;height:18.7px;background:linear-gradient(rgba(255,255,255,0.07),rgba(0,0,0,0.04)),#a01e8c;border-radius:3px;box-shadow:inset 0 0 0 1px rgba(0,0,30,0.35);"></div>
<div style="left:1131.1px;top:323.0px;width:1.0px;height:69.0px;background:rgba(0,0,40,0.28);"></div>
<svg style="left:1134.8px;top:327.4px" width="11" height="12"><path d="M0 0.5 H10.5 V11.5 H0 V9.5 H6 V7.2 H0 V4.8 H6 V2.5 H0 Z" fill="#ffc4f4"/></svg>
<div style="left:1145.9px;top:323.0px;width:28.7px;height:18.7px;background:linear-gradient(rgba(255,255,255,0.07),rgba(0,0,0,0.04)),#585e66;border-radius:3px;box-shadow:inset 0 0 0 1px rgba(0,0,30,0.35);"></div>
<div style="left:1145.4px;top:323.0px;width:1.0px;height:69.0px;background:rgba(0,0,40,0.28);"></div>
<svg style="left:1149.1px;top:327.4px" width="11" height="12"><path d="M0 0.5 H10.5 V11.5 H0 V9.5 H6 V7.2 H0 V4.8 H6 V2.5 H0 Z" fill="#e8ecec"/></svg>
<div style="left:1174.7px;top:323.0px;width:28.7px;height:18.7px;background:linear-gradient(rgba(255,255,255,0.07),rgba(0,0,0,0.04)),#585e66;border-radius:3px;box-shadow:inset 0 0 0 1px rgba(0,0,30,0.35);"></div>
<div style="left:1174.2px;top:323.0px;width:1.0px;height:69.0px;background:rgba(0,0,40,0.28);"></div>
<svg style="left:1177.9px;top:327.4px" width="11" height="12"><path d="M0 0.5 H10.5 V11.5 H0 V9.5 H6 V7.2 H0 V4.8 H6 V2.5 H0 Z" fill="#e8ecec"/></svg>
<div style="left:1203.4px;top:323.0px;width:57.5px;height:18.7px;background:linear-gradient(rgba(255,255,255,0.07),rgba(0,0,0,0.04)),#a01e8c;border-radius:3px;box-shadow:inset 0 0 0 1px rgba(0,0,30,0.35);"></div>
<div style="left:1202.9px;top:323.0px;width:1.0px;height:69.0px;background:rgba(0,0,40,0.28);"></div>
<svg style="left:1206.6px;top:327.4px" width="11" height="12"><path d="M0 0.5 H10.5 V11.5 H0 V9.5 H6 V7.2 H0 V4.8 H6 V2.5 H0 Z" fill="#ffc4f4"/></svg>
<div class="t" style="left:1220.0px;top:324.8px;font-size:14.78px;line-height:14.78px;color:#ffc0f0;transform:scaleX(0.809);-webkit-text-stroke:0.3px currentColor;">Pat..21</div>
<div style="left:1260.9px;top:323.0px;width:28.7px;height:18.7px;background:linear-gradient(rgba(255,255,255,0.07),rgba(0,0,0,0.04)),#585e66;border-radius:3px;box-shadow:inset 0 0 0 1px rgba(0,0,30,0.35);"></div>
<div style="left:1260.4px;top:323.0px;width:1.0px;height:69.0px;background:rgba(0,0,40,0.28);"></div>
<svg style="left:1264.1px;top:327.4px" width="11" height="12"><path d="M0 0.5 H10.5 V11.5 H0 V9.5 H6 V7.2 H0 V4.8 H6 V2.5 H0 Z" fill="#e8ecec"/></svg>
<div style="left:1289.7px;top:323.0px;width:28.7px;height:18.7px;background:linear-gradient(rgba(255,255,255,0.07),rgba(0,0,0,0.04)),#585e66;border-radius:3px;box-shadow:inset 0 0 0 1px rgba(0,0,30,0.35);"></div>
<div style="left:1289.2px;top:323.0px;width:1.0px;height:69.0px;background:rgba(0,0,40,0.28);"></div>
<svg style="left:1292.9px;top:327.4px" width="11" height="12"><path d="M0 0.5 H10.5 V11.5 H0 V9.5 H6 V7.2 H0 V4.8 H6 V2.5 H0 Z" fill="#e8ecec"/></svg>
<div style="left:1318.4px;top:323.0px;width:57.5px;height:18.7px;background:linear-gradient(rgba(255,255,255,0.07),rgba(0,0,0,0.04)),#585e66;border-radius:3px;box-shadow:inset 0 0 0 1px rgba(0,0,30,0.35);"></div>
<div style="left:1317.9px;top:323.0px;width:1.0px;height:69.0px;background:rgba(0,0,40,0.28);"></div>
<svg style="left:1321.6px;top:327.4px" width="11" height="12"><path d="M0 0.5 H10.5 V11.5 H0 V9.5 H6 V7.2 H0 V4.8 H6 V2.5 H0 Z" fill="#e8ecec"/></svg>
<div class="t" style="left:1335.0px;top:324.8px;font-size:14.78px;line-height:14.78px;color:#dadede;transform:scaleX(0.809);-webkit-text-stroke:0.3px currentColor;">Pat..76</div>
<div style="left:1375.9px;top:323.0px;width:57.5px;height:18.7px;background:linear-gradient(rgba(255,255,255,0.07),rgba(0,0,0,0.04)),#585e66;border-radius:3px;box-shadow:inset 0 0 0 1px rgba(0,0,30,0.35);"></div>
<div style="left:1375.4px;top:323.0px;width:1.0px;height:69.0px;background:rgba(0,0,40,0.28);"></div>
<svg style="left:1379.1px;top:327.4px" width="11" height="12"><path d="M0 0.5 H10.5 V11.5 H0 V9.5 H6 V7.2 H0 V4.8 H6 V2.5 H0 Z" fill="#e8ecec"/></svg>
<div class="t" style="left:1392.5px;top:324.8px;font-size:14.78px;line-height:14.78px;color:#dadede;transform:scaleX(0.809);-webkit-text-stroke:0.3px currentColor;">Pat..77</div>
<div style="left:341.1px;top:393.0px;width:57.5px;height:18.7px;background:linear-gradient(rgba(255,255,255,0.07),rgba(0,0,0,0.04)),#585e66;border-radius:3px;box-shadow:inset 0 0 0 1px rgba(0,0,30,0.35);"></div>
<div style="left:340.6px;top:393.0px;width:1.0px;height:67.0px;background:rgba(0,0,40,0.28);"></div>
<svg style="left:344.3px;top:397.4px" width="11" height="12"><path d="M0 0.5 H10.5 V11.5 H0 V9.5 H6 V7.2 H0 V4.8 H6 V2.5 H0 Z" fill="#e8ecec"/></svg>
<div class="t" style="left:357.7px;top:394.8px;font-size:14.78px;line-height:14.78px;color:#dadede;transform:scaleX(0.809);-webkit-text-stroke:0.3px currentColor;">Pat..67</div>
<div style="left:398.6px;top:393.0px;width:57.5px;height:18.7px;background:linear-gradient(rgba(255,255,255,0.07),rgba(0,0,0,0.04)),#585e66;border-radius:3px;box-shadow:inset 0 0 0 1px rgba(0,0,30,0.35);"></div>
<div style="left:398.1px;top:393.0px;width:1.0px;height:67.0px;background:rgba(0,0,40,0.28);"></div>
<svg style="left:401.8px;top:397.4px" width="11" height="12"><path d="M0 0.5 H10.5 V11.5 H0 V9.5 H6 V7.2 H0 V4.8 H6 V2.5 H0 Z" fill="#e8ecec"/></svg>
<div class="t" style="left:415.2px;top:394.8px;font-size:14.78px;line-height:14.78px;color:#dadede;transform:scaleX(0.809);-webkit-text-stroke:0.3px currentColor;">Pat..67</div>
<div style="left:456.1px;top:393.0px;width:43.1px;height:18.7px;background:linear-gradient(rgba(255,255,255,0.07),rgba(0,0,0,0.04)),#585e66;border-radius:3px;box-shadow:inset 0 0 0 1px rgba(0,0,30,0.35);"></div>
<div style="left:455.6px;top:393.0px;width:1.0px;height:67.0px;background:rgba(0,0,40,0.28);"></div>
<svg style="left:459.3px;top:397.4px" width="11" height="12"><path d="M0 0.5 H10.5 V11.5 H0 V9.5 H6 V7.2 H0 V4.8 H6 V2.5 H0 Z" fill="#e8ecec"/></svg>
<div class="t" style="left:472.7px;top:394.8px;font-size:14.78px;line-height:14.78px;color:#dadede;transform:scaleX(0.666);-webkit-text-stroke:0.3px currentColor;">Pa..</div>
<div style="left:757.9px;top:393.0px;width:57.5px;height:18.7px;background:linear-gradient(rgba(255,255,255,0.07),rgba(0,0,0,0.04)),#6edce6;border-radius:3px;box-shadow:inset 0 0 0 1px rgba(0,0,30,0.35);"></div>
<div style="left:757.4px;top:393.0px;width:1.0px;height:67.0px;background:rgba(0,0,40,0.28);"></div>
<svg style="left:761.1px;top:397.4px" width="11" height="12"><path d="M0 0.5 H10.5 V11.5 H0 V9.5 H6 V7.2 H0 V4.8 H6 V2.5 H0 Z" fill="#e8ffff"/></svg>
<div class="t" style="left:774.5px;top:394.8px;font-size:14.78px;line-height:14.78px;color:#0a3a40;transform:scaleX(0.809);-webkit-text-stroke:0.3px currentColor;">Pat..22</div>
<div style="left:815.4px;top:393.0px;width:57.5px;height:18.7px;background:linear-gradient(rgba(255,255,255,0.07),rgba(0,0,0,0.04)),#6edce6;border-radius:3px;box-shadow:inset 0 0 0 1px rgba(0,0,30,0.35);"></div>
<div style="left:814.9px;top:393.0px;width:1.0px;height:67.0px;background:rgba(0,0,40,0.28);"></div>
<svg style="left:818.6px;top:397.4px" width="11" height="12"><path d="M0 0.5 H10.5 V11.5 H0 V9.5 H6 V7.2 H0 V4.8 H6 V2.5 H0 Z" fill="#e8ffff"/></svg>
<div class="t" style="left:832.0px;top:394.8px;font-size:14.78px;line-height:14.78px;color:#0a3a40;transform:scaleX(0.809);-webkit-text-stroke:0.3px currentColor;">Pat..22</div>
<div style="left:1145.9px;top:393.0px;width:57.5px;height:18.7px;background:linear-gradient(rgba(255,255,255,0.07),rgba(0,0,0,0.04)),#6edce6;border-radius:3px;box-shadow:inset 0 0 0 1px rgba(0,0,30,0.35);"></div>
<div style="left:1145.4px;top:393.0px;width:1.0px;height:67.0px;background:rgba(0,0,40,0.28);"></div>
<svg style="left:1149.1px;top:397.4px" width="11" height="12"><path d="M0 0.5 H10.5 V11.5 H0 V9.5 H6 V7.2 H0 V4.8 H6 V2.5 H0 Z" fill="#e8ffff"/></svg>
<div class="t" style="left:1162.5px;top:394.8px;font-size:14.78px;line-height:14.78px;color:#0a3a40;transform:scaleX(0.809);-webkit-text-stroke:0.3px currentColor;">Pat..22</div>
<div style="left:1203.4px;top:393.0px;width:57.5px;height:18.7px;background:linear-gradient(rgba(255,255,255,0.07),rgba(0,0,0,0.04)),#6edce6;border-radius:3px;box-shadow:inset 0 0 0 1px rgba(0,0,30,0.35);"></div>
<div style="left:1202.9px;top:393.0px;width:1.0px;height:67.0px;background:rgba(0,0,40,0.28);"></div>
<svg style="left:1206.6px;top:397.4px" width="11" height="12"><path d="M0 0.5 H10.5 V11.5 H0 V9.5 H6 V7.2 H0 V4.8 H6 V2.5 H0 Z" fill="#e8ffff"/></svg>
<div class="t" style="left:1220.0px;top:394.8px;font-size:14.78px;line-height:14.78px;color:#0a3a40;transform:scaleX(0.809);-webkit-text-stroke:0.3px currentColor;">Pat..22</div>
<div style="left:1318.4px;top:393.0px;width:115.0px;height:18.7px;background:linear-gradient(rgba(255,255,255,0.07),rgba(0,0,0,0.04)),#585e66;border-radius:3px;box-shadow:inset 0 0 0 1px rgba(0,0,30,0.35);"></div>
<div style="left:1317.9px;top:393.0px;width:1.0px;height:67.0px;background:rgba(0,0,40,0.28);"></div>
<svg style="left:1321.6px;top:397.4px" width="11" height="12"><path d="M0 0.5 H10.5 V11.5 H0 V9.5 H6 V7.2 H0 V4.8 H6 V2.5 H0 Z" fill="#e8ecec"/></svg>
<div class="t" style="left:1335.0px;top:394.8px;font-size:14.78px;line-height:14.78px;color:#dadede;transform:scaleX(0.930);-webkit-text-stroke:0.3px currentColor;">Pattern 86</div>
<div style="left:1433.4px;top:393.0px;width:57.5px;height:18.7px;background:linear-gradient(rgba(255,255,255,0.07),rgba(0,0,0,0.04)),#585e66;border-radius:3px;box-shadow:inset 0 0 0 1px rgba(0,0,30,0.35);"></div>
<div style="left:1432.9px;top:393.0px;width:1.0px;height:67.0px;background:rgba(0,0,40,0.28);"></div>
<svg style="left:1436.6px;top:397.4px" width="11" height="12"><path d="M0 0.5 H10.5 V11.5 H0 V9.5 H6 V7.2 H0 V4.8 H6 V2.5 H0 Z" fill="#e8ecec"/></svg>
<div class="t" style="left:1450.0px;top:394.8px;font-size:14.78px;line-height:14.78px;color:#dadede;transform:scaleX(0.809);-webkit-text-stroke:0.3px currentColor;">Pat..66</div>
<div style="left:1490.9px;top:393.0px;width:152.3px;height:18.7px;background:linear-gradient(rgba(255,255,255,0.07),rgba(0,0,0,0.04)),#585e66;border-radius:3px;box-shadow:inset 0 0 0 1px rgba(0,0,30,0.35);"></div>
<div style="left:1490.4px;top:393.0px;width:1.0px;height:67.0px;background:rgba(0,0,40,0.28);"></div>
<svg style="left:1494.1px;top:397.4px" width="11" height="12"><path d="M0 0.5 H10.5 V11.5 H0 V9.5 H6 V7.2 H0 V4.8 H6 V2.5 H0 Z" fill="#e8ecec"/></svg>
<div class="t" style="left:1507.5px;top:394.8px;font-size:14.78px;line-height:14.78px;color:#dadede;transform:scaleX(0.930);-webkit-text-stroke:0.3px currentColor;">Pattern 68</div>
<div style="left:513.6px;top:461.0px;width:115.0px;height:18.7px;background:linear-gradient(rgba(255,255,255,0.07),rgba(0,0,0,0.04)),#7a1e90;border-radius:3px;box-shadow:inset 0 0 0 1px rgba(0,0,30,0.35);"></div>
<div style="left:513.1px;top:461.0px;width:1.0px;height:69.0px;background:rgba(0,0,40,0.28);"></div>
<svg style="left:516.8px;top:465.4px" width="11" height="12"><path d="M0 0.5 H10.5 V11.5 H0 V9.5 H6 V7.2 H0 V4.8 H6 V2.5 H0 Z" fill="#ffd4ff"/></svg>
<div class="t" style="left:530.2px;top:462.8px;font-size:14.78px;line-height:14.78px;color:#f0b4f0;transform:scaleX(0.930);-webkit-text-stroke:0.3px currentColor;">Pattern 59</div>
<div style="left:628.5px;top:461.0px;width:115.0px;height:18.7px;background:linear-gradient(rgba(255,255,255,0.07),rgba(0,0,0,0.04)),#7a1e90;border-radius:3px;box-shadow:inset 0 0 0 1px rgba(0,0,30,0.35);"></div>
<div style="left:628.0px;top:461.0px;width:1.0px;height:69.0px;background:rgba(0,0,40,0.28);"></div>
<svg style="left:631.7px;top:465.4px" width="11" height="12"><path d="M0 0.5 H10.5 V11.5 H0 V9.5 H6 V7.2 H0 V4.8 H6 V2.5 H0 Z" fill="#ffd4ff"/></svg>
<div class="t" style="left:645.1px;top:462.8px;font-size:14.78px;line-height:14.78px;color:#f0b4f0;transform:scaleX(0.930);-webkit-text-stroke:0.3px currentColor;">Pattern 59</div>
<div style="left:757.9px;top:461.0px;width:57.5px;height:18.7px;background:linear-gradient(rgba(255,255,255,0.07),rgba(0,0,0,0.04)),#7a1e90;border-radius:3px;box-shadow:inset 0 0 0 1px rgba(0,0,30,0.35);"></div>
<div style="left:757.4px;top:461.0px;width:1.0px;height:69.0px;background:rgba(0,0,40,0.28);"></div>
<svg style="left:761.1px;top:465.4px" width="11" height="12"><path d="M0 0.5 H10.5 V11.5 H0 V9.5 H6 V7.2 H0 V4.8 H6 V2.5 H0 Z" fill="#ffd4ff"/></svg>
<div class="t" style="left:774.5px;top:462.8px;font-size:14.78px;line-height:14.78px;color:#f0b4f0;transform:scaleX(0.809);-webkit-text-stroke:0.3px currentColor;">Pat..60</div>
<div style="left:815.4px;top:461.0px;width:57.5px;height:18.7px;background:linear-gradient(rgba(255,255,255,0.07),rgba(0,0,0,0.04)),#7a1e90;border-radius:3px;box-shadow:inset 0 0 0 1px rgba(0,0,30,0.35);"></div>
<div style="left:814.9px;top:461.0px;width:1.0px;height:69.0px;background:rgba(0,0,40,0.28);"></div>
<svg style="left:818.6px;top:465.4px" width="11" height="12"><path d="M0 0.5 H10.5 V11.5 H0 V9.5 H6 V7.2 H0 V4.8 H6 V2.5 H0 Z" fill="#ffd4ff"/></svg>
<div class="t" style="left:832.0px;top:462.8px;font-size:14.78px;line-height:14.78px;color:#f0b4f0;transform:scaleX(0.809);-webkit-text-stroke:0.3px currentColor;">Pat..23</div>
<div style="left:1145.9px;top:461.0px;width:57.5px;height:18.7px;background:linear-gradient(rgba(255,255,255,0.07),rgba(0,0,0,0.04)),#7a1e90;border-radius:3px;box-shadow:inset 0 0 0 1px rgba(0,0,30,0.35);"></div>
<div style="left:1145.4px;top:461.0px;width:1.0px;height:69.0px;background:rgba(0,0,40,0.28);"></div>
<svg style="left:1149.1px;top:465.4px" width="11" height="12"><path d="M0 0.5 H10.5 V11.5 H0 V9.5 H6 V7.2 H0 V4.8 H6 V2.5 H0 Z" fill="#ffd4ff"/></svg>
<div class="t" style="left:1162.5px;top:462.8px;font-size:14.78px;line-height:14.78px;color:#f0b4f0;transform:scaleX(0.809);-webkit-text-stroke:0.3px currentColor;">Pat..60</div>
<div style="left:1203.4px;top:461.0px;width:57.5px;height:18.7px;background:linear-gradient(rgba(255,255,255,0.07),rgba(0,0,0,0.04)),#7a1e90;border-radius:3px;box-shadow:inset 0 0 0 1px rgba(0,0,30,0.35);"></div>
<div style="left:1202.9px;top:461.0px;width:1.0px;height:69.0px;background:rgba(0,0,40,0.28);"></div>
<svg style="left:1206.6px;top:465.4px" width="11" height="12"><path d="M0 0.5 H10.5 V11.5 H0 V9.5 H6 V7.2 H0 V4.8 H6 V2.5 H0 Z" fill="#ffd4ff"/></svg>
<div class="t" style="left:1220.0px;top:462.8px;font-size:14.78px;line-height:14.78px;color:#f0b4f0;transform:scaleX(0.809);-webkit-text-stroke:0.3px currentColor;">Pat..23</div>
<div style="left:341.1px;top:531.0px;width:158.1px;height:18.7px;background:linear-gradient(rgba(255,255,255,0.07),rgba(0,0,0,0.04)),#2c1e96;border-radius:3px;box-shadow:inset 0 0 0 1px rgba(0,0,30,0.35);"></div>
<div style="left:340.6px;top:531.0px;width:1.0px;height:69.0px;background:rgba(0,0,40,0.28);"></div>
<svg style="left:344.3px;top:535.4px" width="11" height="12"><path d="M0 0.5 H10.5 V11.5 H0 V9.5 H6 V7.2 H0 V4.8 H6 V2.5 H0 Z" fill="#c4c0ff"/></svg>
<div class="t" style="left:357.7px;top:532.8px;font-size:14.78px;line-height:14.78px;color:#c4c0ff;transform:scaleX(0.930);-webkit-text-stroke:0.3px currentColor;">Pattern 27</div>
<div style="left:513.6px;top:531.0px;width:57.5px;height:18.7px;background:linear-gradient(rgba(255,255,255,0.07),rgba(0,0,0,0.04)),#1e1896;border-radius:3px;box-shadow:inset 0 0 0 1px rgba(0,0,30,0.35);"></div>
<div style="left:513.1px;top:531.0px;width:1.0px;height:69.0px;background:rgba(0,0,40,0.28);"></div>
<svg style="left:516.8px;top:535.4px" width="11" height="12"><path d="M0 0.5 H10.5 V11.5 H0 V9.5 H6 V7.2 H0 V4.8 H6 V2.5 H0 Z" fill="#c8c8ff"/></svg>
<div class="t" style="left:530.2px;top:532.8px;font-size:14.78px;line-height:14.78px;color:#c8c0ff;transform:scaleX(0.809);-webkit-text-stroke:0.3px currentColor;">Pat..32</div>
<div style="left:571.1px;top:531.0px;width:57.5px;height:18.7px;background:linear-gradient(rgba(255,255,255,0.07),rgba(0,0,0,0.04)),#1e1896;border-radius:3px;box-shadow:inset 0 0 0 1px rgba(0,0,30,0.35);"></div>
<div style="left:570.6px;top:531.0px;width:1.0px;height:69.0px;background:rgba(0,0,40,0.28);"></div>
<svg style="left:574.3px;top:535.4px" width="11" height="12"><path d="M0 0.5 H10.5 V11.5 H0 V9.5 H6 V7.2 H0 V4.8 H6 V2.5 H0 Z" fill="#c8c8ff"/></svg>
<div class="t" style="left:587.7px;top:532.8px;font-size:14.78px;line-height:14.78px;color:#c8c0ff;transform:scaleX(0.809);-webkit-text-stroke:0.3px currentColor;">Pat..37</div>
<div style="left:628.5px;top:531.0px;width:57.5px;height:18.7px;background:linear-gradient(rgba(255,255,255,0.07),rgba(0,0,0,0.04)),#1e1896;border-radius:3px;box-shadow:inset 0 0 0 1px rgba(0,0,30,0.35);"></div>
<div style="left:628.0px;top:531.0px;width:1.0px;height:69.0px;background:rgba(0,0,40,0.28);"></div>
<svg style="left:631.7px;top:535.4px" width="11" height="12"><path d="M0 0.5 H10.5 V11.5 H0 V9.5 H6 V7.2 H0 V4.8 H6 V2.5 H0 Z" fill="#c8c8ff"/></svg>
<div class="t" style="left:645.1px;top:532.8px;font-size:14.78px;line-height:14.78px;color:#c8c0ff;transform:scaleX(0.809);-webkit-text-stroke:0.3px currentColor;">Pat..40</div>
<div style="left:686.0px;top:531.0px;width:57.5px;height:18.7px;background:linear-gradient(rgba(255,255,255,0.07),rgba(0,0,0,0.04)),#1e1896;border-radius:3px;box-shadow:inset 0 0 0 1px rgba(0,0,30,0.35);"></div>
<div style="left:685.5px;top:531.0px;width:1.0px;height:69.0px;background:rgba(0,0,40,0.28);"></div>
<svg style="left:689.2px;top:535.4px" width="11" height="12"><path d="M0 0.5 H10.5 V11.5 H0 V9.5 H6 V7.2 H0 V4.8 H6 V2.5 H0 Z" fill="#c8c8ff"/></svg>
<div class="t" style="left:702.6px;top:532.8px;font-size:14.78px;line-height:14.78px;color:#c8c0ff;transform:scaleX(0.809);-webkit-text-stroke:0.3px currentColor;">Pat..40</div>
<div style="left:757.9px;top:531.0px;width:57.5px;height:18.7px;background:linear-gradient(rgba(255,255,255,0.07),rgba(0,0,0,0.04)),#2828dc;border-radius:3px;box-shadow:inset 0 0 0 1px rgba(0,0,30,0.35);"></div>
<div style="left:757.4px;top:531.0px;width:1.0px;height:69.0px;background:rgba(0,0,40,0.28);"></div>
<svg style="left:761.1px;top:535.4px" width="11" height="12"><path d="M0 0.5 H10.5 V11.5 H0 V9.5 H6 V7.2 H0 V4.8 H6 V2.5 H0 Z" fill="#d8d8ff"/></svg>
<div class="t" style="left:774.5px;top:532.8px;font-size:14.78px;line-height:14.78px;color:#e0e0ff;transform:scaleX(0.809);-webkit-text-stroke:0.3px currentColor;">Pat..13</div>
<div style="left:815.4px;top:531.0px;width:57.5px;height:18.7px;background:linear-gradient(rgba(255,255,255,0.07),rgba(0,0,0,0.04)),#2828dc;border-radius:3px;box-shadow:inset 0 0 0 1px rgba(0,0,30,0.35);"></div>
<div style="left:814.9px;top:531.0px;width:1.0px;height:69.0px;background:rgba(0,0,40,0.28);"></div>
<svg style="left:818.6px;top:535.4px" width="11" height="12"><path d="M0 0.5 H10.5 V11.5 H0 V9.5 H6 V7.2 H0 V4.8 H6 V2.5 H0 Z" fill="#d8d8ff"/></svg>
<div class="t" style="left:832.0px;top:532.8px;font-size:14.78px;line-height:14.78px;color:#e0e0ff;transform:scaleX(0.809);-webkit-text-stroke:0.3px currentColor;">Pat..16</div>
<div style="left:872.9px;top:531.0px;width:28.7px;height:18.7px;background:linear-gradient(rgba(255,255,255,0.07),rgba(0,0,0,0.04)),#1e1896;border-radius:3px;box-shadow:inset 0 0 0 1px rgba(0,0,30,0.35);"></div>
<div style="left:872.4px;top:531.0px;width:1.0px;height:69.0px;background:rgba(0,0,40,0.28);"></div>
<svg style="left:876.1px;top:535.4px" width="11" height="12"><path d="M0 0.5 H10.5 V11.5 H0 V9.5 H6 V7.2 H0 V4.8 H6 V2.5 H0 Z" fill="#c8c8ff"/></svg>
<div style="left:901.6px;top:531.0px;width:28.7px;height:18.7px;background:linear-gradient(rgba(255,255,255,0.07),rgba(0,0,0,0.04)),#1e1896;border-radius:3px;box-shadow:inset 0 0 0 1px rgba(0,0,30,0.35);"></div>
<div style="left:901.1px;top:531.0px;width:1.0px;height:69.0px;background:rgba(0,0,40,0.28);"></div>
<svg style="left:904.8px;top:535.4px" width="11" height="12"><path d="M0 0.5 H10.5 V11.5 H0 V9.5 H6 V7.2 H0 V4.8 H6 V2.5 H0 Z" fill="#c8c8ff"/></svg>
<div style="left:930.4px;top:531.0px;width:28.7px;height:18.7px;background:linear-gradient(rgba(255,255,255,0.07),rgba(0,0,0,0.04)),#1e1896;border-radius:3px;box-shadow:inset 0 0 0 1px rgba(0,0,30,0.35);"></div>
<div style="left:929.9px;top:531.0px;width:1.0px;height:69.0px;background:rgba(0,0,40,0.28);"></div>
<svg style="left:933.6px;top:535.4px" width="11" height="12"><path d="M0 0.5 H10.5 V11.5 H0 V9.5 H6 V7.2 H0 V4.8 H6 V2.5 H0 Z" fill="#c8c8ff"/></svg>
<div style="left:959.1px;top:531.0px;width:28.7px;height:18.7px;background:linear-gradient(rgba(255,255,255,0.07),rgba(0,0,0,0.04)),#1e1896;border-radius:3px;box-shadow:inset 0 0 0 1px rgba(0,0,30,0.35);"></div>
<div style="left:958.6px;top:531.0px;width:1.0px;height:69.0px;background:rgba(0,0,40,0.28);"></div>
<svg style="left:962.3px;top:535.4px" width="11" height="12"><path d="M0 0.5 H10.5 V11.5 H0 V9.5 H6 V7.2 H0 V4.8 H6 V2.5 H0 Z" fill="#c8c8ff"/></svg>
<div style="left:987.8px;top:531.0px;width:23.0px;height:18.7px;background:linear-gradient(rgba(255,255,255,0.07),rgba(0,0,0,0.04)),#1e1896;border-radius:3px;box-shadow:inset 0 0 0 1px rgba(0,0,30,0.35);"></div>
<div style="left:987.3px;top:531.0px;width:1.0px;height:69.0px;background:rgba(0,0,40,0.28);"></div>
<svg style="left:991.0px;top:535.4px" width="11" height="12"><path d="M0 0.5 H10.5 V11.5 H0 V9.5 H6 V7.2 H0 V4.8 H6 V2.5 H0 Z" fill="#c8c8ff"/></svg>
<div style="left:1016.6px;top:531.0px;width:113.5px;height:18.7px;background:linear-gradient(rgba(255,255,255,0.07),rgba(0,0,0,0.04)),#585e66;border-radius:3px;box-shadow:inset 0 0 0 1px rgba(0,0,30,0.35);"></div>
<div style="left:1016.1px;top:531.0px;width:1.0px;height:69.0px;background:rgba(0,0,40,0.28);"></div>
<svg style="left:1019.8px;top:535.4px" width="11" height="12"><path d="M0 0.5 H10.5 V11.5 H0 V9.5 H6 V7.2 H0 V4.8 H6 V2.5 H0 Z" fill="#e8ecec"/></svg>
<div class="t" style="left:1033.2px;top:532.8px;font-size:14.78px;line-height:14.78px;color:#dadede;transform:scaleX(0.930);-webkit-text-stroke:0.3px currentColor;">Pattern 64</div>
<div style="left:1145.9px;top:531.0px;width:57.5px;height:18.7px;background:linear-gradient(rgba(255,255,255,0.07),rgba(0,0,0,0.04)),#2828dc;border-radius:3px;box-shadow:inset 0 0 0 1px rgba(0,0,30,0.35);"></div>
<div style="left:1145.4px;top:531.0px;width:1.0px;height:69.0px;background:rgba(0,0,40,0.28);"></div>
<svg style="left:1149.1px;top:535.4px" width="11" height="12"><path d="M0 0.5 H10.5 V11.5 H0 V9.5 H6 V7.2 H0 V4.8 H6 V2.5 H0 Z" fill="#d8d8ff"/></svg>
<div class="t" style="left:1162.5px;top:532.8px;font-size:14.78px;line-height:14.78px;color:#e0e0ff;transform:scaleX(0.809);-webkit-text-stroke:0.3px currentColor;">Pat..19</div>
<div style="left:1203.4px;top:531.0px;width:57.5px;height:18.7px;background:linear-gradient(rgba(255,255,255,0.07),rgba(0,0,0,0.04)),#2828dc;border-radius:3px;box-shadow:inset 0 0 0 1px rgba(0,0,30,0.35);"></div>
<div style="left:1202.9px;top:531.0px;width:1.0px;height:69.0px;background:rgba(0,0,40,0.28);"></div>
<svg style="left:1206.6px;top:535.4px" width="11" height="12"><path d="M0 0.5 H10.5 V11.5 H0 V9.5 H6 V7.2 H0 V4.8 H6 V2.5 H0 Z" fill="#d8d8ff"/></svg>
<div class="t" style="left:1220.0px;top:532.8px;font-size:14.78px;line-height:14.78px;color:#e0e0ff;transform:scaleX(0.809);-webkit-text-stroke:0.3px currentColor;">Pat..16</div>
<div style="left:1260.9px;top:531.0px;width:57.5px;height:18.7px;background:linear-gradient(rgba(255,255,255,0.07),rgba(0,0,0,0.04)),#585e66;border-radius:3px;box-shadow:inset 0 0 0 1px rgba(0,0,30,0.35);"></div>
<div style="left:1260.4px;top:531.0px;width:1.0px;height:69.0px;background:rgba(0,0,40,0.28);"></div>
<svg style="left:1264.1px;top:535.4px" width="11" height="12"><path d="M0 0.5 H10.5 V11.5 H0 V9.5 H6 V7.2 H0 V4.8 H6 V2.5 H0 Z" fill="#e8ecec"/></svg>
<div class="t" style="left:1277.5px;top:532.8px;font-size:14.78px;line-height:14.78px;color:#dadede;transform:scaleX(0.809);-webkit-text-stroke:0.3px currentColor;">Pat..72</div>
<div style="left:1318.4px;top:531.0px;width:57.5px;height:18.7px;background:linear-gradient(rgba(255,255,255,0.07),rgba(0,0,0,0.04)),#585e66;border-radius:3px;box-shadow:inset 0 0 0 1px rgba(0,0,30,0.35);"></div>
<div style="left:1317.9px;top:531.0px;width:1.0px;height:69.0px;background:rgba(0,0,40,0.28);"></div>
<svg style="left:1321.6px;top:535.4px" width="11" height="12"><path d="M0 0.5 H10.5 V11.5 H0 V9.5 H6 V7.2 H0 V4.8 H6 V2.5 H0 Z" fill="#e8ecec"/></svg>
<div class="t" style="left:1335.0px;top:532.8px;font-size:14.78px;line-height:14.78px;color:#dadede;transform:scaleX(0.809);-webkit-text-stroke:0.3px currentColor;">Pat..81</div>
<div style="left:1375.9px;top:531.0px;width:57.5px;height:18.7px;background:linear-gradient(rgba(255,255,255,0.07),rgba(0,0,0,0.04)),#585e66;border-radius:3px;box-shadow:inset 0 0 0 1px rgba(0,0,30,0.35);"></div>
<div style="left:1375.4px;top:531.0px;width:1.0px;height:69.0px;background:rgba(0,0,40,0.28);"></div>
<svg style="left:1379.1px;top:535.4px" width="11" height="12"><path d="M0 0.5 H10.5 V11.5 H0 V9.5 H6 V7.2 H0 V4.8 H6 V2.5 H0 Z" fill="#e8ecec"/></svg>
<div class="t" style="left:1392.5px;top:532.8px;font-size:14.78px;line-height:14.78px;color:#dadede;transform:scaleX(0.809);-webkit-text-stroke:0.3px currentColor;">Pat..85</div>
<div style="left:1433.4px;top:531.0px;width:57.5px;height:18.7px;background:linear-gradient(rgba(255,255,255,0.07),rgba(0,0,0,0.04)),#3a2aa8;border-radius:3px;box-shadow:inset 0 0 0 1px rgba(0,0,30,0.35);"></div>
<div style="left:1432.9px;top:531.0px;width:1.0px;height:69.0px;background:rgba(0,0,40,0.28);"></div>
<svg style="left:1436.6px;top:535.4px" width="11" height="12"><path d="M0 0.5 H10.5 V11.5 H0 V9.5 H6 V7.2 H0 V4.8 H6 V2.5 H0 Z" fill="#d0c8ff"/></svg>
<div class="t" style="left:1450.0px;top:532.8px;font-size:14.78px;line-height:14.78px;color:#d0c8ff;transform:scaleX(0.809);-webkit-text-stroke:0.3px currentColor;">Pat..27</div>
<div style="left:341.1px;top:601.0px;width:172.5px;height:18.7px;background:linear-gradient(rgba(255,255,255,0.07),rgba(0,0,0,0.04)),#2c1e96;border-radius:3px;box-shadow:inset 0 0 0 1px rgba(0,0,30,0.35);"></div>
<div style="left:340.6px;top:601.0px;width:1.0px;height:69.0px;background:rgba(0,0,40,0.28);"></div>
<svg style="left:344.3px;top:605.4px" width="11" height="12"><path d="M0 0.5 H10.5 V11.5 H0 V9.5 H6 V7.2 H0 V4.8 H6 V2.5 H0 Z" fill="#c4c0ff"/></svg>
<div class="t" style="left:357.7px;top:602.8px;font-size:14.78px;line-height:14.78px;color:#c4c0ff;transform:scaleX(0.930);-webkit-text-stroke:0.3px currentColor;">Pattern 26</div>
<div style="left:513.6px;top:601.0px;width:57.5px;height:18.7px;background:linear-gradient(rgba(255,255,255,0.07),rgba(0,0,0,0.04)),#1e1896;border-radius:3px;box-shadow:inset 0 0 0 1px rgba(0,0,30,0.35);"></div>
<div style="left:513.1px;top:601.0px;width:1.0px;height:69.0px;background:rgba(0,0,40,0.28);"></div>
<svg style="left:516.8px;top:605.4px" width="11" height="12"><path d="M0 0.5 H10.5 V11.5 H0 V9.5 H6 V7.2 H0 V4.8 H6 V2.5 H0 Z" fill="#c8c8ff"/></svg>
<div class="t" style="left:530.2px;top:602.8px;font-size:14.78px;line-height:14.78px;color:#c8c0ff;transform:scaleX(0.809);-webkit-text-stroke:0.3px currentColor;">Pat..34</div>
<div style="left:571.1px;top:601.0px;width:57.5px;height:18.7px;background:linear-gradient(rgba(255,255,255,0.07),rgba(0,0,0,0.04)),#1e1896;border-radius:3px;box-shadow:inset 0 0 0 1px rgba(0,0,30,0.35);"></div>
<div style="left:570.6px;top:601.0px;width:1.0px;height:69.0px;background:rgba(0,0,40,0.28);"></div>
<svg style="left:574.3px;top:605.4px" width="11" height="12"><path d="M0 0.5 H10.5 V11.5 H0 V9.5 H6 V7.2 H0 V4.8 H6 V2.5 H0 Z" fill="#c8c8ff"/></svg>
<div class="t" style="left:587.7px;top:602.8px;font-size:14.78px;line-height:14.78px;color:#c8c0ff;transform:scaleX(0.809);-webkit-text-stroke:0.3px currentColor;">Pat..36</div>
<div style="left:628.5px;top:601.0px;width:57.5px;height:18.7px;background:linear-gradient(rgba(255,255,255,0.07),rgba(0,0,0,0.04)),#1e1896;border-radius:3px;box-shadow:inset 0 0 0 1px rgba(0,0,30,0.35);"></div>
<div style="left:628.0px;top:601.0px;width:1.0px;height:69.0px;background:rgba(0,0,40,0.28);"></div>
<svg style="left:631.7px;top:605.4px" width="11" height="12"><path d="M0 0.5 H10.5 V11.5 H0 V9.5 H6 V7.2 H0 V4.8 H6 V2.5 H0 Z" fill="#c8c8ff"/></svg>
<div class="t" style="left:645.1px;top:602.8px;font-size:14.78px;line-height:14.78px;color:#c8c0ff;transform:scaleX(0.809);-webkit-text-stroke:0.3px currentColor;">Pat..39</div>
<div style="left:686.0px;top:601.0px;width:57.5px;height:18.7px;background:linear-gradient(rgba(255,255,255,0.07),rgba(0,0,0,0.04)),#1e1896;border-radius:3px;box-shadow:inset 0 0 0 1px rgba(0,0,30,0.35);"></div>
<div style="left:685.5px;top:601.0px;width:1.0px;height:69.0px;background:rgba(0,0,40,0.28);"></div>
<svg style="left:689.2px;top:605.4px" width="11" height="12"><path d="M0 0.5 H10.5 V11.5 H0 V9.5 H6 V7.2 H0 V4.8 H6 V2.5 H0 Z" fill="#c8c8ff"/></svg>
<div class="t" style="left:702.6px;top:602.8px;font-size:14.78px;line-height:14.78px;color:#c8c0ff;transform:scaleX(0.809);-webkit-text-stroke:0.3px currentColor;">Pat..39</div>
<div style="left:872.9px;top:601.0px;width:23.0px;height:18.7px;background:linear-gradient(rgba(255,255,255,0.07),rgba(0,0,0,0.04)),#1e1896;border-radius:3px;box-shadow:inset 0 0 0 1px rgba(0,0,30,0.35);"></div>
<div style="left:872.4px;top:601.0px;width:1.0px;height:69.0px;background:rgba(0,0,40,0.28);"></div>
<svg style="left:876.1px;top:605.4px" width="11" height="12"><path d="M0 0.5 H10.5 V11.5 H0 V9.5 H6 V7.2 H0 V4.8 H6 V2.5 H0 Z" fill="#c8c8ff"/></svg>
<div style="left:901.6px;top:601.0px;width:28.7px;height:18.7px;background:linear-gradient(rgba(255,255,255,0.07),rgba(0,0,0,0.04)),#1e1896;border-radius:3px;box-shadow:inset 0 0 0 1px rgba(0,0,30,0.35);"></div>
<div style="left:901.1px;top:601.0px;width:1.0px;height:69.0px;background:rgba(0,0,40,0.28);"></div>
<svg style="left:904.8px;top:605.4px" width="11" height="12"><path d="M0 0.5 H10.5 V11.5 H0 V9.5 H6 V7.2 H0 V4.8 H6 V2.5 H0 Z" fill="#c8c8ff"/></svg>
<div style="left:930.4px;top:601.0px;width:28.7px;height:18.7px;background:linear-gradient(rgba(255,255,255,0.07),rgba(0,0,0,0.04)),#1e1896;border-radius:3px;box-shadow:inset 0 0 0 1px rgba(0,0,30,0.35);"></div>
<div style="left:929.9px;top:601.0px;width:1.0px;height:69.0px;background:rgba(0,0,40,0.28);"></div>
<svg style="left:933.6px;top:605.4px" width="11" height="12"><path d="M0 0.5 H10.5 V11.5 H0 V9.5 H6 V7.2 H0 V4.8 H6 V2.5 H0 Z" fill="#c8c8ff"/></svg>
<div style="left:959.1px;top:601.0px;width:28.7px;height:18.7px;background:linear-gradient(rgba(255,255,255,0.07),rgba(0,0,0,0.04)),#1e1896;border-radius:3px;box-shadow:inset 0 0 0 1px rgba(0,0,30,0.35);"></div>
<div style="left:958.6px;top:601.0px;width:1.0px;height:69.0px;background:rgba(0,0,40,0.28);"></div>
<svg style="left:962.3px;top:605.4px" width="11" height="12"><path d="M0 0.5 H10.5 V11.5 H0 V9.5 H6 V7.2 H0 V4.8 H6 V2.5 H0 Z" fill="#c8c8ff"/></svg>
<div style="left:987.8px;top:601.0px;width:23.0px;height:18.7px;background:linear-gradient(rgba(255,255,255,0.07),rgba(0,0,0,0.04)),#1e1896;border-radius:3px;box-shadow:inset 0 0 0 1px rgba(0,0,30,0.35);"></div>
<div style="left:987.3px;top:601.0px;width:1.0px;height:69.0px;background:rgba(0,0,40,0.28);"></div>
<svg style="left:991.0px;top:605.4px" width="11" height="12"><path d="M0 0.5 H10.5 V11.5 H0 V9.5 H6 V7.2 H0 V4.8 H6 V2.5 H0 Z" fill="#c8c8ff"/></svg>
<div style="left:1016.6px;top:601.0px;width:113.5px;height:18.7px;background:linear-gradient(rgba(255,255,255,0.07),rgba(0,0,0,0.04)),#585e66;border-radius:3px;box-shadow:inset 0 0 0 1px rgba(0,0,30,0.35);"></div>
<div style="left:1016.1px;top:601.0px;width:1.0px;height:69.0px;background:rgba(0,0,40,0.28);"></div>
<svg style="left:1019.8px;top:605.4px" width="11" height="12"><path d="M0 0.5 H10.5 V11.5 H0 V9.5 H6 V7.2 H0 V4.8 H6 V2.5 H0 Z" fill="#e8ecec"/></svg>
<div class="t" style="left:1033.2px;top:602.8px;font-size:14.78px;line-height:14.78px;color:#dadede;transform:scaleX(0.930);-webkit-text-stroke:0.3px currentColor;">Pattern 63</div>
<div style="left:1260.9px;top:601.0px;width:57.5px;height:18.7px;background:linear-gradient(rgba(255,255,255,0.07),rgba(0,0,0,0.04)),#585e66;border-radius:3px;box-shadow:inset 0 0 0 1px rgba(0,0,30,0.35);"></div>
<div style="left:1260.4px;top:601.0px;width:1.0px;height:69.0px;background:rgba(0,0,40,0.28);"></div>
<svg style="left:1264.1px;top:605.4px" width="11" height="12"><path d="M0 0.5 H10.5 V11.5 H0 V9.5 H6 V7.2 H0 V4.8 H6 V2.5 H0 Z" fill="#e8ecec"/></svg>
<div class="t" style="left:1277.5px;top:602.8px;font-size:14.78px;line-height:14.78px;color:#dadede;transform:scaleX(0.809);-webkit-text-stroke:0.3px currentColor;">Pat..70</div>
<div style="left:1318.4px;top:601.0px;width:57.5px;height:18.7px;background:linear-gradient(rgba(255,255,255,0.07),rgba(0,0,0,0.04)),#585e66;border-radius:3px;box-shadow:inset 0 0 0 1px rgba(0,0,30,0.35);"></div>
<div style="left:1317.9px;top:601.0px;width:1.0px;height:69.0px;background:rgba(0,0,40,0.28);"></div>
<svg style="left:1321.6px;top:605.4px" width="11" height="12"><path d="M0 0.5 H10.5 V11.5 H0 V9.5 H6 V7.2 H0 V4.8 H6 V2.5 H0 Z" fill="#e8ecec"/></svg>
<div class="t" style="left:1335.0px;top:602.8px;font-size:14.78px;line-height:14.78px;color:#dadede;transform:scaleX(0.809);-webkit-text-stroke:0.3px currentColor;">Pat..80</div>
<div style="left:1375.9px;top:601.0px;width:57.5px;height:18.7px;background:linear-gradient(rgba(255,255,255,0.07),rgba(0,0,0,0.04)),#585e66;border-radius:3px;box-shadow:inset 0 0 0 1px rgba(0,0,30,0.35);"></div>
<div style="left:1375.4px;top:601.0px;width:1.0px;height:69.0px;background:rgba(0,0,40,0.28);"></div>
<svg style="left:1379.1px;top:605.4px" width="11" height="12"><path d="M0 0.5 H10.5 V11.5 H0 V9.5 H6 V7.2 H0 V4.8 H6 V2.5 H0 Z" fill="#e8ecec"/></svg>
<div class="t" style="left:1392.5px;top:602.8px;font-size:14.78px;line-height:14.78px;color:#dadede;transform:scaleX(0.809);-webkit-text-stroke:0.3px currentColor;">Pat..84</div>
<div style="left:1459.5px;top:323.8px;width:1.4px;height:67.0px;background:#4a32a8;"></div>
<div style="left:1475.8px;top:323.8px;width:1.4px;height:67.0px;background:#4a32a8;"></div>
<div style="left:609.3px;top:696.6px;width:513.2px;height:262.9px;background:#262b30;box-shadow:0 0 0 1.2px #0e1a34;"></div>
<div class="t" style="left:619.0px;top:706.6px;font-size:15.36px;line-height:15.36px;color:#d6dbdf;transform:scaleX(1.097);">ZGameEditor Visualizer - Preview</div>
<div style="left:960.0px;top:701.5px;width:56.0px;height:26.0px;background:#262c31;box-shadow:inset 0 0 0 1px #3a4045;"></div>
<div class="t" style="left:966.0px;top:706.5px;font-size:13.62px;line-height:13.62px;color:#b8bec2;transform:scaleX(0.947);">100%</div>
<svg style="left:1007px;top:708px" width="8" height="12"><path d="M1 2 L6 6 L1 10 Z" fill="#5a6268"/></svg>
<div style="left:1030.0px;top:712.0px;width:10.0px;height:3.0px;background:#e6eaec;"></div>
<svg style="left:1049px;top:706px" width="18" height="18"><path d="M2 6 V2 H6 M12 2 H16 V6 M16 12 V16 H12 M6 16 H2 V12" fill="none" stroke="#e6eaec" stroke-width="1.8"/><path d="M5 5 L8 8 M13 5 L10 8 M5 13 L8 10 M13 13 L10 10" stroke="#e6eaec" stroke-width="1.4"/></svg>
<svg style="left:1074px;top:708px" width="14" height="14"><rect x="1.5" y="2" width="11" height="10" fill="none" stroke="#e6eaec" stroke-width="1.6"/><rect x="1.5" y="2" width="11" height="3" fill="#e6eaec"/></svg>
<svg style="left:1098px;top:707px" width="15" height="15"><path d="M2 2 L13 13 M13 2 L2 13" stroke="#e6eaec" stroke-width="2"/></svg>
<div style="left:615.8px;top:729.4px;width:500.0px;height:223.1px;background:#000;"></div>
<svg style="left:667.8px;top:729.4px" width="396" height="223" viewBox="0 0 396 223">
<defs>
<filter id="bl1" x="-20%" y="-20%" width="140%" height="140%"><feGaussianBlur stdDeviation="1.2"/></filter>
<filter id="bl3" x="-50%" y="-50%" width="200%" height="200%"><feGaussianBlur stdDeviation="4"/></filter>
<linearGradient id="sky" x1="0" y1="0" x2="0" y2="1"><stop offset="0" stop-color="#24160a"/><stop offset="0.35" stop-color="#2e200e"/><stop offset="0.6" stop-color="#3c3014"/><stop offset="0.75" stop-color="#2e2610"/><stop offset="1" stop-color="#1e180a"/></linearGradient>
<radialGradient id="orb" cx="0.5" cy="0.5" r="0.5"><stop offset="0" stop-color="#ffc050"/><stop offset="0.35" stop-color="#ff5a18"/><stop offset="0.7" stop-color="#c82008"/><stop offset="1" stop-color="#801008" stop-opacity="0"/></radialGradient>
<radialGradient id="chest" cx="0.5" cy="0.5" r="0.5"><stop offset="0" stop-color="#8a2010" stop-opacity="0.95"/><stop offset="0.6" stop-color="#5a1a0c" stop-opacity="0.7"/><stop offset="1" stop-color="#3a1a10" stop-opacity="0"/></radialGradient>
<radialGradient id="eye" cx="0.5" cy="0.5" r="0.5"><stop offset="0" stop-color="#ffd090"/><stop offset="0.3" stop-color="#ff4a10"/><stop offset="1" stop-color="#c01000" stop-opacity="0"/></radialGradient>
<radialGradient id="glowY" cx="0.5" cy="0.5" r="0.5"><stop offset="0" stop-color="#f0b830"/><stop offset="0.45" stop-color="#b08020" stop-opacity="0.8"/><stop offset="1" stop-color="#604010" stop-opacity="0"/></radialGradient>
</defs>
<rect width="396" height="223" fill="url(#sky)"/>
<ellipse cx="150" cy="35" rx="80" ry="30" fill="#4a2c14" opacity="0.45" filter="url(#bl3)"/>
<ellipse cx="362" cy="122" rx="48" ry="16" fill="url(#glowY)" filter="url(#bl1)"/><path d="M300 134 Q310 126 318 132 Q324 122 332 128 Q340 118 350 126 Q358 120 366 128 Q376 124 386 132 L396 132 L396 145 L300 145 Z" fill="#1e1a0c" filter="url(#bl1)"/>
<g filter="url(#bl1)">
<path d="M0 34 L48 96 L50 150 L0 150 Z" fill="#4a4220"/>
<path d="M0 36 L46 98 L46 102 L0 42 Z" fill="#8a8040"/>
<path d="M0 108 L50 142 L50 150 L0 118 Z" fill="#8c8444"/>
<path d="M6 50 L12 58 L12 100 L6 96 Z M18 64 L24 72 L24 108 L18 104 Z M30 78 L36 86 L36 116 L30 112 Z" fill="#1a160a" opacity="0.8"/>
<path d="M70 80 L86 80 L86 155 L70 155 Z" fill="#4a4020"/>
<path d="M92 100 L106 98 L108 155 L92 155 Z" fill="#3c3418"/>
<path d="M112 120 L128 118 L128 158 L112 158 Z" fill="#3a3218"/>
<path d="M270 141 L320 140 L320 167 L270 168 Z" fill="#6a6444"/><path d="M275 150 H315 M275 158 H315" stroke="#3a3420" stroke-width="2"/>
<path d="M322 145 L396 140 L396 200 L322 205 Z" fill="#44391c"/>
<path d="M0 155 Q150 150 396 160 L396 223 L0 223 Z" fill="#241e0e"/>
<path d="M0 170 Q100 175 180 200 L0 200 Z" fill="#2a2410" opacity="0.5"/>
</g>
<g filter="url(#bl1)">
<path d="M197 25 Q172 27 165 55 Q162 75 158 88 Q132 96 126 125 Q118 170 122 223 L285 223 Q282 170 272 118 Q264 92 240 86 Q236 60 230 45 Q220 25 197 25 Z" fill="#302a18"/>
<path d="M232 40 L252 52 L250 75 L238 80 Z" fill="#1e1a10"/>
<ellipse cx="198" cy="140" rx="50" ry="52" fill="url(#chest)"/>
<ellipse cx="196" cy="82" rx="23" ry="21" fill="#38160c"/>
</g>
<ellipse cx="186" cy="72" rx="11" ry="8" fill="url(#eye)"/>
<ellipse cx="206" cy="72" rx="11" ry="8" fill="url(#eye)"/>
<ellipse cx="196" cy="96" rx="7" ry="6" fill="#6a1a0c" filter="url(#bl1)"/>
<ellipse cx="194" cy="174" rx="36" ry="26" fill="url(#orb)"/>
<ellipse cx="194" cy="168" rx="60" ry="45" fill="#ff3010" opacity="0.12" filter="url(#bl3)"/>
<path d="M148 178 Q158 196 178 196 L168 206 Q146 200 138 182 Z M240 176 Q232 196 212 196 L222 206 Q244 200 250 180 Z" fill="#3a2414" filter="url(#bl1)"/>
<path d="M290 8 L282 22" stroke="#c8c0b0" stroke-width="0.8" opacity="0.7"/>
</svg>
<div class="t" style="left:694.5px;top:749.8px;font-size:13.77px;line-height:13.77px;color:#eef0f2;transform:scaleX(0.841);font-family:"Liberation Mono",monospace;">EL ULTIMO AMANECER</div>
<div class="t" style="left:742.0px;top:778.5px;font-size:6.52px;line-height:6.52px;color:#d8d8d8;transform:scaleX(0.841);font-weight:bold;">PROD BY</div>
<div class="t" style="left:740.5px;top:789.3px;font-size:7.97px;line-height:7.97px;color:#c8c8c8;transform:scaleX(0.949);font-weight:bold;">LYONB9</div>
<div class="t" style="left:1285.0px;top:900.9px;font-size:23.19px;line-height:23.19px;color:rgba(165,180,220,0.6);transform:scaleX(1.056);">Activar Windows</div>
<div class="t" style="left:1285.0px;top:932.3px;font-size:13.77px;line-height:13.77px;color:rgba(165,180,220,0.55);transform:scaleX(1.268);">Ve a Configuración para activar Windows.</div>
</body></html>
